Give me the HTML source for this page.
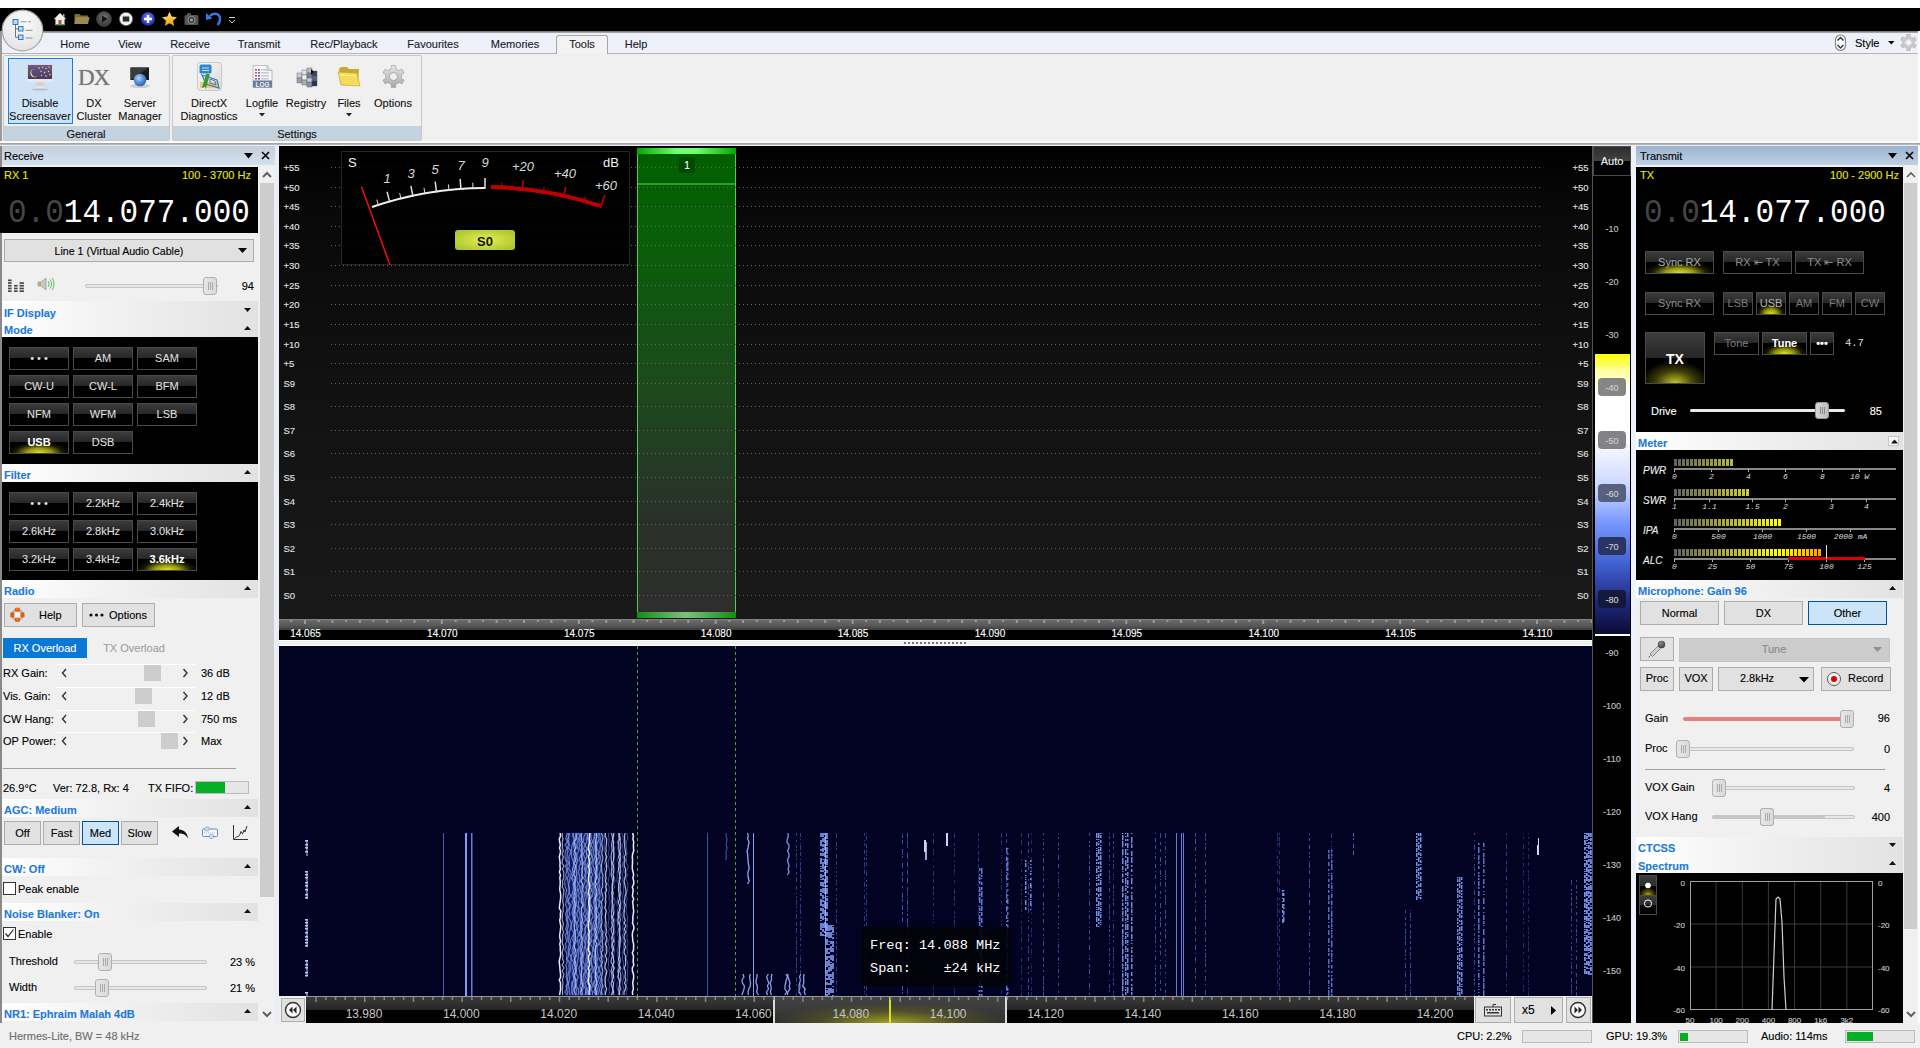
<!DOCTYPE html>
<html><head><meta charset="utf-8"><style>
html,body{margin:0;padding:0;}
body{width:1920px;height:1048px;overflow:hidden;position:relative;background:#f0f0f0;font-family:"Liberation Sans",sans-serif;}
div{position:absolute;}
</style></head><body>
<div style="left:0px;top:0px;width:1920px;height:8px;background:#fff"></div>
<div style="left:0px;top:8px;width:1920px;height:23px;background:#000"></div>
<svg style="position:absolute;left:52px;top:11px;" width="16" height="16" viewBox="0 0 16 16"><path d="M2 8 L8 2 L14 8 L12.5 8 L12.5 14 L3.5 14 L3.5 8 Z" fill="#eee" stroke="#999" stroke-width="0.6"/><rect x="6.5" y="9" width="3" height="5" fill="#c8501e"/><rect x="11" y="3" width="1.5" height="3" fill="#aaa"/><path d="M4 13.5 h8" stroke="#4a4" stroke-width="1"/></svg>
<svg style="position:absolute;left:74px;top:12px;" width="16" height="13" viewBox="0 0 16 13"><path d="M0.5 2 h5 l1.5 1.5 h7 v8.5 h-13.5z" fill="#7a6a3a"/><path d="M1.5 5 h14 l-1.5 7 h-13.5z" fill="#9c8a50"/></svg>
<svg style="position:absolute;left:96px;top:11px;" width="16" height="16" viewBox="0 0 16 16"><defs><radialGradient id="gp" cx="0.5" cy="0.4" r="0.6"><stop offset="0" stop-color="#777"/><stop offset="1" stop-color="#333"/></radialGradient></defs><circle cx="8" cy="8" r="7.3" fill="url(#gp)" stroke="#555" stroke-width="0.8"/><path d="M6 4.5 L11.5 8 L6 11.5z" fill="#111"/></svg>
<svg style="position:absolute;left:118px;top:11px;" width="16" height="16" viewBox="0 0 16 16"><circle cx="8" cy="8" r="7.2" fill="#555"/><circle cx="8" cy="8" r="6.2" fill="#fafafa"/><circle cx="8" cy="8" r="4.6" fill="#e8e8e8"/><rect x="4.8" y="5.5" width="6.4" height="5" fill="#2a2a2a"/></svg>
<svg style="position:absolute;left:140px;top:11px;" width="16" height="16" viewBox="0 0 16 16"><defs><radialGradient id="gb" cx="0.5" cy="0.35" r="0.65"><stop offset="0" stop-color="#6a7cff"/><stop offset="1" stop-color="#1a2aa8"/></radialGradient></defs><circle cx="8" cy="8" r="6.8" fill="url(#gb)"/><path d="M8 4 v8 M4 8 h8" stroke="#fff" stroke-width="2.4"/></svg>
<svg style="position:absolute;left:161px;top:11px;" width="17" height="16" viewBox="0 0 17 16"><defs><linearGradient id="gs" x1="0" y1="0" x2="0" y2="1"><stop offset="0" stop-color="#ffe680"/><stop offset="1" stop-color="#f0a000"/></linearGradient></defs><path d="M8.5 0.8 L10.7 5.6 L16 6.2 L12 9.7 L13.2 15 L8.5 12.3 L3.8 15 L5 9.7 L1 6.2 L6.3 5.6z" fill="url(#gs)"/></svg>
<svg style="position:absolute;left:184px;top:12px;" width="16" height="14" viewBox="0 0 16 14"><rect x="0.5" y="3" width="14" height="10" rx="1.5" fill="#555"/><rect x="3" y="1.2" width="4" height="2.5" fill="#555"/><circle cx="7.5" cy="8" r="3.6" fill="#333" stroke="#999" stroke-width="1"/><circle cx="7.5" cy="8" r="1.6" fill="#8ab"/></svg>
<svg style="position:absolute;left:205px;top:10px;" width="18" height="18" viewBox="0 0 18 18"><path d="M5 6 C8 2.5 15 3 15 9 C15 12 13.5 14 12.5 15" fill="none" stroke="#3a78e8" stroke-width="2.4"/><path d="M1 3 L1 10 L7.5 8.5z" fill="#3a78e8"/></svg>
<svg style="position:absolute;left:228px;top:16px;" width="8" height="8" viewBox="0 0 8 8"><path d="M1 1.5 h6" stroke="#ccc" stroke-width="1"/><path d="M1 4 L4 7 L7 4" fill="none" stroke="#ccc" stroke-width="1"/></svg>
<div style="left:0px;top:31px;width:1920px;height:23px;background:linear-gradient(#eceef8,#f0f2fb);"></div>
<div style="left:0px;top:31px;width:157px;height:2px;background:linear-gradient(#707070,#b0b0b0)"></div>
<div style="left:157px;top:31px;width:1761px;height:2px;background:linear-gradient(#6a6a6a,#b8b8b8)"></div>
<div style="left:0px;top:53px;width:1920px;height:1px;background:#b4b4b4"></div>
<div style="left:0px;top:31px;width:2px;height:113px;background:#9a9a9a"></div>
<svg style="position:absolute;left:1px;top:9px;" width="43" height="43" viewBox="0 0 43 43"><defs><radialGradient id="gc" cx="0.5" cy="0.3" r="0.7"><stop offset="0" stop-color="#fbfbfb"/><stop offset="1" stop-color="#e4e4e4"/></radialGradient></defs><circle cx="21.5" cy="21.5" r="20.3" fill="url(#gc)" stroke="#a8a8a8" stroke-width="1.2"/><g stroke="#2a7ad0" fill="#bcd8f4" stroke-width="1"><rect x="12" y="10.5" width="5" height="5"/><rect x="17.5" y="17.5" width="4.5" height="4.5"/><rect x="17.5" y="26" width="4.5" height="4.5"/></g><path d="M14.5 15.5 V28.3 H17.5 M14.5 19.8 H17.5" fill="none" stroke="#555" stroke-width="0.8"/><path d="M19.5 12.8 h6 M27 12.8 h3 M24.5 21.3 h7 M24.5 29 h7" stroke="#777" stroke-width="0.8"/></svg>
<div style="left:556px;top:35px;width:52px;height:19px;background:#f3f3f3;border:1px solid #a6a6a6;border-bottom:none;border-radius:3px 3px 0 0;box-sizing:border-box"></div>
<div style="left:557px;top:53px;width:50px;height:1px;background:#f3f3f3"></div>
<div style="left:25.0px;top:38px;width:100px;text-align:center;font-size:11px;line-height:13px;color:#1a1a2a;font-weight:400;font-family:'Liberation Sans';white-space:nowrap;-webkit-text-stroke:0.12px;">Home</div>
<div style="left:80.0px;top:38px;width:100px;text-align:center;font-size:11px;line-height:13px;color:#1a1a2a;font-weight:400;font-family:'Liberation Sans';white-space:nowrap;-webkit-text-stroke:0.12px;">View</div>
<div style="left:140.0px;top:38px;width:100px;text-align:center;font-size:11px;line-height:13px;color:#1a1a2a;font-weight:400;font-family:'Liberation Sans';white-space:nowrap;-webkit-text-stroke:0.12px;">Receive</div>
<div style="left:209.0px;top:38px;width:100px;text-align:center;font-size:11px;line-height:13px;color:#1a1a2a;font-weight:400;font-family:'Liberation Sans';white-space:nowrap;-webkit-text-stroke:0.12px;">Transmit</div>
<div style="left:294.0px;top:38px;width:100px;text-align:center;font-size:11px;line-height:13px;color:#1a1a2a;font-weight:400;font-family:'Liberation Sans';white-space:nowrap;-webkit-text-stroke:0.12px;">Rec/Playback</div>
<div style="left:383.0px;top:38px;width:100px;text-align:center;font-size:11px;line-height:13px;color:#1a1a2a;font-weight:400;font-family:'Liberation Sans';white-space:nowrap;-webkit-text-stroke:0.12px;">Favourites</div>
<div style="left:465.0px;top:38px;width:100px;text-align:center;font-size:11px;line-height:13px;color:#1a1a2a;font-weight:400;font-family:'Liberation Sans';white-space:nowrap;-webkit-text-stroke:0.12px;">Memories</div>
<div style="left:532.0px;top:38px;width:100px;text-align:center;font-size:11px;line-height:13px;color:#1a1a2a;font-weight:400;font-family:'Liberation Sans';white-space:nowrap;-webkit-text-stroke:0.12px;">Tools</div>
<div style="left:586.0px;top:38px;width:100px;text-align:center;font-size:11px;line-height:13px;color:#1a1a2a;font-weight:400;font-family:'Liberation Sans';white-space:nowrap;-webkit-text-stroke:0.12px;">Help</div>
<svg style="position:absolute;left:1834px;top:34px;" width="13" height="18" viewBox="0 0 13 18"><rect x="1.5" y="1" width="10" height="15.5" rx="5" fill="#fbfbfb" stroke="#8a8a8a" stroke-width="1.2"/><path d="M3.5 6.5 L6.5 3.5 L9.5 6.5 M3.5 11 L6.5 14 L9.5 11" fill="none" stroke="#3a3a3a" stroke-width="1.5"/></svg>
<div style="left:1855px;top:37px;font-size:11px;line-height:13px;color:#000;font-weight:400;font-family:'Liberation Sans';white-space:nowrap;-webkit-text-stroke:0.12px;">Style</div>
<svg style="position:absolute;left:1888px;top:41px;" width="8" height="5" viewBox="0 0 8 5"><path d="M0 0 h6.5 l-3.25 3.5z" fill="#000"/></svg>
<svg style="position:absolute;left:1900px;top:34px;" width="17" height="17" viewBox="0 0 17 17"><polygon points="6.79,2.96 6.71,0.50 10.29,0.50 10.21,2.96 12.44,4.25 14.54,2.95 16.32,6.05 14.16,7.21 14.16,9.79 16.32,10.95 14.54,14.05 12.44,12.75 10.21,14.04 10.29,16.50 6.71,16.50 6.79,14.04 4.56,12.75 2.46,14.05 0.68,10.95 2.84,9.79 2.84,7.21 0.68,6.05 2.46,2.95 4.56,4.25" fill="#c8c8c8" stroke="#b0b0b0" stroke-width="0.6" stroke-linejoin="round"/><circle cx="8.5" cy="8.5" r="4.5" fill="#cfcfcf"/><path d="M8.5 5.2 L11.8 8.5 L8.5 11.8 L5.2 8.5z" fill="#f4f6fb"/></svg>
<div style="left:0px;top:54px;width:1918px;height:88px;background:#f0f0f0"></div>
<div style="left:0px;top:54px;width:2px;height:90px;background:#9a9a9a"></div>
<div style="left:1918px;top:31px;width:2px;height:113px;background:#fff"></div>
<div style="left:3px;top:55px;width:167px;height:86px;border:1px solid #c8c8c8;border-radius:2px;box-sizing:border-box;background:#f0f0f0"></div>
<div style="left:4px;top:126px;width:165px;height:14px;background:#c5d3e1"></div>
<div style="left:172px;top:55px;width:250px;height:86px;border:1px solid #c8c8c8;border-radius:2px;box-sizing:border-box;background:#f0f0f0"></div>
<div style="left:173px;top:126px;width:248px;height:14px;background:#c5d3e1"></div>
<div style="left:36.0px;top:128px;width:100px;text-align:center;font-size:11px;line-height:13px;color:#111;font-weight:400;font-family:'Liberation Sans';white-space:nowrap;-webkit-text-stroke:0.12px;">General</div>
<div style="left:247.0px;top:128px;width:100px;text-align:center;font-size:11px;line-height:13px;color:#111;font-weight:400;font-family:'Liberation Sans';white-space:nowrap;-webkit-text-stroke:0.12px;">Settings</div>
<div style="left:8px;top:58px;width:65px;height:66px;background:#cfe3f6;border:1px solid #1a7fe0;box-sizing:border-box"></div>
<div style="left:-10.0px;top:97px;width:100px;text-align:center;font-size:11px;line-height:13px;color:#111;font-weight:400;font-family:'Liberation Sans';white-space:nowrap;-webkit-text-stroke:0.12px;">Disable</div>
<div style="left:-10.0px;top:110px;width:100px;text-align:center;font-size:11px;line-height:13px;color:#111;font-weight:400;font-family:'Liberation Sans';white-space:nowrap;-webkit-text-stroke:0.12px;">Screensaver</div>
<div style="left:44.0px;top:97px;width:100px;text-align:center;font-size:11px;line-height:13px;color:#111;font-weight:400;font-family:'Liberation Sans';white-space:nowrap;-webkit-text-stroke:0.12px;">DX</div>
<div style="left:44.0px;top:110px;width:100px;text-align:center;font-size:11px;line-height:13px;color:#111;font-weight:400;font-family:'Liberation Sans';white-space:nowrap;-webkit-text-stroke:0.12px;">Cluster</div>
<div style="left:90.0px;top:97px;width:100px;text-align:center;font-size:11px;line-height:13px;color:#111;font-weight:400;font-family:'Liberation Sans';white-space:nowrap;-webkit-text-stroke:0.12px;">Server</div>
<div style="left:90.0px;top:110px;width:100px;text-align:center;font-size:11px;line-height:13px;color:#111;font-weight:400;font-family:'Liberation Sans';white-space:nowrap;-webkit-text-stroke:0.12px;">Manager</div>
<div style="left:159.0px;top:97px;width:100px;text-align:center;font-size:11px;line-height:13px;color:#111;font-weight:400;font-family:'Liberation Sans';white-space:nowrap;-webkit-text-stroke:0.12px;">DirectX</div>
<div style="left:159.0px;top:110px;width:100px;text-align:center;font-size:11px;line-height:13px;color:#111;font-weight:400;font-family:'Liberation Sans';white-space:nowrap;-webkit-text-stroke:0.12px;">Diagnostics</div>
<div style="left:212.0px;top:97px;width:100px;text-align:center;font-size:11px;line-height:13px;color:#111;font-weight:400;font-family:'Liberation Sans';white-space:nowrap;-webkit-text-stroke:0.12px;">Logfile</div>
<div style="left:256.0px;top:97px;width:100px;text-align:center;font-size:11px;line-height:13px;color:#111;font-weight:400;font-family:'Liberation Sans';white-space:nowrap;-webkit-text-stroke:0.12px;">Registry</div>
<div style="left:299.0px;top:97px;width:100px;text-align:center;font-size:11px;line-height:13px;color:#111;font-weight:400;font-family:'Liberation Sans';white-space:nowrap;-webkit-text-stroke:0.12px;">Files</div>
<div style="left:343.0px;top:97px;width:100px;text-align:center;font-size:11px;line-height:13px;color:#111;font-weight:400;font-family:'Liberation Sans';white-space:nowrap;-webkit-text-stroke:0.12px;">Options</div>
<svg style="position:absolute;left:259px;top:113px;" width="6" height="4" viewBox="0 0 6 4"><path d="M0 0h6l-3 3.5z" fill="#222"/></svg>
<svg style="position:absolute;left:346px;top:113px;" width="6" height="4" viewBox="0 0 6 4"><path d="M0 0h6l-3 3.5z" fill="#222"/></svg>
<svg style="position:absolute;left:26px;top:63px;" width="28" height="28" viewBox="0 0 28 28"><defs><linearGradient id="gscr" x1="0" y1="0" x2="0" y2="1"><stop offset="0" stop-color="#6a5a8a"/><stop offset="1" stop-color="#4a3a68"/></linearGradient></defs><rect x="1" y="1" width="26" height="17" fill="#d8d8d8"/><rect x="2" y="2" width="24" height="14" fill="url(#gscr)"/><rect x="1" y="16" width="26" height="3" fill="#e8e8e8"/><path d="M11 19 h6 l1 4 h-8z" fill="#d0d0d0"/><ellipse cx="14" cy="24.5" rx="6" ry="2.2" fill="#e4e4e4" stroke="#c8c8c8" stroke-width=".5"/><ellipse cx="14" cy="26.5" rx="9" ry="1.2" fill="#000" opacity=".12"/><path d="M7.5 6 A4.2 4.2 0 1 0 11.5 13 A3.4 3.4 0 1 1 7.5 6z" fill="#e8e060"/><g fill="#e8e060"><circle cx="13" cy="5" r=".8"/><circle cx="16.5" cy="4.2" r=".7"/><circle cx="20" cy="5.5" r=".8"/><circle cx="23" cy="4" r=".7"/><circle cx="15" cy="8.5" r=".7"/><circle cx="18.5" cy="9.5" r=".8"/><circle cx="22.5" cy="8.5" r=".7"/><circle cx="15.5" cy="12.5" r=".7"/><circle cx="20" cy="13" r=".8"/><circle cx="24" cy="11.5" r=".7"/></g></svg>
<div style="left:78px;top:65px;font-size:23px;line-height:26px;color:#777;font-weight:400;font-family:'Liberation Serif';white-space:nowrap;letter-spacing:-1px;text-shadow:0 0 1px #aaa;">DX</div>
<svg style="position:absolute;left:128px;top:66px;" width="24" height="24" viewBox="0 0 24 24"><ellipse cx="12" cy="20" rx="10" ry="2" fill="#000" opacity=".15"/><rect x="2.5" y="1.5" width="18.5" height="12.5" fill="#1a1a1a"/><path d="M2.5 1.5 h18.5 l-18.5 12.5z" fill="#3a3a3a"/><defs><radialGradient id="gglobe" cx="0.4" cy="0.35" r="0.7"><stop offset="0" stop-color="#b8d8f8"/><stop offset="0.5" stop-color="#5a90d8"/><stop offset="1" stop-color="#2a5aa8"/></radialGradient></defs><circle cx="12" cy="14" r="6.3" fill="url(#gglobe)"/></svg>
<svg style="position:absolute;left:197px;top:62px;" width="25" height="29" viewBox="0 0 25 29"><defs><linearGradient id="gdx" x1="0" y1="0" x2="1" y2="1"><stop offset="0" stop-color="#f8f8f8"/><stop offset="1" stop-color="#dcdcdc"/></linearGradient></defs><rect x="0.5" y="0.5" width="24" height="28" rx="3" fill="url(#gdx)" stroke="#c8c8c8"/><path d="M3 20 h19 v6 h-19z" fill="#f4c878"/><rect x="2.5" y="2.5" width="12" height="9" rx="1.5" fill="#2f88cc"/><path d="M5 6 h7 M5 8.5 h7" stroke="#cfe4f4" stroke-width="1"/><path d="M5 13 L20 18 L22 26 L9 22z" fill="none" stroke="#3a78c0" stroke-width="1.2"/><path d="M13 17 L18 19 L19 23 L13 21z" fill="none" stroke="#3a78c0" stroke-width="1"/><path d="M7 26 L11 12" stroke="#3a9a3a" stroke-width="4"/><path d="M6 28 L7 25 L8.5 25.5z" fill="#fff"/></svg>
<svg style="position:absolute;left:252px;top:65px;" width="21" height="23" viewBox="0 0 21 23"><path d="M1 0.5 h14 l5 5 v17 h-19z" fill="#f6f6f6" stroke="#b0b0b0" stroke-width=".8"/><path d="M15 0.5 v5 h5" fill="#ddd" stroke="#b0b0b0" stroke-width=".8"/><rect x="3" y="4" width="2" height="1.6" fill="#d05050"/><rect x="6" y="4" width="2" height="1.6" fill="#4a6ad0"/><rect x="9" y="4" width="8" height="1.6" fill="#c8ccd8"/><rect x="3" y="7" width="2" height="1.6" fill="#d05050"/><rect x="6" y="7" width="2" height="1.6" fill="#4a6ad0"/><rect x="9" y="7" width="8" height="1.6" fill="#c8ccd8"/><rect x="3" y="10" width="2" height="1.6" fill="#d05050"/><rect x="6" y="10" width="2" height="1.6" fill="#4a6ad0"/><rect x="9" y="10" width="8" height="1.6" fill="#c8ccd8"/><rect x="3" y="13" width="2" height="1.6" fill="#d05050"/><rect x="6" y="13" width="2" height="1.6" fill="#4a6ad0"/><rect x="9" y="13" width="8" height="1.6" fill="#c8ccd8"/><rect x="1" y="15.5" width="19" height="7" fill="#6a7c96"/><text x="10.5" y="21.5" font-size="6.5" fill="#eef" text-anchor="middle" font-family="Liberation Sans" font-weight="700">LOG</text></svg>
<svg style="position:absolute;left:295px;top:65px;" width="23" height="23" viewBox="0 0 23 23"><rect x="2" y="8" width="5" height="5" fill="#c8ccd4" stroke="#555" stroke-width="0.4"/><rect x="7" y="5" width="5" height="5" fill="#dfe2e8" stroke="#555" stroke-width="0.4"/><rect x="12" y="3" width="5" height="5" fill="#b8bcc8" stroke="#555" stroke-width="0.4"/><rect x="2" y="13" width="5" height="5" fill="#9aa0b0" stroke="#555" stroke-width="0.4"/><rect x="7" y="10" width="5" height="5" fill="#eef0f4" stroke="#555" stroke-width="0.4"/><rect x="12" y="8" width="5" height="5" fill="#7a8498" stroke="#555" stroke-width="0.4"/><rect x="17" y="6" width="5" height="5" fill="#3a4660" stroke="#555" stroke-width="0.4"/><rect x="7" y="15" width="5" height="5" fill="#a8aebc" stroke="#555" stroke-width="0.4"/><rect x="12" y="13" width="5" height="5" fill="#c8ccd8" stroke="#555" stroke-width="0.4"/><rect x="17" y="11" width="5" height="5" fill="#5a6680" stroke="#555" stroke-width="0.4"/><rect x="12" y="17" width="5" height="5" fill="#8a92a6" stroke="#555" stroke-width="0.4"/><rect x="17" y="16" width="5" height="5" fill="#2a3450" stroke="#555" stroke-width="0.4"/><path d="M16 4 l3 3 -3 3z" fill="#111"/></svg>
<svg style="position:absolute;left:337px;top:66px;" width="24" height="21" viewBox="0 0 24 21"><path d="M2 3 l2-2 h6 l2 2 h10 l-1 14 h-18z" fill="#c8a830"/><path d="M1 6 l19 1 l3 13 l-19 -1z" fill="#f4dc58" stroke="#c8a020" stroke-width=".6"/><path d="M3 9 l16 0.8" stroke="#fff3a0" stroke-width="1"/></svg>
<svg style="position:absolute;left:382px;top:65px;" width="23" height="23" viewBox="0 0 23 23"><defs><linearGradient id="gg" x1="0" y1="0" x2="0" y2="1"><stop offset="0" stop-color="#e4e4e4"/><stop offset="1" stop-color="#a8a8a8"/></linearGradient></defs><polygon points="9.23,3.62 9.27,0.52 13.73,0.52 13.77,3.62 17.19,5.60 19.89,4.08 22.12,7.94 19.46,9.52 19.46,13.48 22.12,15.06 19.89,18.92 17.19,17.40 13.77,19.38 13.73,22.48 9.27,22.48 9.23,19.38 5.81,17.40 3.11,18.92 0.88,15.06 3.54,13.48 3.54,9.52 0.88,7.94 3.11,4.08 5.81,5.60" fill="url(#gg)" stroke="#9a9a9a" stroke-width="0.6" stroke-linejoin="round"/><circle cx="11.5" cy="11.5" r="4" fill="#f0f0f0" stroke="#999" stroke-width="0.8"/></svg>
<div style="left:0px;top:141px;width:1918px;height:2px;background:#fbfbfb"></div>
<div style="left:0px;top:143px;width:1920px;height:2px;background:linear-gradient(#9c9c9c,#c0c0c0)"></div>
<div style="left:0px;top:145px;width:1920px;height:1px;background:#e8ecf7"></div>
<div style="left:0px;top:146px;width:279px;height:877px;background:#f0f0f0"></div>
<div style="left:275px;top:146px;width:4px;height:877px;background:#e9edf8"></div>
<div style="left:0px;top:146px;width:2px;height:877px;background:#8a8a8a"></div>
<div style="left:2px;top:146px;width:273px;height:19px;background:linear-gradient(#c4cfdb,#d3e0ef)"></div>
<div style="left:4px;top:150px;font-size:11px;line-height:13px;color:#000;font-weight:400;font-family:'Liberation Sans';white-space:nowrap;-webkit-text-stroke:0.12px;">Receive</div>
<svg style="position:absolute;left:244px;top:153px;" width="9" height="6" viewBox="0 0 9 6"><path d="M0 0h9l-4.5 5.5z" fill="#000"/></svg>
<svg style="position:absolute;left:261px;top:151px;" width="9" height="9" viewBox="0 0 9 9"><path d="M1 1L8 8M8 1L1 8" stroke="#000" stroke-width="1.6"/></svg>
<div style="left:0px;top:167px;width:258px;height:66px;background:#000"></div>
<div style="left:4px;top:169px;font-size:11px;line-height:13px;color:#e6e600;font-weight:400;font-family:'Liberation Sans';white-space:nowrap;-webkit-text-stroke:0.12px;">RX 1</div>
<div style="left:-49px;top:169px;width:300px;text-align:right;font-size:11px;line-height:13px;color:#e6e600;font-weight:400;font-family:'Liberation Sans';white-space:nowrap;-webkit-text-stroke:0.12px;">100 - 3700 Hz</div>
<div style="left:8px;top:196px;font-size:31px;line-height:36px;color:#fff;font-weight:400;font-family:'Liberation Mono';white-space:nowrap;transform:scaleY(1.08);transform-origin:0 29px;"><span style="color:#454545">0.0</span>14.077.000</div>
<div style="left:258px;top:167px;width:17px;height:856px;background:#f0f0f0"></div>
<svg style="position:absolute;left:262px;top:171px;" width="10" height="7" viewBox="0 0 10 7"><path d="M1 6 L5 2 L9 6" fill="none" stroke="#606060" stroke-width="2"/></svg>
<div style="left:260px;top:183px;width:14px;height:714px;background:#cdcdcd"></div>
<svg style="position:absolute;left:262px;top:1011px;" width="10" height="7" viewBox="0 0 10 7"><path d="M1 1 L5 5 L9 1" fill="none" stroke="#606060" stroke-width="2"/></svg>
<div style="left:4px;top:239px;width:250px;height:23px;background:#e1e1e1;border:1px solid #adadad;box-sizing:border-box"></div>
<div style="left:-1.0px;top:245px;width:240px;text-align:center;font-size:10.6px;line-height:12px;color:#000;font-weight:400;font-family:'Liberation Sans';white-space:nowrap;-webkit-text-stroke:0.12px;">Line 1 (Virtual Audio Cable)</div>
<svg style="position:absolute;left:238px;top:248px;" width="9" height="6" viewBox="0 0 9 6"><path d="M0 0h9l-4.5 5z" fill="#000"/></svg>
<svg style="position:absolute;left:7px;top:279px;" width="18" height="14" viewBox="0 0 18 14"><rect x="1" y="0.5" width="3.6" height="1.7" fill="#4a4a4a"/><rect x="1" y="3.2" width="3.6" height="1.7" fill="#4a4a4a"/><rect x="1" y="5.9" width="3.6" height="1.7" fill="#4a4a4a"/><rect x="1" y="8.6" width="3.6" height="1.7" fill="#4a4a4a"/><rect x="1" y="11.3" width="3.6" height="1.7" fill="#4a4a4a"/><rect x="7" y="5.9" width="3.6" height="1.7" fill="#4a4a4a"/><rect x="7" y="8.6" width="3.6" height="1.7" fill="#4a4a4a"/><rect x="7" y="11.3" width="3.6" height="1.7" fill="#4a4a4a"/><rect x="12.5" y="3.2" width="4.4" height="1.7" fill="#4a4a4a"/><rect x="12.5" y="5.9" width="4.4" height="1.7" fill="#4a4a4a"/><rect x="12.5" y="8.6" width="4.4" height="1.7" fill="#4a4a4a"/><rect x="12.5" y="11.3" width="4.4" height="1.7" fill="#4a4a4a"/></svg>
<svg style="position:absolute;left:37px;top:276px;" width="18" height="16" viewBox="0 0 18 16"><path d="M1 6h3l5-4v12l-5-4H1z" fill="#c8c8c8" stroke="#888" stroke-width=".6"/><path d="M2 6.5h2v3H2z" fill="#d4a020"/><path d="M11 5c1.2 1.5 1.2 4.5 0 6M13 3.5c2 2.3 2 6.7 0 9M15 2c2.6 3 2.6 9 0 12" fill="none" stroke="#5ac05a" stroke-width="1"/></svg>
<div style="left:85px;top:284px;width:133px;height:4px;background:#e7e7e7;border:1px solid #c4c4c4;border-radius:2px;box-sizing:border-box"></div>
<div style="left:203px;top:277px;width:14px;height:18px;background:linear-gradient(90deg,#e6e6e6,#dadada);border:1px solid #b0b0b0;border-radius:3px;box-sizing:border-box"><div style="left:4px;top:4px;width:1px;height:8px;background:#aaa"></div><div style="left:6px;top:4px;width:1px;height:8px;background:#aaa"></div><div style="left:8px;top:4px;width:1px;height:8px;background:#aaa"></div></div>
<div style="left:-46px;top:280px;width:300px;text-align:right;font-size:11px;line-height:13px;color:#000;font-weight:400;font-family:'Liberation Sans';white-space:nowrap;-webkit-text-stroke:0.12px;">94</div>
<div style="left:2px;top:301px;width:256px;height:19px;background:linear-gradient(90deg,#ffffff 0%,#f2f2f2 40%,#e2e2e2 100%)"></div>
<div style="left:4px;top:307px;font-size:11px;line-height:13px;color:#1e7ad8;font-weight:700;font-family:'Liberation Sans';white-space:nowrap;-webkit-text-stroke:0.12px;">IF Display</div>
<svg style="position:absolute;left:244px;top:307.5px;" width="7" height="5" viewBox="0 0 7 5"><path d="M0 0 L3.5 4 L7 0z" fill="#111"/></svg>
<div style="left:2px;top:320px;width:256px;height:17px;background:linear-gradient(90deg,#ffffff 0%,#f2f2f2 40%,#e2e2e2 100%)"></div>
<div style="left:4px;top:324px;font-size:11px;line-height:13px;color:#1e7ad8;font-weight:700;font-family:'Liberation Sans';white-space:nowrap;-webkit-text-stroke:0.12px;">Mode</div>
<svg style="position:absolute;left:244px;top:325.5px;" width="7" height="5" viewBox="0 0 7 5"><path d="M0 4 L3.5 0 L7 4z" fill="#111"/></svg>
<div style="left:2px;top:337px;width:256px;height:127px;background:#000"></div>
<div style="left:9px;top:347px;width:60px;height:23px;background:#000;border:1px solid #4a4a4a;box-sizing:border-box;overflow:hidden"><div style="left:0;top:0;width:58px;height:10px;background:linear-gradient(#3c3c3c,#262626)"></div></div>
<div style="left:9.0px;top:351.5px;width:60px;text-align:center;font-size:11px;line-height:13px;color:#e0e0e0;font-weight:400;font-family:'Liberation Sans';white-space:nowrap;-webkit-text-stroke:0.12px;-webkit-text-stroke:0.05px;">• • •</div>
<div style="left:73px;top:347px;width:60px;height:23px;background:#000;border:1px solid #4a4a4a;box-sizing:border-box;overflow:hidden"><div style="left:0;top:0;width:58px;height:10px;background:linear-gradient(#3c3c3c,#262626)"></div></div>
<div style="left:73.0px;top:351.5px;width:60px;text-align:center;font-size:11px;line-height:13px;color:#e0e0e0;font-weight:400;font-family:'Liberation Sans';white-space:nowrap;-webkit-text-stroke:0.12px;-webkit-text-stroke:0.05px;">AM</div>
<div style="left:137px;top:347px;width:60px;height:23px;background:#000;border:1px solid #4a4a4a;box-sizing:border-box;overflow:hidden"><div style="left:0;top:0;width:58px;height:10px;background:linear-gradient(#3c3c3c,#262626)"></div></div>
<div style="left:137.0px;top:351.5px;width:60px;text-align:center;font-size:11px;line-height:13px;color:#e0e0e0;font-weight:400;font-family:'Liberation Sans';white-space:nowrap;-webkit-text-stroke:0.12px;-webkit-text-stroke:0.05px;">SAM</div>
<div style="left:9px;top:375px;width:60px;height:23px;background:#000;border:1px solid #4a4a4a;box-sizing:border-box;overflow:hidden"><div style="left:0;top:0;width:58px;height:10px;background:linear-gradient(#3c3c3c,#262626)"></div></div>
<div style="left:9.0px;top:379.5px;width:60px;text-align:center;font-size:11px;line-height:13px;color:#e0e0e0;font-weight:400;font-family:'Liberation Sans';white-space:nowrap;-webkit-text-stroke:0.12px;-webkit-text-stroke:0.05px;">CW-U</div>
<div style="left:73px;top:375px;width:60px;height:23px;background:#000;border:1px solid #4a4a4a;box-sizing:border-box;overflow:hidden"><div style="left:0;top:0;width:58px;height:10px;background:linear-gradient(#3c3c3c,#262626)"></div></div>
<div style="left:73.0px;top:379.5px;width:60px;text-align:center;font-size:11px;line-height:13px;color:#e0e0e0;font-weight:400;font-family:'Liberation Sans';white-space:nowrap;-webkit-text-stroke:0.12px;-webkit-text-stroke:0.05px;">CW-L</div>
<div style="left:137px;top:375px;width:60px;height:23px;background:#000;border:1px solid #4a4a4a;box-sizing:border-box;overflow:hidden"><div style="left:0;top:0;width:58px;height:10px;background:linear-gradient(#3c3c3c,#262626)"></div></div>
<div style="left:137.0px;top:379.5px;width:60px;text-align:center;font-size:11px;line-height:13px;color:#e0e0e0;font-weight:400;font-family:'Liberation Sans';white-space:nowrap;-webkit-text-stroke:0.12px;-webkit-text-stroke:0.05px;">BFM</div>
<div style="left:9px;top:403px;width:60px;height:23px;background:#000;border:1px solid #4a4a4a;box-sizing:border-box;overflow:hidden"><div style="left:0;top:0;width:58px;height:10px;background:linear-gradient(#3c3c3c,#262626)"></div></div>
<div style="left:9.0px;top:407.5px;width:60px;text-align:center;font-size:11px;line-height:13px;color:#e0e0e0;font-weight:400;font-family:'Liberation Sans';white-space:nowrap;-webkit-text-stroke:0.12px;-webkit-text-stroke:0.05px;">NFM</div>
<div style="left:73px;top:403px;width:60px;height:23px;background:#000;border:1px solid #4a4a4a;box-sizing:border-box;overflow:hidden"><div style="left:0;top:0;width:58px;height:10px;background:linear-gradient(#3c3c3c,#262626)"></div></div>
<div style="left:73.0px;top:407.5px;width:60px;text-align:center;font-size:11px;line-height:13px;color:#e0e0e0;font-weight:400;font-family:'Liberation Sans';white-space:nowrap;-webkit-text-stroke:0.12px;-webkit-text-stroke:0.05px;">WFM</div>
<div style="left:137px;top:403px;width:60px;height:23px;background:#000;border:1px solid #4a4a4a;box-sizing:border-box;overflow:hidden"><div style="left:0;top:0;width:58px;height:10px;background:linear-gradient(#3c3c3c,#262626)"></div></div>
<div style="left:137.0px;top:407.5px;width:60px;text-align:center;font-size:11px;line-height:13px;color:#e0e0e0;font-weight:400;font-family:'Liberation Sans';white-space:nowrap;-webkit-text-stroke:0.12px;-webkit-text-stroke:0.05px;">LSB</div>
<div style="left:9px;top:431px;width:60px;height:23px;background:#000;border:1px solid #4a4a4a;box-sizing:border-box;overflow:hidden"><div style="left:0;top:0;width:58px;height:10px;background:linear-gradient(#3c3c3c,#262626)"></div><div style="left:0;top:0;width:58px;height:21px;background:radial-gradient(ellipse 31.200000000000003px 11.5px at 50% 100%, rgba(225,225,40,1) 0%, rgba(190,190,25,0.8) 40%, rgba(90,90,0,0.3) 75%, rgba(0,0,0,0) 100%)"></div></div>
<div style="left:9.0px;top:435.5px;width:60px;text-align:center;font-size:11px;line-height:13px;color:#fff;font-weight:700;font-family:'Liberation Sans';white-space:nowrap;-webkit-text-stroke:0.12px;-webkit-text-stroke:0.05px;">USB</div>
<div style="left:73px;top:431px;width:60px;height:23px;background:#000;border:1px solid #4a4a4a;box-sizing:border-box;overflow:hidden"><div style="left:0;top:0;width:58px;height:10px;background:linear-gradient(#3c3c3c,#262626)"></div></div>
<div style="left:73.0px;top:435.5px;width:60px;text-align:center;font-size:11px;line-height:13px;color:#e0e0e0;font-weight:400;font-family:'Liberation Sans';white-space:nowrap;-webkit-text-stroke:0.12px;-webkit-text-stroke:0.05px;">DSB</div>
<div style="left:2px;top:464px;width:256px;height:18px;background:linear-gradient(90deg,#ffffff 0%,#f2f2f2 40%,#e2e2e2 100%)"></div>
<div style="left:4px;top:469px;font-size:11px;line-height:13px;color:#1e7ad8;font-weight:700;font-family:'Liberation Sans';white-space:nowrap;-webkit-text-stroke:0.12px;">Filter</div>
<svg style="position:absolute;left:244px;top:470.0px;" width="7" height="5" viewBox="0 0 7 5"><path d="M0 4 L3.5 0 L7 4z" fill="#111"/></svg>
<div style="left:2px;top:482px;width:256px;height:98px;background:#000"></div>
<div style="left:9px;top:492px;width:60px;height:23px;background:#000;border:1px solid #4a4a4a;box-sizing:border-box;overflow:hidden"><div style="left:0;top:0;width:58px;height:10px;background:linear-gradient(#3c3c3c,#262626)"></div></div>
<div style="left:9.0px;top:496.5px;width:60px;text-align:center;font-size:11px;line-height:13px;color:#e0e0e0;font-weight:400;font-family:'Liberation Sans';white-space:nowrap;-webkit-text-stroke:0.12px;-webkit-text-stroke:0.05px;">• • •</div>
<div style="left:73px;top:492px;width:60px;height:23px;background:#000;border:1px solid #4a4a4a;box-sizing:border-box;overflow:hidden"><div style="left:0;top:0;width:58px;height:10px;background:linear-gradient(#3c3c3c,#262626)"></div></div>
<div style="left:73.0px;top:496.5px;width:60px;text-align:center;font-size:11px;line-height:13px;color:#e0e0e0;font-weight:400;font-family:'Liberation Sans';white-space:nowrap;-webkit-text-stroke:0.12px;-webkit-text-stroke:0.05px;">2.2kHz</div>
<div style="left:137px;top:492px;width:60px;height:23px;background:#000;border:1px solid #4a4a4a;box-sizing:border-box;overflow:hidden"><div style="left:0;top:0;width:58px;height:10px;background:linear-gradient(#3c3c3c,#262626)"></div></div>
<div style="left:137.0px;top:496.5px;width:60px;text-align:center;font-size:11px;line-height:13px;color:#e0e0e0;font-weight:400;font-family:'Liberation Sans';white-space:nowrap;-webkit-text-stroke:0.12px;-webkit-text-stroke:0.05px;">2.4kHz</div>
<div style="left:9px;top:520px;width:60px;height:23px;background:#000;border:1px solid #4a4a4a;box-sizing:border-box;overflow:hidden"><div style="left:0;top:0;width:58px;height:10px;background:linear-gradient(#3c3c3c,#262626)"></div></div>
<div style="left:9.0px;top:524.5px;width:60px;text-align:center;font-size:11px;line-height:13px;color:#e0e0e0;font-weight:400;font-family:'Liberation Sans';white-space:nowrap;-webkit-text-stroke:0.12px;-webkit-text-stroke:0.05px;">2.6kHz</div>
<div style="left:73px;top:520px;width:60px;height:23px;background:#000;border:1px solid #4a4a4a;box-sizing:border-box;overflow:hidden"><div style="left:0;top:0;width:58px;height:10px;background:linear-gradient(#3c3c3c,#262626)"></div></div>
<div style="left:73.0px;top:524.5px;width:60px;text-align:center;font-size:11px;line-height:13px;color:#e0e0e0;font-weight:400;font-family:'Liberation Sans';white-space:nowrap;-webkit-text-stroke:0.12px;-webkit-text-stroke:0.05px;">2.8kHz</div>
<div style="left:137px;top:520px;width:60px;height:23px;background:#000;border:1px solid #4a4a4a;box-sizing:border-box;overflow:hidden"><div style="left:0;top:0;width:58px;height:10px;background:linear-gradient(#3c3c3c,#262626)"></div></div>
<div style="left:137.0px;top:524.5px;width:60px;text-align:center;font-size:11px;line-height:13px;color:#e0e0e0;font-weight:400;font-family:'Liberation Sans';white-space:nowrap;-webkit-text-stroke:0.12px;-webkit-text-stroke:0.05px;">3.0kHz</div>
<div style="left:9px;top:548px;width:60px;height:23px;background:#000;border:1px solid #4a4a4a;box-sizing:border-box;overflow:hidden"><div style="left:0;top:0;width:58px;height:10px;background:linear-gradient(#3c3c3c,#262626)"></div></div>
<div style="left:9.0px;top:552.5px;width:60px;text-align:center;font-size:11px;line-height:13px;color:#e0e0e0;font-weight:400;font-family:'Liberation Sans';white-space:nowrap;-webkit-text-stroke:0.12px;-webkit-text-stroke:0.05px;">3.2kHz</div>
<div style="left:73px;top:548px;width:60px;height:23px;background:#000;border:1px solid #4a4a4a;box-sizing:border-box;overflow:hidden"><div style="left:0;top:0;width:58px;height:10px;background:linear-gradient(#3c3c3c,#262626)"></div></div>
<div style="left:73.0px;top:552.5px;width:60px;text-align:center;font-size:11px;line-height:13px;color:#e0e0e0;font-weight:400;font-family:'Liberation Sans';white-space:nowrap;-webkit-text-stroke:0.12px;-webkit-text-stroke:0.05px;">3.4kHz</div>
<div style="left:137px;top:548px;width:60px;height:23px;background:#000;border:1px solid #4a4a4a;box-sizing:border-box;overflow:hidden"><div style="left:0;top:0;width:58px;height:10px;background:linear-gradient(#3c3c3c,#262626)"></div><div style="left:0;top:0;width:58px;height:21px;background:radial-gradient(ellipse 31.200000000000003px 11.5px at 50% 100%, rgba(225,225,40,1) 0%, rgba(190,190,25,0.8) 40%, rgba(90,90,0,0.3) 75%, rgba(0,0,0,0) 100%)"></div></div>
<div style="left:137.0px;top:552.5px;width:60px;text-align:center;font-size:11px;line-height:13px;color:#fff;font-weight:700;font-family:'Liberation Sans';white-space:nowrap;-webkit-text-stroke:0.12px;-webkit-text-stroke:0.05px;">3.6kHz</div>
<div style="left:2px;top:580px;width:256px;height:18px;background:linear-gradient(90deg,#ffffff 0%,#f2f2f2 40%,#e2e2e2 100%)"></div>
<div style="left:4px;top:585px;font-size:11px;line-height:13px;color:#1e7ad8;font-weight:700;font-family:'Liberation Sans';white-space:nowrap;-webkit-text-stroke:0.12px;">Radio</div>
<svg style="position:absolute;left:244px;top:586.0px;" width="7" height="5" viewBox="0 0 7 5"><path d="M0 4 L3.5 0 L7 4z" fill="#111"/></svg>
<div style="left:4px;top:603px;width:73px;height:24px;background:#e1e1e1;border:1px solid #adadad;box-sizing:border-box;"></div>
<svg style="position:absolute;left:9px;top:606px;" width="17" height="17" viewBox="0 0 17 17"><circle cx="8.4" cy="8.9" r="5.3" fill="none" stroke="#a8a8a8" stroke-width="1.6"/><circle cx="8.4" cy="8.9" r="2.6" fill="#f4f4f4"/><g fill="#e06010"><rect x="5.8" y="1.8" width="5.2" height="4" rx="1.2"/><rect x="5.8" y="11.8" width="5.2" height="4" rx="1.2"/><rect x="1.3" y="6.3" width="4" height="5.2" rx="1.2"/><rect x="11.5" y="6.3" width="4" height="5.2" rx="1.2"/></g><g fill="#f4a060" opacity=".8"><rect x="6.8" y="2.5" width="3" height="1"/><rect x="6.8" y="12.8" width="3" height="1"/></g></svg>
<div style="left:39px;top:609px;font-size:11px;line-height:13px;color:#000;font-weight:400;font-family:'Liberation Sans';white-space:nowrap;-webkit-text-stroke:0.12px;">Help</div>
<div style="left:82px;top:603px;width:73px;height:24px;background:#e1e1e1;border:1px solid #adadad;box-sizing:border-box;"></div>
<svg style="position:absolute;left:88px;top:612px;" width="20" height="6" viewBox="0 0 20 6"><circle cx="3" cy="3" r="1.6" fill="#111"/><circle cx="8.5" cy="3" r="1.6" fill="#111"/><circle cx="14" cy="3" r="1.6" fill="#111"/></svg>
<div style="left:109px;top:609px;font-size:11px;line-height:13px;color:#000;font-weight:400;font-family:'Liberation Sans';white-space:nowrap;-webkit-text-stroke:0.12px;">Options</div>
<div style="left:3px;top:638px;width:84px;height:20px;background:#0a78d7"></div>
<div style="left:0.0px;top:642px;width:90px;text-align:center;font-size:11px;line-height:13px;color:#fff;font-weight:400;font-family:'Liberation Sans';white-space:nowrap;-webkit-text-stroke:0.12px;">RX Overload</div>
<div style="left:89.0px;top:642px;width:90px;text-align:center;font-size:11px;line-height:13px;color:#a0a0a0;font-weight:400;font-family:'Liberation Sans';white-space:nowrap;-webkit-text-stroke:0.12px;">TX Overload</div>
<div style="left:3px;top:667px;font-size:11px;line-height:13px;color:#000;font-weight:400;font-family:'Liberation Sans';white-space:nowrap;-webkit-text-stroke:0.12px;">RX Gain:</div>
<div style="left:57px;top:664px;width:138px;height:1px;background:#fff"></div>
<svg style="position:absolute;left:61px;top:668px;" width="7" height="10" viewBox="0 0 7 10"><path d="M5 1 L1.5 5 L5 9" fill="none" stroke="#333" stroke-width="1.4"/></svg>
<svg style="position:absolute;left:182px;top:668px;" width="7" height="10" viewBox="0 0 7 10"><path d="M1.5 1 L5 5 L1.5 9" fill="none" stroke="#333" stroke-width="1.4"/></svg>
<div style="left:144px;top:665px;width:17px;height:16px;background:#cdcdcd"></div>
<div style="left:201px;top:667px;font-size:11px;line-height:13px;color:#000;font-weight:400;font-family:'Liberation Sans';white-space:nowrap;-webkit-text-stroke:0.12px;">36 dB</div>
<div style="left:3px;top:690px;font-size:11px;line-height:13px;color:#000;font-weight:400;font-family:'Liberation Sans';white-space:nowrap;-webkit-text-stroke:0.12px;">Vis. Gain:</div>
<div style="left:57px;top:687px;width:138px;height:1px;background:#fff"></div>
<svg style="position:absolute;left:61px;top:691px;" width="7" height="10" viewBox="0 0 7 10"><path d="M5 1 L1.5 5 L5 9" fill="none" stroke="#333" stroke-width="1.4"/></svg>
<svg style="position:absolute;left:182px;top:691px;" width="7" height="10" viewBox="0 0 7 10"><path d="M1.5 1 L5 5 L1.5 9" fill="none" stroke="#333" stroke-width="1.4"/></svg>
<div style="left:135px;top:688px;width:17px;height:16px;background:#cdcdcd"></div>
<div style="left:201px;top:690px;font-size:11px;line-height:13px;color:#000;font-weight:400;font-family:'Liberation Sans';white-space:nowrap;-webkit-text-stroke:0.12px;">12 dB</div>
<div style="left:3px;top:713px;font-size:11px;line-height:13px;color:#000;font-weight:400;font-family:'Liberation Sans';white-space:nowrap;-webkit-text-stroke:0.12px;">CW Hang:</div>
<div style="left:57px;top:710px;width:138px;height:1px;background:#fff"></div>
<svg style="position:absolute;left:61px;top:714px;" width="7" height="10" viewBox="0 0 7 10"><path d="M5 1 L1.5 5 L5 9" fill="none" stroke="#333" stroke-width="1.4"/></svg>
<svg style="position:absolute;left:182px;top:714px;" width="7" height="10" viewBox="0 0 7 10"><path d="M1.5 1 L5 5 L1.5 9" fill="none" stroke="#333" stroke-width="1.4"/></svg>
<div style="left:138px;top:711px;width:17px;height:16px;background:#cdcdcd"></div>
<div style="left:201px;top:713px;font-size:11px;line-height:13px;color:#000;font-weight:400;font-family:'Liberation Sans';white-space:nowrap;-webkit-text-stroke:0.12px;">750 ms</div>
<div style="left:3px;top:735px;font-size:11px;line-height:13px;color:#000;font-weight:400;font-family:'Liberation Sans';white-space:nowrap;-webkit-text-stroke:0.12px;">OP Power:</div>
<div style="left:57px;top:732px;width:138px;height:1px;background:#fff"></div>
<svg style="position:absolute;left:61px;top:736px;" width="7" height="10" viewBox="0 0 7 10"><path d="M5 1 L1.5 5 L5 9" fill="none" stroke="#333" stroke-width="1.4"/></svg>
<svg style="position:absolute;left:182px;top:736px;" width="7" height="10" viewBox="0 0 7 10"><path d="M1.5 1 L5 5 L1.5 9" fill="none" stroke="#333" stroke-width="1.4"/></svg>
<div style="left:161px;top:733px;width:17px;height:16px;background:#cdcdcd"></div>
<div style="left:201px;top:735px;font-size:11px;line-height:13px;color:#000;font-weight:400;font-family:'Liberation Sans';white-space:nowrap;-webkit-text-stroke:0.12px;">Max</div>
<div style="left:3px;top:768px;width:233px;height:1px;background:#a0a0a0"></div>
<div style="left:3px;top:782px;font-size:11px;line-height:13px;color:#000;font-weight:400;font-family:'Liberation Sans';white-space:nowrap;-webkit-text-stroke:0.12px;">26.9°C</div>
<div style="left:53px;top:782px;font-size:11px;line-height:13px;color:#000;font-weight:400;font-family:'Liberation Sans';white-space:nowrap;-webkit-text-stroke:0.12px;">Ver: 72.8, Rx: 4</div>
<div style="left:148px;top:782px;font-size:11px;line-height:13px;color:#000;font-weight:400;font-family:'Liberation Sans';white-space:nowrap;-webkit-text-stroke:0.12px;">TX FIFO:</div>
<div style="left:195px;top:781px;width:54px;height:13px;background:#e6e6e6;border:1px solid #bcbcbc;box-sizing:border-box"></div>
<div style="left:196px;top:782px;width:29px;height:11px;background:#06b025"></div>
<div style="left:2px;top:799px;width:256px;height:18px;background:linear-gradient(90deg,#ffffff 0%,#f2f2f2 40%,#e2e2e2 100%)"></div>
<div style="left:4px;top:804px;font-size:11px;line-height:13px;color:#1e7ad8;font-weight:700;font-family:'Liberation Sans';white-space:nowrap;-webkit-text-stroke:0.12px;">AGC: Medium</div>
<svg style="position:absolute;left:244px;top:805.0px;" width="7" height="5" viewBox="0 0 7 5"><path d="M0 4 L3.5 0 L7 4z" fill="#111"/></svg>
<div style="left:4px;top:821px;width:37px;height:24px;background:#e1e1e1;border:1px solid #adadad;box-sizing:border-box;"></div>
<div style="left:4.0px;top:827px;width:37px;text-align:center;font-size:11px;line-height:13px;color:#000;font-weight:400;font-family:'Liberation Sans';white-space:nowrap;-webkit-text-stroke:0.12px;">Off</div>
<div style="left:43px;top:821px;width:37px;height:24px;background:#e1e1e1;border:1px solid #adadad;box-sizing:border-box;"></div>
<div style="left:43.0px;top:827px;width:37px;text-align:center;font-size:11px;line-height:13px;color:#000;font-weight:400;font-family:'Liberation Sans';white-space:nowrap;-webkit-text-stroke:0.12px;">Fast</div>
<div style="left:82px;top:821px;width:37px;height:24px;background:#cce4f7;border:1px solid #005499;box-sizing:border-box;"></div>
<div style="left:82.0px;top:827px;width:37px;text-align:center;font-size:11px;line-height:13px;color:#000;font-weight:400;font-family:'Liberation Sans';white-space:nowrap;-webkit-text-stroke:0.12px;">Med</div>
<div style="left:121px;top:821px;width:37px;height:24px;background:#e1e1e1;border:1px solid #adadad;box-sizing:border-box;"></div>
<div style="left:121.0px;top:827px;width:37px;text-align:center;font-size:11px;line-height:13px;color:#000;font-weight:400;font-family:'Liberation Sans';white-space:nowrap;-webkit-text-stroke:0.12px;">Slow</div>
<svg style="position:absolute;left:170px;top:823px;" width="20" height="18" viewBox="0 0 20 18"><path d="M9 3 L2 8.5 L9 14 V10.5 C13 10.5 16 11.5 18 15.5 C17.5 10 14 6.5 9 6.5z" fill="#111"/></svg>
<svg style="position:absolute;left:201px;top:826px;" width="18" height="14" viewBox="0 0 18 14"><rect x="1.5" y="3" width="15" height="7.5" rx="1" fill="#f4f6fa" stroke="#6a88b0" stroke-width="1"/><path d="M3 6.8 h12" stroke="#b8c4d4" stroke-width="1.2" stroke-dasharray="1 1"/><rect x="4" y="1" width="4" height="4" rx="1.2" fill="#c8daf0" stroke="#7a98c0" stroke-width=".6"/><rect x="8.5" y="8.5" width="4" height="4" rx="1.2" fill="#c8daf0" stroke="#7a98c0" stroke-width=".6"/></svg>
<svg style="position:absolute;left:231px;top:824px;" width="18" height="17" viewBox="0 0 18 17"><path d="M2.5 1 V15.5 H17" fill="none" stroke="#333" stroke-width="1"/><path d="M3.5 14.5 L5.5 13 L7 12.5 L8.5 11.5 L10 7.5 L11.5 10 L13 6 L14 8 L16 2" fill="none" stroke="#333" stroke-width="1"/></svg>
<div style="left:2px;top:858px;width:256px;height:18px;background:linear-gradient(90deg,#ffffff 0%,#f2f2f2 40%,#e2e2e2 100%)"></div>
<div style="left:4px;top:863px;font-size:11px;line-height:13px;color:#1e7ad8;font-weight:700;font-family:'Liberation Sans';white-space:nowrap;-webkit-text-stroke:0.12px;">CW: Off</div>
<svg style="position:absolute;left:244px;top:864.0px;" width="7" height="5" viewBox="0 0 7 5"><path d="M0 4 L3.5 0 L7 4z" fill="#111"/></svg>
<div style="left:3px;top:882px;width:13px;height:13px;background:#fff;border:1px solid #333;box-sizing:border-box"></div>
<div style="left:18px;top:883px;font-size:11px;line-height:13px;color:#000;font-weight:400;font-family:'Liberation Sans';white-space:nowrap;-webkit-text-stroke:0.12px;">Peak enable</div>
<div style="left:2px;top:903px;width:256px;height:18px;background:linear-gradient(90deg,#ffffff 0%,#f2f2f2 40%,#e2e2e2 100%)"></div>
<div style="left:4px;top:908px;font-size:11px;line-height:13px;color:#1e7ad8;font-weight:700;font-family:'Liberation Sans';white-space:nowrap;-webkit-text-stroke:0.12px;">Noise Blanker: On</div>
<svg style="position:absolute;left:244px;top:909.0px;" width="7" height="5" viewBox="0 0 7 5"><path d="M0 4 L3.5 0 L7 4z" fill="#111"/></svg>
<div style="left:3px;top:927px;width:13px;height:13px;background:#fff;border:1px solid #333;box-sizing:border-box"></div>
<svg style="position:absolute;left:3px;top:927px;" width="13" height="13" viewBox="0 0 13 13"><path d="M2.5 6.5 L5 9.5 L10.5 2.5" fill="none" stroke="#222" stroke-width="1.2"/></svg>
<div style="left:18px;top:928px;font-size:11px;line-height:13px;color:#000;font-weight:400;font-family:'Liberation Sans';white-space:nowrap;-webkit-text-stroke:0.12px;">Enable</div>
<div style="left:9px;top:955px;font-size:11px;line-height:13px;color:#000;font-weight:400;font-family:'Liberation Sans';white-space:nowrap;-webkit-text-stroke:0.12px;">Threshold</div>
<div style="left:74px;top:960px;width:133px;height:4px;background:#e7e7e7;border:1px solid #c4c4c4;border-radius:2px;box-sizing:border-box"></div>
<div style="left:98px;top:953px;width:14px;height:18px;background:linear-gradient(90deg,#e6e6e6,#dadada);border:1px solid #b0b0b0;border-radius:3px;box-sizing:border-box"><div style="left:4px;top:4px;width:1px;height:8px;background:#aaa"></div><div style="left:6px;top:4px;width:1px;height:8px;background:#aaa"></div><div style="left:8px;top:4px;width:1px;height:8px;background:#aaa"></div></div>
<div style="left:-45px;top:956px;width:300px;text-align:right;font-size:11px;line-height:13px;color:#000;font-weight:400;font-family:'Liberation Sans';white-space:nowrap;-webkit-text-stroke:0.12px;">23 %</div>
<div style="left:9px;top:981px;font-size:11px;line-height:13px;color:#000;font-weight:400;font-family:'Liberation Sans';white-space:nowrap;-webkit-text-stroke:0.12px;">Width</div>
<div style="left:74px;top:986px;width:133px;height:4px;background:#e7e7e7;border:1px solid #c4c4c4;border-radius:2px;box-sizing:border-box"></div>
<div style="left:95px;top:979px;width:14px;height:18px;background:linear-gradient(90deg,#e6e6e6,#dadada);border:1px solid #b0b0b0;border-radius:3px;box-sizing:border-box"><div style="left:4px;top:4px;width:1px;height:8px;background:#aaa"></div><div style="left:6px;top:4px;width:1px;height:8px;background:#aaa"></div><div style="left:8px;top:4px;width:1px;height:8px;background:#aaa"></div></div>
<div style="left:-45px;top:982px;width:300px;text-align:right;font-size:11px;line-height:13px;color:#000;font-weight:400;font-family:'Liberation Sans';white-space:nowrap;-webkit-text-stroke:0.12px;">21 %</div>
<div style="left:2px;top:1003px;width:256px;height:18px;background:linear-gradient(90deg,#ffffff 0%,#f2f2f2 40%,#e2e2e2 100%)"></div>
<div style="left:4px;top:1008px;font-size:11px;line-height:13px;color:#1e7ad8;font-weight:700;font-family:'Liberation Sans';white-space:nowrap;-webkit-text-stroke:0.12px;">NR1: Ephraim Malah 4dB</div>
<svg style="position:absolute;left:244px;top:1009.0px;" width="7" height="5" viewBox="0 0 7 5"><path d="M0 4 L3.5 0 L7 4z" fill="#111"/></svg>
<div style="left:279px;top:146px;width:1313px;height:473px;background:linear-gradient(#000 0%,#090909 15%,#131313 60%,#191919 100%)"></div>
<div style="left:283.5px;top:162px;font-size:9.5px;line-height:11px;color:#e4e4e4;font-weight:400;font-family:'Liberation Sans';white-space:nowrap;-webkit-text-stroke:0.12px;-webkit-text-stroke:0.1px;">+55</div>
<div style="left:1288.5px;top:162px;width:300px;text-align:right;font-size:9.5px;line-height:11px;color:#e4e4e4;font-weight:400;font-family:'Liberation Sans';white-space:nowrap;-webkit-text-stroke:0.12px;-webkit-text-stroke:0.1px;">+55</div>
<div style="left:283.5px;top:182px;font-size:9.5px;line-height:11px;color:#e4e4e4;font-weight:400;font-family:'Liberation Sans';white-space:nowrap;-webkit-text-stroke:0.12px;-webkit-text-stroke:0.1px;">+50</div>
<div style="left:1288.5px;top:182px;width:300px;text-align:right;font-size:9.5px;line-height:11px;color:#e4e4e4;font-weight:400;font-family:'Liberation Sans';white-space:nowrap;-webkit-text-stroke:0.12px;-webkit-text-stroke:0.1px;">+50</div>
<div style="left:283.5px;top:201px;font-size:9.5px;line-height:11px;color:#e4e4e4;font-weight:400;font-family:'Liberation Sans';white-space:nowrap;-webkit-text-stroke:0.12px;-webkit-text-stroke:0.1px;">+45</div>
<div style="left:1288.5px;top:201px;width:300px;text-align:right;font-size:9.5px;line-height:11px;color:#e4e4e4;font-weight:400;font-family:'Liberation Sans';white-space:nowrap;-webkit-text-stroke:0.12px;-webkit-text-stroke:0.1px;">+45</div>
<div style="left:283.5px;top:221px;font-size:9.5px;line-height:11px;color:#e4e4e4;font-weight:400;font-family:'Liberation Sans';white-space:nowrap;-webkit-text-stroke:0.12px;-webkit-text-stroke:0.1px;">+40</div>
<div style="left:1288.5px;top:221px;width:300px;text-align:right;font-size:9.5px;line-height:11px;color:#e4e4e4;font-weight:400;font-family:'Liberation Sans';white-space:nowrap;-webkit-text-stroke:0.12px;-webkit-text-stroke:0.1px;">+40</div>
<div style="left:283.5px;top:240px;font-size:9.5px;line-height:11px;color:#e4e4e4;font-weight:400;font-family:'Liberation Sans';white-space:nowrap;-webkit-text-stroke:0.12px;-webkit-text-stroke:0.1px;">+35</div>
<div style="left:1288.5px;top:240px;width:300px;text-align:right;font-size:9.5px;line-height:11px;color:#e4e4e4;font-weight:400;font-family:'Liberation Sans';white-space:nowrap;-webkit-text-stroke:0.12px;-webkit-text-stroke:0.1px;">+35</div>
<div style="left:283.5px;top:260px;font-size:9.5px;line-height:11px;color:#e4e4e4;font-weight:400;font-family:'Liberation Sans';white-space:nowrap;-webkit-text-stroke:0.12px;-webkit-text-stroke:0.1px;">+30</div>
<div style="left:1288.5px;top:260px;width:300px;text-align:right;font-size:9.5px;line-height:11px;color:#e4e4e4;font-weight:400;font-family:'Liberation Sans';white-space:nowrap;-webkit-text-stroke:0.12px;-webkit-text-stroke:0.1px;">+30</div>
<div style="left:283.5px;top:280px;font-size:9.5px;line-height:11px;color:#e4e4e4;font-weight:400;font-family:'Liberation Sans';white-space:nowrap;-webkit-text-stroke:0.12px;-webkit-text-stroke:0.1px;">+25</div>
<div style="left:1288.5px;top:280px;width:300px;text-align:right;font-size:9.5px;line-height:11px;color:#e4e4e4;font-weight:400;font-family:'Liberation Sans';white-space:nowrap;-webkit-text-stroke:0.12px;-webkit-text-stroke:0.1px;">+25</div>
<div style="left:283.5px;top:299px;font-size:9.5px;line-height:11px;color:#e4e4e4;font-weight:400;font-family:'Liberation Sans';white-space:nowrap;-webkit-text-stroke:0.12px;-webkit-text-stroke:0.1px;">+20</div>
<div style="left:1288.5px;top:299px;width:300px;text-align:right;font-size:9.5px;line-height:11px;color:#e4e4e4;font-weight:400;font-family:'Liberation Sans';white-space:nowrap;-webkit-text-stroke:0.12px;-webkit-text-stroke:0.1px;">+20</div>
<div style="left:283.5px;top:319px;font-size:9.5px;line-height:11px;color:#e4e4e4;font-weight:400;font-family:'Liberation Sans';white-space:nowrap;-webkit-text-stroke:0.12px;-webkit-text-stroke:0.1px;">+15</div>
<div style="left:1288.5px;top:319px;width:300px;text-align:right;font-size:9.5px;line-height:11px;color:#e4e4e4;font-weight:400;font-family:'Liberation Sans';white-space:nowrap;-webkit-text-stroke:0.12px;-webkit-text-stroke:0.1px;">+15</div>
<div style="left:283.5px;top:339px;font-size:9.5px;line-height:11px;color:#e4e4e4;font-weight:400;font-family:'Liberation Sans';white-space:nowrap;-webkit-text-stroke:0.12px;-webkit-text-stroke:0.1px;">+10</div>
<div style="left:1288.5px;top:339px;width:300px;text-align:right;font-size:9.5px;line-height:11px;color:#e4e4e4;font-weight:400;font-family:'Liberation Sans';white-space:nowrap;-webkit-text-stroke:0.12px;-webkit-text-stroke:0.1px;">+10</div>
<div style="left:283.5px;top:358px;font-size:9.5px;line-height:11px;color:#e4e4e4;font-weight:400;font-family:'Liberation Sans';white-space:nowrap;-webkit-text-stroke:0.12px;-webkit-text-stroke:0.1px;">+5</div>
<div style="left:1288.5px;top:358px;width:300px;text-align:right;font-size:9.5px;line-height:11px;color:#e4e4e4;font-weight:400;font-family:'Liberation Sans';white-space:nowrap;-webkit-text-stroke:0.12px;-webkit-text-stroke:0.1px;">+5</div>
<div style="left:283.5px;top:378px;font-size:9.5px;line-height:11px;color:#e4e4e4;font-weight:400;font-family:'Liberation Sans';white-space:nowrap;-webkit-text-stroke:0.12px;-webkit-text-stroke:0.1px;">S9</div>
<div style="left:1288.5px;top:378px;width:300px;text-align:right;font-size:9.5px;line-height:11px;color:#e4e4e4;font-weight:400;font-family:'Liberation Sans';white-space:nowrap;-webkit-text-stroke:0.12px;-webkit-text-stroke:0.1px;">S9</div>
<div style="left:283.5px;top:401px;font-size:9.5px;line-height:11px;color:#e4e4e4;font-weight:400;font-family:'Liberation Sans';white-space:nowrap;-webkit-text-stroke:0.12px;-webkit-text-stroke:0.1px;">S8</div>
<div style="left:1288.5px;top:401px;width:300px;text-align:right;font-size:9.5px;line-height:11px;color:#e4e4e4;font-weight:400;font-family:'Liberation Sans';white-space:nowrap;-webkit-text-stroke:0.12px;-webkit-text-stroke:0.1px;">S8</div>
<div style="left:283.5px;top:425px;font-size:9.5px;line-height:11px;color:#e4e4e4;font-weight:400;font-family:'Liberation Sans';white-space:nowrap;-webkit-text-stroke:0.12px;-webkit-text-stroke:0.1px;">S7</div>
<div style="left:1288.5px;top:425px;width:300px;text-align:right;font-size:9.5px;line-height:11px;color:#e4e4e4;font-weight:400;font-family:'Liberation Sans';white-space:nowrap;-webkit-text-stroke:0.12px;-webkit-text-stroke:0.1px;">S7</div>
<div style="left:283.5px;top:448px;font-size:9.5px;line-height:11px;color:#e4e4e4;font-weight:400;font-family:'Liberation Sans';white-space:nowrap;-webkit-text-stroke:0.12px;-webkit-text-stroke:0.1px;">S6</div>
<div style="left:1288.5px;top:448px;width:300px;text-align:right;font-size:9.5px;line-height:11px;color:#e4e4e4;font-weight:400;font-family:'Liberation Sans';white-space:nowrap;-webkit-text-stroke:0.12px;-webkit-text-stroke:0.1px;">S6</div>
<div style="left:283.5px;top:472px;font-size:9.5px;line-height:11px;color:#e4e4e4;font-weight:400;font-family:'Liberation Sans';white-space:nowrap;-webkit-text-stroke:0.12px;-webkit-text-stroke:0.1px;">S5</div>
<div style="left:1288.5px;top:472px;width:300px;text-align:right;font-size:9.5px;line-height:11px;color:#e4e4e4;font-weight:400;font-family:'Liberation Sans';white-space:nowrap;-webkit-text-stroke:0.12px;-webkit-text-stroke:0.1px;">S5</div>
<div style="left:283.5px;top:496px;font-size:9.5px;line-height:11px;color:#e4e4e4;font-weight:400;font-family:'Liberation Sans';white-space:nowrap;-webkit-text-stroke:0.12px;-webkit-text-stroke:0.1px;">S4</div>
<div style="left:1288.5px;top:496px;width:300px;text-align:right;font-size:9.5px;line-height:11px;color:#e4e4e4;font-weight:400;font-family:'Liberation Sans';white-space:nowrap;-webkit-text-stroke:0.12px;-webkit-text-stroke:0.1px;">S4</div>
<div style="left:283.5px;top:519px;font-size:9.5px;line-height:11px;color:#e4e4e4;font-weight:400;font-family:'Liberation Sans';white-space:nowrap;-webkit-text-stroke:0.12px;-webkit-text-stroke:0.1px;">S3</div>
<div style="left:1288.5px;top:519px;width:300px;text-align:right;font-size:9.5px;line-height:11px;color:#e4e4e4;font-weight:400;font-family:'Liberation Sans';white-space:nowrap;-webkit-text-stroke:0.12px;-webkit-text-stroke:0.1px;">S3</div>
<div style="left:283.5px;top:543px;font-size:9.5px;line-height:11px;color:#e4e4e4;font-weight:400;font-family:'Liberation Sans';white-space:nowrap;-webkit-text-stroke:0.12px;-webkit-text-stroke:0.1px;">S2</div>
<div style="left:1288.5px;top:543px;width:300px;text-align:right;font-size:9.5px;line-height:11px;color:#e4e4e4;font-weight:400;font-family:'Liberation Sans';white-space:nowrap;-webkit-text-stroke:0.12px;-webkit-text-stroke:0.1px;">S2</div>
<div style="left:283.5px;top:566px;font-size:9.5px;line-height:11px;color:#e4e4e4;font-weight:400;font-family:'Liberation Sans';white-space:nowrap;-webkit-text-stroke:0.12px;-webkit-text-stroke:0.1px;">S1</div>
<div style="left:1288.5px;top:566px;width:300px;text-align:right;font-size:9.5px;line-height:11px;color:#e4e4e4;font-weight:400;font-family:'Liberation Sans';white-space:nowrap;-webkit-text-stroke:0.12px;-webkit-text-stroke:0.1px;">S1</div>
<div style="left:283.5px;top:590px;font-size:9.5px;line-height:11px;color:#e4e4e4;font-weight:400;font-family:'Liberation Sans';white-space:nowrap;-webkit-text-stroke:0.12px;-webkit-text-stroke:0.1px;">S0</div>
<div style="left:1288.5px;top:590px;width:300px;text-align:right;font-size:9.5px;line-height:11px;color:#e4e4e4;font-weight:400;font-family:'Liberation Sans';white-space:nowrap;-webkit-text-stroke:0.12px;-webkit-text-stroke:0.1px;">S0</div>
<div style="left:637px;top:148px;width:99px;height:470px;background:linear-gradient(#006000 0%,#0a5e0a 20%,#1c4a1c 50%,#2a302a 80%,#2e2e2e 100%);border-left:1px solid #50d050;border-right:1px solid #50d050;box-sizing:border-box"></div>
<div style="left:637px;top:148px;width:99px;height:6px;background:linear-gradient(90deg,#00a800,#70ff70 40%,#70ff70 60%,#00a800)"></div>
<div style="left:638px;top:183px;width:97px;height:2px;background:#2aa02a"></div>
<div style="left:637px;top:612px;width:99px;height:6px;background:linear-gradient(90deg,#148c14,#80c080 50%,#148c14)"></div>
<svg style="position:absolute;left:279px;top:146px;" width="1313" height="473" viewBox="0 0 1313 473"><g stroke="#626262" stroke-width="1" stroke-dasharray="1 3"><line x1="52" y1="21.5" x2="1261" y2="21.5" /><line x1="52" y1="41.5" x2="1261" y2="41.5" /><line x1="52" y1="60.5" x2="1261" y2="60.5" /><line x1="52" y1="80.5" x2="1261" y2="80.5" /><line x1="52" y1="99.5" x2="1261" y2="99.5" /><line x1="52" y1="119.5" x2="1261" y2="119.5" /><line x1="52" y1="139.5" x2="1261" y2="139.5" /><line x1="52" y1="158.5" x2="1261" y2="158.5" /><line x1="52" y1="178.5" x2="1261" y2="178.5" /><line x1="52" y1="198.5" x2="1261" y2="198.5" /><line x1="52" y1="217.5" x2="1261" y2="217.5" /><line x1="52" y1="237.5" x2="1261" y2="237.5" /><line x1="52" y1="260.5" x2="1261" y2="260.5" /><line x1="52" y1="284.5" x2="1261" y2="284.5" /><line x1="52" y1="307.5" x2="1261" y2="307.5" /><line x1="52" y1="331.5" x2="1261" y2="331.5" /><line x1="52" y1="355.5" x2="1261" y2="355.5" /><line x1="52" y1="378.5" x2="1261" y2="378.5" /><line x1="52" y1="402.5" x2="1261" y2="402.5" /><line x1="52" y1="425.5" x2="1261" y2="425.5" /><line x1="52" y1="449.5" x2="1261" y2="449.5" /></g></svg>
<div style="left:679px;top:157px;width:16px;height:16px;background:#004a00;border-radius:3px"></div>
<div style="left:679.0px;top:160px;width:16px;text-align:center;font-size:10px;line-height:12px;color:#fff;font-weight:400;font-family:'Liberation Sans';white-space:nowrap;-webkit-text-stroke:0.12px;">1</div>
<div style="left:341px;top:151px;width:289px;height:114px;background:rgba(0,0,0,0.85);border:1px solid #262626;box-sizing:border-box"></div>
<svg style="position:absolute;left:341px;top:151px;" width="289" height="116" viewBox="0 0 289 116"><path d="M31.0 56.0 A352 352 0 0 1 144.0 37.0" fill="none" stroke="#f0f0f0" stroke-width="2"/><path d="M150.0 36.0 A353 353 0 0 1 259.0 54.9" fill="none" stroke="#c00000" stroke-width="4"/><line x1="37.5" y1="54.8" x2="35.8" y2="48.6" stroke="#e0e0e0" stroke-width="1"/><line x1="48.8" y1="51.4" x2="46.1" y2="40.8" stroke="#e0e0e0" stroke-width="1.5"/><line x1="60.0" y1="48.4" x2="58.7" y2="42.1" stroke="#e0e0e0" stroke-width="1"/><line x1="72.0" y1="45.7" x2="69.9" y2="34.9" stroke="#e0e0e0" stroke-width="1.5"/><line x1="84.0" y1="43.3" x2="83.0" y2="36.9" stroke="#e0e0e0" stroke-width="1"/><line x1="95.6" y1="41.5" x2="94.2" y2="30.6" stroke="#e0e0e0" stroke-width="1.5"/><line x1="108.0" y1="40.0" x2="107.4" y2="33.5" stroke="#e0e0e0" stroke-width="1"/><line x1="119.9" y1="38.9" x2="119.2" y2="27.9" stroke="#e0e0e0" stroke-width="1.5"/><line x1="132.0" y1="38.2" x2="131.8" y2="31.7" stroke="#e0e0e0" stroke-width="1"/><line x1="144.0" y1="38.0" x2="144.0" y2="27.0" stroke="#e0e0e0" stroke-width="1.5"/><line x1="160.6" y1="38.3" x2="160.9" y2="31.4" stroke="#c00000" stroke-width="1"/><line x1="181.2" y1="39.9" x2="182.2" y2="28.9" stroke="#c00000" stroke-width="1.6"/><line x1="202.2" y1="42.7" x2="203.2" y2="35.8" stroke="#c00000" stroke-width="1"/><line x1="222.4" y1="46.6" x2="224.6" y2="35.9" stroke="#c00000" stroke-width="1.6"/><line x1="242.6" y1="51.8" x2="244.3" y2="45.0" stroke="#c00000" stroke-width="1"/><line x1="259.5" y1="57.1" x2="263.7" y2="43.9" stroke="#c00000" stroke-width="1.6"/><line x1="20.5" y1="35.69999999999999" x2="49" y2="114" stroke="#f01010" stroke-width="1.5"/></svg>
<div style="left:357.0px;top:171px;width:60px;text-align:center;font-size:13px;line-height:15px;color:#d8d8d8;font-weight:400;font-family:'Liberation Sans';white-space:nowrap;font-style:italic;">1</div>
<div style="left:381.0px;top:166px;width:60px;text-align:center;font-size:13px;line-height:15px;color:#d8d8d8;font-weight:400;font-family:'Liberation Sans';white-space:nowrap;font-style:italic;">3</div>
<div style="left:405.0px;top:162px;width:60px;text-align:center;font-size:13px;line-height:15px;color:#d8d8d8;font-weight:400;font-family:'Liberation Sans';white-space:nowrap;font-style:italic;">5</div>
<div style="left:431.0px;top:158px;width:60px;text-align:center;font-size:13px;line-height:15px;color:#d8d8d8;font-weight:400;font-family:'Liberation Sans';white-space:nowrap;font-style:italic;">7</div>
<div style="left:455.0px;top:155px;width:60px;text-align:center;font-size:13px;line-height:15px;color:#d8d8d8;font-weight:400;font-family:'Liberation Sans';white-space:nowrap;font-style:italic;">9</div>
<div style="left:493.0px;top:159px;width:60px;text-align:center;font-size:13px;line-height:15px;color:#d8d8d8;font-weight:400;font-family:'Liberation Sans';white-space:nowrap;font-style:italic;">+20</div>
<div style="left:535.0px;top:166px;width:60px;text-align:center;font-size:13px;line-height:15px;color:#d8d8d8;font-weight:400;font-family:'Liberation Sans';white-space:nowrap;font-style:italic;">+40</div>
<div style="left:576.0px;top:178px;width:60px;text-align:center;font-size:13px;line-height:15px;color:#d8d8d8;font-weight:400;font-family:'Liberation Sans';white-space:nowrap;font-style:italic;">+60</div>
<div style="left:348px;top:155px;font-size:13px;line-height:15px;color:#f0f0f0;font-weight:400;font-family:'Liberation Sans';white-space:nowrap;">S</div>
<div style="left:603px;top:155px;font-size:13px;line-height:15px;color:#f0f0f0;font-weight:400;font-family:'Liberation Sans';white-space:nowrap;">dB</div>
<div style="left:455px;top:230px;width:60px;height:20px;background:radial-gradient(ellipse at 50% 50%,#e4f050 0%,#b8cc38 70%,#a8be30 100%);border-radius:3px"></div>
<div style="left:455.0px;top:234px;width:60px;text-align:center;font-size:13px;line-height:15px;color:#111;font-weight:700;font-family:'Liberation Sans';white-space:nowrap;">S0</div>
<div style="left:279px;top:619px;width:1313px;height:11px;background:linear-gradient(#8a8a8a 0%,#686868 15%,#585858 60%,#3c3c3c 100%)"></div>
<div style="left:279px;top:630px;width:1313px;height:10px;background:#000"></div>
<svg style="position:absolute;left:279px;top:619px;" width="1313" height="11" viewBox="0 0 1313 11"><rect x="11.3" y="1" width="2" height="2" fill="#9a9a9a"/><rect x="25.0" y="1" width="2" height="4" fill="#9a9a9a"/><rect x="38.7" y="1" width="2" height="2" fill="#9a9a9a"/><rect x="52.4" y="1" width="2" height="3" fill="#9a9a9a"/><rect x="66.1" y="1" width="2" height="2" fill="#9a9a9a"/><rect x="79.8" y="1" width="2" height="3" fill="#9a9a9a"/><rect x="93.4" y="1" width="2" height="2" fill="#9a9a9a"/><rect x="107.1" y="1" width="2" height="3" fill="#9a9a9a"/><rect x="120.8" y="1" width="2" height="2" fill="#9a9a9a"/><rect x="134.5" y="1" width="2" height="3" fill="#9a9a9a"/><rect x="148.2" y="1" width="2" height="2" fill="#9a9a9a"/><rect x="161.9" y="1" width="2" height="4" fill="#9a9a9a"/><rect x="175.6" y="1" width="2" height="2" fill="#9a9a9a"/><rect x="189.3" y="1" width="2" height="3" fill="#9a9a9a"/><rect x="203.0" y="1" width="2" height="2" fill="#9a9a9a"/><rect x="216.6" y="1" width="2" height="3" fill="#9a9a9a"/><rect x="230.3" y="1" width="2" height="2" fill="#9a9a9a"/><rect x="244.0" y="1" width="2" height="3" fill="#9a9a9a"/><rect x="257.7" y="1" width="2" height="2" fill="#9a9a9a"/><rect x="271.4" y="1" width="2" height="3" fill="#9a9a9a"/><rect x="285.1" y="1" width="2" height="2" fill="#9a9a9a"/><rect x="298.8" y="1" width="2" height="4" fill="#9a9a9a"/><rect x="312.5" y="1" width="2" height="2" fill="#9a9a9a"/><rect x="326.2" y="1" width="2" height="3" fill="#9a9a9a"/><rect x="339.8" y="1" width="2" height="2" fill="#9a9a9a"/><rect x="353.5" y="1" width="2" height="3" fill="#9a9a9a"/><rect x="367.2" y="1" width="2" height="2" fill="#9a9a9a"/><rect x="380.9" y="1" width="2" height="3" fill="#9a9a9a"/><rect x="394.6" y="1" width="2" height="2" fill="#9a9a9a"/><rect x="408.3" y="1" width="2" height="3" fill="#9a9a9a"/><rect x="422.0" y="1" width="2" height="2" fill="#9a9a9a"/><rect x="435.7" y="1" width="2" height="4" fill="#9a9a9a"/><rect x="449.4" y="1" width="2" height="2" fill="#9a9a9a"/><rect x="463.0" y="1" width="2" height="3" fill="#9a9a9a"/><rect x="476.7" y="1" width="2" height="2" fill="#9a9a9a"/><rect x="490.4" y="1" width="2" height="3" fill="#9a9a9a"/><rect x="504.1" y="1" width="2" height="2" fill="#9a9a9a"/><rect x="517.8" y="1" width="2" height="3" fill="#9a9a9a"/><rect x="531.5" y="1" width="2" height="2" fill="#9a9a9a"/><rect x="545.2" y="1" width="2" height="3" fill="#9a9a9a"/><rect x="558.9" y="1" width="2" height="2" fill="#9a9a9a"/><rect x="572.6" y="1" width="2" height="4" fill="#9a9a9a"/><rect x="586.2" y="1" width="2" height="2" fill="#9a9a9a"/><rect x="599.9" y="1" width="2" height="3" fill="#9a9a9a"/><rect x="613.6" y="1" width="2" height="2" fill="#9a9a9a"/><rect x="627.3" y="1" width="2" height="3" fill="#9a9a9a"/><rect x="641.0" y="1" width="2" height="2" fill="#9a9a9a"/><rect x="654.7" y="1" width="2" height="3" fill="#9a9a9a"/><rect x="668.4" y="1" width="2" height="2" fill="#9a9a9a"/><rect x="682.1" y="1" width="2" height="3" fill="#9a9a9a"/><rect x="695.8" y="1" width="2" height="2" fill="#9a9a9a"/><rect x="709.4" y="1" width="2" height="4" fill="#9a9a9a"/><rect x="723.1" y="1" width="2" height="2" fill="#9a9a9a"/><rect x="736.8" y="1" width="2" height="3" fill="#9a9a9a"/><rect x="750.5" y="1" width="2" height="2" fill="#9a9a9a"/><rect x="764.2" y="1" width="2" height="3" fill="#9a9a9a"/><rect x="777.9" y="1" width="2" height="2" fill="#9a9a9a"/><rect x="791.6" y="1" width="2" height="3" fill="#9a9a9a"/><rect x="805.3" y="1" width="2" height="2" fill="#9a9a9a"/><rect x="819.0" y="1" width="2" height="3" fill="#9a9a9a"/><rect x="832.6" y="1" width="2" height="2" fill="#9a9a9a"/><rect x="846.3" y="1" width="2" height="4" fill="#9a9a9a"/><rect x="860.0" y="1" width="2" height="2" fill="#9a9a9a"/><rect x="873.7" y="1" width="2" height="3" fill="#9a9a9a"/><rect x="887.4" y="1" width="2" height="2" fill="#9a9a9a"/><rect x="901.1" y="1" width="2" height="3" fill="#9a9a9a"/><rect x="914.8" y="1" width="2" height="2" fill="#9a9a9a"/><rect x="928.5" y="1" width="2" height="3" fill="#9a9a9a"/><rect x="942.2" y="1" width="2" height="2" fill="#9a9a9a"/><rect x="955.8" y="1" width="2" height="3" fill="#9a9a9a"/><rect x="969.5" y="1" width="2" height="2" fill="#9a9a9a"/><rect x="983.2" y="1" width="2" height="4" fill="#9a9a9a"/><rect x="996.9" y="1" width="2" height="2" fill="#9a9a9a"/><rect x="1010.6" y="1" width="2" height="3" fill="#9a9a9a"/><rect x="1024.3" y="1" width="2" height="2" fill="#9a9a9a"/><rect x="1038.0" y="1" width="2" height="3" fill="#9a9a9a"/><rect x="1051.7" y="1" width="2" height="2" fill="#9a9a9a"/><rect x="1065.4" y="1" width="2" height="3" fill="#9a9a9a"/><rect x="1079.0" y="1" width="2" height="2" fill="#9a9a9a"/><rect x="1092.7" y="1" width="2" height="3" fill="#9a9a9a"/><rect x="1106.4" y="1" width="2" height="2" fill="#9a9a9a"/><rect x="1120.1" y="1" width="2" height="4" fill="#9a9a9a"/><rect x="1133.8" y="1" width="2" height="2" fill="#9a9a9a"/><rect x="1147.5" y="1" width="2" height="3" fill="#9a9a9a"/><rect x="1161.2" y="1" width="2" height="2" fill="#9a9a9a"/><rect x="1174.9" y="1" width="2" height="3" fill="#9a9a9a"/><rect x="1188.6" y="1" width="2" height="2" fill="#9a9a9a"/><rect x="1202.2" y="1" width="2" height="3" fill="#9a9a9a"/><rect x="1215.9" y="1" width="2" height="2" fill="#9a9a9a"/><rect x="1229.6" y="1" width="2" height="3" fill="#9a9a9a"/><rect x="1243.3" y="1" width="2" height="2" fill="#9a9a9a"/><rect x="1257.0" y="1" width="2" height="4" fill="#9a9a9a"/><rect x="1270.7" y="1" width="2" height="2" fill="#9a9a9a"/><rect x="1284.4" y="1" width="2" height="3" fill="#9a9a9a"/><rect x="1298.1" y="1" width="2" height="2" fill="#9a9a9a"/><rect x="1311.8" y="1" width="2" height="3" fill="#9a9a9a"/></svg>
<div style="left:275.5px;top:628px;width:60px;text-align:center;font-size:10px;line-height:12px;color:#fff;font-weight:400;font-family:'Liberation Sans';white-space:nowrap;-webkit-text-stroke:0.12px;">14.065</div>
<div style="left:412.3888888888889px;top:628px;width:60px;text-align:center;font-size:10px;line-height:12px;color:#fff;font-weight:400;font-family:'Liberation Sans';white-space:nowrap;-webkit-text-stroke:0.12px;">14.070</div>
<div style="left:549.2777777777778px;top:628px;width:60px;text-align:center;font-size:10px;line-height:12px;color:#fff;font-weight:400;font-family:'Liberation Sans';white-space:nowrap;-webkit-text-stroke:0.12px;">14.075</div>
<div style="left:686.1666666666666px;top:628px;width:60px;text-align:center;font-size:10px;line-height:12px;color:#fff;font-weight:400;font-family:'Liberation Sans';white-space:nowrap;-webkit-text-stroke:0.12px;">14.080</div>
<div style="left:823.0555555555555px;top:628px;width:60px;text-align:center;font-size:10px;line-height:12px;color:#fff;font-weight:400;font-family:'Liberation Sans';white-space:nowrap;-webkit-text-stroke:0.12px;">14.085</div>
<div style="left:959.9444444444445px;top:628px;width:60px;text-align:center;font-size:10px;line-height:12px;color:#fff;font-weight:400;font-family:'Liberation Sans';white-space:nowrap;-webkit-text-stroke:0.12px;">14.090</div>
<div style="left:1096.8333333333333px;top:628px;width:60px;text-align:center;font-size:10px;line-height:12px;color:#fff;font-weight:400;font-family:'Liberation Sans';white-space:nowrap;-webkit-text-stroke:0.12px;">14.095</div>
<div style="left:1233.7222222222222px;top:628px;width:60px;text-align:center;font-size:10px;line-height:12px;color:#fff;font-weight:400;font-family:'Liberation Sans';white-space:nowrap;-webkit-text-stroke:0.12px;">14.100</div>
<div style="left:1370.611111111111px;top:628px;width:60px;text-align:center;font-size:10px;line-height:12px;color:#fff;font-weight:400;font-family:'Liberation Sans';white-space:nowrap;-webkit-text-stroke:0.12px;">14.105</div>
<div style="left:1507.5px;top:628px;width:60px;text-align:center;font-size:10px;line-height:12px;color:#fff;font-weight:400;font-family:'Liberation Sans';white-space:nowrap;-webkit-text-stroke:0.12px;">14.110</div>
<div style="left:279px;top:640px;width:1313px;height:6px;background:#f0f0f0;border-top:1px solid #fff;border-bottom:1px solid #fff;box-sizing:border-box"></div>
<svg style="position:absolute;left:904px;top:642px;" width="64" height="2" viewBox="0 0 64 2"><rect x="0" y="0" width="2" height="2" fill="#777"/><rect x="4" y="0" width="2" height="2" fill="#777"/><rect x="8" y="0" width="2" height="2" fill="#777"/><rect x="12" y="0" width="2" height="2" fill="#777"/><rect x="16" y="0" width="2" height="2" fill="#777"/><rect x="20" y="0" width="2" height="2" fill="#777"/><rect x="24" y="0" width="2" height="2" fill="#777"/><rect x="28" y="0" width="2" height="2" fill="#777"/><rect x="32" y="0" width="2" height="2" fill="#777"/><rect x="36" y="0" width="2" height="2" fill="#777"/><rect x="40" y="0" width="2" height="2" fill="#777"/><rect x="44" y="0" width="2" height="2" fill="#777"/><rect x="48" y="0" width="2" height="2" fill="#777"/><rect x="52" y="0" width="2" height="2" fill="#777"/><rect x="56" y="0" width="2" height="2" fill="#777"/><rect x="60" y="0" width="2" height="2" fill="#777"/></svg>
<div style="left:279px;top:646px;width:1313px;height:350px;background:#020222"></div>
<svg style="position:absolute;left:279px;top:646px;overflow:hidden" width="1313" height="350" viewBox="0 0 1313 350"><rect x="27.5" y="194" width="1" height="16" fill="#c8d6ff" opacity="1"/><rect x="26" y="194" width="3" height="1.5" fill="#b8c8ff"/><rect x="26" y="198" width="3" height="1.5" fill="#b8c8ff"/><rect x="26" y="201" width="3" height="1.5" fill="#b8c8ff"/><rect x="26" y="205" width="3" height="1.5" fill="#b8c8ff"/><rect x="27.5" y="225" width="1" height="28" fill="#c8d6ff" opacity="1"/><rect x="26" y="225" width="3" height="1.5" fill="#b8c8ff"/><rect x="26" y="228" width="3" height="1.5" fill="#b8c8ff"/><rect x="26" y="231" width="3" height="1.5" fill="#b8c8ff"/><rect x="26" y="236" width="3" height="1.5" fill="#b8c8ff"/><rect x="26" y="239" width="3" height="1.5" fill="#b8c8ff"/><rect x="26" y="243" width="3" height="1.5" fill="#b8c8ff"/><rect x="26" y="248" width="3" height="1.5" fill="#b8c8ff"/><rect x="26" y="251" width="3" height="1.5" fill="#b8c8ff"/><rect x="27.5" y="273" width="1" height="28" fill="#c8d6ff" opacity="1"/><rect x="26" y="273" width="3" height="1.5" fill="#b8c8ff"/><rect x="26" y="276" width="3" height="1.5" fill="#b8c8ff"/><rect x="26" y="279" width="3" height="1.5" fill="#b8c8ff"/><rect x="26" y="282" width="3" height="1.5" fill="#b8c8ff"/><rect x="26" y="286" width="3" height="1.5" fill="#b8c8ff"/><rect x="26" y="290" width="3" height="1.5" fill="#b8c8ff"/><rect x="26" y="293" width="3" height="1.5" fill="#b8c8ff"/><rect x="26" y="296" width="3" height="1.5" fill="#b8c8ff"/><rect x="26" y="299" width="3" height="1.5" fill="#b8c8ff"/><rect x="27.5" y="314" width="1" height="16" fill="#c8d6ff" opacity="1"/><rect x="26" y="314" width="3" height="1.5" fill="#b8c8ff"/><rect x="26" y="318" width="3" height="1.5" fill="#b8c8ff"/><rect x="26" y="321" width="3" height="1.5" fill="#b8c8ff"/><rect x="26" y="326" width="3" height="1.5" fill="#b8c8ff"/><rect x="26" y="329" width="3" height="1.5" fill="#b8c8ff"/><rect x="27.5" y="346" width="1" height="4" fill="#c8d6ff" opacity="1"/><rect x="26" y="346" width="3" height="1.5" fill="#b8c8ff"/><rect x="164.0" y="187" width="1" height="163" fill="#5a78d8" opacity="0.8"/><rect x="186.0" y="187" width="2" height="163" fill="#7c9cff" opacity="1.0"/><rect x="192.0" y="187" width="1.5" height="163" fill="#6c8cf0" opacity="0.9"/><rect x="287" y="187" width="36" height="163" fill="#3a52b0" opacity="0.35"/><polyline points="288.5,187 287.4,190 286.8,193 288.6,196 285.8,199 288.2,202 286.5,205 286.1,208 286.0,211 286.6,214 288.1,217 286.2,220 287.4,223 287.5,226 286.7,229 287.3,232 285.8,235 285.8,238 286.2,241 287.7,244 286.9,247 286.6,250 287.4,253 287.0,256 286.5,259 288.0,262 287.7,265 286.4,268 287.4,271 287.2,274 288.3,277 287.8,280 286.5,283 288.6,286 286.0,289 286.9,292 287.9,295 286.1,298 287.1,301 285.7,304 287.6,307 287.9,310 287.3,313 288.3,316 286.6,319 287.7,322 287.4,325 287.4,328 287.0,331 288.1,334 288.5,337 287.0,340 287.6,343 285.8,346 287.7,349" fill="none" stroke="#7c98f8" stroke-width="1.2" opacity="0.75"/><polyline points="290.6,187 290.1,190 288.5,193 288.8,196 289.7,199 287.7,202 289.0,205 288.2,208 288.0,211 287.8,214 290.0,217 288.0,220 288.4,223 288.8,226 290.3,229 287.9,232 289.0,235 289.3,238 290.3,241 290.1,244 290.2,247 288.5,250 288.9,253 288.7,256 290.3,259 290.5,262 288.1,265 288.2,268 288.3,271 288.3,274 289.1,277 289.4,280 288.4,283 287.7,286 288.9,289 288.8,292 289.3,295 290.5,298 289.7,301 289.2,304 289.5,307 289.7,310 287.8,313 290.3,316 290.0,319 290.3,322 290.0,325 288.8,328 288.8,331 288.0,334 289.5,337 287.8,340 287.8,343 288.3,346 288.1,349" fill="none" stroke="#7c98f8" stroke-width="1.2" opacity="0.75"/><polyline points="289.5,187 289.3,190 289.8,193 289.6,196 290.4,199 289.4,202 292.0,205 291.2,208 289.8,211 290.1,214 290.4,217 290.4,220 289.7,223 291.9,226 292.3,229 290.7,232 290.8,235 289.6,238 289.6,241 290.4,244 290.1,247 291.8,250 289.8,253 289.4,256 292.2,259 290.9,262 289.8,265 291.0,268 289.4,271 290.9,274 292.3,277 291.9,280 291.4,283 290.1,286 290.4,289 289.8,292 291.7,295 290.9,298 291.7,301 290.3,304 290.0,307 291.8,310 292.3,313 291.9,316 291.8,319 291.8,322 291.6,325 290.0,328 290.9,331 290.4,334 289.4,337 289.4,340 290.2,343 290.1,346 291.4,349" fill="none" stroke="#7c98f8" stroke-width="1.2" opacity="0.75"/><polyline points="293.3,187 294.8,190 294.9,193 294.8,196 293.1,199 292.6,202 292.6,205 292.5,208 292.6,211 293.8,214 294.7,217 294.5,220 293.4,223 293.9,226 294.4,229 292.2,232 293.9,235 294.7,238 294.3,241 294.2,244 293.4,247 292.5,250 294.3,253 293.0,256 294.4,259 294.9,262 293.1,265 293.2,268 294.8,271 294.1,274 292.5,277 292.3,280 292.4,283 294.7,286 294.4,289 292.4,292 294.4,295 294.9,298 293.9,301 293.0,304 293.6,307 292.3,310 292.0,313 294.9,316 293.9,319 293.5,322 294.8,325 293.3,328 294.6,331 294.4,334 292.6,337 292.7,340 292.8,343 292.7,346 293.7,349" fill="none" stroke="#7c98f8" stroke-width="1.2" opacity="0.75"/><polyline points="294.5,187 293.7,190 296.0,193 294.3,196 294.6,199 295.0,202 296.0,205 294.5,208 296.0,211 294.8,214 294.9,217 294.8,220 293.3,223 294.6,226 293.8,229 293.3,232 295.7,235 293.8,238 294.7,241 295.4,244 294.9,247 294.2,250 294.8,253 294.9,256 295.6,259 293.6,262 294.9,265 294.0,268 294.1,271 295.6,274 294.8,277 294.9,280 295.5,283 296.0,286 294.6,289 295.1,292 294.8,295 294.8,298 295.3,301 294.6,304 294.9,307 294.7,310 296.1,313 295.4,316 295.9,319 296.1,322 294.0,325 294.9,328 296.1,331 295.8,334 293.7,337 293.6,340 294.6,343 293.5,346 294.0,349" fill="none" stroke="#7c98f8" stroke-width="1.2" opacity="0.75"/><polyline points="297.1,187 297.4,190 297.8,193 295.5,196 297.2,199 297.1,202 295.5,205 297.7,208 298.0,211 295.7,214 297.9,217 296.3,220 296.5,223 298.0,226 297.6,229 295.6,232 296.4,235 296.6,238 296.1,241 295.7,244 296.0,247 297.2,250 295.1,253 296.7,256 296.4,259 295.1,262 296.1,265 296.9,268 296.6,271 295.3,274 298.0,277 297.4,280 298.0,283 295.4,286 295.9,289 295.2,292 297.4,295 295.9,298 295.5,301 296.3,304 297.8,307 297.5,310 295.8,313 295.5,316 297.8,319 296.8,322 297.2,325 295.3,328 295.2,331 297.1,334 296.3,337 295.3,340 297.9,343 297.0,346 297.5,349" fill="none" stroke="#7c98f8" stroke-width="1.2" opacity="0.75"/><polyline points="299.7,187 297.3,190 299.7,193 298.4,196 298.1,199 298.7,202 299.9,205 297.9,208 297.5,211 298.7,214 297.8,217 297.4,220 297.6,223 297.2,226 297.7,229 298.0,232 298.0,235 299.4,238 298.0,241 298.6,244 297.6,247 298.1,250 297.1,253 297.8,256 297.1,259 299.3,262 298.7,265 297.7,268 298.5,271 299.9,274 297.4,277 299.5,280 298.4,283 298.6,286 299.6,289 298.3,292 298.6,295 299.1,298 300.0,301 298.1,304 299.6,307 299.2,310 299.0,313 298.3,316 298.1,319 297.2,322 297.5,325 297.3,328 299.3,331 297.9,334 297.6,337 297.3,340 299.6,343 299.7,346 299.1,349" fill="none" stroke="#7c98f8" stroke-width="1.2" opacity="0.75"/><polyline points="300.0,187 300.2,190 300.7,193 299.8,196 300.6,199 300.1,202 302.2,205 302.2,208 300.9,211 300.0,214 302.2,217 300.2,220 300.4,223 299.3,226 300.4,229 300.7,232 300.8,235 299.9,238 300.8,241 299.3,244 300.1,247 299.6,250 300.5,253 299.4,256 299.3,259 300.2,262 300.0,265 301.0,268 300.9,271 301.5,274 301.3,277 301.4,280 301.9,283 300.5,286 300.3,289 302.2,292 299.7,295 301.5,298 301.2,301 299.4,304 301.8,307 302.0,310 301.2,313 301.5,316 301.7,319 299.7,322 300.9,325 300.8,328 301.8,331 301.7,334 301.8,337 301.0,340 302.0,343 301.3,346 301.4,349" fill="none" stroke="#7c98f8" stroke-width="1.2" opacity="0.75"/><polyline points="301.3,187 301.6,190 302.3,193 301.5,196 303.7,199 302.9,202 303.1,205 303.1,208 303.3,211 302.7,214 301.2,217 303.6,220 303.5,223 302.7,226 302.8,229 303.2,232 301.4,235 303.4,238 302.0,241 301.5,244 302.0,247 303.4,250 301.8,253 303.4,256 304.2,259 302.7,262 302.4,265 302.7,268 303.3,271 303.5,274 303.1,277 303.2,280 301.5,283 301.7,286 302.0,289 303.5,292 302.1,295 302.9,298 301.3,301 301.4,304 302.0,307 303.2,310 303.3,313 303.3,316 302.1,319 302.8,322 302.6,325 302.6,328 301.6,331 303.9,334 301.8,337 304.2,340 304.0,343 301.3,346 302.6,349" fill="none" stroke="#7c98f8" stroke-width="1.2" opacity="0.75"/><polyline points="306.7,187 305.2,190 304.6,193 304.4,196 306.7,199 304.5,202 305.6,205 304.2,208 305.4,211 306.7,214 304.2,217 306.3,220 305.3,223 306.5,226 305.9,229 304.5,232 306.5,235 305.3,238 303.9,241 303.8,244 305.3,247 305.2,250 304.7,253 304.2,256 304.9,259 304.8,262 306.3,265 303.8,268 306.1,271 306.3,274 304.2,277 306.6,280 306.0,283 306.5,286 304.7,289 304.9,292 305.0,295 306.8,298 305.6,301 304.9,304 305.1,307 304.6,310 304.0,313 304.1,316 306.3,319 304.7,322 306.6,325 304.6,328 304.6,331 305.4,334 304.4,337 304.9,340 306.7,343 306.5,346 306.3,349" fill="none" stroke="#7c98f8" stroke-width="1.2" opacity="0.75"/><polyline points="308.4,187 308.5,190 307.3,193 307.8,196 305.8,199 307.8,202 307.0,205 307.9,208 307.6,211 306.5,214 305.8,217 308.4,220 306.0,223 307.0,226 306.7,229 306.5,232 307.8,235 308.6,238 306.4,241 307.6,244 306.5,247 307.3,250 306.8,253 306.1,256 306.1,259 306.3,262 308.3,265 307.1,268 306.3,271 308.3,274 308.6,277 307.0,280 306.0,283 306.2,286 305.9,289 306.7,292 305.9,295 306.3,298 306.4,301 307.3,304 308.3,307 307.9,310 306.9,313 306.9,316 307.2,319 306.8,322 306.6,325 305.8,328 306.5,331 308.5,334 306.0,337 307.1,340 307.5,343 308.2,346 306.3,349" fill="none" stroke="#7c98f8" stroke-width="1.2" opacity="0.75"/><polyline points="308.0,187 308.5,190 308.6,193 310.1,196 309.8,199 309.9,202 307.3,205 307.4,208 309.4,211 310.0,214 308.7,217 309.0,220 307.3,223 308.4,226 310.1,229 309.7,232 309.8,235 310.2,238 308.0,241 307.6,244 307.7,247 308.8,250 309.3,253 310.1,256 309.4,259 309.2,262 309.6,265 308.6,268 308.9,271 307.4,274 309.6,277 308.0,280 310.0,283 309.2,286 308.2,289 307.7,292 308.0,295 309.2,298 309.4,301 307.6,304 307.5,307 308.8,310 309.0,313 308.4,316 307.9,319 309.1,322 307.3,325 308.2,328 308.7,331 310.1,334 309.2,337 309.9,340 308.7,343 308.0,346 308.0,349" fill="none" stroke="#7c98f8" stroke-width="1.2" opacity="0.75"/><polyline points="312.1,187 310.9,190 310.0,193 311.5,196 312.0,199 311.2,202 310.7,205 312.0,208 312.7,211 310.6,214 310.1,217 311.0,220 311.2,223 312.0,226 310.6,229 312.4,232 312.2,235 311.5,238 310.6,241 312.9,244 310.9,247 312.4,250 310.7,253 310.6,256 312.2,259 310.8,262 312.8,265 311.4,268 310.5,271 310.6,274 311.2,277 312.0,280 312.8,283 310.4,286 311.1,289 310.6,292 312.9,295 310.4,298 310.1,301 310.1,304 311.1,307 312.7,310 312.6,313 312.2,316 313.0,319 312.8,322 310.9,325 310.5,328 312.8,331 312.2,334 310.1,337 312.0,340 311.1,343 311.1,346 311.0,349" fill="none" stroke="#7c98f8" stroke-width="1.2" opacity="0.75"/><polyline points="311.2,187 312.0,190 312.2,193 314.0,196 311.5,199 314.1,202 311.8,205 312.2,208 313.6,211 313.6,214 312.5,217 311.3,220 312.6,223 312.3,226 313.9,229 311.7,232 312.3,235 313.9,238 311.3,241 312.4,244 313.6,247 313.5,250 311.3,253 311.3,256 311.4,259 313.9,262 311.9,265 313.4,268 313.9,271 312.2,274 312.0,277 314.0,280 313.0,283 312.0,286 313.3,289 312.1,292 312.0,295 311.2,298 313.4,301 313.9,304 313.1,307 314.0,310 311.2,313 311.9,316 312.6,319 314.0,322 314.0,325 312.3,328 311.9,331 312.5,334 312.6,337 314.0,340 311.7,343 313.6,346 313.4,349" fill="none" stroke="#7c98f8" stroke-width="1.2" opacity="0.75"/><polyline points="316.1,187 315.6,190 314.8,193 314.8,196 314.9,199 316.2,202 314.1,205 314.4,208 316.1,211 314.6,214 314.0,217 313.9,220 315.5,223 314.8,226 316.8,229 316.5,232 316.8,235 314.6,238 314.1,241 314.1,244 315.3,247 316.0,250 315.2,253 314.5,256 315.1,259 315.7,262 315.8,265 316.1,268 316.4,271 315.8,274 314.2,277 316.3,280 314.7,283 315.5,286 314.9,289 316.0,292 314.4,295 314.6,298 314.6,301 314.3,304 316.5,307 315.6,310 314.8,313 315.0,316 316.8,319 315.3,322 314.5,325 316.2,328 315.8,331 316.8,334 314.1,337 315.2,340 316.3,343 316.3,346 316.6,349" fill="none" stroke="#7c98f8" stroke-width="1.2" opacity="0.75"/><polyline points="315.9,187 315.4,190 315.6,193 318.0,196 316.8,199 317.8,202 316.2,205 317.6,208 316.4,211 315.8,214 317.4,217 317.9,220 315.4,223 316.8,226 316.9,229 315.7,232 316.1,235 315.5,238 315.7,241 315.8,244 316.8,247 317.0,250 315.7,253 315.1,256 316.0,259 317.1,262 315.6,265 316.0,268 315.7,271 317.4,274 316.7,277 315.2,280 315.3,283 316.2,286 316.7,289 317.0,292 315.3,295 315.5,298 317.1,301 316.3,304 315.9,307 316.0,310 317.9,313 316.0,316 316.7,319 316.1,322 316.3,325 317.6,328 318.0,331 316.1,334 315.6,337 317.2,340 315.7,343 315.1,346 317.7,349" fill="none" stroke="#7c98f8" stroke-width="1.2" opacity="0.75"/><polyline points="319.9,187 318.6,190 320.1,193 318.8,196 317.9,199 317.5,202 319.1,205 319.3,208 320.2,211 317.7,214 319.3,217 318.5,220 318.9,223 317.9,226 318.3,229 319.0,232 320.2,235 317.8,238 318.9,241 319.8,244 320.3,247 318.0,250 317.8,253 320.3,256 320.4,259 318.9,262 317.6,265 320.2,268 318.6,271 320.1,274 319.3,277 319.9,280 317.9,283 319.8,286 318.1,289 318.6,292 320.0,295 319.9,298 318.0,301 318.1,304 318.6,307 319.0,310 318.6,313 317.8,316 318.2,319 319.6,322 320.1,325 317.5,328 319.1,331 319.7,334 317.5,337 319.9,340 317.8,343 319.2,346 319.1,349" fill="none" stroke="#7c98f8" stroke-width="1.2" opacity="0.75"/><polyline points="320.5,187 320.9,190 321.4,193 320.9,196 321.6,199 321.0,202 320.9,205 319.7,208 321.5,211 321.1,214 320.3,217 321.9,220 322.0,223 321.0,226 320.2,229 321.0,232 319.9,235 320.0,238 320.9,241 319.9,244 321.0,247 321.2,250 319.7,253 321.5,256 319.9,259 321.8,262 322.0,265 321.2,268 319.8,271 321.1,274 320.8,277 322.5,280 320.0,283 322.2,286 322.6,289 321.8,292 322.1,295 320.2,298 322.6,301 321.1,304 322.5,307 322.4,310 320.1,313 322.0,316 322.4,319 319.8,322 320.7,325 321.9,328 320.1,331 322.3,334 320.5,337 322.1,340 320.1,343 321.1,346 322.4,349" fill="none" stroke="#7c98f8" stroke-width="1.2" opacity="0.75"/><polyline points="325.3,187 325.4,190 326.0,193 325.6,196 324.9,199 325.2,202 325.2,205 327.0,208 326.4,211 326.9,214 325.2,217 326.7,220 325.1,223 326.1,226 326.3,229 325.7,232 326.9,235 326.1,238 326.2,241 326.9,244 325.1,247 327.2,250 326.3,253 325.7,256 326.7,259 325.4,262 327.2,265 326.2,268 325.7,271 326.6,274 325.9,277 325.2,280 326.6,283 324.9,286 326.8,289 325.4,292 326.3,295 327.2,298 326.2,301 326.4,304 325.6,307 324.8,310 324.9,313 325.2,316 326.3,319 325.8,322 326.0,325 326.9,328 325.1,331 325.3,334 326.4,337 324.9,340 324.8,343 325.7,346 325.1,349" fill="none" stroke="#6a88e8" stroke-width="1.0" opacity="0.55"/><polyline points="329.7,187 329.3,190 330.2,193 330.2,196 329.3,199 330.3,202 329.9,205 329.1,208 331.0,211 329.4,214 329.2,217 329.0,220 330.3,223 330.9,226 330.7,229 329.8,232 329.4,235 328.8,238 330.3,241 330.1,244 329.6,247 330.3,250 329.9,253 331.0,256 330.6,259 329.4,262 331.0,265 328.9,268 330.1,271 329.8,274 329.4,277 328.9,280 330.7,283 328.8,286 330.1,289 331.1,292 329.1,295 329.3,298 330.3,301 330.0,304 330.3,307 330.8,310 329.2,313 329.5,316 329.5,319 328.9,322 330.9,325 330.7,328 330.5,331 328.8,334 330.8,337 330.6,340 329.9,343 330.6,346 329.9,349" fill="none" stroke="#6a88e8" stroke-width="1.0" opacity="0.55"/><polyline points="334.3,187 334.1,190 334.4,193 333.9,196 334.6,199 335.6,202 335.5,205 335.8,208 335.5,211 334.4,214 335.1,217 334.8,220 335.7,223 335.1,226 334.4,229 335.3,232 336.1,235 334.3,238 335.9,241 333.8,244 334.4,247 334.4,250 335.6,253 336.1,256 335.6,259 334.6,262 335.9,265 334.6,268 334.4,271 336.0,274 335.3,277 335.5,280 335.4,283 336.1,286 334.9,289 335.8,292 335.5,295 335.9,298 334.8,301 335.5,304 335.2,307 334.5,310 334.3,313 335.3,316 334.0,319 336.0,322 334.1,325 333.9,328 334.1,331 336.0,334 334.6,337 334.1,340 333.9,343 333.9,346 335.5,349" fill="none" stroke="#6a88e8" stroke-width="1.0" opacity="0.55"/><polyline points="339.3,187 339.5,190 339.6,193 338.0,196 339.2,199 338.7,202 339.8,205 339.8,208 339.9,211 338.0,214 339.9,217 340.0,220 340.1,223 338.1,226 338.3,229 338.1,232 337.9,235 339.8,238 339.7,241 339.3,244 339.8,247 339.3,250 338.5,253 338.0,256 338.0,259 339.6,262 338.3,265 338.6,268 338.8,271 337.9,274 338.4,277 338.5,280 339.5,283 338.7,286 338.6,289 340.1,292 339.0,295 339.8,298 339.3,301 337.9,304 338.8,307 338.8,310 339.7,313 338.6,316 339.5,319 339.1,322 338.3,325 339.9,328 338.0,331 339.8,334 338.2,337 337.8,340 338.3,343 339.6,346 340.1,349" fill="none" stroke="#6a88e8" stroke-width="1.0" opacity="0.55"/><polyline points="342.8,187 344.0,190 344.0,193 344.7,196 343.2,199 344.0,202 343.6,205 344.8,208 343.4,211 345.1,214 343.5,217 343.3,220 344.5,223 344.0,226 343.1,229 344.3,232 343.0,235 344.7,238 344.5,241 344.7,244 344.3,247 343.7,250 343.8,253 343.7,256 344.9,259 343.0,262 344.9,265 342.9,268 343.3,271 343.4,274 345.0,277 344.0,280 343.7,283 344.9,286 343.4,289 343.9,292 344.1,295 344.6,298 344.6,301 344.4,304 343.6,307 343.6,310 343.2,313 344.8,316 344.4,319 344.6,322 343.2,325 343.9,328 344.7,331 344.2,334 343.1,337 343.9,340 344.9,343 343.4,346 343.3,349" fill="none" stroke="#6a88e8" stroke-width="1.0" opacity="0.55"/><polyline points="347.5,187 348.5,190 348.8,193 347.2,196 347.2,199 347.4,202 347.6,205 348.1,208 347.2,211 347.6,214 347.3,217 349.1,220 348.5,223 347.0,226 349.1,229 347.0,232 347.7,235 349.2,238 348.7,241 348.6,244 347.8,247 347.3,250 348.3,253 347.1,256 347.3,259 347.7,262 346.9,265 347.8,268 348.7,271 348.5,274 348.0,277 348.3,280 347.9,283 347.1,286 348.2,289 347.8,292 348.6,295 349.0,298 347.8,301 348.2,304 348.6,307 347.8,310 347.3,313 348.5,316 348.9,319 348.7,322 348.5,325 348.8,328 348.4,331 348.3,334 347.9,337 347.6,340 348.3,343 347.0,346 347.8,349" fill="none" stroke="#6a88e8" stroke-width="1.0" opacity="0.55"/><polyline points="317.6,187 317.4,190 317.3,193 316.5,196 316.8,199 316.9,202 317.2,205 316.8,208 317.4,211 317.9,214 316.4,217 317.3,220 317.6,223 316.8,226 317.0,229 317.9,232 316.1,235 317.1,238 316.3,241 317.6,244 317.9,247 317.0,250 316.2,253 317.1,256 317.1,259 317.4,262 317.0,265 317.3,268 317.7,271 317.0,274 316.8,277 317.9,280 316.4,283 317.4,286 316.8,289 317.5,292 316.2,295 318.0,298 316.7,301 316.1,304 316.5,307 316.8,310 316.0,313 316.8,316 316.8,319 317.4,322 316.7,325 316.5,328 316.4,331 317.5,334 317.9,337 317.1,340 316.4,343 317.6,346 316.8,349" fill="none" stroke="#c8d6ff" stroke-width="1.2" opacity="0.85"/><polyline points="326.4,187 326.3,190 327.6,193 327.6,196 327.3,199 326.9,202 327.1,205 326.5,208 327.9,211 326.7,214 327.3,217 327.6,220 327.6,223 326.9,226 326.6,229 327.1,232 326.3,235 327.7,238 326.7,241 327.7,244 326.5,247 326.8,250 326.5,253 326.9,256 326.4,259 326.0,262 327.4,265 326.6,268 326.5,271 326.6,274 327.0,277 326.9,280 327.3,283 327.3,286 326.7,289 327.9,292 327.7,295 326.1,298 327.7,301 327.8,304 327.6,307 326.3,310 327.7,313 327.3,316 326.0,319 326.0,322 327.9,325 327.3,328 326.5,331 326.2,334 326.3,337 326.5,340 327.6,343 326.7,346 326.3,349" fill="none" stroke="#c8d6ff" stroke-width="1.2" opacity="0.85"/><polyline points="334.8,187 334.6,190 333.3,193 334.8,196 334.2,199 334.6,202 334.3,205 334.8,208 334.6,211 334.7,214 333.4,217 334.4,220 334.1,223 334.5,226 333.9,229 334.8,232 334.1,235 333.5,238 333.5,241 333.3,244 334.0,247 333.1,250 333.9,253 333.3,256 334.0,259 334.0,262 334.1,265 334.7,268 333.0,271 334.7,274 333.9,277 334.1,280 334.3,283 334.7,286 333.7,289 333.8,292 334.9,295 333.2,298 334.3,301 334.3,304 333.1,307 334.2,310 334.4,313 334.9,316 333.7,319 335.0,322 334.0,325 334.0,328 334.8,331 333.1,334 334.4,337 334.3,340 333.7,343 334.7,346 333.7,349" fill="none" stroke="#c8d6ff" stroke-width="1.2" opacity="0.85"/><polyline points="339.9,187 340.1,190 340.5,193 339.4,196 339.9,199 339.8,202 340.1,205 340.7,208 339.6,211 340.7,214 339.8,217 340.0,220 339.5,223 340.0,226 340.9,229 340.3,232 340.6,235 339.7,238 339.6,241 339.6,244 340.2,247 340.3,250 340.6,253 339.1,256 340.4,259 340.8,262 340.1,265 339.1,268 339.6,271 339.0,274 339.4,277 340.8,280 340.2,283 340.3,286 340.6,289 340.8,292 340.2,295 340.2,298 340.3,301 340.4,304 340.2,307 340.4,310 339.4,313 340.3,316 339.9,319 340.5,322 339.2,325 339.4,328 339.1,331 340.5,334 340.8,337 340.3,340 339.7,343 340.6,346 340.6,349" fill="none" stroke="#c8d6ff" stroke-width="1.2" opacity="0.85"/><polyline points="346.1,187 345.5,190 345.6,193 345.8,196 345.6,199 345.9,202 346.3,205 346.9,208 345.1,211 346.1,214 345.1,217 345.2,220 346.6,223 346.2,226 346.8,229 345.9,232 345.0,235 345.8,238 346.2,241 346.9,244 347.0,247 346.0,250 345.8,253 345.2,256 346.3,259 345.4,262 345.3,265 345.0,268 345.0,271 346.4,274 345.2,277 346.9,280 345.2,283 346.7,286 345.3,289 345.0,292 346.4,295 345.5,298 346.5,301 345.4,304 345.1,307 346.5,310 346.4,313 346.7,316 346.5,319 345.2,322 346.3,325 346.4,328 345.9,331 346.9,334 345.5,337 346.9,340 346.4,343 345.0,346 345.0,349" fill="none" stroke="#c8d6ff" stroke-width="1.2" opacity="0.85"/><polyline points="281.2,187 281.5,190 280.3,193 280.7,196 281.4,199 280.5,202 281.6,205 281.0,208 280.3,211 280.8,214 281.1,217 280.9,220 281.3,223 280.4,226 281.5,229 280.8,232 281.2,235 281.2,238 280.9,241 280.8,244 281.5,247 281.7,250 281.5,253 281.1,256 280.7,259 280.3,262 281.8,265 281.3,268 281.5,271 280.7,274 281.2,277 281.8,280 281.5,283 281.2,286 280.7,289 280.9,292 281.6,295 280.8,298 281.3,301 281.2,304 281.6,307 281.5,310 280.7,313 280.2,316 280.6,319 280.9,322 281.1,325 281.5,328 281.6,331 280.3,334 281.5,337 281.5,340 281.6,343 281.1,346 280.6,349" fill="none" stroke="#e8eeff" stroke-width="1.5" opacity="1.0"/><polyline points="310.6,187 310.5,190 310.3,193 310.7,196 309.8,199 309.3,202 310.1,205 310.5,208 309.5,211 310.4,214 310.7,217 309.6,220 310.2,223 310.3,226 309.9,229 309.5,232 309.6,235 310.4,238 310.5,241 309.9,244 309.3,247 310.5,250 310.4,253 309.6,256 310.1,259 310.6,262 310.6,265 310.0,268 310.0,271 310.1,274 309.5,277 309.5,280 309.5,283 310.3,286 309.8,289 310.1,292 309.8,295 310.0,298 309.4,301 309.3,304 310.8,307 309.8,310 309.4,313 310.2,316 310.5,319 309.4,322 310.2,325 309.8,328 310.0,331 309.2,334 309.3,337 310.8,340 310.6,343 310.0,346 310.1,349" fill="none" stroke="#e8eeff" stroke-width="1.5" opacity="1.0"/><polyline points="353.6,187 354.4,190 353.9,193 354.7,196 354.4,199 354.5,202 354.7,205 353.6,208 353.3,211 353.5,214 353.5,217 353.3,220 353.3,223 354.1,226 354.6,229 353.9,232 354.7,235 354.7,238 353.3,241 354.2,244 353.8,247 353.4,250 354.7,253 353.6,256 354.1,259 354.2,262 354.7,265 354.3,268 353.8,271 353.9,274 353.5,277 354.7,280 354.8,283 353.6,286 353.3,289 353.6,292 353.8,295 354.6,298 354.6,301 354.5,304 353.3,307 354.5,310 354.3,313 354.2,316 354.8,319 353.3,322 353.4,325 354.4,328 354.7,331 354.3,334 353.7,337 354.1,340 354.4,343 353.4,346 353.7,349" fill="none" stroke="#e8eeff" stroke-width="1.5" opacity="1.0"/><polyline points="283.5,187 283.2,190 284.0,193 283.3,196 283.5,199 283.3,202 284.4,205 283.0,208 284.4,211 283.4,214 283.1,217 284.9,220 283.4,223 284.9,226 284.7,229 284.8,232 283.3,235 283.9,238 283.2,241 284.9,244 284.7,247 284.3,250 283.9,253 283.7,256 284.6,259 284.0,262 284.3,265 283.3,268 283.4,271 283.1,274 284.4,277 284.1,280 283.3,283 284.7,286 283.5,289 283.8,292 283.3,295 283.5,298 284.7,301 283.7,304 283.3,307 284.0,310 283.6,313 284.8,316 283.2,319 285.0,322 283.1,325 284.8,328 284.3,331 283.4,334 284.0,337 283.6,340 283.5,343 283.4,346 283.7,349" fill="none" stroke="#a8bcff" stroke-width="1.2" opacity="0.85"/><polyline points="297.0,187 297.0,190 296.9,193 295.2,196 295.6,199 296.8,202 295.1,205 296.5,208 295.6,211 297.0,214 295.0,217 296.6,220 295.7,223 295.3,226 295.0,229 296.7,232 296.1,235 295.4,238 295.9,241 296.8,244 295.4,247 296.1,250 295.3,253 295.4,256 296.5,259 296.4,262 295.4,265 295.2,268 295.2,271 296.2,274 296.0,277 295.5,280 295.4,283 296.2,286 296.4,289 296.6,292 296.2,295 295.4,298 295.1,301 296.5,304 295.8,307 296.4,310 295.1,313 296.6,316 295.7,319 296.7,322 296.7,325 296.0,328 295.0,331 296.8,334 296.0,337 296.7,340 295.5,343 295.4,346 296.7,349" fill="none" stroke="#a8bcff" stroke-width="1.2" opacity="0.85"/><polyline points="302.7,187 302.3,190 302.7,193 303.2,196 302.0,199 303.0,202 302.9,205 303.0,208 302.2,211 303.4,214 303.6,217 303.7,220 302.6,223 303.4,226 302.8,229 303.5,232 302.1,235 303.7,238 303.9,241 303.0,244 303.0,247 303.1,250 303.1,253 302.0,256 303.9,259 302.4,262 302.4,265 302.2,268 302.5,271 303.6,274 302.1,277 302.2,280 303.4,283 302.4,286 302.0,289 303.2,292 303.2,295 303.0,298 303.4,301 302.2,304 303.7,307 303.4,310 302.1,313 302.2,316 303.0,319 303.0,322 302.6,325 302.2,328 302.8,331 302.3,334 303.2,337 303.7,340 302.3,343 303.1,346 303.5,349" fill="none" stroke="#a8bcff" stroke-width="1.2" opacity="0.85"/><polyline points="322.3,187 323.7,190 323.9,193 322.8,196 322.8,199 323.7,202 323.1,205 322.8,208 323.9,211 323.6,214 322.7,217 322.5,220 322.7,223 322.9,226 324.0,229 323.6,232 323.8,235 323.6,238 323.7,241 322.1,244 323.0,247 323.9,250 323.9,253 322.5,256 322.8,259 323.3,262 322.7,265 323.1,268 322.1,271 322.9,274 323.0,277 322.0,280 322.3,283 323.9,286 323.6,289 323.9,292 323.3,295 323.6,298 323.8,301 323.8,304 322.1,307 323.3,310 322.5,313 323.4,316 322.5,319 323.1,322 323.8,325 323.2,328 322.5,331 323.0,334 322.9,337 323.9,340 322.6,343 322.6,346 323.3,349" fill="none" stroke="#a8bcff" stroke-width="1.2" opacity="0.85"/><polyline points="332.2,187 333.2,190 333.9,193 333.0,196 332.5,199 332.9,202 333.1,205 332.3,208 332.2,211 332.3,214 332.6,217 332.8,220 332.6,223 332.5,226 332.2,229 333.1,232 333.7,235 333.2,238 333.1,241 333.3,244 332.4,247 333.4,250 332.9,253 333.1,256 333.2,259 332.9,262 332.6,265 332.5,268 332.4,271 333.0,274 332.8,277 333.2,280 332.0,283 332.7,286 333.7,289 332.5,292 333.1,295 333.0,298 332.6,301 334.0,304 332.6,307 333.5,310 332.3,313 332.1,316 333.7,319 332.9,322 332.1,325 332.8,328 332.9,331 333.5,334 332.2,337 332.5,340 333.9,343 333.5,346 332.3,349" fill="none" stroke="#a8bcff" stroke-width="1.2" opacity="0.85"/><polyline points="340.7,187 340.7,190 341.4,193 341.2,196 341.7,199 341.6,202 341.0,205 341.5,208 341.5,211 341.5,214 341.0,217 341.6,220 341.4,223 341.8,226 340.3,229 341.7,232 340.0,235 341.5,238 341.2,241 341.0,244 341.9,247 341.1,250 340.8,253 341.6,256 341.7,259 341.2,262 340.8,265 340.9,268 340.9,271 341.4,274 340.6,277 340.8,280 341.1,283 340.8,286 340.6,289 341.6,292 341.7,295 341.0,298 340.9,301 340.4,304 340.6,307 340.3,310 341.2,313 341.2,316 340.2,319 341.8,322 340.6,325 341.7,328 341.7,331 341.9,334 340.4,337 340.9,340 341.8,343 340.0,346 340.1,349" fill="none" stroke="#a8bcff" stroke-width="1.2" opacity="0.85"/><line x1="358.5" y1="0" x2="358.5" y2="350" stroke="#38b038" stroke-width="1" stroke-dasharray="3 3"/><line x1="456.5" y1="0" x2="456.5" y2="350" stroke="#38b038" stroke-width="1" stroke-dasharray="3 3"/><rect x="428.0" y="187" width="1" height="163" fill="#5a78d8" opacity="0.7"/><polyline points="447.2,187 447.0,190 448.0,193 447.7,196 447.1,199 448.2,202 447.0,205 447.0,208 447.4,211 446.7,214" fill="none" stroke="#6a88e8" stroke-width="1" opacity="0.7"/><polyline points="468.7,187 469.2,190 468.6,193 470.1,196 469.4,199 469.1,202 468.0,205 468.7,208 468.8,211 469.1,214 469.2,217 469.9,220 470.1,223 469.0,226 468.9,229 469.3,232 470.2,235 468.6,238" fill="none" stroke="#8aa4ff" stroke-width="1.3" opacity="1"/><rect x="474.0" y="187" width="1" height="163" fill="#9ab0ff" opacity="0.9"/><polyline points="464.1,328 464.9,331 463.0,334 463.5,337 465.4,340 465.0,343 464.0,346 462.8,349" fill="none" stroke="#9ab0ff" stroke-width="1.3" opacity="0.9"/><polyline points="471.2,328 470.6,331 471.0,334 471.5,337 471.2,340 469.8,343 469.0,346 469.4,349" fill="none" stroke="#9ab0ff" stroke-width="1.3" opacity="0.9"/><polyline points="478.0,328 478.0,331 477.1,334 477.0,337 478.4,340 478.3,343 477.6,346 479.5,349" fill="none" stroke="#9ab0ff" stroke-width="1.3" opacity="0.9"/><polyline points="489.4,328 487.6,331 488.7,334 489.9,337 488.4,340 489.6,343 487.5,346 488.4,349" fill="none" stroke="#9ab0ff" stroke-width="1.3" opacity="0.9"/><polyline points="493.0,328 492.3,331 492.5,334 491.1,337 492.0,340 492.2,343 491.3,346 492.4,349" fill="none" stroke="#9ab0ff" stroke-width="1.3" opacity="0.9"/><polyline points="507.1,328 508.5,331 507.2,334 506.7,337 505.9,340 506.0,343 507.8,346 505.8,349" fill="none" stroke="#9ab0ff" stroke-width="1.3" opacity="0.9"/><polyline points="508.8,328 509.0,331 510.1,334 511.0,337 510.3,340 510.9,343 508.7,346 508.5,349" fill="none" stroke="#9ab0ff" stroke-width="1.3" opacity="0.9"/><polyline points="521.8,328 520.5,331 521.6,334 520.6,337 520.0,340 520.3,343 519.8,346 522.2,349" fill="none" stroke="#9ab0ff" stroke-width="1.3" opacity="0.9"/><polyline points="525.2,328 524.5,331 524.8,334 524.7,337 523.7,340 526.2,343 525.2,346 526.4,349" fill="none" stroke="#9ab0ff" stroke-width="1.3" opacity="0.9"/><polyline points="508.9,187 509.3,190 508.4,193 507.9,196 510.0,199 509.9,202 508.6,205 510.0,208 509.8,211 508.5,214 509.2,217 510.1,220 509.0,223 510.1,226 508.4,229" fill="none" stroke="#8aa4ff" stroke-width="1.3" opacity="0.9"/><rect x="541.0" y="187" width="2" height="4" fill="#7c98f0" opacity="0.85"/><rect x="541.0" y="194" width="2" height="6" fill="#7c98f0" opacity="0.85"/><rect x="541.0" y="203" width="2" height="2" fill="#7c98f0" opacity="0.85"/><rect x="541.0" y="207" width="2" height="3" fill="#7c98f0" opacity="0.85"/><rect x="541.0" y="212" width="2" height="6" fill="#7c98f0" opacity="0.85"/><rect x="541.0" y="220" width="2" height="1" fill="#7c98f0" opacity="0.85"/><rect x="541.0" y="222" width="2" height="1" fill="#7c98f0" opacity="0.85"/><rect x="541.0" y="224" width="2" height="2" fill="#7c98f0" opacity="0.85"/><rect x="541.0" y="228" width="2" height="4" fill="#7c98f0" opacity="0.85"/><rect x="541.0" y="233" width="2" height="1" fill="#7c98f0" opacity="0.85"/><rect x="541.0" y="236" width="2" height="4" fill="#7c98f0" opacity="0.85"/><rect x="541.0" y="243" width="2" height="3" fill="#7c98f0" opacity="0.85"/><rect x="541.0" y="247" width="2" height="3" fill="#7c98f0" opacity="0.85"/><rect x="541.0" y="253" width="2" height="7" fill="#7c98f0" opacity="0.85"/><rect x="541.0" y="262" width="2" height="3" fill="#7c98f0" opacity="0.85"/><rect x="541.0" y="267" width="2" height="6" fill="#7c98f0" opacity="0.85"/><rect x="541.0" y="274" width="2" height="1" fill="#7c98f0" opacity="0.85"/><rect x="541.0" y="277" width="2" height="7" fill="#7c98f0" opacity="0.85"/><rect x="541.0" y="286" width="2" height="4" fill="#7c98f0" opacity="0.85"/><rect x="543.0" y="187" width="2" height="4" fill="#7c98f0" opacity="0.85"/><rect x="543.0" y="192" width="2" height="4" fill="#7c98f0" opacity="0.85"/><rect x="543.0" y="198" width="2" height="3" fill="#7c98f0" opacity="0.85"/><rect x="543.0" y="202" width="2" height="4" fill="#7c98f0" opacity="0.85"/><rect x="543.0" y="207" width="2" height="3" fill="#7c98f0" opacity="0.85"/><rect x="543.0" y="213" width="2" height="1" fill="#7c98f0" opacity="0.85"/><rect x="543.0" y="216" width="2" height="7" fill="#7c98f0" opacity="0.85"/><rect x="543.0" y="224" width="2" height="2" fill="#7c98f0" opacity="0.85"/><rect x="543.0" y="229" width="2" height="2" fill="#7c98f0" opacity="0.85"/><rect x="543.0" y="232" width="2" height="2" fill="#7c98f0" opacity="0.85"/><rect x="543.0" y="236" width="2" height="5" fill="#7c98f0" opacity="0.85"/><rect x="543.0" y="242" width="2" height="5" fill="#7c98f0" opacity="0.85"/><rect x="543.0" y="249" width="2" height="4" fill="#7c98f0" opacity="0.85"/><rect x="543.0" y="254" width="2" height="2" fill="#7c98f0" opacity="0.85"/><rect x="543.0" y="258" width="2" height="3" fill="#7c98f0" opacity="0.85"/><rect x="543.0" y="262" width="2" height="6" fill="#7c98f0" opacity="0.85"/><rect x="543.0" y="270" width="2" height="4" fill="#7c98f0" opacity="0.85"/><rect x="543.0" y="277" width="2" height="5" fill="#7c98f0" opacity="0.85"/><rect x="543.0" y="283" width="2" height="3" fill="#7c98f0" opacity="0.85"/><rect x="543.0" y="288" width="2" height="2" fill="#7c98f0" opacity="0.85"/><rect x="545.0" y="187" width="2" height="2" fill="#7c98f0" opacity="0.85"/><rect x="545.0" y="191" width="2" height="6" fill="#7c98f0" opacity="0.85"/><rect x="545.0" y="198" width="2" height="6" fill="#7c98f0" opacity="0.85"/><rect x="545.0" y="206" width="2" height="5" fill="#7c98f0" opacity="0.85"/><rect x="545.0" y="213" width="2" height="5" fill="#7c98f0" opacity="0.85"/><rect x="545.0" y="220" width="2" height="5" fill="#7c98f0" opacity="0.85"/><rect x="545.0" y="226" width="2" height="4" fill="#7c98f0" opacity="0.85"/><rect x="545.0" y="233" width="2" height="5" fill="#7c98f0" opacity="0.85"/><rect x="545.0" y="239" width="2" height="2" fill="#7c98f0" opacity="0.85"/><rect x="545.0" y="242" width="2" height="6" fill="#7c98f0" opacity="0.85"/><rect x="545.0" y="251" width="2" height="1" fill="#7c98f0" opacity="0.85"/><rect x="545.0" y="255" width="2" height="7" fill="#7c98f0" opacity="0.85"/><rect x="545.0" y="264" width="2" height="6" fill="#7c98f0" opacity="0.85"/><rect x="545.0" y="272" width="2" height="1" fill="#7c98f0" opacity="0.85"/><rect x="545.0" y="276" width="2" height="6" fill="#7c98f0" opacity="0.85"/><rect x="545.0" y="285" width="2" height="2" fill="#7c98f0" opacity="0.85"/><rect x="545.0" y="289" width="2" height="1" fill="#7c98f0" opacity="0.85"/><rect x="547.0" y="187" width="2" height="6" fill="#7c98f0" opacity="0.85"/><rect x="547.0" y="194" width="2" height="6" fill="#7c98f0" opacity="0.85"/><rect x="547.0" y="201" width="2" height="7" fill="#7c98f0" opacity="0.85"/><rect x="547.0" y="209" width="2" height="3" fill="#7c98f0" opacity="0.85"/><rect x="547.0" y="213" width="2" height="6" fill="#7c98f0" opacity="0.85"/><rect x="547.0" y="220" width="2" height="1" fill="#7c98f0" opacity="0.85"/><rect x="547.0" y="224" width="2" height="3" fill="#7c98f0" opacity="0.85"/><rect x="547.0" y="230" width="2" height="7" fill="#7c98f0" opacity="0.85"/><rect x="547.0" y="239" width="2" height="2" fill="#7c98f0" opacity="0.85"/><rect x="547.0" y="242" width="2" height="6" fill="#7c98f0" opacity="0.85"/><rect x="547.0" y="250" width="2" height="1" fill="#7c98f0" opacity="0.85"/><rect x="547.0" y="252" width="2" height="3" fill="#7c98f0" opacity="0.85"/><rect x="547.0" y="256" width="2" height="7" fill="#7c98f0" opacity="0.85"/><rect x="547.0" y="266" width="2" height="4" fill="#7c98f0" opacity="0.85"/><rect x="547.0" y="272" width="2" height="3" fill="#7c98f0" opacity="0.85"/><rect x="547.0" y="277" width="2" height="7" fill="#7c98f0" opacity="0.85"/><rect x="547.0" y="286" width="2" height="4" fill="#7c98f0" opacity="0.85"/><rect x="547.0" y="279" width="2" height="6" fill="#7c98f0" opacity="0.85"/><rect x="547.0" y="286" width="2" height="3" fill="#7c98f0" opacity="0.85"/><rect x="547.0" y="290" width="2" height="1" fill="#7c98f0" opacity="0.85"/><rect x="547.0" y="293" width="2" height="6" fill="#7c98f0" opacity="0.85"/><rect x="547.0" y="302" width="2" height="6" fill="#7c98f0" opacity="0.85"/><rect x="547.0" y="310" width="2" height="4" fill="#7c98f0" opacity="0.85"/><rect x="547.0" y="315" width="2" height="6" fill="#7c98f0" opacity="0.85"/><rect x="547.0" y="324" width="2" height="6" fill="#7c98f0" opacity="0.85"/><rect x="547.0" y="332" width="2" height="2" fill="#7c98f0" opacity="0.85"/><rect x="547.0" y="336" width="2" height="3" fill="#7c98f0" opacity="0.85"/><rect x="547.0" y="342" width="2" height="1" fill="#7c98f0" opacity="0.85"/><rect x="547.0" y="344" width="2" height="3" fill="#7c98f0" opacity="0.85"/><rect x="547.0" y="348" width="2" height="2" fill="#7c98f0" opacity="0.85"/><rect x="549.0" y="279" width="2" height="6" fill="#7c98f0" opacity="0.85"/><rect x="549.0" y="286" width="2" height="6" fill="#7c98f0" opacity="0.85"/><rect x="549.0" y="295" width="2" height="1" fill="#7c98f0" opacity="0.85"/><rect x="549.0" y="298" width="2" height="1" fill="#7c98f0" opacity="0.85"/><rect x="549.0" y="302" width="2" height="2" fill="#7c98f0" opacity="0.85"/><rect x="549.0" y="306" width="2" height="2" fill="#7c98f0" opacity="0.85"/><rect x="549.0" y="310" width="2" height="2" fill="#7c98f0" opacity="0.85"/><rect x="549.0" y="314" width="2" height="6" fill="#7c98f0" opacity="0.85"/><rect x="549.0" y="321" width="2" height="5" fill="#7c98f0" opacity="0.85"/><rect x="549.0" y="328" width="2" height="6" fill="#7c98f0" opacity="0.85"/><rect x="549.0" y="337" width="2" height="2" fill="#7c98f0" opacity="0.85"/><rect x="549.0" y="342" width="2" height="7" fill="#7c98f0" opacity="0.85"/><rect x="551.0" y="279" width="2" height="5" fill="#7c98f0" opacity="0.85"/><rect x="551.0" y="286" width="2" height="6" fill="#7c98f0" opacity="0.85"/><rect x="551.0" y="295" width="2" height="3" fill="#7c98f0" opacity="0.85"/><rect x="551.0" y="300" width="2" height="6" fill="#7c98f0" opacity="0.85"/><rect x="551.0" y="309" width="2" height="5" fill="#7c98f0" opacity="0.85"/><rect x="551.0" y="316" width="2" height="1" fill="#7c98f0" opacity="0.85"/><rect x="551.0" y="318" width="2" height="7" fill="#7c98f0" opacity="0.85"/><rect x="551.0" y="328" width="2" height="3" fill="#7c98f0" opacity="0.85"/><rect x="551.0" y="332" width="2" height="7" fill="#7c98f0" opacity="0.85"/><rect x="551.0" y="342" width="2" height="5" fill="#7c98f0" opacity="0.85"/><rect x="553.0" y="279" width="2" height="1" fill="#7c98f0" opacity="0.85"/><rect x="553.0" y="281" width="2" height="6" fill="#7c98f0" opacity="0.85"/><rect x="553.0" y="288" width="2" height="1" fill="#7c98f0" opacity="0.85"/><rect x="553.0" y="291" width="2" height="2" fill="#7c98f0" opacity="0.85"/><rect x="553.0" y="295" width="2" height="6" fill="#7c98f0" opacity="0.85"/><rect x="553.0" y="302" width="2" height="4" fill="#7c98f0" opacity="0.85"/><rect x="553.0" y="309" width="2" height="6" fill="#7c98f0" opacity="0.85"/><rect x="553.0" y="317" width="2" height="6" fill="#7c98f0" opacity="0.85"/><rect x="553.0" y="326" width="2" height="7" fill="#7c98f0" opacity="0.85"/><rect x="553.0" y="334" width="2" height="3" fill="#7c98f0" opacity="0.85"/><rect x="553.0" y="340" width="2" height="1" fill="#7c98f0" opacity="0.85"/><rect x="553.0" y="343" width="2" height="4" fill="#7c98f0" opacity="0.85"/><rect x="553.0" y="349" width="2" height="1" fill="#7c98f0" opacity="0.85"/><rect x="546.0" y="187" width="1" height="163" fill="#a8bcff" opacity="0.8"/><rect x="557.0" y="187" width="1" height="5" fill="#4a64c8" opacity="0.6"/><rect x="557.0" y="196" width="1" height="5" fill="#4a64c8" opacity="0.6"/><rect x="557.0" y="202" width="1" height="2" fill="#4a64c8" opacity="0.6"/><rect x="557.0" y="208" width="1" height="5" fill="#4a64c8" opacity="0.6"/><rect x="557.0" y="215" width="1" height="4" fill="#4a64c8" opacity="0.6"/><rect x="557.0" y="221" width="1" height="1" fill="#4a64c8" opacity="0.6"/><rect x="557.0" y="225" width="1" height="2" fill="#4a64c8" opacity="0.6"/><rect x="557.0" y="229" width="1" height="2" fill="#4a64c8" opacity="0.6"/><rect x="557.0" y="234" width="1" height="2" fill="#4a64c8" opacity="0.6"/><rect x="557.0" y="237" width="1" height="2" fill="#4a64c8" opacity="0.6"/><rect x="557.0" y="242" width="1" height="3" fill="#4a64c8" opacity="0.6"/><rect x="557.0" y="249" width="1" height="1" fill="#4a64c8" opacity="0.6"/><rect x="557.0" y="252" width="1" height="3" fill="#4a64c8" opacity="0.6"/><rect x="557.0" y="257" width="1" height="2" fill="#4a64c8" opacity="0.6"/><rect x="557.0" y="263" width="1" height="4" fill="#4a64c8" opacity="0.6"/><rect x="557.0" y="269" width="1" height="2" fill="#4a64c8" opacity="0.6"/><rect x="557.0" y="272" width="1" height="5" fill="#4a64c8" opacity="0.6"/><rect x="557.0" y="281" width="1" height="2" fill="#4a64c8" opacity="0.6"/><rect x="557.0" y="286" width="1" height="3" fill="#4a64c8" opacity="0.6"/><rect x="557.0" y="291" width="1" height="2" fill="#4a64c8" opacity="0.6"/><rect x="557.0" y="295" width="1" height="3" fill="#4a64c8" opacity="0.6"/><rect x="557.0" y="299" width="1" height="5" fill="#4a64c8" opacity="0.6"/><rect x="557.0" y="308" width="1" height="2" fill="#4a64c8" opacity="0.6"/><rect x="557.0" y="312" width="1" height="5" fill="#4a64c8" opacity="0.6"/><rect x="557.0" y="321" width="1" height="4" fill="#4a64c8" opacity="0.6"/><rect x="557.0" y="327" width="1" height="1" fill="#4a64c8" opacity="0.6"/><rect x="557.0" y="331" width="1" height="1" fill="#4a64c8" opacity="0.6"/><rect x="557.0" y="335" width="1" height="4" fill="#4a64c8" opacity="0.6"/><rect x="557.0" y="341" width="1" height="1" fill="#4a64c8" opacity="0.6"/><rect x="557.0" y="343" width="1" height="3" fill="#4a64c8" opacity="0.6"/><rect x="557.0" y="349" width="1" height="1" fill="#4a64c8" opacity="0.6"/><rect x="585.0" y="187" width="1" height="3" fill="#4a64c8" opacity="0.6"/><rect x="585.0" y="194" width="1" height="1" fill="#4a64c8" opacity="0.6"/><rect x="585.0" y="197" width="1" height="3" fill="#4a64c8" opacity="0.6"/><rect x="585.0" y="204" width="1" height="4" fill="#4a64c8" opacity="0.6"/><rect x="585.0" y="211" width="1" height="3" fill="#4a64c8" opacity="0.6"/><rect x="585.0" y="216" width="1" height="5" fill="#4a64c8" opacity="0.6"/><rect x="585.0" y="222" width="1" height="1" fill="#4a64c8" opacity="0.6"/><rect x="585.0" y="224" width="1" height="4" fill="#4a64c8" opacity="0.6"/><rect x="585.0" y="232" width="1" height="1" fill="#4a64c8" opacity="0.6"/><rect x="585.0" y="236" width="1" height="5" fill="#4a64c8" opacity="0.6"/><rect x="585.0" y="244" width="1" height="1" fill="#4a64c8" opacity="0.6"/><rect x="585.0" y="249" width="1" height="4" fill="#4a64c8" opacity="0.6"/><rect x="585.0" y="257" width="1" height="2" fill="#4a64c8" opacity="0.6"/><rect x="585.0" y="262" width="1" height="1" fill="#4a64c8" opacity="0.6"/><rect x="585.0" y="266" width="1" height="1" fill="#4a64c8" opacity="0.6"/><rect x="585.0" y="270" width="1" height="5" fill="#4a64c8" opacity="0.6"/><rect x="585.0" y="278" width="1" height="2" fill="#4a64c8" opacity="0.6"/><rect x="585.0" y="281" width="1" height="2" fill="#4a64c8" opacity="0.6"/><rect x="585.0" y="284" width="1" height="1" fill="#4a64c8" opacity="0.6"/><rect x="585.0" y="289" width="1" height="2" fill="#4a64c8" opacity="0.6"/><rect x="585.0" y="294" width="1" height="3" fill="#4a64c8" opacity="0.6"/><rect x="585.0" y="299" width="1" height="5" fill="#4a64c8" opacity="0.6"/><rect x="585.0" y="306" width="1" height="1" fill="#4a64c8" opacity="0.6"/><rect x="585.0" y="310" width="1" height="5" fill="#4a64c8" opacity="0.6"/><rect x="585.0" y="318" width="1" height="4" fill="#4a64c8" opacity="0.6"/><rect x="585.0" y="324" width="1" height="3" fill="#4a64c8" opacity="0.6"/><rect x="585.0" y="330" width="1" height="2" fill="#4a64c8" opacity="0.6"/><rect x="585.0" y="335" width="1" height="2" fill="#4a64c8" opacity="0.6"/><rect x="585.0" y="340" width="1" height="3" fill="#4a64c8" opacity="0.6"/><rect x="585.0" y="345" width="1" height="1" fill="#4a64c8" opacity="0.6"/><rect x="585.0" y="347" width="1" height="1" fill="#4a64c8" opacity="0.6"/><rect x="587.0" y="187" width="1" height="1" fill="#4a64c8" opacity="0.6"/><rect x="587.0" y="190" width="1" height="4" fill="#4a64c8" opacity="0.6"/><rect x="587.0" y="198" width="1" height="4" fill="#4a64c8" opacity="0.6"/><rect x="587.0" y="204" width="1" height="3" fill="#4a64c8" opacity="0.6"/><rect x="587.0" y="208" width="1" height="2" fill="#4a64c8" opacity="0.6"/><rect x="587.0" y="212" width="1" height="2" fill="#4a64c8" opacity="0.6"/><rect x="587.0" y="216" width="1" height="4" fill="#4a64c8" opacity="0.6"/><rect x="587.0" y="224" width="1" height="1" fill="#4a64c8" opacity="0.6"/><rect x="587.0" y="226" width="1" height="4" fill="#4a64c8" opacity="0.6"/><rect x="587.0" y="234" width="1" height="2" fill="#4a64c8" opacity="0.6"/><rect x="587.0" y="238" width="1" height="3" fill="#4a64c8" opacity="0.6"/><rect x="587.0" y="242" width="1" height="1" fill="#4a64c8" opacity="0.6"/><rect x="587.0" y="247" width="1" height="2" fill="#4a64c8" opacity="0.6"/><rect x="587.0" y="252" width="1" height="1" fill="#4a64c8" opacity="0.6"/><rect x="587.0" y="254" width="1" height="5" fill="#4a64c8" opacity="0.6"/><rect x="587.0" y="263" width="1" height="3" fill="#4a64c8" opacity="0.6"/><rect x="587.0" y="267" width="1" height="4" fill="#4a64c8" opacity="0.6"/><rect x="587.0" y="272" width="1" height="2" fill="#4a64c8" opacity="0.6"/><rect x="587.0" y="276" width="1" height="4" fill="#4a64c8" opacity="0.6"/><rect x="587.0" y="283" width="1" height="1" fill="#4a64c8" opacity="0.6"/><rect x="587.0" y="288" width="1" height="5" fill="#4a64c8" opacity="0.6"/><rect x="587.0" y="296" width="1" height="5" fill="#4a64c8" opacity="0.6"/><rect x="587.0" y="303" width="1" height="4" fill="#4a64c8" opacity="0.6"/><rect x="587.0" y="308" width="1" height="5" fill="#4a64c8" opacity="0.6"/><rect x="587.0" y="316" width="1" height="5" fill="#4a64c8" opacity="0.6"/><rect x="587.0" y="325" width="1" height="4" fill="#4a64c8" opacity="0.6"/><rect x="587.0" y="331" width="1" height="4" fill="#4a64c8" opacity="0.6"/><rect x="587.0" y="336" width="1" height="1" fill="#4a64c8" opacity="0.6"/><rect x="587.0" y="340" width="1" height="5" fill="#4a64c8" opacity="0.6"/><rect x="587.0" y="348" width="1" height="2" fill="#4a64c8" opacity="0.6"/><rect x="517.0" y="187" width="1" height="3" fill="#4a64c8" opacity="0.6"/><rect x="517.0" y="194" width="1" height="2" fill="#4a64c8" opacity="0.6"/><rect x="517.0" y="199" width="1" height="3" fill="#4a64c8" opacity="0.6"/><rect x="517.0" y="203" width="1" height="2" fill="#4a64c8" opacity="0.6"/><rect x="517.0" y="207" width="1" height="4" fill="#4a64c8" opacity="0.6"/><rect x="517.0" y="212" width="1" height="2" fill="#4a64c8" opacity="0.6"/><rect x="517.0" y="217" width="1" height="5" fill="#4a64c8" opacity="0.6"/><rect x="517.0" y="226" width="1" height="3" fill="#4a64c8" opacity="0.6"/><rect x="517.0" y="231" width="1" height="5" fill="#4a64c8" opacity="0.6"/><rect x="517.0" y="240" width="1" height="4" fill="#4a64c8" opacity="0.6"/><rect x="517.0" y="247" width="1" height="1" fill="#4a64c8" opacity="0.6"/><rect x="517.0" y="250" width="1" height="2" fill="#4a64c8" opacity="0.6"/><rect x="517.0" y="254" width="1" height="5" fill="#4a64c8" opacity="0.6"/><rect x="517.0" y="260" width="1" height="2" fill="#4a64c8" opacity="0.6"/><rect x="517.0" y="265" width="1" height="1" fill="#4a64c8" opacity="0.6"/><rect x="517.0" y="268" width="1" height="5" fill="#4a64c8" opacity="0.6"/><rect x="517.0" y="276" width="1" height="4" fill="#4a64c8" opacity="0.6"/><rect x="517.0" y="282" width="1" height="5" fill="#4a64c8" opacity="0.6"/><rect x="517.0" y="291" width="1" height="2" fill="#4a64c8" opacity="0.6"/><rect x="517.0" y="294" width="1" height="5" fill="#4a64c8" opacity="0.6"/><rect x="517.0" y="300" width="1" height="4" fill="#4a64c8" opacity="0.6"/><rect x="517.0" y="305" width="1" height="4" fill="#4a64c8" opacity="0.6"/><rect x="517.0" y="311" width="1" height="5" fill="#4a64c8" opacity="0.6"/><rect x="517.0" y="317" width="1" height="5" fill="#4a64c8" opacity="0.6"/><rect x="517.0" y="323" width="1" height="4" fill="#4a64c8" opacity="0.6"/><rect x="517.0" y="331" width="1" height="5" fill="#4a64c8" opacity="0.6"/><rect x="517.0" y="338" width="1" height="2" fill="#4a64c8" opacity="0.6"/><rect x="517.0" y="344" width="1" height="1" fill="#4a64c8" opacity="0.6"/><rect x="517.0" y="347" width="1" height="3" fill="#4a64c8" opacity="0.6"/><rect x="521.0" y="187" width="1" height="4" fill="#4a64c8" opacity="0.6"/><rect x="521.0" y="193" width="1" height="1" fill="#4a64c8" opacity="0.6"/><rect x="521.0" y="197" width="1" height="1" fill="#4a64c8" opacity="0.6"/><rect x="521.0" y="199" width="1" height="5" fill="#4a64c8" opacity="0.6"/><rect x="521.0" y="206" width="1" height="4" fill="#4a64c8" opacity="0.6"/><rect x="521.0" y="213" width="1" height="1" fill="#4a64c8" opacity="0.6"/><rect x="521.0" y="216" width="1" height="4" fill="#4a64c8" opacity="0.6"/><rect x="521.0" y="221" width="1" height="5" fill="#4a64c8" opacity="0.6"/><rect x="521.0" y="228" width="1" height="5" fill="#4a64c8" opacity="0.6"/><rect x="521.0" y="234" width="1" height="3" fill="#4a64c8" opacity="0.6"/><rect x="521.0" y="239" width="1" height="3" fill="#4a64c8" opacity="0.6"/><rect x="521.0" y="245" width="1" height="1" fill="#4a64c8" opacity="0.6"/><rect x="521.0" y="249" width="1" height="1" fill="#4a64c8" opacity="0.6"/><rect x="521.0" y="252" width="1" height="3" fill="#4a64c8" opacity="0.6"/><rect x="521.0" y="258" width="1" height="4" fill="#4a64c8" opacity="0.6"/><rect x="521.0" y="263" width="1" height="5" fill="#4a64c8" opacity="0.6"/><rect x="521.0" y="271" width="1" height="1" fill="#4a64c8" opacity="0.6"/><rect x="521.0" y="275" width="1" height="5" fill="#4a64c8" opacity="0.6"/><rect x="521.0" y="283" width="1" height="5" fill="#4a64c8" opacity="0.6"/><rect x="521.0" y="289" width="1" height="1" fill="#4a64c8" opacity="0.6"/><rect x="521.0" y="292" width="1" height="3" fill="#4a64c8" opacity="0.6"/><rect x="521.0" y="298" width="1" height="2" fill="#4a64c8" opacity="0.6"/><rect x="521.0" y="304" width="1" height="1" fill="#4a64c8" opacity="0.6"/><rect x="521.0" y="309" width="1" height="1" fill="#4a64c8" opacity="0.6"/><rect x="521.0" y="311" width="1" height="4" fill="#4a64c8" opacity="0.6"/><rect x="521.0" y="316" width="1" height="1" fill="#4a64c8" opacity="0.6"/><rect x="521.0" y="320" width="1" height="2" fill="#4a64c8" opacity="0.6"/><rect x="521.0" y="324" width="1" height="5" fill="#4a64c8" opacity="0.6"/><rect x="521.0" y="332" width="1" height="4" fill="#4a64c8" opacity="0.6"/><rect x="521.0" y="338" width="1" height="5" fill="#4a64c8" opacity="0.6"/><rect x="521.0" y="346" width="1" height="4" fill="#4a64c8" opacity="0.6"/><rect x="645.0" y="194" width="2" height="12" fill="#c8d4ff" opacity="1"/><rect x="646.0" y="196" width="2" height="18" fill="#c8d4ff" opacity="0.8"/><rect x="667.0" y="187" width="2" height="13" fill="#c8d4ff" opacity="1"/><rect x="623.0" y="187" width="1" height="1" fill="#4a64c8" opacity="0.7795065893056663"/><rect x="623.0" y="189" width="1" height="3" fill="#4a64c8" opacity="0.7795065893056663"/><rect x="623.0" y="194" width="1" height="4" fill="#4a64c8" opacity="0.7795065893056663"/><rect x="623.0" y="203" width="1" height="4" fill="#4a64c8" opacity="0.7795065893056663"/><rect x="623.0" y="208" width="1" height="1" fill="#4a64c8" opacity="0.7795065893056663"/><rect x="623.0" y="210" width="1" height="2" fill="#4a64c8" opacity="0.7795065893056663"/><rect x="623.0" y="217" width="1" height="5" fill="#4a64c8" opacity="0.7795065893056663"/><rect x="623.0" y="226" width="1" height="4" fill="#4a64c8" opacity="0.7795065893056663"/><rect x="623.0" y="232" width="1" height="4" fill="#4a64c8" opacity="0.7795065893056663"/><rect x="623.0" y="240" width="1" height="2" fill="#4a64c8" opacity="0.7795065893056663"/><rect x="623.0" y="247" width="1" height="5" fill="#4a64c8" opacity="0.7795065893056663"/><rect x="623.0" y="253" width="1" height="3" fill="#4a64c8" opacity="0.7795065893056663"/><rect x="623.0" y="259" width="1" height="5" fill="#4a64c8" opacity="0.7795065893056663"/><rect x="623.0" y="266" width="1" height="3" fill="#4a64c8" opacity="0.7795065893056663"/><rect x="623.0" y="271" width="1" height="5" fill="#4a64c8" opacity="0.7795065893056663"/><rect x="623.0" y="281" width="1" height="1" fill="#4a64c8" opacity="0.7795065893056663"/><rect x="623.0" y="284" width="1" height="2" fill="#4a64c8" opacity="0.7795065893056663"/><rect x="623.0" y="289" width="1" height="4" fill="#4a64c8" opacity="0.7795065893056663"/><rect x="623.0" y="296" width="1" height="5" fill="#4a64c8" opacity="0.7795065893056663"/><rect x="623.0" y="305" width="1" height="4" fill="#4a64c8" opacity="0.7795065893056663"/><rect x="623.0" y="312" width="1" height="3" fill="#4a64c8" opacity="0.7795065893056663"/><rect x="623.0" y="316" width="1" height="3" fill="#4a64c8" opacity="0.7795065893056663"/><rect x="623.0" y="324" width="1" height="4" fill="#4a64c8" opacity="0.7795065893056663"/><rect x="623.0" y="331" width="1" height="2" fill="#4a64c8" opacity="0.7795065893056663"/><rect x="623.0" y="334" width="1" height="2" fill="#4a64c8" opacity="0.7795065893056663"/><rect x="623.0" y="340" width="1" height="5" fill="#4a64c8" opacity="0.7795065893056663"/><rect x="623.0" y="346" width="1" height="2" fill="#4a64c8" opacity="0.7795065893056663"/><rect x="628.0" y="187" width="1" height="3" fill="#4a64c8" opacity="0.5090667497647737"/><rect x="628.0" y="191" width="1" height="5" fill="#4a64c8" opacity="0.5090667497647737"/><rect x="628.0" y="199" width="1" height="3" fill="#4a64c8" opacity="0.5090667497647737"/><rect x="628.0" y="207" width="1" height="5" fill="#4a64c8" opacity="0.5090667497647737"/><rect x="628.0" y="217" width="1" height="5" fill="#4a64c8" opacity="0.5090667497647737"/><rect x="628.0" y="224" width="1" height="1" fill="#4a64c8" opacity="0.5090667497647737"/><rect x="628.0" y="230" width="1" height="1" fill="#4a64c8" opacity="0.5090667497647737"/><rect x="628.0" y="233" width="1" height="4" fill="#4a64c8" opacity="0.5090667497647737"/><rect x="628.0" y="242" width="1" height="1" fill="#4a64c8" opacity="0.5090667497647737"/><rect x="628.0" y="246" width="1" height="3" fill="#4a64c8" opacity="0.5090667497647737"/><rect x="628.0" y="251" width="1" height="2" fill="#4a64c8" opacity="0.5090667497647737"/><rect x="628.0" y="254" width="1" height="3" fill="#4a64c8" opacity="0.5090667497647737"/><rect x="628.0" y="260" width="1" height="3" fill="#4a64c8" opacity="0.5090667497647737"/><rect x="628.0" y="268" width="1" height="2" fill="#4a64c8" opacity="0.5090667497647737"/><rect x="628.0" y="273" width="1" height="5" fill="#4a64c8" opacity="0.5090667497647737"/><rect x="628.0" y="282" width="1" height="3" fill="#4a64c8" opacity="0.5090667497647737"/><rect x="628.0" y="286" width="1" height="3" fill="#4a64c8" opacity="0.5090667497647737"/><rect x="628.0" y="292" width="1" height="4" fill="#4a64c8" opacity="0.5090667497647737"/><rect x="628.0" y="301" width="1" height="3" fill="#4a64c8" opacity="0.5090667497647737"/><rect x="628.0" y="306" width="1" height="2" fill="#4a64c8" opacity="0.5090667497647737"/><rect x="628.0" y="311" width="1" height="2" fill="#4a64c8" opacity="0.5090667497647737"/><rect x="628.0" y="315" width="1" height="2" fill="#4a64c8" opacity="0.5090667497647737"/><rect x="628.0" y="318" width="1" height="4" fill="#4a64c8" opacity="0.5090667497647737"/><rect x="628.0" y="326" width="1" height="4" fill="#4a64c8" opacity="0.5090667497647737"/><rect x="628.0" y="334" width="1" height="5" fill="#4a64c8" opacity="0.5090667497647737"/><rect x="628.0" y="342" width="1" height="2" fill="#4a64c8" opacity="0.5090667497647737"/><rect x="628.0" y="349" width="1" height="1" fill="#4a64c8" opacity="0.5090667497647737"/><rect x="654.0" y="187" width="1" height="3" fill="#4a64c8" opacity="0.5205957911010186"/><rect x="654.0" y="193" width="1" height="5" fill="#4a64c8" opacity="0.5205957911010186"/><rect x="654.0" y="203" width="1" height="3" fill="#4a64c8" opacity="0.5205957911010186"/><rect x="654.0" y="207" width="1" height="2" fill="#4a64c8" opacity="0.5205957911010186"/><rect x="654.0" y="214" width="1" height="1" fill="#4a64c8" opacity="0.5205957911010186"/><rect x="654.0" y="220" width="1" height="2" fill="#4a64c8" opacity="0.5205957911010186"/><rect x="654.0" y="225" width="1" height="5" fill="#4a64c8" opacity="0.5205957911010186"/><rect x="654.0" y="233" width="1" height="4" fill="#4a64c8" opacity="0.5205957911010186"/><rect x="654.0" y="240" width="1" height="4" fill="#4a64c8" opacity="0.5205957911010186"/><rect x="654.0" y="245" width="1" height="4" fill="#4a64c8" opacity="0.5205957911010186"/><rect x="654.0" y="252" width="1" height="2" fill="#4a64c8" opacity="0.5205957911010186"/><rect x="654.0" y="257" width="1" height="3" fill="#4a64c8" opacity="0.5205957911010186"/><rect x="654.0" y="265" width="1" height="1" fill="#4a64c8" opacity="0.5205957911010186"/><rect x="654.0" y="268" width="1" height="3" fill="#4a64c8" opacity="0.5205957911010186"/><rect x="654.0" y="273" width="1" height="1" fill="#4a64c8" opacity="0.5205957911010186"/><rect x="654.0" y="276" width="1" height="1" fill="#4a64c8" opacity="0.5205957911010186"/><rect x="654.0" y="281" width="1" height="4" fill="#4a64c8" opacity="0.5205957911010186"/><rect x="654.0" y="287" width="1" height="5" fill="#4a64c8" opacity="0.5205957911010186"/><rect x="654.0" y="295" width="1" height="5" fill="#4a64c8" opacity="0.5205957911010186"/><rect x="654.0" y="301" width="1" height="2" fill="#4a64c8" opacity="0.5205957911010186"/><rect x="654.0" y="305" width="1" height="1" fill="#4a64c8" opacity="0.5205957911010186"/><rect x="654.0" y="308" width="1" height="5" fill="#4a64c8" opacity="0.5205957911010186"/><rect x="654.0" y="314" width="1" height="1" fill="#4a64c8" opacity="0.5205957911010186"/><rect x="654.0" y="316" width="1" height="5" fill="#4a64c8" opacity="0.5205957911010186"/><rect x="654.0" y="324" width="1" height="2" fill="#4a64c8" opacity="0.5205957911010186"/><rect x="654.0" y="327" width="1" height="2" fill="#4a64c8" opacity="0.5205957911010186"/><rect x="654.0" y="332" width="1" height="5" fill="#4a64c8" opacity="0.5205957911010186"/><rect x="654.0" y="338" width="1" height="3" fill="#4a64c8" opacity="0.5205957911010186"/><rect x="654.0" y="342" width="1" height="2" fill="#4a64c8" opacity="0.5205957911010186"/><rect x="654.0" y="347" width="1" height="3" fill="#4a64c8" opacity="0.5205957911010186"/><rect x="628.0" y="187" width="1" height="4" fill="#4a64c8" opacity="0.6595732494781141"/><rect x="628.0" y="196" width="1" height="3" fill="#4a64c8" opacity="0.6595732494781141"/><rect x="628.0" y="201" width="1" height="1" fill="#4a64c8" opacity="0.6595732494781141"/><rect x="628.0" y="206" width="1" height="1" fill="#4a64c8" opacity="0.6595732494781141"/><rect x="628.0" y="208" width="1" height="5" fill="#4a64c8" opacity="0.6595732494781141"/><rect x="628.0" y="216" width="1" height="4" fill="#4a64c8" opacity="0.6595732494781141"/><rect x="628.0" y="225" width="1" height="4" fill="#4a64c8" opacity="0.6595732494781141"/><rect x="628.0" y="232" width="1" height="4" fill="#4a64c8" opacity="0.6595732494781141"/><rect x="628.0" y="237" width="1" height="1" fill="#4a64c8" opacity="0.6595732494781141"/><rect x="628.0" y="241" width="1" height="5" fill="#4a64c8" opacity="0.6595732494781141"/><rect x="628.0" y="249" width="1" height="1" fill="#4a64c8" opacity="0.6595732494781141"/><rect x="628.0" y="254" width="1" height="5" fill="#4a64c8" opacity="0.6595732494781141"/><rect x="628.0" y="262" width="1" height="2" fill="#4a64c8" opacity="0.6595732494781141"/><rect x="628.0" y="265" width="1" height="1" fill="#4a64c8" opacity="0.6595732494781141"/><rect x="628.0" y="268" width="1" height="2" fill="#4a64c8" opacity="0.6595732494781141"/><rect x="628.0" y="272" width="1" height="5" fill="#4a64c8" opacity="0.6595732494781141"/><rect x="628.0" y="278" width="1" height="3" fill="#4a64c8" opacity="0.6595732494781141"/><rect x="628.0" y="284" width="1" height="4" fill="#4a64c8" opacity="0.6595732494781141"/><rect x="628.0" y="291" width="1" height="5" fill="#4a64c8" opacity="0.6595732494781141"/><rect x="628.0" y="301" width="1" height="5" fill="#4a64c8" opacity="0.6595732494781141"/><rect x="628.0" y="308" width="1" height="5" fill="#4a64c8" opacity="0.6595732494781141"/><rect x="628.0" y="318" width="1" height="3" fill="#4a64c8" opacity="0.6595732494781141"/><rect x="628.0" y="323" width="1" height="5" fill="#4a64c8" opacity="0.6595732494781141"/><rect x="628.0" y="331" width="1" height="4" fill="#4a64c8" opacity="0.6595732494781141"/><rect x="628.0" y="336" width="1" height="3" fill="#4a64c8" opacity="0.6595732494781141"/><rect x="628.0" y="344" width="1" height="4" fill="#4a64c8" opacity="0.6595732494781141"/><rect x="675.0" y="187" width="1" height="5" fill="#4a64c8" opacity="0.5113051127235737"/><rect x="675.0" y="197" width="1" height="3" fill="#4a64c8" opacity="0.5113051127235737"/><rect x="675.0" y="202" width="1" height="3" fill="#4a64c8" opacity="0.5113051127235737"/><rect x="675.0" y="206" width="1" height="5" fill="#4a64c8" opacity="0.5113051127235737"/><rect x="675.0" y="215" width="1" height="1" fill="#4a64c8" opacity="0.5113051127235737"/><rect x="675.0" y="219" width="1" height="2" fill="#4a64c8" opacity="0.5113051127235737"/><rect x="675.0" y="223" width="1" height="4" fill="#4a64c8" opacity="0.5113051127235737"/><rect x="675.0" y="228" width="1" height="1" fill="#4a64c8" opacity="0.5113051127235737"/><rect x="675.0" y="234" width="1" height="2" fill="#4a64c8" opacity="0.5113051127235737"/><rect x="675.0" y="237" width="1" height="1" fill="#4a64c8" opacity="0.5113051127235737"/><rect x="675.0" y="243" width="1" height="5" fill="#4a64c8" opacity="0.5113051127235737"/><rect x="675.0" y="250" width="1" height="5" fill="#4a64c8" opacity="0.5113051127235737"/><rect x="675.0" y="257" width="1" height="3" fill="#4a64c8" opacity="0.5113051127235737"/><rect x="675.0" y="265" width="1" height="3" fill="#4a64c8" opacity="0.5113051127235737"/><rect x="675.0" y="270" width="1" height="2" fill="#4a64c8" opacity="0.5113051127235737"/><rect x="675.0" y="274" width="1" height="5" fill="#4a64c8" opacity="0.5113051127235737"/><rect x="675.0" y="280" width="1" height="3" fill="#4a64c8" opacity="0.5113051127235737"/><rect x="675.0" y="285" width="1" height="4" fill="#4a64c8" opacity="0.5113051127235737"/><rect x="675.0" y="293" width="1" height="2" fill="#4a64c8" opacity="0.5113051127235737"/><rect x="675.0" y="298" width="1" height="4" fill="#4a64c8" opacity="0.5113051127235737"/><rect x="675.0" y="306" width="1" height="2" fill="#4a64c8" opacity="0.5113051127235737"/><rect x="675.0" y="311" width="1" height="1" fill="#4a64c8" opacity="0.5113051127235737"/><rect x="675.0" y="313" width="1" height="1" fill="#4a64c8" opacity="0.5113051127235737"/><rect x="675.0" y="315" width="1" height="4" fill="#4a64c8" opacity="0.5113051127235737"/><rect x="675.0" y="322" width="1" height="1" fill="#4a64c8" opacity="0.5113051127235737"/><rect x="675.0" y="325" width="1" height="5" fill="#4a64c8" opacity="0.5113051127235737"/><rect x="675.0" y="334" width="1" height="4" fill="#4a64c8" opacity="0.5113051127235737"/><rect x="675.0" y="342" width="1" height="2" fill="#4a64c8" opacity="0.5113051127235737"/><rect x="675.0" y="345" width="1" height="3" fill="#4a64c8" opacity="0.5113051127235737"/><rect x="675.0" y="349" width="1" height="1" fill="#4a64c8" opacity="0.5113051127235737"/><rect x="699.0" y="187" width="1" height="3" fill="#4a64c8" opacity="0.49673166940027674"/><rect x="699.0" y="192" width="1" height="3" fill="#4a64c8" opacity="0.49673166940027674"/><rect x="699.0" y="199" width="1" height="3" fill="#4a64c8" opacity="0.49673166940027674"/><rect x="699.0" y="205" width="1" height="4" fill="#4a64c8" opacity="0.49673166940027674"/><rect x="699.0" y="211" width="1" height="5" fill="#4a64c8" opacity="0.49673166940027674"/><rect x="699.0" y="218" width="1" height="4" fill="#4a64c8" opacity="0.49673166940027674"/><rect x="699.0" y="225" width="1" height="2" fill="#4a64c8" opacity="0.49673166940027674"/><rect x="699.0" y="230" width="1" height="3" fill="#4a64c8" opacity="0.49673166940027674"/><rect x="699.0" y="234" width="1" height="3" fill="#4a64c8" opacity="0.49673166940027674"/><rect x="699.0" y="238" width="1" height="4" fill="#4a64c8" opacity="0.49673166940027674"/><rect x="699.0" y="244" width="1" height="2" fill="#4a64c8" opacity="0.49673166940027674"/><rect x="699.0" y="249" width="1" height="5" fill="#4a64c8" opacity="0.49673166940027674"/><rect x="699.0" y="259" width="1" height="4" fill="#4a64c8" opacity="0.49673166940027674"/><rect x="699.0" y="265" width="1" height="5" fill="#4a64c8" opacity="0.49673166940027674"/><rect x="699.0" y="271" width="1" height="2" fill="#4a64c8" opacity="0.49673166940027674"/><rect x="699.0" y="276" width="1" height="1" fill="#4a64c8" opacity="0.49673166940027674"/><rect x="699.0" y="281" width="1" height="2" fill="#4a64c8" opacity="0.49673166940027674"/><rect x="699.0" y="287" width="1" height="2" fill="#4a64c8" opacity="0.49673166940027674"/><rect x="699.0" y="292" width="1" height="1" fill="#4a64c8" opacity="0.49673166940027674"/><rect x="699.0" y="294" width="1" height="2" fill="#4a64c8" opacity="0.49673166940027674"/><rect x="699.0" y="297" width="1" height="2" fill="#4a64c8" opacity="0.49673166940027674"/><rect x="699.0" y="302" width="1" height="2" fill="#4a64c8" opacity="0.49673166940027674"/><rect x="699.0" y="309" width="1" height="3" fill="#4a64c8" opacity="0.49673166940027674"/><rect x="699.0" y="313" width="1" height="2" fill="#4a64c8" opacity="0.49673166940027674"/><rect x="699.0" y="319" width="1" height="4" fill="#4a64c8" opacity="0.49673166940027674"/><rect x="699.0" y="324" width="1" height="4" fill="#4a64c8" opacity="0.49673166940027674"/><rect x="699.0" y="331" width="1" height="4" fill="#4a64c8" opacity="0.49673166940027674"/><rect x="699.0" y="338" width="1" height="1" fill="#4a64c8" opacity="0.49673166940027674"/><rect x="699.0" y="344" width="1" height="2" fill="#4a64c8" opacity="0.49673166940027674"/><rect x="699.0" y="348" width="1" height="1" fill="#4a64c8" opacity="0.49673166940027674"/><rect x="722.0" y="187" width="1" height="5" fill="#4a64c8" opacity="0.45393270404571595"/><rect x="722.0" y="194" width="1" height="5" fill="#4a64c8" opacity="0.45393270404571595"/><rect x="722.0" y="203" width="1" height="1" fill="#4a64c8" opacity="0.45393270404571595"/><rect x="722.0" y="205" width="1" height="1" fill="#4a64c8" opacity="0.45393270404571595"/><rect x="722.0" y="209" width="1" height="1" fill="#4a64c8" opacity="0.45393270404571595"/><rect x="722.0" y="211" width="1" height="1" fill="#4a64c8" opacity="0.45393270404571595"/><rect x="722.0" y="216" width="1" height="2" fill="#4a64c8" opacity="0.45393270404571595"/><rect x="722.0" y="223" width="1" height="4" fill="#4a64c8" opacity="0.45393270404571595"/><rect x="722.0" y="228" width="1" height="2" fill="#4a64c8" opacity="0.45393270404571595"/><rect x="722.0" y="232" width="1" height="5" fill="#4a64c8" opacity="0.45393270404571595"/><rect x="722.0" y="239" width="1" height="5" fill="#4a64c8" opacity="0.45393270404571595"/><rect x="722.0" y="249" width="1" height="1" fill="#4a64c8" opacity="0.45393270404571595"/><rect x="722.0" y="255" width="1" height="3" fill="#4a64c8" opacity="0.45393270404571595"/><rect x="722.0" y="262" width="1" height="1" fill="#4a64c8" opacity="0.45393270404571595"/><rect x="722.0" y="266" width="1" height="2" fill="#4a64c8" opacity="0.45393270404571595"/><rect x="722.0" y="270" width="1" height="1" fill="#4a64c8" opacity="0.45393270404571595"/><rect x="722.0" y="274" width="1" height="2" fill="#4a64c8" opacity="0.45393270404571595"/><rect x="722.0" y="277" width="1" height="3" fill="#4a64c8" opacity="0.45393270404571595"/><rect x="722.0" y="283" width="1" height="1" fill="#4a64c8" opacity="0.45393270404571595"/><rect x="722.0" y="285" width="1" height="2" fill="#4a64c8" opacity="0.45393270404571595"/><rect x="722.0" y="292" width="1" height="1" fill="#4a64c8" opacity="0.45393270404571595"/><rect x="722.0" y="297" width="1" height="5" fill="#4a64c8" opacity="0.45393270404571595"/><rect x="722.0" y="305" width="1" height="3" fill="#4a64c8" opacity="0.45393270404571595"/><rect x="722.0" y="309" width="1" height="3" fill="#4a64c8" opacity="0.45393270404571595"/><rect x="722.0" y="313" width="1" height="4" fill="#4a64c8" opacity="0.45393270404571595"/><rect x="722.0" y="322" width="1" height="3" fill="#4a64c8" opacity="0.45393270404571595"/><rect x="722.0" y="330" width="1" height="3" fill="#4a64c8" opacity="0.45393270404571595"/><rect x="722.0" y="337" width="1" height="3" fill="#4a64c8" opacity="0.45393270404571595"/><rect x="722.0" y="344" width="1" height="4" fill="#4a64c8" opacity="0.45393270404571595"/><rect x="727.0" y="187" width="1" height="4" fill="#4a64c8" opacity="0.6159987104509745"/><rect x="727.0" y="193" width="1" height="4" fill="#4a64c8" opacity="0.6159987104509745"/><rect x="727.0" y="201" width="1" height="4" fill="#4a64c8" opacity="0.6159987104509745"/><rect x="727.0" y="207" width="1" height="1" fill="#4a64c8" opacity="0.6159987104509745"/><rect x="727.0" y="210" width="1" height="5" fill="#4a64c8" opacity="0.6159987104509745"/><rect x="727.0" y="220" width="1" height="3" fill="#4a64c8" opacity="0.6159987104509745"/><rect x="727.0" y="228" width="1" height="4" fill="#4a64c8" opacity="0.6159987104509745"/><rect x="727.0" y="234" width="1" height="2" fill="#4a64c8" opacity="0.6159987104509745"/><rect x="727.0" y="237" width="1" height="1" fill="#4a64c8" opacity="0.6159987104509745"/><rect x="727.0" y="243" width="1" height="1" fill="#4a64c8" opacity="0.6159987104509745"/><rect x="727.0" y="245" width="1" height="4" fill="#4a64c8" opacity="0.6159987104509745"/><rect x="727.0" y="254" width="1" height="3" fill="#4a64c8" opacity="0.6159987104509745"/><rect x="727.0" y="261" width="1" height="5" fill="#4a64c8" opacity="0.6159987104509745"/><rect x="727.0" y="269" width="1" height="4" fill="#4a64c8" opacity="0.6159987104509745"/><rect x="727.0" y="278" width="1" height="1" fill="#4a64c8" opacity="0.6159987104509745"/><rect x="727.0" y="283" width="1" height="4" fill="#4a64c8" opacity="0.6159987104509745"/><rect x="727.0" y="292" width="1" height="3" fill="#4a64c8" opacity="0.6159987104509745"/><rect x="727.0" y="300" width="1" height="5" fill="#4a64c8" opacity="0.6159987104509745"/><rect x="727.0" y="309" width="1" height="2" fill="#4a64c8" opacity="0.6159987104509745"/><rect x="727.0" y="315" width="1" height="3" fill="#4a64c8" opacity="0.6159987104509745"/><rect x="727.0" y="319" width="1" height="4" fill="#4a64c8" opacity="0.6159987104509745"/><rect x="727.0" y="328" width="1" height="3" fill="#4a64c8" opacity="0.6159987104509745"/><rect x="727.0" y="336" width="1" height="3" fill="#4a64c8" opacity="0.6159987104509745"/><rect x="727.0" y="340" width="1" height="5" fill="#4a64c8" opacity="0.6159987104509745"/><rect x="727.0" y="347" width="1" height="3" fill="#4a64c8" opacity="0.6159987104509745"/><rect x="742.0" y="187" width="1" height="4" fill="#4a64c8" opacity="0.5049111423157068"/><rect x="742.0" y="194" width="1" height="5" fill="#4a64c8" opacity="0.5049111423157068"/><rect x="742.0" y="204" width="1" height="4" fill="#4a64c8" opacity="0.5049111423157068"/><rect x="742.0" y="213" width="1" height="2" fill="#4a64c8" opacity="0.5049111423157068"/><rect x="742.0" y="217" width="1" height="1" fill="#4a64c8" opacity="0.5049111423157068"/><rect x="742.0" y="223" width="1" height="3" fill="#4a64c8" opacity="0.5049111423157068"/><rect x="742.0" y="231" width="1" height="2" fill="#4a64c8" opacity="0.5049111423157068"/><rect x="742.0" y="238" width="1" height="2" fill="#4a64c8" opacity="0.5049111423157068"/><rect x="742.0" y="243" width="1" height="2" fill="#4a64c8" opacity="0.5049111423157068"/><rect x="742.0" y="247" width="1" height="2" fill="#4a64c8" opacity="0.5049111423157068"/><rect x="742.0" y="253" width="1" height="2" fill="#4a64c8" opacity="0.5049111423157068"/><rect x="742.0" y="256" width="1" height="3" fill="#4a64c8" opacity="0.5049111423157068"/><rect x="742.0" y="263" width="1" height="3" fill="#4a64c8" opacity="0.5049111423157068"/><rect x="742.0" y="270" width="1" height="1" fill="#4a64c8" opacity="0.5049111423157068"/><rect x="742.0" y="275" width="1" height="2" fill="#4a64c8" opacity="0.5049111423157068"/><rect x="742.0" y="280" width="1" height="4" fill="#4a64c8" opacity="0.5049111423157068"/><rect x="742.0" y="285" width="1" height="3" fill="#4a64c8" opacity="0.5049111423157068"/><rect x="742.0" y="291" width="1" height="5" fill="#4a64c8" opacity="0.5049111423157068"/><rect x="742.0" y="301" width="1" height="3" fill="#4a64c8" opacity="0.5049111423157068"/><rect x="742.0" y="308" width="1" height="1" fill="#4a64c8" opacity="0.5049111423157068"/><rect x="742.0" y="312" width="1" height="4" fill="#4a64c8" opacity="0.5049111423157068"/><rect x="742.0" y="319" width="1" height="4" fill="#4a64c8" opacity="0.5049111423157068"/><rect x="742.0" y="324" width="1" height="4" fill="#4a64c8" opacity="0.5049111423157068"/><rect x="742.0" y="332" width="1" height="2" fill="#4a64c8" opacity="0.5049111423157068"/><rect x="742.0" y="339" width="1" height="2" fill="#4a64c8" opacity="0.5049111423157068"/><rect x="742.0" y="342" width="1" height="2" fill="#4a64c8" opacity="0.5049111423157068"/><rect x="742.0" y="347" width="1" height="3" fill="#4a64c8" opacity="0.5049111423157068"/><rect x="749.0" y="187" width="1" height="5" fill="#4a64c8" opacity="0.6641058869291224"/><rect x="749.0" y="195" width="1" height="5" fill="#4a64c8" opacity="0.6641058869291224"/><rect x="749.0" y="203" width="1" height="4" fill="#4a64c8" opacity="0.6641058869291224"/><rect x="749.0" y="210" width="1" height="1" fill="#4a64c8" opacity="0.6641058869291224"/><rect x="749.0" y="216" width="1" height="2" fill="#4a64c8" opacity="0.6641058869291224"/><rect x="749.0" y="219" width="1" height="5" fill="#4a64c8" opacity="0.6641058869291224"/><rect x="749.0" y="227" width="1" height="1" fill="#4a64c8" opacity="0.6641058869291224"/><rect x="749.0" y="233" width="1" height="2" fill="#4a64c8" opacity="0.6641058869291224"/><rect x="749.0" y="238" width="1" height="5" fill="#4a64c8" opacity="0.6641058869291224"/><rect x="749.0" y="246" width="1" height="3" fill="#4a64c8" opacity="0.6641058869291224"/><rect x="749.0" y="252" width="1" height="2" fill="#4a64c8" opacity="0.6641058869291224"/><rect x="749.0" y="257" width="1" height="4" fill="#4a64c8" opacity="0.6641058869291224"/><rect x="749.0" y="262" width="1" height="5" fill="#4a64c8" opacity="0.6641058869291224"/><rect x="749.0" y="271" width="1" height="1" fill="#4a64c8" opacity="0.6641058869291224"/><rect x="749.0" y="274" width="1" height="2" fill="#4a64c8" opacity="0.6641058869291224"/><rect x="749.0" y="280" width="1" height="3" fill="#4a64c8" opacity="0.6641058869291224"/><rect x="749.0" y="288" width="1" height="3" fill="#4a64c8" opacity="0.6641058869291224"/><rect x="749.0" y="292" width="1" height="4" fill="#4a64c8" opacity="0.6641058869291224"/><rect x="749.0" y="300" width="1" height="3" fill="#4a64c8" opacity="0.6641058869291224"/><rect x="749.0" y="304" width="1" height="3" fill="#4a64c8" opacity="0.6641058869291224"/><rect x="749.0" y="311" width="1" height="4" fill="#4a64c8" opacity="0.6641058869291224"/><rect x="749.0" y="320" width="1" height="3" fill="#4a64c8" opacity="0.6641058869291224"/><rect x="749.0" y="326" width="1" height="2" fill="#4a64c8" opacity="0.6641058869291224"/><rect x="749.0" y="332" width="1" height="5" fill="#4a64c8" opacity="0.6641058869291224"/><rect x="749.0" y="339" width="1" height="5" fill="#4a64c8" opacity="0.6641058869291224"/><rect x="749.0" y="346" width="1" height="4" fill="#4a64c8" opacity="0.6641058869291224"/><rect x="752.0" y="187" width="1" height="2" fill="#4a64c8" opacity="0.42534249027252613"/><rect x="752.0" y="192" width="1" height="1" fill="#4a64c8" opacity="0.42534249027252613"/><rect x="752.0" y="194" width="1" height="4" fill="#4a64c8" opacity="0.42534249027252613"/><rect x="752.0" y="202" width="1" height="4" fill="#4a64c8" opacity="0.42534249027252613"/><rect x="752.0" y="211" width="1" height="4" fill="#4a64c8" opacity="0.42534249027252613"/><rect x="752.0" y="219" width="1" height="1" fill="#4a64c8" opacity="0.42534249027252613"/><rect x="752.0" y="221" width="1" height="5" fill="#4a64c8" opacity="0.42534249027252613"/><rect x="752.0" y="231" width="1" height="4" fill="#4a64c8" opacity="0.42534249027252613"/><rect x="752.0" y="239" width="1" height="4" fill="#4a64c8" opacity="0.42534249027252613"/><rect x="752.0" y="247" width="1" height="4" fill="#4a64c8" opacity="0.42534249027252613"/><rect x="752.0" y="253" width="1" height="1" fill="#4a64c8" opacity="0.42534249027252613"/><rect x="752.0" y="258" width="1" height="4" fill="#4a64c8" opacity="0.42534249027252613"/><rect x="752.0" y="266" width="1" height="2" fill="#4a64c8" opacity="0.42534249027252613"/><rect x="752.0" y="273" width="1" height="1" fill="#4a64c8" opacity="0.42534249027252613"/><rect x="752.0" y="276" width="1" height="2" fill="#4a64c8" opacity="0.42534249027252613"/><rect x="752.0" y="282" width="1" height="5" fill="#4a64c8" opacity="0.42534249027252613"/><rect x="752.0" y="288" width="1" height="3" fill="#4a64c8" opacity="0.42534249027252613"/><rect x="752.0" y="296" width="1" height="3" fill="#4a64c8" opacity="0.42534249027252613"/><rect x="752.0" y="303" width="1" height="4" fill="#4a64c8" opacity="0.42534249027252613"/><rect x="752.0" y="308" width="1" height="1" fill="#4a64c8" opacity="0.42534249027252613"/><rect x="752.0" y="311" width="1" height="1" fill="#4a64c8" opacity="0.42534249027252613"/><rect x="752.0" y="317" width="1" height="1" fill="#4a64c8" opacity="0.42534249027252613"/><rect x="752.0" y="319" width="1" height="4" fill="#4a64c8" opacity="0.42534249027252613"/><rect x="752.0" y="324" width="1" height="2" fill="#4a64c8" opacity="0.42534249027252613"/><rect x="752.0" y="331" width="1" height="4" fill="#4a64c8" opacity="0.42534249027252613"/><rect x="752.0" y="336" width="1" height="2" fill="#4a64c8" opacity="0.42534249027252613"/><rect x="752.0" y="341" width="1" height="4" fill="#4a64c8" opacity="0.42534249027252613"/><rect x="752.0" y="346" width="1" height="4" fill="#4a64c8" opacity="0.42534249027252613"/><rect x="764.0" y="187" width="1" height="2" fill="#4a64c8" opacity="0.737446628761124"/><rect x="764.0" y="193" width="1" height="1" fill="#4a64c8" opacity="0.737446628761124"/><rect x="764.0" y="196" width="1" height="3" fill="#4a64c8" opacity="0.737446628761124"/><rect x="764.0" y="202" width="1" height="2" fill="#4a64c8" opacity="0.737446628761124"/><rect x="764.0" y="209" width="1" height="1" fill="#4a64c8" opacity="0.737446628761124"/><rect x="764.0" y="212" width="1" height="5" fill="#4a64c8" opacity="0.737446628761124"/><rect x="764.0" y="220" width="1" height="5" fill="#4a64c8" opacity="0.737446628761124"/><rect x="764.0" y="228" width="1" height="1" fill="#4a64c8" opacity="0.737446628761124"/><rect x="764.0" y="232" width="1" height="4" fill="#4a64c8" opacity="0.737446628761124"/><rect x="764.0" y="239" width="1" height="3" fill="#4a64c8" opacity="0.737446628761124"/><rect x="764.0" y="247" width="1" height="4" fill="#4a64c8" opacity="0.737446628761124"/><rect x="764.0" y="256" width="1" height="4" fill="#4a64c8" opacity="0.737446628761124"/><rect x="764.0" y="261" width="1" height="3" fill="#4a64c8" opacity="0.737446628761124"/><rect x="764.0" y="267" width="1" height="2" fill="#4a64c8" opacity="0.737446628761124"/><rect x="764.0" y="273" width="1" height="4" fill="#4a64c8" opacity="0.737446628761124"/><rect x="764.0" y="282" width="1" height="3" fill="#4a64c8" opacity="0.737446628761124"/><rect x="764.0" y="288" width="1" height="2" fill="#4a64c8" opacity="0.737446628761124"/><rect x="764.0" y="292" width="1" height="1" fill="#4a64c8" opacity="0.737446628761124"/><rect x="764.0" y="295" width="1" height="5" fill="#4a64c8" opacity="0.737446628761124"/><rect x="764.0" y="303" width="1" height="4" fill="#4a64c8" opacity="0.737446628761124"/><rect x="764.0" y="311" width="1" height="5" fill="#4a64c8" opacity="0.737446628761124"/><rect x="764.0" y="318" width="1" height="3" fill="#4a64c8" opacity="0.737446628761124"/><rect x="764.0" y="324" width="1" height="2" fill="#4a64c8" opacity="0.737446628761124"/><rect x="764.0" y="330" width="1" height="5" fill="#4a64c8" opacity="0.737446628761124"/><rect x="764.0" y="336" width="1" height="3" fill="#4a64c8" opacity="0.737446628761124"/><rect x="764.0" y="340" width="1" height="5" fill="#4a64c8" opacity="0.737446628761124"/><rect x="764.0" y="346" width="1" height="4" fill="#4a64c8" opacity="0.737446628761124"/><rect x="779.0" y="187" width="1" height="1" fill="#4a64c8" opacity="0.7293546924696981"/><rect x="779.0" y="191" width="1" height="2" fill="#4a64c8" opacity="0.7293546924696981"/><rect x="779.0" y="197" width="1" height="3" fill="#4a64c8" opacity="0.7293546924696981"/><rect x="779.0" y="202" width="1" height="2" fill="#4a64c8" opacity="0.7293546924696981"/><rect x="779.0" y="209" width="1" height="5" fill="#4a64c8" opacity="0.7293546924696981"/><rect x="779.0" y="218" width="1" height="4" fill="#4a64c8" opacity="0.7293546924696981"/><rect x="779.0" y="226" width="1" height="2" fill="#4a64c8" opacity="0.7293546924696981"/><rect x="779.0" y="230" width="1" height="1" fill="#4a64c8" opacity="0.7293546924696981"/><rect x="779.0" y="233" width="1" height="4" fill="#4a64c8" opacity="0.7293546924696981"/><rect x="779.0" y="238" width="1" height="1" fill="#4a64c8" opacity="0.7293546924696981"/><rect x="779.0" y="241" width="1" height="1" fill="#4a64c8" opacity="0.7293546924696981"/><rect x="779.0" y="247" width="1" height="4" fill="#4a64c8" opacity="0.7293546924696981"/><rect x="779.0" y="253" width="1" height="1" fill="#4a64c8" opacity="0.7293546924696981"/><rect x="779.0" y="259" width="1" height="2" fill="#4a64c8" opacity="0.7293546924696981"/><rect x="779.0" y="265" width="1" height="2" fill="#4a64c8" opacity="0.7293546924696981"/><rect x="779.0" y="270" width="1" height="2" fill="#4a64c8" opacity="0.7293546924696981"/><rect x="779.0" y="277" width="1" height="2" fill="#4a64c8" opacity="0.7293546924696981"/><rect x="779.0" y="281" width="1" height="2" fill="#4a64c8" opacity="0.7293546924696981"/><rect x="779.0" y="288" width="1" height="1" fill="#4a64c8" opacity="0.7293546924696981"/><rect x="779.0" y="293" width="1" height="1" fill="#4a64c8" opacity="0.7293546924696981"/><rect x="779.0" y="296" width="1" height="1" fill="#4a64c8" opacity="0.7293546924696981"/><rect x="779.0" y="298" width="1" height="4" fill="#4a64c8" opacity="0.7293546924696981"/><rect x="779.0" y="304" width="1" height="3" fill="#4a64c8" opacity="0.7293546924696981"/><rect x="779.0" y="311" width="1" height="4" fill="#4a64c8" opacity="0.7293546924696981"/><rect x="779.0" y="317" width="1" height="1" fill="#4a64c8" opacity="0.7293546924696981"/><rect x="779.0" y="320" width="1" height="1" fill="#4a64c8" opacity="0.7293546924696981"/><rect x="779.0" y="323" width="1" height="4" fill="#4a64c8" opacity="0.7293546924696981"/><rect x="779.0" y="330" width="1" height="2" fill="#4a64c8" opacity="0.7293546924696981"/><rect x="779.0" y="337" width="1" height="3" fill="#4a64c8" opacity="0.7293546924696981"/><rect x="779.0" y="345" width="1" height="2" fill="#4a64c8" opacity="0.7293546924696981"/><rect x="810.0" y="187" width="1" height="3" fill="#4a64c8" opacity="0.7647614844382993"/><rect x="810.0" y="195" width="1" height="2" fill="#4a64c8" opacity="0.7647614844382993"/><rect x="810.0" y="199" width="1" height="2" fill="#4a64c8" opacity="0.7647614844382993"/><rect x="810.0" y="205" width="1" height="1" fill="#4a64c8" opacity="0.7647614844382993"/><rect x="810.0" y="209" width="1" height="4" fill="#4a64c8" opacity="0.7647614844382993"/><rect x="810.0" y="215" width="1" height="3" fill="#4a64c8" opacity="0.7647614844382993"/><rect x="810.0" y="220" width="1" height="5" fill="#4a64c8" opacity="0.7647614844382993"/><rect x="810.0" y="226" width="1" height="2" fill="#4a64c8" opacity="0.7647614844382993"/><rect x="810.0" y="232" width="1" height="2" fill="#4a64c8" opacity="0.7647614844382993"/><rect x="810.0" y="236" width="1" height="4" fill="#4a64c8" opacity="0.7647614844382993"/><rect x="810.0" y="243" width="1" height="4" fill="#4a64c8" opacity="0.7647614844382993"/><rect x="810.0" y="248" width="1" height="1" fill="#4a64c8" opacity="0.7647614844382993"/><rect x="810.0" y="252" width="1" height="1" fill="#4a64c8" opacity="0.7647614844382993"/><rect x="810.0" y="255" width="1" height="5" fill="#4a64c8" opacity="0.7647614844382993"/><rect x="810.0" y="265" width="1" height="1" fill="#4a64c8" opacity="0.7647614844382993"/><rect x="810.0" y="269" width="1" height="4" fill="#4a64c8" opacity="0.7647614844382993"/><rect x="810.0" y="276" width="1" height="1" fill="#4a64c8" opacity="0.7647614844382993"/><rect x="810.0" y="281" width="1" height="1" fill="#4a64c8" opacity="0.7647614844382993"/><rect x="810.0" y="284" width="1" height="4" fill="#4a64c8" opacity="0.7647614844382993"/><rect x="810.0" y="291" width="1" height="3" fill="#4a64c8" opacity="0.7647614844382993"/><rect x="810.0" y="299" width="1" height="5" fill="#4a64c8" opacity="0.7647614844382993"/><rect x="810.0" y="309" width="1" height="1" fill="#4a64c8" opacity="0.7647614844382993"/><rect x="810.0" y="312" width="1" height="2" fill="#4a64c8" opacity="0.7647614844382993"/><rect x="810.0" y="318" width="1" height="3" fill="#4a64c8" opacity="0.7647614844382993"/><rect x="810.0" y="323" width="1" height="5" fill="#4a64c8" opacity="0.7647614844382993"/><rect x="810.0" y="331" width="1" height="1" fill="#4a64c8" opacity="0.7647614844382993"/><rect x="810.0" y="337" width="1" height="5" fill="#4a64c8" opacity="0.7647614844382993"/><rect x="810.0" y="343" width="1" height="1" fill="#4a64c8" opacity="0.7647614844382993"/><rect x="810.0" y="347" width="1" height="2" fill="#4a64c8" opacity="0.7647614844382993"/><rect x="830.0" y="187" width="1" height="1" fill="#4a64c8" opacity="0.6626127520204311"/><rect x="830.0" y="190" width="1" height="3" fill="#4a64c8" opacity="0.6626127520204311"/><rect x="830.0" y="196" width="1" height="4" fill="#4a64c8" opacity="0.6626127520204311"/><rect x="830.0" y="204" width="1" height="2" fill="#4a64c8" opacity="0.6626127520204311"/><rect x="830.0" y="209" width="1" height="3" fill="#4a64c8" opacity="0.6626127520204311"/><rect x="830.0" y="214" width="1" height="1" fill="#4a64c8" opacity="0.6626127520204311"/><rect x="830.0" y="218" width="1" height="1" fill="#4a64c8" opacity="0.6626127520204311"/><rect x="830.0" y="224" width="1" height="4" fill="#4a64c8" opacity="0.6626127520204311"/><rect x="830.0" y="229" width="1" height="5" fill="#4a64c8" opacity="0.6626127520204311"/><rect x="830.0" y="235" width="1" height="2" fill="#4a64c8" opacity="0.6626127520204311"/><rect x="830.0" y="242" width="1" height="4" fill="#4a64c8" opacity="0.6626127520204311"/><rect x="830.0" y="250" width="1" height="1" fill="#4a64c8" opacity="0.6626127520204311"/><rect x="830.0" y="252" width="1" height="1" fill="#4a64c8" opacity="0.6626127520204311"/><rect x="830.0" y="258" width="1" height="5" fill="#4a64c8" opacity="0.6626127520204311"/><rect x="830.0" y="264" width="1" height="4" fill="#4a64c8" opacity="0.6626127520204311"/><rect x="830.0" y="270" width="1" height="4" fill="#4a64c8" opacity="0.6626127520204311"/><rect x="830.0" y="279" width="1" height="3" fill="#4a64c8" opacity="0.6626127520204311"/><rect x="830.0" y="283" width="1" height="3" fill="#4a64c8" opacity="0.6626127520204311"/><rect x="830.0" y="288" width="1" height="3" fill="#4a64c8" opacity="0.6626127520204311"/><rect x="830.0" y="293" width="1" height="1" fill="#4a64c8" opacity="0.6626127520204311"/><rect x="830.0" y="297" width="1" height="1" fill="#4a64c8" opacity="0.6626127520204311"/><rect x="830.0" y="302" width="1" height="3" fill="#4a64c8" opacity="0.6626127520204311"/><rect x="830.0" y="307" width="1" height="3" fill="#4a64c8" opacity="0.6626127520204311"/><rect x="830.0" y="311" width="1" height="1" fill="#4a64c8" opacity="0.6626127520204311"/><rect x="830.0" y="314" width="1" height="1" fill="#4a64c8" opacity="0.6626127520204311"/><rect x="830.0" y="317" width="1" height="4" fill="#4a64c8" opacity="0.6626127520204311"/><rect x="830.0" y="324" width="1" height="5" fill="#4a64c8" opacity="0.6626127520204311"/><rect x="830.0" y="334" width="1" height="1" fill="#4a64c8" opacity="0.6626127520204311"/><rect x="830.0" y="338" width="1" height="4" fill="#4a64c8" opacity="0.6626127520204311"/><rect x="830.0" y="344" width="1" height="2" fill="#4a64c8" opacity="0.6626127520204311"/><rect x="834.0" y="187" width="1" height="5" fill="#4a64c8" opacity="0.6141870410503842"/><rect x="834.0" y="195" width="1" height="3" fill="#4a64c8" opacity="0.6141870410503842"/><rect x="834.0" y="200" width="1" height="3" fill="#4a64c8" opacity="0.6141870410503842"/><rect x="834.0" y="207" width="1" height="5" fill="#4a64c8" opacity="0.6141870410503842"/><rect x="834.0" y="214" width="1" height="2" fill="#4a64c8" opacity="0.6141870410503842"/><rect x="834.0" y="218" width="1" height="5" fill="#4a64c8" opacity="0.6141870410503842"/><rect x="834.0" y="228" width="1" height="2" fill="#4a64c8" opacity="0.6141870410503842"/><rect x="834.0" y="231" width="1" height="1" fill="#4a64c8" opacity="0.6141870410503842"/><rect x="834.0" y="233" width="1" height="1" fill="#4a64c8" opacity="0.6141870410503842"/><rect x="834.0" y="238" width="1" height="5" fill="#4a64c8" opacity="0.6141870410503842"/><rect x="834.0" y="245" width="1" height="2" fill="#4a64c8" opacity="0.6141870410503842"/><rect x="834.0" y="248" width="1" height="2" fill="#4a64c8" opacity="0.6141870410503842"/><rect x="834.0" y="252" width="1" height="3" fill="#4a64c8" opacity="0.6141870410503842"/><rect x="834.0" y="256" width="1" height="4" fill="#4a64c8" opacity="0.6141870410503842"/><rect x="834.0" y="264" width="1" height="5" fill="#4a64c8" opacity="0.6141870410503842"/><rect x="834.0" y="274" width="1" height="1" fill="#4a64c8" opacity="0.6141870410503842"/><rect x="834.0" y="278" width="1" height="5" fill="#4a64c8" opacity="0.6141870410503842"/><rect x="834.0" y="284" width="1" height="1" fill="#4a64c8" opacity="0.6141870410503842"/><rect x="834.0" y="290" width="1" height="2" fill="#4a64c8" opacity="0.6141870410503842"/><rect x="834.0" y="294" width="1" height="2" fill="#4a64c8" opacity="0.6141870410503842"/><rect x="834.0" y="301" width="1" height="5" fill="#4a64c8" opacity="0.6141870410503842"/><rect x="834.0" y="307" width="1" height="2" fill="#4a64c8" opacity="0.6141870410503842"/><rect x="834.0" y="310" width="1" height="5" fill="#4a64c8" opacity="0.6141870410503842"/><rect x="834.0" y="318" width="1" height="1" fill="#4a64c8" opacity="0.6141870410503842"/><rect x="834.0" y="320" width="1" height="2" fill="#4a64c8" opacity="0.6141870410503842"/><rect x="834.0" y="327" width="1" height="2" fill="#4a64c8" opacity="0.6141870410503842"/><rect x="834.0" y="332" width="1" height="3" fill="#4a64c8" opacity="0.6141870410503842"/><rect x="834.0" y="336" width="1" height="4" fill="#4a64c8" opacity="0.6141870410503842"/><rect x="834.0" y="345" width="1" height="2" fill="#4a64c8" opacity="0.6141870410503842"/><rect x="834.0" y="348" width="1" height="2" fill="#4a64c8" opacity="0.6141870410503842"/><rect x="843.0" y="187" width="1" height="1" fill="#4a64c8" opacity="0.7146410358163862"/><rect x="843.0" y="189" width="1" height="2" fill="#4a64c8" opacity="0.7146410358163862"/><rect x="843.0" y="193" width="1" height="5" fill="#4a64c8" opacity="0.7146410358163862"/><rect x="843.0" y="200" width="1" height="2" fill="#4a64c8" opacity="0.7146410358163862"/><rect x="843.0" y="205" width="1" height="2" fill="#4a64c8" opacity="0.7146410358163862"/><rect x="843.0" y="209" width="1" height="2" fill="#4a64c8" opacity="0.7146410358163862"/><rect x="843.0" y="213" width="1" height="3" fill="#4a64c8" opacity="0.7146410358163862"/><rect x="843.0" y="217" width="1" height="1" fill="#4a64c8" opacity="0.7146410358163862"/><rect x="843.0" y="222" width="1" height="1" fill="#4a64c8" opacity="0.7146410358163862"/><rect x="843.0" y="227" width="1" height="5" fill="#4a64c8" opacity="0.7146410358163862"/><rect x="843.0" y="235" width="1" height="1" fill="#4a64c8" opacity="0.7146410358163862"/><rect x="843.0" y="241" width="1" height="1" fill="#4a64c8" opacity="0.7146410358163862"/><rect x="843.0" y="244" width="1" height="1" fill="#4a64c8" opacity="0.7146410358163862"/><rect x="843.0" y="248" width="1" height="4" fill="#4a64c8" opacity="0.7146410358163862"/><rect x="843.0" y="253" width="1" height="3" fill="#4a64c8" opacity="0.7146410358163862"/><rect x="843.0" y="261" width="1" height="2" fill="#4a64c8" opacity="0.7146410358163862"/><rect x="843.0" y="267" width="1" height="4" fill="#4a64c8" opacity="0.7146410358163862"/><rect x="843.0" y="273" width="1" height="3" fill="#4a64c8" opacity="0.7146410358163862"/><rect x="843.0" y="279" width="1" height="1" fill="#4a64c8" opacity="0.7146410358163862"/><rect x="843.0" y="284" width="1" height="5" fill="#4a64c8" opacity="0.7146410358163862"/><rect x="843.0" y="291" width="1" height="4" fill="#4a64c8" opacity="0.7146410358163862"/><rect x="843.0" y="299" width="1" height="5" fill="#4a64c8" opacity="0.7146410358163862"/><rect x="843.0" y="307" width="1" height="5" fill="#4a64c8" opacity="0.7146410358163862"/><rect x="843.0" y="317" width="1" height="1" fill="#4a64c8" opacity="0.7146410358163862"/><rect x="843.0" y="319" width="1" height="3" fill="#4a64c8" opacity="0.7146410358163862"/><rect x="843.0" y="324" width="1" height="2" fill="#4a64c8" opacity="0.7146410358163862"/><rect x="843.0" y="328" width="1" height="5" fill="#4a64c8" opacity="0.7146410358163862"/><rect x="843.0" y="337" width="1" height="5" fill="#4a64c8" opacity="0.7146410358163862"/><rect x="843.0" y="344" width="1" height="4" fill="#4a64c8" opacity="0.7146410358163862"/><rect x="876.0" y="187" width="1" height="1" fill="#4a64c8" opacity="0.7632475612558526"/><rect x="876.0" y="192" width="1" height="4" fill="#4a64c8" opacity="0.7632475612558526"/><rect x="876.0" y="199" width="1" height="4" fill="#4a64c8" opacity="0.7632475612558526"/><rect x="876.0" y="207" width="1" height="1" fill="#4a64c8" opacity="0.7632475612558526"/><rect x="876.0" y="210" width="1" height="3" fill="#4a64c8" opacity="0.7632475612558526"/><rect x="876.0" y="218" width="1" height="4" fill="#4a64c8" opacity="0.7632475612558526"/><rect x="876.0" y="225" width="1" height="1" fill="#4a64c8" opacity="0.7632475612558526"/><rect x="876.0" y="229" width="1" height="4" fill="#4a64c8" opacity="0.7632475612558526"/><rect x="876.0" y="238" width="1" height="1" fill="#4a64c8" opacity="0.7632475612558526"/><rect x="876.0" y="240" width="1" height="4" fill="#4a64c8" opacity="0.7632475612558526"/><rect x="876.0" y="248" width="1" height="4" fill="#4a64c8" opacity="0.7632475612558526"/><rect x="876.0" y="257" width="1" height="3" fill="#4a64c8" opacity="0.7632475612558526"/><rect x="876.0" y="264" width="1" height="2" fill="#4a64c8" opacity="0.7632475612558526"/><rect x="876.0" y="269" width="1" height="5" fill="#4a64c8" opacity="0.7632475612558526"/><rect x="876.0" y="276" width="1" height="1" fill="#4a64c8" opacity="0.7632475612558526"/><rect x="876.0" y="280" width="1" height="4" fill="#4a64c8" opacity="0.7632475612558526"/><rect x="876.0" y="288" width="1" height="5" fill="#4a64c8" opacity="0.7632475612558526"/><rect x="876.0" y="294" width="1" height="3" fill="#4a64c8" opacity="0.7632475612558526"/><rect x="876.0" y="300" width="1" height="1" fill="#4a64c8" opacity="0.7632475612558526"/><rect x="876.0" y="304" width="1" height="2" fill="#4a64c8" opacity="0.7632475612558526"/><rect x="876.0" y="310" width="1" height="4" fill="#4a64c8" opacity="0.7632475612558526"/><rect x="876.0" y="319" width="1" height="2" fill="#4a64c8" opacity="0.7632475612558526"/><rect x="876.0" y="322" width="1" height="2" fill="#4a64c8" opacity="0.7632475612558526"/><rect x="876.0" y="325" width="1" height="4" fill="#4a64c8" opacity="0.7632475612558526"/><rect x="876.0" y="331" width="1" height="4" fill="#4a64c8" opacity="0.7632475612558526"/><rect x="876.0" y="338" width="1" height="3" fill="#4a64c8" opacity="0.7632475612558526"/><rect x="876.0" y="343" width="1" height="3" fill="#4a64c8" opacity="0.7632475612558526"/><rect x="876.0" y="348" width="1" height="2" fill="#4a64c8" opacity="0.7632475612558526"/><rect x="881.0" y="187" width="1" height="5" fill="#4a64c8" opacity="0.7559424543853159"/><rect x="881.0" y="196" width="1" height="3" fill="#4a64c8" opacity="0.7559424543853159"/><rect x="881.0" y="203" width="1" height="3" fill="#4a64c8" opacity="0.7559424543853159"/><rect x="881.0" y="211" width="1" height="5" fill="#4a64c8" opacity="0.7559424543853159"/><rect x="881.0" y="218" width="1" height="2" fill="#4a64c8" opacity="0.7559424543853159"/><rect x="881.0" y="224" width="1" height="5" fill="#4a64c8" opacity="0.7559424543853159"/><rect x="881.0" y="230" width="1" height="1" fill="#4a64c8" opacity="0.7559424543853159"/><rect x="881.0" y="233" width="1" height="1" fill="#4a64c8" opacity="0.7559424543853159"/><rect x="881.0" y="236" width="1" height="4" fill="#4a64c8" opacity="0.7559424543853159"/><rect x="881.0" y="245" width="1" height="3" fill="#4a64c8" opacity="0.7559424543853159"/><rect x="881.0" y="251" width="1" height="1" fill="#4a64c8" opacity="0.7559424543853159"/><rect x="881.0" y="257" width="1" height="5" fill="#4a64c8" opacity="0.7559424543853159"/><rect x="881.0" y="266" width="1" height="2" fill="#4a64c8" opacity="0.7559424543853159"/><rect x="881.0" y="271" width="1" height="4" fill="#4a64c8" opacity="0.7559424543853159"/><rect x="881.0" y="276" width="1" height="5" fill="#4a64c8" opacity="0.7559424543853159"/><rect x="881.0" y="286" width="1" height="3" fill="#4a64c8" opacity="0.7559424543853159"/><rect x="881.0" y="293" width="1" height="3" fill="#4a64c8" opacity="0.7559424543853159"/><rect x="881.0" y="299" width="1" height="3" fill="#4a64c8" opacity="0.7559424543853159"/><rect x="881.0" y="305" width="1" height="4" fill="#4a64c8" opacity="0.7559424543853159"/><rect x="881.0" y="314" width="1" height="1" fill="#4a64c8" opacity="0.7559424543853159"/><rect x="881.0" y="319" width="1" height="4" fill="#4a64c8" opacity="0.7559424543853159"/><rect x="881.0" y="326" width="1" height="1" fill="#4a64c8" opacity="0.7559424543853159"/><rect x="881.0" y="328" width="1" height="1" fill="#4a64c8" opacity="0.7559424543853159"/><rect x="881.0" y="334" width="1" height="4" fill="#4a64c8" opacity="0.7559424543853159"/><rect x="881.0" y="342" width="1" height="3" fill="#4a64c8" opacity="0.7559424543853159"/><rect x="886.0" y="187" width="1" height="5" fill="#4a64c8" opacity="0.756443721509848"/><rect x="886.0" y="196" width="1" height="1" fill="#4a64c8" opacity="0.756443721509848"/><rect x="886.0" y="200" width="1" height="4" fill="#4a64c8" opacity="0.756443721509848"/><rect x="886.0" y="206" width="1" height="1" fill="#4a64c8" opacity="0.756443721509848"/><rect x="886.0" y="210" width="1" height="2" fill="#4a64c8" opacity="0.756443721509848"/><rect x="886.0" y="214" width="1" height="5" fill="#4a64c8" opacity="0.756443721509848"/><rect x="886.0" y="224" width="1" height="5" fill="#4a64c8" opacity="0.756443721509848"/><rect x="886.0" y="230" width="1" height="4" fill="#4a64c8" opacity="0.756443721509848"/><rect x="886.0" y="236" width="1" height="5" fill="#4a64c8" opacity="0.756443721509848"/><rect x="886.0" y="244" width="1" height="2" fill="#4a64c8" opacity="0.756443721509848"/><rect x="886.0" y="249" width="1" height="5" fill="#4a64c8" opacity="0.756443721509848"/><rect x="886.0" y="255" width="1" height="4" fill="#4a64c8" opacity="0.756443721509848"/><rect x="886.0" y="264" width="1" height="4" fill="#4a64c8" opacity="0.756443721509848"/><rect x="886.0" y="269" width="1" height="4" fill="#4a64c8" opacity="0.756443721509848"/><rect x="886.0" y="277" width="1" height="3" fill="#4a64c8" opacity="0.756443721509848"/><rect x="886.0" y="283" width="1" height="3" fill="#4a64c8" opacity="0.756443721509848"/><rect x="886.0" y="288" width="1" height="5" fill="#4a64c8" opacity="0.756443721509848"/><rect x="886.0" y="297" width="1" height="1" fill="#4a64c8" opacity="0.756443721509848"/><rect x="886.0" y="303" width="1" height="3" fill="#4a64c8" opacity="0.756443721509848"/><rect x="886.0" y="308" width="1" height="2" fill="#4a64c8" opacity="0.756443721509848"/><rect x="886.0" y="315" width="1" height="1" fill="#4a64c8" opacity="0.756443721509848"/><rect x="886.0" y="318" width="1" height="3" fill="#4a64c8" opacity="0.756443721509848"/><rect x="886.0" y="326" width="1" height="2" fill="#4a64c8" opacity="0.756443721509848"/><rect x="886.0" y="331" width="1" height="1" fill="#4a64c8" opacity="0.756443721509848"/><rect x="886.0" y="337" width="1" height="3" fill="#4a64c8" opacity="0.756443721509848"/><rect x="886.0" y="344" width="1" height="3" fill="#4a64c8" opacity="0.756443721509848"/><rect x="886.0" y="349" width="1" height="1" fill="#4a64c8" opacity="0.756443721509848"/><rect x="916.0" y="187" width="1" height="4" fill="#4a64c8" opacity="0.756496828626759"/><rect x="916.0" y="193" width="1" height="5" fill="#4a64c8" opacity="0.756496828626759"/><rect x="916.0" y="201" width="1" height="4" fill="#4a64c8" opacity="0.756496828626759"/><rect x="916.0" y="209" width="1" height="1" fill="#4a64c8" opacity="0.756496828626759"/><rect x="916.0" y="213" width="1" height="3" fill="#4a64c8" opacity="0.756496828626759"/><rect x="916.0" y="220" width="1" height="3" fill="#4a64c8" opacity="0.756496828626759"/><rect x="916.0" y="227" width="1" height="4" fill="#4a64c8" opacity="0.756496828626759"/><rect x="916.0" y="234" width="1" height="1" fill="#4a64c8" opacity="0.756496828626759"/><rect x="916.0" y="237" width="1" height="5" fill="#4a64c8" opacity="0.756496828626759"/><rect x="916.0" y="246" width="1" height="5" fill="#4a64c8" opacity="0.756496828626759"/><rect x="916.0" y="255" width="1" height="2" fill="#4a64c8" opacity="0.756496828626759"/><rect x="916.0" y="260" width="1" height="1" fill="#4a64c8" opacity="0.756496828626759"/><rect x="916.0" y="263" width="1" height="3" fill="#4a64c8" opacity="0.756496828626759"/><rect x="916.0" y="271" width="1" height="4" fill="#4a64c8" opacity="0.756496828626759"/><rect x="916.0" y="280" width="1" height="4" fill="#4a64c8" opacity="0.756496828626759"/><rect x="916.0" y="285" width="1" height="3" fill="#4a64c8" opacity="0.756496828626759"/><rect x="916.0" y="292" width="1" height="3" fill="#4a64c8" opacity="0.756496828626759"/><rect x="916.0" y="299" width="1" height="5" fill="#4a64c8" opacity="0.756496828626759"/><rect x="916.0" y="307" width="1" height="1" fill="#4a64c8" opacity="0.756496828626759"/><rect x="916.0" y="311" width="1" height="4" fill="#4a64c8" opacity="0.756496828626759"/><rect x="916.0" y="316" width="1" height="1" fill="#4a64c8" opacity="0.756496828626759"/><rect x="916.0" y="322" width="1" height="5" fill="#4a64c8" opacity="0.756496828626759"/><rect x="916.0" y="330" width="1" height="3" fill="#4a64c8" opacity="0.756496828626759"/><rect x="916.0" y="338" width="1" height="3" fill="#4a64c8" opacity="0.756496828626759"/><rect x="916.0" y="344" width="1" height="2" fill="#4a64c8" opacity="0.756496828626759"/><rect x="916.0" y="347" width="1" height="3" fill="#4a64c8" opacity="0.756496828626759"/><rect x="926.0" y="187" width="1" height="4" fill="#4a64c8" opacity="0.701494242557169"/><rect x="926.0" y="192" width="1" height="3" fill="#4a64c8" opacity="0.701494242557169"/><rect x="926.0" y="197" width="1" height="2" fill="#4a64c8" opacity="0.701494242557169"/><rect x="926.0" y="200" width="1" height="4" fill="#4a64c8" opacity="0.701494242557169"/><rect x="926.0" y="208" width="1" height="3" fill="#4a64c8" opacity="0.701494242557169"/><rect x="926.0" y="215" width="1" height="4" fill="#4a64c8" opacity="0.701494242557169"/><rect x="926.0" y="223" width="1" height="3" fill="#4a64c8" opacity="0.701494242557169"/><rect x="926.0" y="229" width="1" height="2" fill="#4a64c8" opacity="0.701494242557169"/><rect x="926.0" y="233" width="1" height="5" fill="#4a64c8" opacity="0.701494242557169"/><rect x="926.0" y="243" width="1" height="4" fill="#4a64c8" opacity="0.701494242557169"/><rect x="926.0" y="250" width="1" height="2" fill="#4a64c8" opacity="0.701494242557169"/><rect x="926.0" y="254" width="1" height="3" fill="#4a64c8" opacity="0.701494242557169"/><rect x="926.0" y="258" width="1" height="4" fill="#4a64c8" opacity="0.701494242557169"/><rect x="926.0" y="263" width="1" height="5" fill="#4a64c8" opacity="0.701494242557169"/><rect x="926.0" y="269" width="1" height="5" fill="#4a64c8" opacity="0.701494242557169"/><rect x="926.0" y="276" width="1" height="5" fill="#4a64c8" opacity="0.701494242557169"/><rect x="926.0" y="285" width="1" height="4" fill="#4a64c8" opacity="0.701494242557169"/><rect x="926.0" y="291" width="1" height="5" fill="#4a64c8" opacity="0.701494242557169"/><rect x="926.0" y="299" width="1" height="2" fill="#4a64c8" opacity="0.701494242557169"/><rect x="926.0" y="303" width="1" height="2" fill="#4a64c8" opacity="0.701494242557169"/><rect x="926.0" y="307" width="1" height="5" fill="#4a64c8" opacity="0.701494242557169"/><rect x="926.0" y="313" width="1" height="3" fill="#4a64c8" opacity="0.701494242557169"/><rect x="926.0" y="317" width="1" height="4" fill="#4a64c8" opacity="0.701494242557169"/><rect x="926.0" y="324" width="1" height="2" fill="#4a64c8" opacity="0.701494242557169"/><rect x="926.0" y="330" width="1" height="5" fill="#4a64c8" opacity="0.701494242557169"/><rect x="926.0" y="338" width="1" height="1" fill="#4a64c8" opacity="0.701494242557169"/><rect x="926.0" y="344" width="1" height="5" fill="#4a64c8" opacity="0.701494242557169"/><rect x="700.0" y="222" width="1.5" height="3" fill="#6a88e8" opacity="0.9"/><rect x="700.0" y="228" width="1.5" height="2" fill="#6a88e8" opacity="0.9"/><rect x="700.0" y="231" width="1.5" height="3" fill="#6a88e8" opacity="0.9"/><rect x="700.0" y="235" width="1.5" height="3" fill="#6a88e8" opacity="0.9"/><rect x="700.0" y="241" width="1.5" height="5" fill="#6a88e8" opacity="0.9"/><rect x="700.0" y="247" width="1.5" height="3" fill="#6a88e8" opacity="0.9"/><rect x="700.0" y="251" width="1.5" height="6" fill="#6a88e8" opacity="0.9"/><rect x="700.0" y="260" width="1.5" height="1" fill="#6a88e8" opacity="0.9"/><rect x="700.0" y="262" width="1.5" height="3" fill="#6a88e8" opacity="0.9"/><rect x="700.0" y="266" width="1.5" height="1" fill="#6a88e8" opacity="0.9"/><rect x="700.0" y="269" width="1.5" height="6" fill="#6a88e8" opacity="0.9"/><rect x="700.0" y="276" width="1.5" height="4" fill="#6a88e8" opacity="0.9"/><rect x="700.0" y="282" width="1.5" height="5" fill="#6a88e8" opacity="0.9"/><rect x="700.0" y="288" width="1.5" height="4" fill="#6a88e8" opacity="0.9"/><rect x="700.0" y="295" width="1.5" height="5" fill="#6a88e8" opacity="0.9"/><rect x="700.0" y="303" width="1.5" height="1" fill="#6a88e8" opacity="0.9"/><rect x="700.0" y="305" width="1.5" height="5" fill="#6a88e8" opacity="0.9"/><rect x="700.0" y="312" width="1.5" height="1" fill="#6a88e8" opacity="0.9"/><rect x="700.0" y="315" width="1.5" height="2" fill="#6a88e8" opacity="0.9"/><rect x="700.0" y="319" width="1.5" height="6" fill="#6a88e8" opacity="0.9"/><rect x="700.0" y="327" width="1.5" height="3" fill="#6a88e8" opacity="0.9"/><rect x="700.0" y="333" width="1.5" height="5" fill="#6a88e8" opacity="0.9"/><rect x="700.0" y="339" width="1.5" height="2" fill="#6a88e8" opacity="0.9"/><rect x="700.0" y="344" width="1.5" height="2" fill="#6a88e8" opacity="0.9"/><rect x="700.0" y="348" width="1.5" height="2" fill="#6a88e8" opacity="0.9"/><rect x="702.0" y="222" width="1.5" height="6" fill="#6a88e8" opacity="0.9"/><rect x="702.0" y="229" width="1.5" height="2" fill="#6a88e8" opacity="0.9"/><rect x="702.0" y="232" width="1.5" height="1" fill="#6a88e8" opacity="0.9"/><rect x="702.0" y="236" width="1.5" height="3" fill="#6a88e8" opacity="0.9"/><rect x="702.0" y="241" width="1.5" height="3" fill="#6a88e8" opacity="0.9"/><rect x="702.0" y="245" width="1.5" height="6" fill="#6a88e8" opacity="0.9"/><rect x="702.0" y="253" width="1.5" height="6" fill="#6a88e8" opacity="0.9"/><rect x="702.0" y="260" width="1.5" height="5" fill="#6a88e8" opacity="0.9"/><rect x="702.0" y="266" width="1.5" height="4" fill="#6a88e8" opacity="0.9"/><rect x="702.0" y="272" width="1.5" height="5" fill="#6a88e8" opacity="0.9"/><rect x="702.0" y="280" width="1.5" height="4" fill="#6a88e8" opacity="0.9"/><rect x="702.0" y="285" width="1.5" height="6" fill="#6a88e8" opacity="0.9"/><rect x="702.0" y="292" width="1.5" height="3" fill="#6a88e8" opacity="0.9"/><rect x="702.0" y="298" width="1.5" height="3" fill="#6a88e8" opacity="0.9"/><rect x="702.0" y="304" width="1.5" height="3" fill="#6a88e8" opacity="0.9"/><rect x="702.0" y="308" width="1.5" height="6" fill="#6a88e8" opacity="0.9"/><rect x="702.0" y="316" width="1.5" height="5" fill="#6a88e8" opacity="0.9"/><rect x="702.0" y="322" width="1.5" height="4" fill="#6a88e8" opacity="0.9"/><rect x="702.0" y="328" width="1.5" height="6" fill="#6a88e8" opacity="0.9"/><rect x="702.0" y="337" width="1.5" height="5" fill="#6a88e8" opacity="0.9"/><rect x="702.0" y="344" width="1.5" height="2" fill="#6a88e8" opacity="0.9"/><rect x="702.0" y="348" width="1.5" height="2" fill="#6a88e8" opacity="0.9"/><rect x="728.0" y="202" width="1.5" height="1" fill="#6a88e8" opacity="0.8"/><rect x="728.0" y="207" width="1.5" height="2" fill="#6a88e8" opacity="0.8"/><rect x="728.0" y="212" width="1.5" height="2" fill="#6a88e8" opacity="0.8"/><rect x="728.0" y="215" width="1.5" height="5" fill="#6a88e8" opacity="0.8"/><rect x="728.0" y="221" width="1.5" height="4" fill="#6a88e8" opacity="0.8"/><rect x="728.0" y="227" width="1.5" height="2" fill="#6a88e8" opacity="0.8"/><rect x="728.0" y="232" width="1.5" height="2" fill="#6a88e8" opacity="0.8"/><rect x="728.0" y="237" width="1.5" height="1" fill="#6a88e8" opacity="0.8"/><rect x="728.0" y="239" width="1.5" height="1" fill="#6a88e8" opacity="0.8"/><rect x="728.0" y="243" width="1.5" height="2" fill="#6a88e8" opacity="0.8"/><rect x="728.0" y="249" width="1.5" height="1" fill="#6a88e8" opacity="0.8"/><rect x="728.0" y="253" width="1.5" height="5" fill="#6a88e8" opacity="0.8"/><rect x="728.0" y="261" width="1.5" height="2" fill="#6a88e8" opacity="0.8"/><rect x="728.0" y="266" width="1.5" height="3" fill="#6a88e8" opacity="0.8"/><rect x="728.0" y="272" width="1.5" height="1" fill="#6a88e8" opacity="0.8"/><rect x="728.0" y="274" width="1.5" height="2" fill="#6a88e8" opacity="0.8"/><rect x="728.0" y="279" width="1.5" height="4" fill="#6a88e8" opacity="0.8"/><rect x="728.0" y="284" width="1.5" height="4" fill="#6a88e8" opacity="0.8"/><rect x="728.0" y="289" width="1.5" height="3" fill="#6a88e8" opacity="0.8"/><rect x="728.0" y="293" width="1.5" height="2" fill="#6a88e8" opacity="0.8"/><rect x="728.0" y="298" width="1.5" height="4" fill="#6a88e8" opacity="0.8"/><rect x="728.0" y="306" width="1.5" height="1" fill="#6a88e8" opacity="0.8"/><rect x="728.0" y="310" width="1.5" height="3" fill="#6a88e8" opacity="0.8"/><rect x="728.0" y="317" width="1.5" height="2" fill="#6a88e8" opacity="0.8"/><rect x="728.0" y="320" width="1.5" height="5" fill="#6a88e8" opacity="0.8"/><rect x="728.0" y="328" width="1.5" height="5" fill="#6a88e8" opacity="0.8"/><rect x="728.0" y="337" width="1.5" height="2" fill="#6a88e8" opacity="0.8"/><rect x="728.0" y="342" width="1.5" height="3" fill="#6a88e8" opacity="0.8"/><rect x="728.0" y="346" width="1.5" height="2" fill="#6a88e8" opacity="0.8"/><rect x="727.0" y="202" width="1.5" height="5" fill="#6a88e8" opacity="0.8"/><rect x="727.0" y="211" width="1.5" height="4" fill="#6a88e8" opacity="0.8"/><rect x="727.0" y="217" width="1.5" height="4" fill="#6a88e8" opacity="0.8"/><rect x="727.0" y="223" width="1.5" height="2" fill="#6a88e8" opacity="0.8"/><rect x="727.0" y="226" width="1.5" height="1" fill="#6a88e8" opacity="0.8"/><rect x="727.0" y="229" width="1.5" height="5" fill="#6a88e8" opacity="0.8"/><rect x="727.0" y="238" width="1.5" height="1" fill="#6a88e8" opacity="0.8"/><rect x="727.0" y="240" width="1.5" height="1" fill="#6a88e8" opacity="0.8"/><rect x="727.0" y="245" width="1.5" height="1" fill="#6a88e8" opacity="0.8"/><rect x="727.0" y="248" width="1.5" height="5" fill="#6a88e8" opacity="0.8"/><rect x="727.0" y="254" width="1.5" height="3" fill="#6a88e8" opacity="0.8"/><rect x="727.0" y="260" width="1.5" height="5" fill="#6a88e8" opacity="0.8"/><rect x="727.0" y="269" width="1.5" height="4" fill="#6a88e8" opacity="0.8"/><rect x="727.0" y="275" width="1.5" height="1" fill="#6a88e8" opacity="0.8"/><rect x="727.0" y="278" width="1.5" height="2" fill="#6a88e8" opacity="0.8"/><rect x="727.0" y="283" width="1.5" height="4" fill="#6a88e8" opacity="0.8"/><rect x="727.0" y="288" width="1.5" height="1" fill="#6a88e8" opacity="0.8"/><rect x="727.0" y="291" width="1.5" height="2" fill="#6a88e8" opacity="0.8"/><rect x="727.0" y="297" width="1.5" height="4" fill="#6a88e8" opacity="0.8"/><rect x="727.0" y="305" width="1.5" height="1" fill="#6a88e8" opacity="0.8"/><rect x="727.0" y="307" width="1.5" height="4" fill="#6a88e8" opacity="0.8"/><rect x="727.0" y="313" width="1.5" height="4" fill="#6a88e8" opacity="0.8"/><rect x="727.0" y="319" width="1.5" height="4" fill="#6a88e8" opacity="0.8"/><rect x="727.0" y="327" width="1.5" height="5" fill="#6a88e8" opacity="0.8"/><rect x="727.0" y="334" width="1.5" height="1" fill="#6a88e8" opacity="0.8"/><rect x="727.0" y="339" width="1.5" height="5" fill="#6a88e8" opacity="0.8"/><rect x="727.0" y="348" width="1.5" height="1" fill="#6a88e8" opacity="0.8"/><rect x="746.0" y="214" width="1.5" height="2" fill="#7c98f0" opacity="0.9"/><rect x="746.0" y="217" width="1.5" height="4" fill="#7c98f0" opacity="0.9"/><rect x="746.0" y="224" width="1.5" height="2" fill="#7c98f0" opacity="0.9"/><rect x="746.0" y="229" width="1.5" height="1" fill="#7c98f0" opacity="0.9"/><rect x="746.0" y="231" width="1.5" height="1" fill="#7c98f0" opacity="0.9"/><rect x="746.0" y="233" width="1.5" height="1" fill="#7c98f0" opacity="0.9"/><rect x="746.0" y="235" width="1.5" height="4" fill="#7c98f0" opacity="0.9"/><rect x="746.0" y="240" width="1.5" height="4" fill="#7c98f0" opacity="0.9"/><rect x="746.0" y="245" width="1.5" height="2" fill="#7c98f0" opacity="0.9"/><rect x="746.0" y="250" width="1.5" height="1" fill="#7c98f0" opacity="0.9"/><rect x="746.0" y="254" width="1.5" height="5" fill="#7c98f0" opacity="0.9"/><rect x="746.0" y="261" width="1.5" height="3" fill="#7c98f0" opacity="0.9"/><rect x="751.0" y="214" width="1.5" height="2" fill="#7c98f0" opacity="0.9"/><rect x="751.0" y="218" width="1.5" height="1" fill="#7c98f0" opacity="0.9"/><rect x="751.0" y="221" width="1.5" height="1" fill="#7c98f0" opacity="0.9"/><rect x="751.0" y="225" width="1.5" height="1" fill="#7c98f0" opacity="0.9"/><rect x="751.0" y="227" width="1.5" height="2" fill="#7c98f0" opacity="0.9"/><rect x="751.0" y="232" width="1.5" height="2" fill="#7c98f0" opacity="0.9"/><rect x="751.0" y="237" width="1.5" height="5" fill="#7c98f0" opacity="0.9"/><rect x="751.0" y="244" width="1.5" height="1" fill="#7c98f0" opacity="0.9"/><rect x="751.0" y="248" width="1.5" height="4" fill="#7c98f0" opacity="0.9"/><rect x="751.0" y="253" width="1.5" height="1" fill="#7c98f0" opacity="0.9"/><rect x="751.0" y="255" width="1.5" height="5" fill="#7c98f0" opacity="0.9"/><rect x="751.0" y="263" width="1.5" height="1" fill="#7c98f0" opacity="0.9"/><rect x="817.0" y="187" width="1.5" height="5" fill="#7c98f0" opacity="0.95"/><rect x="817.0" y="193" width="1.5" height="1" fill="#7c98f0" opacity="0.95"/><rect x="817.0" y="196" width="1.5" height="4" fill="#7c98f0" opacity="0.95"/><rect x="817.0" y="202" width="1.5" height="1" fill="#7c98f0" opacity="0.95"/><rect x="817.0" y="204" width="1.5" height="1" fill="#7c98f0" opacity="0.95"/><rect x="817.0" y="206" width="1.5" height="5" fill="#7c98f0" opacity="0.95"/><rect x="817.0" y="213" width="1.5" height="2" fill="#7c98f0" opacity="0.95"/><rect x="817.0" y="216" width="1.5" height="2" fill="#7c98f0" opacity="0.95"/><rect x="817.0" y="220" width="1.5" height="1" fill="#7c98f0" opacity="0.95"/><rect x="817.0" y="222" width="1.5" height="5" fill="#7c98f0" opacity="0.95"/><rect x="817.0" y="229" width="1.5" height="1" fill="#7c98f0" opacity="0.95"/><rect x="817.0" y="231" width="1.5" height="2" fill="#7c98f0" opacity="0.95"/><rect x="817.0" y="234" width="1.5" height="1" fill="#7c98f0" opacity="0.95"/><rect x="817.0" y="237" width="1.5" height="3" fill="#7c98f0" opacity="0.95"/><rect x="817.0" y="242" width="1.5" height="3" fill="#7c98f0" opacity="0.95"/><rect x="817.0" y="247" width="1.5" height="2" fill="#7c98f0" opacity="0.95"/><rect x="817.0" y="251" width="1.5" height="5" fill="#7c98f0" opacity="0.95"/><rect x="817.0" y="258" width="1.5" height="2" fill="#7c98f0" opacity="0.95"/><rect x="817.0" y="261" width="1.5" height="1" fill="#7c98f0" opacity="0.95"/><rect x="817.0" y="263" width="1.5" height="1" fill="#7c98f0" opacity="0.95"/><rect x="817.0" y="265" width="1.5" height="5" fill="#7c98f0" opacity="0.95"/><rect x="817.0" y="271" width="1.5" height="5" fill="#7c98f0" opacity="0.95"/><rect x="817.0" y="278" width="1.5" height="3" fill="#7c98f0" opacity="0.95"/><rect x="819.0" y="187" width="1.5" height="5" fill="#7c98f0" opacity="0.95"/><rect x="819.0" y="193" width="1.5" height="1" fill="#7c98f0" opacity="0.95"/><rect x="819.0" y="195" width="1.5" height="1" fill="#7c98f0" opacity="0.95"/><rect x="819.0" y="197" width="1.5" height="2" fill="#7c98f0" opacity="0.95"/><rect x="819.0" y="201" width="1.5" height="1" fill="#7c98f0" opacity="0.95"/><rect x="819.0" y="203" width="1.5" height="5" fill="#7c98f0" opacity="0.95"/><rect x="819.0" y="210" width="1.5" height="4" fill="#7c98f0" opacity="0.95"/><rect x="819.0" y="216" width="1.5" height="2" fill="#7c98f0" opacity="0.95"/><rect x="819.0" y="220" width="1.5" height="3" fill="#7c98f0" opacity="0.95"/><rect x="819.0" y="225" width="1.5" height="1" fill="#7c98f0" opacity="0.95"/><rect x="819.0" y="228" width="1.5" height="4" fill="#7c98f0" opacity="0.95"/><rect x="819.0" y="233" width="1.5" height="2" fill="#7c98f0" opacity="0.95"/><rect x="819.0" y="237" width="1.5" height="2" fill="#7c98f0" opacity="0.95"/><rect x="819.0" y="241" width="1.5" height="5" fill="#7c98f0" opacity="0.95"/><rect x="819.0" y="248" width="1.5" height="3" fill="#7c98f0" opacity="0.95"/><rect x="819.0" y="252" width="1.5" height="1" fill="#7c98f0" opacity="0.95"/><rect x="819.0" y="255" width="1.5" height="5" fill="#7c98f0" opacity="0.95"/><rect x="819.0" y="261" width="1.5" height="3" fill="#7c98f0" opacity="0.95"/><rect x="819.0" y="265" width="1.5" height="5" fill="#7c98f0" opacity="0.95"/><rect x="819.0" y="272" width="1.5" height="3" fill="#7c98f0" opacity="0.95"/><rect x="819.0" y="276" width="1.5" height="2" fill="#7c98f0" opacity="0.95"/><rect x="819.0" y="280" width="1.5" height="1" fill="#7c98f0" opacity="0.95"/><rect x="821.0" y="187" width="1.5" height="1" fill="#7c98f0" opacity="0.95"/><rect x="821.0" y="189" width="1.5" height="3" fill="#7c98f0" opacity="0.95"/><rect x="821.0" y="194" width="1.5" height="3" fill="#7c98f0" opacity="0.95"/><rect x="821.0" y="199" width="1.5" height="1" fill="#7c98f0" opacity="0.95"/><rect x="821.0" y="201" width="1.5" height="4" fill="#7c98f0" opacity="0.95"/><rect x="821.0" y="206" width="1.5" height="2" fill="#7c98f0" opacity="0.95"/><rect x="821.0" y="209" width="1.5" height="5" fill="#7c98f0" opacity="0.95"/><rect x="821.0" y="215" width="1.5" height="4" fill="#7c98f0" opacity="0.95"/><rect x="821.0" y="220" width="1.5" height="2" fill="#7c98f0" opacity="0.95"/><rect x="821.0" y="223" width="1.5" height="3" fill="#7c98f0" opacity="0.95"/><rect x="821.0" y="227" width="1.5" height="3" fill="#7c98f0" opacity="0.95"/><rect x="821.0" y="232" width="1.5" height="1" fill="#7c98f0" opacity="0.95"/><rect x="821.0" y="234" width="1.5" height="5" fill="#7c98f0" opacity="0.95"/><rect x="821.0" y="241" width="1.5" height="5" fill="#7c98f0" opacity="0.95"/><rect x="821.0" y="247" width="1.5" height="3" fill="#7c98f0" opacity="0.95"/><rect x="821.0" y="252" width="1.5" height="2" fill="#7c98f0" opacity="0.95"/><rect x="821.0" y="256" width="1.5" height="3" fill="#7c98f0" opacity="0.95"/><rect x="821.0" y="260" width="1.5" height="1" fill="#7c98f0" opacity="0.95"/><rect x="821.0" y="262" width="1.5" height="3" fill="#7c98f0" opacity="0.95"/><rect x="821.0" y="266" width="1.5" height="1" fill="#7c98f0" opacity="0.95"/><rect x="821.0" y="268" width="1.5" height="4" fill="#7c98f0" opacity="0.95"/><rect x="821.0" y="274" width="1.5" height="1" fill="#7c98f0" opacity="0.95"/><rect x="821.0" y="276" width="1.5" height="1" fill="#7c98f0" opacity="0.95"/><rect x="821.0" y="278" width="1.5" height="1" fill="#7c98f0" opacity="0.95"/><rect x="843.0" y="187" width="1.5" height="1" fill="#7c98f0" opacity="0.9"/><rect x="843.0" y="189" width="1.5" height="5" fill="#7c98f0" opacity="0.9"/><rect x="843.0" y="195" width="1.5" height="6" fill="#7c98f0" opacity="0.9"/><rect x="843.0" y="203" width="1.5" height="6" fill="#7c98f0" opacity="0.9"/><rect x="843.0" y="212" width="1.5" height="6" fill="#7c98f0" opacity="0.9"/><rect x="843.0" y="220" width="1.5" height="4" fill="#7c98f0" opacity="0.9"/><rect x="843.0" y="225" width="1.5" height="1" fill="#7c98f0" opacity="0.9"/><rect x="843.0" y="228" width="1.5" height="3" fill="#7c98f0" opacity="0.9"/><rect x="843.0" y="233" width="1.5" height="4" fill="#7c98f0" opacity="0.9"/><rect x="843.0" y="240" width="1.5" height="6" fill="#7c98f0" opacity="0.9"/><rect x="843.0" y="247" width="1.5" height="4" fill="#7c98f0" opacity="0.9"/><rect x="843.0" y="254" width="1.5" height="1" fill="#7c98f0" opacity="0.9"/><rect x="843.0" y="257" width="1.5" height="3" fill="#7c98f0" opacity="0.9"/><rect x="843.0" y="262" width="1.5" height="2" fill="#7c98f0" opacity="0.9"/><rect x="843.0" y="265" width="1.5" height="4" fill="#7c98f0" opacity="0.9"/><rect x="843.0" y="270" width="1.5" height="1" fill="#7c98f0" opacity="0.9"/><rect x="843.0" y="272" width="1.5" height="3" fill="#7c98f0" opacity="0.9"/><rect x="843.0" y="278" width="1.5" height="3" fill="#7c98f0" opacity="0.9"/><rect x="843.0" y="283" width="1.5" height="5" fill="#7c98f0" opacity="0.9"/><rect x="843.0" y="289" width="1.5" height="2" fill="#7c98f0" opacity="0.9"/><rect x="843.0" y="292" width="1.5" height="1" fill="#7c98f0" opacity="0.9"/><rect x="843.0" y="294" width="1.5" height="6" fill="#7c98f0" opacity="0.9"/><rect x="843.0" y="303" width="1.5" height="5" fill="#7c98f0" opacity="0.9"/><rect x="843.0" y="310" width="1.5" height="6" fill="#7c98f0" opacity="0.9"/><rect x="843.0" y="318" width="1.5" height="2" fill="#7c98f0" opacity="0.9"/><rect x="843.0" y="321" width="1.5" height="2" fill="#7c98f0" opacity="0.9"/><rect x="843.0" y="325" width="1.5" height="1" fill="#7c98f0" opacity="0.9"/><rect x="843.0" y="327" width="1.5" height="4" fill="#7c98f0" opacity="0.9"/><rect x="843.0" y="333" width="1.5" height="6" fill="#7c98f0" opacity="0.9"/><rect x="843.0" y="340" width="1.5" height="5" fill="#7c98f0" opacity="0.9"/><rect x="843.0" y="348" width="1.5" height="2" fill="#7c98f0" opacity="0.9"/><rect x="846.0" y="187" width="1.5" height="1" fill="#7c98f0" opacity="0.9"/><rect x="846.0" y="190" width="1.5" height="1" fill="#7c98f0" opacity="0.9"/><rect x="846.0" y="193" width="1.5" height="2" fill="#7c98f0" opacity="0.9"/><rect x="846.0" y="197" width="1.5" height="3" fill="#7c98f0" opacity="0.9"/><rect x="846.0" y="203" width="1.5" height="6" fill="#7c98f0" opacity="0.9"/><rect x="846.0" y="210" width="1.5" height="2" fill="#7c98f0" opacity="0.9"/><rect x="846.0" y="214" width="1.5" height="6" fill="#7c98f0" opacity="0.9"/><rect x="846.0" y="222" width="1.5" height="3" fill="#7c98f0" opacity="0.9"/><rect x="846.0" y="227" width="1.5" height="2" fill="#7c98f0" opacity="0.9"/><rect x="846.0" y="232" width="1.5" height="6" fill="#7c98f0" opacity="0.9"/><rect x="846.0" y="239" width="1.5" height="2" fill="#7c98f0" opacity="0.9"/><rect x="846.0" y="242" width="1.5" height="3" fill="#7c98f0" opacity="0.9"/><rect x="846.0" y="247" width="1.5" height="1" fill="#7c98f0" opacity="0.9"/><rect x="846.0" y="249" width="1.5" height="6" fill="#7c98f0" opacity="0.9"/><rect x="846.0" y="256" width="1.5" height="2" fill="#7c98f0" opacity="0.9"/><rect x="846.0" y="260" width="1.5" height="3" fill="#7c98f0" opacity="0.9"/><rect x="846.0" y="264" width="1.5" height="6" fill="#7c98f0" opacity="0.9"/><rect x="846.0" y="272" width="1.5" height="3" fill="#7c98f0" opacity="0.9"/><rect x="846.0" y="276" width="1.5" height="1" fill="#7c98f0" opacity="0.9"/><rect x="846.0" y="278" width="1.5" height="6" fill="#7c98f0" opacity="0.9"/><rect x="846.0" y="286" width="1.5" height="3" fill="#7c98f0" opacity="0.9"/><rect x="846.0" y="290" width="1.5" height="3" fill="#7c98f0" opacity="0.9"/><rect x="846.0" y="294" width="1.5" height="4" fill="#7c98f0" opacity="0.9"/><rect x="846.0" y="300" width="1.5" height="4" fill="#7c98f0" opacity="0.9"/><rect x="846.0" y="305" width="1.5" height="1" fill="#7c98f0" opacity="0.9"/><rect x="846.0" y="308" width="1.5" height="5" fill="#7c98f0" opacity="0.9"/><rect x="846.0" y="316" width="1.5" height="4" fill="#7c98f0" opacity="0.9"/><rect x="846.0" y="321" width="1.5" height="4" fill="#7c98f0" opacity="0.9"/><rect x="846.0" y="326" width="1.5" height="4" fill="#7c98f0" opacity="0.9"/><rect x="846.0" y="332" width="1.5" height="2" fill="#7c98f0" opacity="0.9"/><rect x="846.0" y="335" width="1.5" height="4" fill="#7c98f0" opacity="0.9"/><rect x="846.0" y="341" width="1.5" height="1" fill="#7c98f0" opacity="0.9"/><rect x="846.0" y="343" width="1.5" height="2" fill="#7c98f0" opacity="0.9"/><rect x="846.0" y="346" width="1.5" height="3" fill="#7c98f0" opacity="0.9"/><rect x="848.0" y="187" width="1.5" height="4" fill="#7c98f0" opacity="0.9"/><rect x="848.0" y="193" width="1.5" height="2" fill="#7c98f0" opacity="0.9"/><rect x="848.0" y="197" width="1.5" height="5" fill="#7c98f0" opacity="0.9"/><rect x="848.0" y="203" width="1.5" height="1" fill="#7c98f0" opacity="0.9"/><rect x="848.0" y="207" width="1.5" height="2" fill="#7c98f0" opacity="0.9"/><rect x="848.0" y="211" width="1.5" height="6" fill="#7c98f0" opacity="0.9"/><rect x="848.0" y="218" width="1.5" height="5" fill="#7c98f0" opacity="0.9"/><rect x="848.0" y="226" width="1.5" height="4" fill="#7c98f0" opacity="0.9"/><rect x="848.0" y="231" width="1.5" height="1" fill="#7c98f0" opacity="0.9"/><rect x="848.0" y="234" width="1.5" height="5" fill="#7c98f0" opacity="0.9"/><rect x="848.0" y="240" width="1.5" height="2" fill="#7c98f0" opacity="0.9"/><rect x="848.0" y="245" width="1.5" height="2" fill="#7c98f0" opacity="0.9"/><rect x="848.0" y="250" width="1.5" height="3" fill="#7c98f0" opacity="0.9"/><rect x="848.0" y="254" width="1.5" height="1" fill="#7c98f0" opacity="0.9"/><rect x="848.0" y="256" width="1.5" height="4" fill="#7c98f0" opacity="0.9"/><rect x="848.0" y="262" width="1.5" height="4" fill="#7c98f0" opacity="0.9"/><rect x="848.0" y="268" width="1.5" height="6" fill="#7c98f0" opacity="0.9"/><rect x="848.0" y="275" width="1.5" height="1" fill="#7c98f0" opacity="0.9"/><rect x="848.0" y="278" width="1.5" height="6" fill="#7c98f0" opacity="0.9"/><rect x="848.0" y="286" width="1.5" height="1" fill="#7c98f0" opacity="0.9"/><rect x="848.0" y="288" width="1.5" height="3" fill="#7c98f0" opacity="0.9"/><rect x="848.0" y="294" width="1.5" height="3" fill="#7c98f0" opacity="0.9"/><rect x="848.0" y="298" width="1.5" height="1" fill="#7c98f0" opacity="0.9"/><rect x="848.0" y="302" width="1.5" height="4" fill="#7c98f0" opacity="0.9"/><rect x="848.0" y="308" width="1.5" height="3" fill="#7c98f0" opacity="0.9"/><rect x="848.0" y="312" width="1.5" height="5" fill="#7c98f0" opacity="0.9"/><rect x="848.0" y="318" width="1.5" height="6" fill="#7c98f0" opacity="0.9"/><rect x="848.0" y="327" width="1.5" height="5" fill="#7c98f0" opacity="0.9"/><rect x="848.0" y="333" width="1.5" height="6" fill="#7c98f0" opacity="0.9"/><rect x="848.0" y="341" width="1.5" height="6" fill="#7c98f0" opacity="0.9"/><rect x="852.0" y="187" width="1.5" height="1" fill="#7c98f0" opacity="0.9"/><rect x="852.0" y="191" width="1.5" height="6" fill="#7c98f0" opacity="0.9"/><rect x="852.0" y="198" width="1.5" height="4" fill="#7c98f0" opacity="0.9"/><rect x="852.0" y="205" width="1.5" height="5" fill="#7c98f0" opacity="0.9"/><rect x="852.0" y="211" width="1.5" height="6" fill="#7c98f0" opacity="0.9"/><rect x="852.0" y="219" width="1.5" height="2" fill="#7c98f0" opacity="0.9"/><rect x="852.0" y="223" width="1.5" height="3" fill="#7c98f0" opacity="0.9"/><rect x="852.0" y="229" width="1.5" height="1" fill="#7c98f0" opacity="0.9"/><rect x="852.0" y="232" width="1.5" height="6" fill="#7c98f0" opacity="0.9"/><rect x="852.0" y="241" width="1.5" height="2" fill="#7c98f0" opacity="0.9"/><rect x="852.0" y="246" width="1.5" height="2" fill="#7c98f0" opacity="0.9"/><rect x="852.0" y="249" width="1.5" height="5" fill="#7c98f0" opacity="0.9"/><rect x="852.0" y="256" width="1.5" height="6" fill="#7c98f0" opacity="0.9"/><rect x="852.0" y="263" width="1.5" height="4" fill="#7c98f0" opacity="0.9"/><rect x="852.0" y="268" width="1.5" height="1" fill="#7c98f0" opacity="0.9"/><rect x="852.0" y="271" width="1.5" height="4" fill="#7c98f0" opacity="0.9"/><rect x="852.0" y="276" width="1.5" height="2" fill="#7c98f0" opacity="0.9"/><rect x="852.0" y="280" width="1.5" height="6" fill="#7c98f0" opacity="0.9"/><rect x="852.0" y="288" width="1.5" height="5" fill="#7c98f0" opacity="0.9"/><rect x="852.0" y="294" width="1.5" height="1" fill="#7c98f0" opacity="0.9"/><rect x="852.0" y="297" width="1.5" height="1" fill="#7c98f0" opacity="0.9"/><rect x="852.0" y="301" width="1.5" height="2" fill="#7c98f0" opacity="0.9"/><rect x="852.0" y="304" width="1.5" height="3" fill="#7c98f0" opacity="0.9"/><rect x="852.0" y="309" width="1.5" height="2" fill="#7c98f0" opacity="0.9"/><rect x="852.0" y="312" width="1.5" height="4" fill="#7c98f0" opacity="0.9"/><rect x="852.0" y="318" width="1.5" height="5" fill="#7c98f0" opacity="0.9"/><rect x="852.0" y="326" width="1.5" height="4" fill="#7c98f0" opacity="0.9"/><rect x="852.0" y="333" width="1.5" height="2" fill="#7c98f0" opacity="0.9"/><rect x="852.0" y="338" width="1.5" height="2" fill="#7c98f0" opacity="0.9"/><rect x="852.0" y="341" width="1.5" height="4" fill="#7c98f0" opacity="0.9"/><rect x="852.0" y="346" width="1.5" height="3" fill="#7c98f0" opacity="0.9"/><rect x="897.0" y="187" width="1" height="163" fill="#6c8cf0" opacity="0.9"/><rect x="902.0" y="187" width="1" height="163" fill="#6c8cf0" opacity="0.9"/><rect x="904.0" y="187" width="1" height="163" fill="#6c8cf0" opacity="0.9"/><rect x="998.0" y="187" width="1" height="3" fill="#4a64c8" opacity="0.5083919561692546"/><rect x="998.0" y="191" width="1" height="4" fill="#4a64c8" opacity="0.5083919561692546"/><rect x="998.0" y="197" width="1" height="3" fill="#4a64c8" opacity="0.5083919561692546"/><rect x="998.0" y="204" width="1" height="1" fill="#4a64c8" opacity="0.5083919561692546"/><rect x="998.0" y="210" width="1" height="3" fill="#4a64c8" opacity="0.5083919561692546"/><rect x="998.0" y="215" width="1" height="2" fill="#4a64c8" opacity="0.5083919561692546"/><rect x="998.0" y="218" width="1" height="2" fill="#4a64c8" opacity="0.5083919561692546"/><rect x="998.0" y="225" width="1" height="3" fill="#4a64c8" opacity="0.5083919561692546"/><rect x="998.0" y="233" width="1" height="4" fill="#4a64c8" opacity="0.5083919561692546"/><rect x="998.0" y="241" width="1" height="5" fill="#4a64c8" opacity="0.5083919561692546"/><rect x="998.0" y="251" width="1" height="4" fill="#4a64c8" opacity="0.5083919561692546"/><rect x="998.0" y="257" width="1" height="3" fill="#4a64c8" opacity="0.5083919561692546"/><rect x="998.0" y="262" width="1" height="5" fill="#4a64c8" opacity="0.5083919561692546"/><rect x="998.0" y="268" width="1" height="3" fill="#4a64c8" opacity="0.5083919561692546"/><rect x="998.0" y="275" width="1" height="2" fill="#4a64c8" opacity="0.5083919561692546"/><rect x="998.0" y="279" width="1" height="5" fill="#4a64c8" opacity="0.5083919561692546"/><rect x="998.0" y="286" width="1" height="5" fill="#4a64c8" opacity="0.5083919561692546"/><rect x="998.0" y="294" width="1" height="1" fill="#4a64c8" opacity="0.5083919561692546"/><rect x="998.0" y="297" width="1" height="2" fill="#4a64c8" opacity="0.5083919561692546"/><rect x="998.0" y="303" width="1" height="2" fill="#4a64c8" opacity="0.5083919561692546"/><rect x="998.0" y="306" width="1" height="5" fill="#4a64c8" opacity="0.5083919561692546"/><rect x="998.0" y="315" width="1" height="4" fill="#4a64c8" opacity="0.5083919561692546"/><rect x="998.0" y="322" width="1" height="5" fill="#4a64c8" opacity="0.5083919561692546"/><rect x="998.0" y="329" width="1" height="2" fill="#4a64c8" opacity="0.5083919561692546"/><rect x="998.0" y="334" width="1" height="4" fill="#4a64c8" opacity="0.5083919561692546"/><rect x="998.0" y="339" width="1" height="1" fill="#4a64c8" opacity="0.5083919561692546"/><rect x="998.0" y="344" width="1" height="1" fill="#4a64c8" opacity="0.5083919561692546"/><rect x="998.0" y="346" width="1" height="3" fill="#4a64c8" opacity="0.5083919561692546"/><rect x="1000.0" y="187" width="1" height="2" fill="#4a64c8" opacity="0.5155878625913445"/><rect x="1000.0" y="191" width="1" height="4" fill="#4a64c8" opacity="0.5155878625913445"/><rect x="1000.0" y="196" width="1" height="5" fill="#4a64c8" opacity="0.5155878625913445"/><rect x="1000.0" y="205" width="1" height="3" fill="#4a64c8" opacity="0.5155878625913445"/><rect x="1000.0" y="213" width="1" height="5" fill="#4a64c8" opacity="0.5155878625913445"/><rect x="1000.0" y="219" width="1" height="4" fill="#4a64c8" opacity="0.5155878625913445"/><rect x="1000.0" y="225" width="1" height="4" fill="#4a64c8" opacity="0.5155878625913445"/><rect x="1000.0" y="234" width="1" height="5" fill="#4a64c8" opacity="0.5155878625913445"/><rect x="1000.0" y="242" width="1" height="5" fill="#4a64c8" opacity="0.5155878625913445"/><rect x="1000.0" y="252" width="1" height="2" fill="#4a64c8" opacity="0.5155878625913445"/><rect x="1000.0" y="258" width="1" height="1" fill="#4a64c8" opacity="0.5155878625913445"/><rect x="1000.0" y="264" width="1" height="3" fill="#4a64c8" opacity="0.5155878625913445"/><rect x="1000.0" y="272" width="1" height="4" fill="#4a64c8" opacity="0.5155878625913445"/><rect x="1000.0" y="278" width="1" height="3" fill="#4a64c8" opacity="0.5155878625913445"/><rect x="1000.0" y="283" width="1" height="4" fill="#4a64c8" opacity="0.5155878625913445"/><rect x="1000.0" y="290" width="1" height="5" fill="#4a64c8" opacity="0.5155878625913445"/><rect x="1000.0" y="298" width="1" height="1" fill="#4a64c8" opacity="0.5155878625913445"/><rect x="1000.0" y="300" width="1" height="5" fill="#4a64c8" opacity="0.5155878625913445"/><rect x="1000.0" y="309" width="1" height="2" fill="#4a64c8" opacity="0.5155878625913445"/><rect x="1000.0" y="314" width="1" height="1" fill="#4a64c8" opacity="0.5155878625913445"/><rect x="1000.0" y="319" width="1" height="4" fill="#4a64c8" opacity="0.5155878625913445"/><rect x="1000.0" y="326" width="1" height="2" fill="#4a64c8" opacity="0.5155878625913445"/><rect x="1000.0" y="332" width="1" height="3" fill="#4a64c8" opacity="0.5155878625913445"/><rect x="1000.0" y="337" width="1" height="4" fill="#4a64c8" opacity="0.5155878625913445"/><rect x="1000.0" y="342" width="1" height="2" fill="#4a64c8" opacity="0.5155878625913445"/><rect x="1000.0" y="349" width="1" height="1" fill="#4a64c8" opacity="0.5155878625913445"/><rect x="1030.0" y="187" width="1" height="2" fill="#4a64c8" opacity="0.7846364323315888"/><rect x="1030.0" y="192" width="1" height="3" fill="#4a64c8" opacity="0.7846364323315888"/><rect x="1030.0" y="199" width="1" height="4" fill="#4a64c8" opacity="0.7846364323315888"/><rect x="1030.0" y="206" width="1" height="2" fill="#4a64c8" opacity="0.7846364323315888"/><rect x="1030.0" y="210" width="1" height="2" fill="#4a64c8" opacity="0.7846364323315888"/><rect x="1030.0" y="215" width="1" height="1" fill="#4a64c8" opacity="0.7846364323315888"/><rect x="1030.0" y="217" width="1" height="5" fill="#4a64c8" opacity="0.7846364323315888"/><rect x="1030.0" y="224" width="1" height="4" fill="#4a64c8" opacity="0.7846364323315888"/><rect x="1030.0" y="233" width="1" height="4" fill="#4a64c8" opacity="0.7846364323315888"/><rect x="1030.0" y="238" width="1" height="4" fill="#4a64c8" opacity="0.7846364323315888"/><rect x="1030.0" y="247" width="1" height="4" fill="#4a64c8" opacity="0.7846364323315888"/><rect x="1030.0" y="254" width="1" height="5" fill="#4a64c8" opacity="0.7846364323315888"/><rect x="1030.0" y="264" width="1" height="3" fill="#4a64c8" opacity="0.7846364323315888"/><rect x="1030.0" y="270" width="1" height="4" fill="#4a64c8" opacity="0.7846364323315888"/><rect x="1030.0" y="277" width="1" height="2" fill="#4a64c8" opacity="0.7846364323315888"/><rect x="1030.0" y="283" width="1" height="1" fill="#4a64c8" opacity="0.7846364323315888"/><rect x="1030.0" y="286" width="1" height="4" fill="#4a64c8" opacity="0.7846364323315888"/><rect x="1030.0" y="293" width="1" height="1" fill="#4a64c8" opacity="0.7846364323315888"/><rect x="1030.0" y="297" width="1" height="5" fill="#4a64c8" opacity="0.7846364323315888"/><rect x="1030.0" y="304" width="1" height="2" fill="#4a64c8" opacity="0.7846364323315888"/><rect x="1030.0" y="311" width="1" height="2" fill="#4a64c8" opacity="0.7846364323315888"/><rect x="1030.0" y="316" width="1" height="3" fill="#4a64c8" opacity="0.7846364323315888"/><rect x="1030.0" y="322" width="1" height="2" fill="#4a64c8" opacity="0.7846364323315888"/><rect x="1030.0" y="325" width="1" height="5" fill="#4a64c8" opacity="0.7846364323315888"/><rect x="1030.0" y="334" width="1" height="5" fill="#4a64c8" opacity="0.7846364323315888"/><rect x="1030.0" y="340" width="1" height="2" fill="#4a64c8" opacity="0.7846364323315888"/><rect x="1030.0" y="343" width="1" height="5" fill="#4a64c8" opacity="0.7846364323315888"/><rect x="1052.0" y="187" width="1" height="5" fill="#4a64c8" opacity="0.5649029663968739"/><rect x="1052.0" y="195" width="1" height="1" fill="#4a64c8" opacity="0.5649029663968739"/><rect x="1052.0" y="197" width="1" height="1" fill="#4a64c8" opacity="0.5649029663968739"/><rect x="1052.0" y="200" width="1" height="1" fill="#4a64c8" opacity="0.5649029663968739"/><rect x="1052.0" y="203" width="1" height="1" fill="#4a64c8" opacity="0.5649029663968739"/><rect x="1052.0" y="206" width="1" height="2" fill="#4a64c8" opacity="0.5649029663968739"/><rect x="1052.0" y="210" width="1" height="3" fill="#4a64c8" opacity="0.5649029663968739"/><rect x="1052.0" y="215" width="1" height="1" fill="#4a64c8" opacity="0.5649029663968739"/><rect x="1052.0" y="217" width="1" height="1" fill="#4a64c8" opacity="0.5649029663968739"/><rect x="1052.0" y="219" width="1" height="1" fill="#4a64c8" opacity="0.5649029663968739"/><rect x="1052.0" y="222" width="1" height="2" fill="#4a64c8" opacity="0.5649029663968739"/><rect x="1052.0" y="228" width="1" height="3" fill="#4a64c8" opacity="0.5649029663968739"/><rect x="1052.0" y="232" width="1" height="5" fill="#4a64c8" opacity="0.5649029663968739"/><rect x="1052.0" y="240" width="1" height="3" fill="#4a64c8" opacity="0.5649029663968739"/><rect x="1052.0" y="246" width="1" height="4" fill="#4a64c8" opacity="0.5649029663968739"/><rect x="1052.0" y="254" width="1" height="3" fill="#4a64c8" opacity="0.5649029663968739"/><rect x="1052.0" y="260" width="1" height="1" fill="#4a64c8" opacity="0.5649029663968739"/><rect x="1052.0" y="262" width="1" height="3" fill="#4a64c8" opacity="0.5649029663968739"/><rect x="1052.0" y="267" width="1" height="3" fill="#4a64c8" opacity="0.5649029663968739"/><rect x="1052.0" y="271" width="1" height="1" fill="#4a64c8" opacity="0.5649029663968739"/><rect x="1052.0" y="277" width="1" height="1" fill="#4a64c8" opacity="0.5649029663968739"/><rect x="1052.0" y="281" width="1" height="2" fill="#4a64c8" opacity="0.5649029663968739"/><rect x="1052.0" y="286" width="1" height="3" fill="#4a64c8" opacity="0.5649029663968739"/><rect x="1052.0" y="294" width="1" height="4" fill="#4a64c8" opacity="0.5649029663968739"/><rect x="1052.0" y="300" width="1" height="2" fill="#4a64c8" opacity="0.5649029663968739"/><rect x="1052.0" y="307" width="1" height="5" fill="#4a64c8" opacity="0.5649029663968739"/><rect x="1052.0" y="313" width="1" height="2" fill="#4a64c8" opacity="0.5649029663968739"/><rect x="1052.0" y="319" width="1" height="4" fill="#4a64c8" opacity="0.5649029663968739"/><rect x="1052.0" y="326" width="1" height="1" fill="#4a64c8" opacity="0.5649029663968739"/><rect x="1052.0" y="329" width="1" height="3" fill="#4a64c8" opacity="0.5649029663968739"/><rect x="1052.0" y="333" width="1" height="4" fill="#4a64c8" opacity="0.5649029663968739"/><rect x="1052.0" y="338" width="1" height="1" fill="#4a64c8" opacity="0.5649029663968739"/><rect x="1052.0" y="344" width="1" height="2" fill="#4a64c8" opacity="0.5649029663968739"/><rect x="1052.0" y="348" width="1" height="2" fill="#4a64c8" opacity="0.5649029663968739"/><rect x="1195.0" y="187" width="1" height="2" fill="#4a64c8" opacity="0.7165079230506655"/><rect x="1195.0" y="194" width="1" height="1" fill="#4a64c8" opacity="0.7165079230506655"/><rect x="1195.0" y="199" width="1" height="5" fill="#4a64c8" opacity="0.7165079230506655"/><rect x="1195.0" y="208" width="1" height="2" fill="#4a64c8" opacity="0.7165079230506655"/><rect x="1195.0" y="211" width="1" height="2" fill="#4a64c8" opacity="0.7165079230506655"/><rect x="1195.0" y="218" width="1" height="2" fill="#4a64c8" opacity="0.7165079230506655"/><rect x="1195.0" y="221" width="1" height="4" fill="#4a64c8" opacity="0.7165079230506655"/><rect x="1195.0" y="227" width="1" height="3" fill="#4a64c8" opacity="0.7165079230506655"/><rect x="1195.0" y="235" width="1" height="4" fill="#4a64c8" opacity="0.7165079230506655"/><rect x="1195.0" y="244" width="1" height="5" fill="#4a64c8" opacity="0.7165079230506655"/><rect x="1195.0" y="252" width="1" height="1" fill="#4a64c8" opacity="0.7165079230506655"/><rect x="1195.0" y="254" width="1" height="2" fill="#4a64c8" opacity="0.7165079230506655"/><rect x="1195.0" y="257" width="1" height="2" fill="#4a64c8" opacity="0.7165079230506655"/><rect x="1195.0" y="264" width="1" height="3" fill="#4a64c8" opacity="0.7165079230506655"/><rect x="1195.0" y="269" width="1" height="4" fill="#4a64c8" opacity="0.7165079230506655"/><rect x="1195.0" y="278" width="1" height="2" fill="#4a64c8" opacity="0.7165079230506655"/><rect x="1195.0" y="282" width="1" height="2" fill="#4a64c8" opacity="0.7165079230506655"/><rect x="1195.0" y="287" width="1" height="3" fill="#4a64c8" opacity="0.7165079230506655"/><rect x="1195.0" y="292" width="1" height="2" fill="#4a64c8" opacity="0.7165079230506655"/><rect x="1195.0" y="295" width="1" height="2" fill="#4a64c8" opacity="0.7165079230506655"/><rect x="1195.0" y="301" width="1" height="3" fill="#4a64c8" opacity="0.7165079230506655"/><rect x="1195.0" y="307" width="1" height="4" fill="#4a64c8" opacity="0.7165079230506655"/><rect x="1195.0" y="314" width="1" height="5" fill="#4a64c8" opacity="0.7165079230506655"/><rect x="1195.0" y="322" width="1" height="1" fill="#4a64c8" opacity="0.7165079230506655"/><rect x="1195.0" y="328" width="1" height="3" fill="#4a64c8" opacity="0.7165079230506655"/><rect x="1195.0" y="332" width="1" height="3" fill="#4a64c8" opacity="0.7165079230506655"/><rect x="1195.0" y="336" width="1" height="3" fill="#4a64c8" opacity="0.7165079230506655"/><rect x="1195.0" y="344" width="1" height="2" fill="#4a64c8" opacity="0.7165079230506655"/><rect x="1195.0" y="348" width="1" height="2" fill="#4a64c8" opacity="0.7165079230506655"/><rect x="1227.0" y="187" width="1" height="2" fill="#4a64c8" opacity="0.5847022355503655"/><rect x="1227.0" y="192" width="1" height="1" fill="#4a64c8" opacity="0.5847022355503655"/><rect x="1227.0" y="198" width="1" height="5" fill="#4a64c8" opacity="0.5847022355503655"/><rect x="1227.0" y="206" width="1" height="4" fill="#4a64c8" opacity="0.5847022355503655"/><rect x="1227.0" y="215" width="1" height="3" fill="#4a64c8" opacity="0.5847022355503655"/><rect x="1227.0" y="219" width="1" height="1" fill="#4a64c8" opacity="0.5847022355503655"/><rect x="1227.0" y="221" width="1" height="5" fill="#4a64c8" opacity="0.5847022355503655"/><rect x="1227.0" y="230" width="1" height="4" fill="#4a64c8" opacity="0.5847022355503655"/><rect x="1227.0" y="238" width="1" height="1" fill="#4a64c8" opacity="0.5847022355503655"/><rect x="1227.0" y="242" width="1" height="5" fill="#4a64c8" opacity="0.5847022355503655"/><rect x="1227.0" y="249" width="1" height="4" fill="#4a64c8" opacity="0.5847022355503655"/><rect x="1227.0" y="256" width="1" height="4" fill="#4a64c8" opacity="0.5847022355503655"/><rect x="1227.0" y="264" width="1" height="3" fill="#4a64c8" opacity="0.5847022355503655"/><rect x="1227.0" y="272" width="1" height="4" fill="#4a64c8" opacity="0.5847022355503655"/><rect x="1227.0" y="279" width="1" height="5" fill="#4a64c8" opacity="0.5847022355503655"/><rect x="1227.0" y="285" width="1" height="1" fill="#4a64c8" opacity="0.5847022355503655"/><rect x="1227.0" y="290" width="1" height="1" fill="#4a64c8" opacity="0.5847022355503655"/><rect x="1227.0" y="294" width="1" height="2" fill="#4a64c8" opacity="0.5847022355503655"/><rect x="1227.0" y="297" width="1" height="5" fill="#4a64c8" opacity="0.5847022355503655"/><rect x="1227.0" y="304" width="1" height="1" fill="#4a64c8" opacity="0.5847022355503655"/><rect x="1227.0" y="309" width="1" height="5" fill="#4a64c8" opacity="0.5847022355503655"/><rect x="1227.0" y="315" width="1" height="3" fill="#4a64c8" opacity="0.5847022355503655"/><rect x="1227.0" y="319" width="1" height="3" fill="#4a64c8" opacity="0.5847022355503655"/><rect x="1227.0" y="326" width="1" height="5" fill="#4a64c8" opacity="0.5847022355503655"/><rect x="1227.0" y="332" width="1" height="2" fill="#4a64c8" opacity="0.5847022355503655"/><rect x="1227.0" y="338" width="1" height="1" fill="#4a64c8" opacity="0.5847022355503655"/><rect x="1227.0" y="340" width="1" height="1" fill="#4a64c8" opacity="0.5847022355503655"/><rect x="1227.0" y="344" width="1" height="2" fill="#4a64c8" opacity="0.5847022355503655"/><rect x="1244.0" y="187" width="1" height="1" fill="#4a64c8" opacity="0.4426197162275234"/><rect x="1244.0" y="191" width="1" height="2" fill="#4a64c8" opacity="0.4426197162275234"/><rect x="1244.0" y="198" width="1" height="5" fill="#4a64c8" opacity="0.4426197162275234"/><rect x="1244.0" y="207" width="1" height="2" fill="#4a64c8" opacity="0.4426197162275234"/><rect x="1244.0" y="211" width="1" height="2" fill="#4a64c8" opacity="0.4426197162275234"/><rect x="1244.0" y="217" width="1" height="4" fill="#4a64c8" opacity="0.4426197162275234"/><rect x="1244.0" y="224" width="1" height="3" fill="#4a64c8" opacity="0.4426197162275234"/><rect x="1244.0" y="228" width="1" height="2" fill="#4a64c8" opacity="0.4426197162275234"/><rect x="1244.0" y="234" width="1" height="5" fill="#4a64c8" opacity="0.4426197162275234"/><rect x="1244.0" y="240" width="1" height="1" fill="#4a64c8" opacity="0.4426197162275234"/><rect x="1244.0" y="244" width="1" height="4" fill="#4a64c8" opacity="0.4426197162275234"/><rect x="1244.0" y="252" width="1" height="2" fill="#4a64c8" opacity="0.4426197162275234"/><rect x="1244.0" y="256" width="1" height="5" fill="#4a64c8" opacity="0.4426197162275234"/><rect x="1244.0" y="264" width="1" height="4" fill="#4a64c8" opacity="0.4426197162275234"/><rect x="1244.0" y="272" width="1" height="2" fill="#4a64c8" opacity="0.4426197162275234"/><rect x="1244.0" y="276" width="1" height="2" fill="#4a64c8" opacity="0.4426197162275234"/><rect x="1244.0" y="282" width="1" height="1" fill="#4a64c8" opacity="0.4426197162275234"/><rect x="1244.0" y="288" width="1" height="3" fill="#4a64c8" opacity="0.4426197162275234"/><rect x="1244.0" y="293" width="1" height="1" fill="#4a64c8" opacity="0.4426197162275234"/><rect x="1244.0" y="297" width="1" height="5" fill="#4a64c8" opacity="0.4426197162275234"/><rect x="1244.0" y="306" width="1" height="2" fill="#4a64c8" opacity="0.4426197162275234"/><rect x="1244.0" y="313" width="1" height="3" fill="#4a64c8" opacity="0.4426197162275234"/><rect x="1244.0" y="319" width="1" height="2" fill="#4a64c8" opacity="0.4426197162275234"/><rect x="1244.0" y="324" width="1" height="2" fill="#4a64c8" opacity="0.4426197162275234"/><rect x="1244.0" y="330" width="1" height="1" fill="#4a64c8" opacity="0.4426197162275234"/><rect x="1244.0" y="332" width="1" height="2" fill="#4a64c8" opacity="0.4426197162275234"/><rect x="1244.0" y="339" width="1" height="3" fill="#4a64c8" opacity="0.4426197162275234"/><rect x="1244.0" y="343" width="1" height="3" fill="#4a64c8" opacity="0.4426197162275234"/><rect x="1249.0" y="187" width="1" height="1" fill="#4a64c8" opacity="0.4157438692432607"/><rect x="1249.0" y="191" width="1" height="2" fill="#4a64c8" opacity="0.4157438692432607"/><rect x="1249.0" y="196" width="1" height="3" fill="#4a64c8" opacity="0.4157438692432607"/><rect x="1249.0" y="202" width="1" height="3" fill="#4a64c8" opacity="0.4157438692432607"/><rect x="1249.0" y="208" width="1" height="5" fill="#4a64c8" opacity="0.4157438692432607"/><rect x="1249.0" y="216" width="1" height="4" fill="#4a64c8" opacity="0.4157438692432607"/><rect x="1249.0" y="224" width="1" height="3" fill="#4a64c8" opacity="0.4157438692432607"/><rect x="1249.0" y="228" width="1" height="2" fill="#4a64c8" opacity="0.4157438692432607"/><rect x="1249.0" y="231" width="1" height="4" fill="#4a64c8" opacity="0.4157438692432607"/><rect x="1249.0" y="240" width="1" height="2" fill="#4a64c8" opacity="0.4157438692432607"/><rect x="1249.0" y="243" width="1" height="2" fill="#4a64c8" opacity="0.4157438692432607"/><rect x="1249.0" y="247" width="1" height="3" fill="#4a64c8" opacity="0.4157438692432607"/><rect x="1249.0" y="253" width="1" height="5" fill="#4a64c8" opacity="0.4157438692432607"/><rect x="1249.0" y="261" width="1" height="4" fill="#4a64c8" opacity="0.4157438692432607"/><rect x="1249.0" y="269" width="1" height="3" fill="#4a64c8" opacity="0.4157438692432607"/><rect x="1249.0" y="274" width="1" height="2" fill="#4a64c8" opacity="0.4157438692432607"/><rect x="1249.0" y="281" width="1" height="3" fill="#4a64c8" opacity="0.4157438692432607"/><rect x="1249.0" y="285" width="1" height="3" fill="#4a64c8" opacity="0.4157438692432607"/><rect x="1249.0" y="290" width="1" height="3" fill="#4a64c8" opacity="0.4157438692432607"/><rect x="1249.0" y="295" width="1" height="5" fill="#4a64c8" opacity="0.4157438692432607"/><rect x="1249.0" y="301" width="1" height="5" fill="#4a64c8" opacity="0.4157438692432607"/><rect x="1249.0" y="310" width="1" height="3" fill="#4a64c8" opacity="0.4157438692432607"/><rect x="1249.0" y="317" width="1" height="4" fill="#4a64c8" opacity="0.4157438692432607"/><rect x="1249.0" y="323" width="1" height="3" fill="#4a64c8" opacity="0.4157438692432607"/><rect x="1249.0" y="329" width="1" height="2" fill="#4a64c8" opacity="0.4157438692432607"/><rect x="1249.0" y="332" width="1" height="1" fill="#4a64c8" opacity="0.4157438692432607"/><rect x="1249.0" y="334" width="1" height="3" fill="#4a64c8" opacity="0.4157438692432607"/><rect x="1249.0" y="338" width="1" height="1" fill="#4a64c8" opacity="0.4157438692432607"/><rect x="1249.0" y="341" width="1" height="3" fill="#4a64c8" opacity="0.4157438692432607"/><rect x="1249.0" y="345" width="1" height="5" fill="#4a64c8" opacity="0.4157438692432607"/><rect x="1074.0" y="187" width="1" height="4" fill="#5a74d8" opacity="0.8"/><rect x="1074.0" y="192" width="1" height="2" fill="#5a74d8" opacity="0.8"/><rect x="1074.0" y="198" width="1" height="4" fill="#5a74d8" opacity="0.8"/><rect x="1074.0" y="205" width="1" height="4" fill="#5a74d8" opacity="0.8"/><rect x="1126.0" y="264" width="1" height="3" fill="#4a64c8" opacity="0.7"/><rect x="1126.0" y="271" width="1" height="3" fill="#4a64c8" opacity="0.7"/><rect x="1126.0" y="277" width="1" height="3" fill="#4a64c8" opacity="0.7"/><rect x="1126.0" y="283" width="1" height="5" fill="#4a64c8" opacity="0.7"/><rect x="1126.0" y="289" width="1" height="5" fill="#4a64c8" opacity="0.7"/><rect x="1126.0" y="295" width="1" height="4" fill="#4a64c8" opacity="0.7"/><rect x="1126.0" y="303" width="1" height="4" fill="#4a64c8" opacity="0.7"/><rect x="1126.0" y="308" width="1" height="2" fill="#4a64c8" opacity="0.7"/><rect x="1126.0" y="312" width="1" height="2" fill="#4a64c8" opacity="0.7"/><rect x="1126.0" y="317" width="1" height="5" fill="#4a64c8" opacity="0.7"/><rect x="1126.0" y="325" width="1" height="1" fill="#4a64c8" opacity="0.7"/><rect x="1126.0" y="327" width="1" height="4" fill="#4a64c8" opacity="0.7"/><rect x="1126.0" y="335" width="1" height="1" fill="#4a64c8" opacity="0.7"/><rect x="1126.0" y="338" width="1" height="4" fill="#4a64c8" opacity="0.7"/><rect x="1126.0" y="343" width="1" height="2" fill="#4a64c8" opacity="0.7"/><rect x="1126.0" y="348" width="1" height="2" fill="#4a64c8" opacity="0.7"/><rect x="1131.0" y="264" width="1" height="1" fill="#4a64c8" opacity="0.7"/><rect x="1131.0" y="267" width="1" height="5" fill="#4a64c8" opacity="0.7"/><rect x="1131.0" y="273" width="1" height="2" fill="#4a64c8" opacity="0.7"/><rect x="1131.0" y="278" width="1" height="4" fill="#4a64c8" opacity="0.7"/><rect x="1131.0" y="284" width="1" height="4" fill="#4a64c8" opacity="0.7"/><rect x="1131.0" y="289" width="1" height="4" fill="#4a64c8" opacity="0.7"/><rect x="1131.0" y="295" width="1" height="3" fill="#4a64c8" opacity="0.7"/><rect x="1131.0" y="301" width="1" height="3" fill="#4a64c8" opacity="0.7"/><rect x="1131.0" y="306" width="1" height="4" fill="#4a64c8" opacity="0.7"/><rect x="1131.0" y="311" width="1" height="2" fill="#4a64c8" opacity="0.7"/><rect x="1131.0" y="317" width="1" height="5" fill="#4a64c8" opacity="0.7"/><rect x="1131.0" y="324" width="1" height="2" fill="#4a64c8" opacity="0.7"/><rect x="1131.0" y="327" width="1" height="5" fill="#4a64c8" opacity="0.7"/><rect x="1131.0" y="333" width="1" height="5" fill="#4a64c8" opacity="0.7"/><rect x="1131.0" y="341" width="1" height="1" fill="#4a64c8" opacity="0.7"/><rect x="1131.0" y="343" width="1" height="2" fill="#4a64c8" opacity="0.7"/><rect x="1131.0" y="346" width="1" height="4" fill="#4a64c8" opacity="0.7"/><rect x="1292.0" y="234" width="1" height="5" fill="#4a64c8" opacity="0.7"/><rect x="1292.0" y="243" width="1" height="2" fill="#4a64c8" opacity="0.7"/><rect x="1292.0" y="247" width="1" height="2" fill="#4a64c8" opacity="0.7"/><rect x="1292.0" y="251" width="1" height="4" fill="#4a64c8" opacity="0.7"/><rect x="1292.0" y="256" width="1" height="4" fill="#4a64c8" opacity="0.7"/><rect x="1292.0" y="262" width="1" height="5" fill="#4a64c8" opacity="0.7"/><rect x="1292.0" y="270" width="1" height="5" fill="#4a64c8" opacity="0.7"/><rect x="1292.0" y="278" width="1" height="2" fill="#4a64c8" opacity="0.7"/><rect x="1292.0" y="284" width="1" height="2" fill="#4a64c8" opacity="0.7"/><rect x="1292.0" y="290" width="1" height="1" fill="#4a64c8" opacity="0.7"/><rect x="1292.0" y="292" width="1" height="1" fill="#4a64c8" opacity="0.7"/><rect x="1292.0" y="296" width="1" height="2" fill="#4a64c8" opacity="0.7"/><rect x="1292.0" y="300" width="1" height="5" fill="#4a64c8" opacity="0.7"/><rect x="1292.0" y="308" width="1" height="2" fill="#4a64c8" opacity="0.7"/><rect x="1292.0" y="312" width="1" height="2" fill="#4a64c8" opacity="0.7"/><rect x="1292.0" y="316" width="1" height="2" fill="#4a64c8" opacity="0.7"/><rect x="1292.0" y="319" width="1" height="4" fill="#4a64c8" opacity="0.7"/><rect x="1292.0" y="325" width="1" height="3" fill="#4a64c8" opacity="0.7"/><rect x="1292.0" y="332" width="1" height="5" fill="#4a64c8" opacity="0.7"/><rect x="1292.0" y="338" width="1" height="4" fill="#4a64c8" opacity="0.7"/><rect x="1292.0" y="343" width="1" height="4" fill="#4a64c8" opacity="0.7"/><rect x="1292.0" y="348" width="1" height="1" fill="#4a64c8" opacity="0.7"/><rect x="1297.0" y="234" width="1" height="2" fill="#4a64c8" opacity="0.7"/><rect x="1297.0" y="239" width="1" height="4" fill="#4a64c8" opacity="0.7"/><rect x="1297.0" y="245" width="1" height="2" fill="#4a64c8" opacity="0.7"/><rect x="1297.0" y="250" width="1" height="4" fill="#4a64c8" opacity="0.7"/><rect x="1297.0" y="256" width="1" height="2" fill="#4a64c8" opacity="0.7"/><rect x="1297.0" y="260" width="1" height="2" fill="#4a64c8" opacity="0.7"/><rect x="1297.0" y="266" width="1" height="3" fill="#4a64c8" opacity="0.7"/><rect x="1297.0" y="273" width="1" height="3" fill="#4a64c8" opacity="0.7"/><rect x="1297.0" y="279" width="1" height="2" fill="#4a64c8" opacity="0.7"/><rect x="1297.0" y="283" width="1" height="4" fill="#4a64c8" opacity="0.7"/><rect x="1297.0" y="288" width="1" height="2" fill="#4a64c8" opacity="0.7"/><rect x="1297.0" y="292" width="1" height="5" fill="#4a64c8" opacity="0.7"/><rect x="1297.0" y="300" width="1" height="1" fill="#4a64c8" opacity="0.7"/><rect x="1297.0" y="304" width="1" height="2" fill="#4a64c8" opacity="0.7"/><rect x="1297.0" y="310" width="1" height="4" fill="#4a64c8" opacity="0.7"/><rect x="1297.0" y="318" width="1" height="5" fill="#4a64c8" opacity="0.7"/><rect x="1297.0" y="327" width="1" height="4" fill="#4a64c8" opacity="0.7"/><rect x="1297.0" y="334" width="1" height="4" fill="#4a64c8" opacity="0.7"/><rect x="1297.0" y="340" width="1" height="4" fill="#4a64c8" opacity="0.7"/><rect x="1297.0" y="346" width="1" height="4" fill="#4a64c8" opacity="0.7"/><rect x="1003.0" y="244" width="1.5" height="2" fill="#7c98f0" opacity="0.9"/><rect x="1003.0" y="247" width="1.5" height="3" fill="#7c98f0" opacity="0.9"/><rect x="1003.0" y="252" width="1.5" height="1" fill="#7c98f0" opacity="0.9"/><rect x="1003.0" y="255" width="1.5" height="1" fill="#7c98f0" opacity="0.9"/><rect x="1003.0" y="258" width="1.5" height="4" fill="#7c98f0" opacity="0.9"/><rect x="1003.0" y="264" width="1.5" height="3" fill="#7c98f0" opacity="0.9"/><rect x="1003.0" y="269" width="1.5" height="2" fill="#7c98f0" opacity="0.9"/><rect x="1003.0" y="273" width="1.5" height="4" fill="#7c98f0" opacity="0.9"/><rect x="1004.0" y="244" width="1.5" height="1" fill="#7c98f0" opacity="0.9"/><rect x="1004.0" y="247" width="1.5" height="3" fill="#7c98f0" opacity="0.9"/><rect x="1004.0" y="252" width="1.5" height="4" fill="#7c98f0" opacity="0.9"/><rect x="1004.0" y="258" width="1.5" height="2" fill="#7c98f0" opacity="0.9"/><rect x="1004.0" y="261" width="1.5" height="2" fill="#7c98f0" opacity="0.9"/><rect x="1004.0" y="265" width="1.5" height="4" fill="#7c98f0" opacity="0.9"/><rect x="1004.0" y="271" width="1.5" height="5" fill="#7c98f0" opacity="0.9"/><rect x="1049.0" y="204" width="1.5" height="3" fill="#6a88e8" opacity="0.8"/><rect x="1049.0" y="208" width="1.5" height="5" fill="#6a88e8" opacity="0.8"/><rect x="1049.0" y="216" width="1.5" height="4" fill="#6a88e8" opacity="0.8"/><rect x="1049.0" y="223" width="1.5" height="2" fill="#6a88e8" opacity="0.8"/><rect x="1049.0" y="227" width="1.5" height="1" fill="#6a88e8" opacity="0.8"/><rect x="1049.0" y="229" width="1.5" height="1" fill="#6a88e8" opacity="0.8"/><rect x="1049.0" y="233" width="1.5" height="3" fill="#6a88e8" opacity="0.8"/><rect x="1049.0" y="238" width="1.5" height="4" fill="#6a88e8" opacity="0.8"/><rect x="1049.0" y="244" width="1.5" height="3" fill="#6a88e8" opacity="0.8"/><rect x="1049.0" y="249" width="1.5" height="5" fill="#6a88e8" opacity="0.8"/><rect x="1049.0" y="255" width="1.5" height="3" fill="#6a88e8" opacity="0.8"/><rect x="1049.0" y="261" width="1.5" height="5" fill="#6a88e8" opacity="0.8"/><rect x="1049.0" y="268" width="1.5" height="6" fill="#6a88e8" opacity="0.8"/><rect x="1049.0" y="276" width="1.5" height="1" fill="#6a88e8" opacity="0.8"/><rect x="1049.0" y="279" width="1.5" height="3" fill="#6a88e8" opacity="0.8"/><rect x="1049.0" y="284" width="1.5" height="5" fill="#6a88e8" opacity="0.8"/><rect x="1049.0" y="292" width="1.5" height="5" fill="#6a88e8" opacity="0.8"/><rect x="1049.0" y="299" width="1.5" height="1" fill="#6a88e8" opacity="0.8"/><rect x="1049.0" y="302" width="1.5" height="4" fill="#6a88e8" opacity="0.8"/><rect x="1049.0" y="307" width="1.5" height="3" fill="#6a88e8" opacity="0.8"/><rect x="1049.0" y="313" width="1.5" height="5" fill="#6a88e8" opacity="0.8"/><rect x="1049.0" y="319" width="1.5" height="3" fill="#6a88e8" opacity="0.8"/><rect x="1049.0" y="324" width="1.5" height="3" fill="#6a88e8" opacity="0.8"/><rect x="1049.0" y="329" width="1.5" height="2" fill="#6a88e8" opacity="0.8"/><rect x="1049.0" y="334" width="1.5" height="4" fill="#6a88e8" opacity="0.8"/><rect x="1049.0" y="339" width="1.5" height="1" fill="#6a88e8" opacity="0.8"/><rect x="1049.0" y="341" width="1.5" height="2" fill="#6a88e8" opacity="0.8"/><rect x="1049.0" y="344" width="1.5" height="6" fill="#6a88e8" opacity="0.8"/><rect x="1052.0" y="204" width="1.5" height="2" fill="#6a88e8" opacity="0.8"/><rect x="1052.0" y="208" width="1.5" height="2" fill="#6a88e8" opacity="0.8"/><rect x="1052.0" y="211" width="1.5" height="1" fill="#6a88e8" opacity="0.8"/><rect x="1052.0" y="214" width="1.5" height="3" fill="#6a88e8" opacity="0.8"/><rect x="1052.0" y="218" width="1.5" height="6" fill="#6a88e8" opacity="0.8"/><rect x="1052.0" y="227" width="1.5" height="1" fill="#6a88e8" opacity="0.8"/><rect x="1052.0" y="229" width="1.5" height="5" fill="#6a88e8" opacity="0.8"/><rect x="1052.0" y="237" width="1.5" height="1" fill="#6a88e8" opacity="0.8"/><rect x="1052.0" y="239" width="1.5" height="4" fill="#6a88e8" opacity="0.8"/><rect x="1052.0" y="244" width="1.5" height="1" fill="#6a88e8" opacity="0.8"/><rect x="1052.0" y="248" width="1.5" height="4" fill="#6a88e8" opacity="0.8"/><rect x="1052.0" y="255" width="1.5" height="4" fill="#6a88e8" opacity="0.8"/><rect x="1052.0" y="261" width="1.5" height="1" fill="#6a88e8" opacity="0.8"/><rect x="1052.0" y="265" width="1.5" height="6" fill="#6a88e8" opacity="0.8"/><rect x="1052.0" y="272" width="1.5" height="5" fill="#6a88e8" opacity="0.8"/><rect x="1052.0" y="278" width="1.5" height="3" fill="#6a88e8" opacity="0.8"/><rect x="1052.0" y="282" width="1.5" height="1" fill="#6a88e8" opacity="0.8"/><rect x="1052.0" y="284" width="1.5" height="2" fill="#6a88e8" opacity="0.8"/><rect x="1052.0" y="287" width="1.5" height="1" fill="#6a88e8" opacity="0.8"/><rect x="1052.0" y="289" width="1.5" height="3" fill="#6a88e8" opacity="0.8"/><rect x="1052.0" y="295" width="1.5" height="6" fill="#6a88e8" opacity="0.8"/><rect x="1052.0" y="304" width="1.5" height="2" fill="#6a88e8" opacity="0.8"/><rect x="1052.0" y="307" width="1.5" height="4" fill="#6a88e8" opacity="0.8"/><rect x="1052.0" y="312" width="1.5" height="1" fill="#6a88e8" opacity="0.8"/><rect x="1052.0" y="314" width="1.5" height="2" fill="#6a88e8" opacity="0.8"/><rect x="1052.0" y="319" width="1.5" height="3" fill="#6a88e8" opacity="0.8"/><rect x="1052.0" y="325" width="1.5" height="2" fill="#6a88e8" opacity="0.8"/><rect x="1052.0" y="329" width="1.5" height="1" fill="#6a88e8" opacity="0.8"/><rect x="1052.0" y="332" width="1.5" height="3" fill="#6a88e8" opacity="0.8"/><rect x="1052.0" y="337" width="1.5" height="4" fill="#6a88e8" opacity="0.8"/><rect x="1052.0" y="343" width="1.5" height="4" fill="#6a88e8" opacity="0.8"/><rect x="1052.0" y="348" width="1.5" height="2" fill="#6a88e8" opacity="0.8"/><rect x="1137.0" y="187" width="1.5" height="2" fill="#7c98f0" opacity="0.95"/><rect x="1137.0" y="190" width="1.5" height="2" fill="#7c98f0" opacity="0.95"/><rect x="1137.0" y="193" width="1.5" height="3" fill="#7c98f0" opacity="0.95"/><rect x="1137.0" y="197" width="1.5" height="4" fill="#7c98f0" opacity="0.95"/><rect x="1137.0" y="202" width="1.5" height="4" fill="#7c98f0" opacity="0.95"/><rect x="1137.0" y="207" width="1.5" height="4" fill="#7c98f0" opacity="0.95"/><rect x="1137.0" y="213" width="1.5" height="1" fill="#7c98f0" opacity="0.95"/><rect x="1137.0" y="216" width="1.5" height="4" fill="#7c98f0" opacity="0.95"/><rect x="1137.0" y="221" width="1.5" height="1" fill="#7c98f0" opacity="0.95"/><rect x="1137.0" y="223" width="1.5" height="4" fill="#7c98f0" opacity="0.95"/><rect x="1137.0" y="228" width="1.5" height="4" fill="#7c98f0" opacity="0.95"/><rect x="1137.0" y="233" width="1.5" height="1" fill="#7c98f0" opacity="0.95"/><rect x="1137.0" y="235" width="1.5" height="3" fill="#7c98f0" opacity="0.95"/><rect x="1137.0" y="240" width="1.5" height="2" fill="#7c98f0" opacity="0.95"/><rect x="1137.0" y="244" width="1.5" height="4" fill="#7c98f0" opacity="0.95"/><rect x="1137.0" y="250" width="1.5" height="4" fill="#7c98f0" opacity="0.95"/><rect x="1139.0" y="187" width="1.5" height="3" fill="#7c98f0" opacity="0.95"/><rect x="1139.0" y="192" width="1.5" height="2" fill="#7c98f0" opacity="0.95"/><rect x="1139.0" y="196" width="1.5" height="2" fill="#7c98f0" opacity="0.95"/><rect x="1139.0" y="199" width="1.5" height="5" fill="#7c98f0" opacity="0.95"/><rect x="1139.0" y="206" width="1.5" height="3" fill="#7c98f0" opacity="0.95"/><rect x="1139.0" y="211" width="1.5" height="5" fill="#7c98f0" opacity="0.95"/><rect x="1139.0" y="218" width="1.5" height="2" fill="#7c98f0" opacity="0.95"/><rect x="1139.0" y="222" width="1.5" height="3" fill="#7c98f0" opacity="0.95"/><rect x="1139.0" y="226" width="1.5" height="4" fill="#7c98f0" opacity="0.95"/><rect x="1139.0" y="231" width="1.5" height="2" fill="#7c98f0" opacity="0.95"/><rect x="1139.0" y="235" width="1.5" height="1" fill="#7c98f0" opacity="0.95"/><rect x="1139.0" y="238" width="1.5" height="3" fill="#7c98f0" opacity="0.95"/><rect x="1139.0" y="243" width="1.5" height="1" fill="#7c98f0" opacity="0.95"/><rect x="1139.0" y="245" width="1.5" height="5" fill="#7c98f0" opacity="0.95"/><rect x="1139.0" y="251" width="1.5" height="1" fill="#7c98f0" opacity="0.95"/><rect x="1141.0" y="187" width="1.5" height="3" fill="#7c98f0" opacity="0.95"/><rect x="1141.0" y="191" width="1.5" height="5" fill="#7c98f0" opacity="0.95"/><rect x="1141.0" y="198" width="1.5" height="4" fill="#7c98f0" opacity="0.95"/><rect x="1141.0" y="204" width="1.5" height="1" fill="#7c98f0" opacity="0.95"/><rect x="1141.0" y="207" width="1.5" height="3" fill="#7c98f0" opacity="0.95"/><rect x="1141.0" y="211" width="1.5" height="1" fill="#7c98f0" opacity="0.95"/><rect x="1141.0" y="214" width="1.5" height="3" fill="#7c98f0" opacity="0.95"/><rect x="1141.0" y="218" width="1.5" height="1" fill="#7c98f0" opacity="0.95"/><rect x="1141.0" y="221" width="1.5" height="3" fill="#7c98f0" opacity="0.95"/><rect x="1141.0" y="226" width="1.5" height="2" fill="#7c98f0" opacity="0.95"/><rect x="1141.0" y="230" width="1.5" height="5" fill="#7c98f0" opacity="0.95"/><rect x="1141.0" y="237" width="1.5" height="4" fill="#7c98f0" opacity="0.95"/><rect x="1141.0" y="243" width="1.5" height="4" fill="#7c98f0" opacity="0.95"/><rect x="1141.0" y="249" width="1.5" height="1" fill="#7c98f0" opacity="0.95"/><rect x="1141.0" y="251" width="1.5" height="2" fill="#7c98f0" opacity="0.95"/><rect x="1178.0" y="231" width="1.5" height="1" fill="#7c98f0" opacity="0.9"/><rect x="1178.0" y="233" width="1.5" height="3" fill="#7c98f0" opacity="0.9"/><rect x="1178.0" y="238" width="1.5" height="2" fill="#7c98f0" opacity="0.9"/><rect x="1178.0" y="242" width="1.5" height="5" fill="#7c98f0" opacity="0.9"/><rect x="1178.0" y="248" width="1.5" height="4" fill="#7c98f0" opacity="0.9"/><rect x="1178.0" y="254" width="1.5" height="1" fill="#7c98f0" opacity="0.9"/><rect x="1178.0" y="256" width="1.5" height="1" fill="#7c98f0" opacity="0.9"/><rect x="1178.0" y="258" width="1.5" height="2" fill="#7c98f0" opacity="0.9"/><rect x="1178.0" y="262" width="1.5" height="5" fill="#7c98f0" opacity="0.9"/><rect x="1178.0" y="269" width="1.5" height="1" fill="#7c98f0" opacity="0.9"/><rect x="1178.0" y="272" width="1.5" height="3" fill="#7c98f0" opacity="0.9"/><rect x="1178.0" y="276" width="1.5" height="2" fill="#7c98f0" opacity="0.9"/><rect x="1178.0" y="279" width="1.5" height="2" fill="#7c98f0" opacity="0.9"/><rect x="1178.0" y="283" width="1.5" height="3" fill="#7c98f0" opacity="0.9"/><rect x="1178.0" y="287" width="1.5" height="2" fill="#7c98f0" opacity="0.9"/><rect x="1178.0" y="290" width="1.5" height="4" fill="#7c98f0" opacity="0.9"/><rect x="1178.0" y="295" width="1.5" height="3" fill="#7c98f0" opacity="0.9"/><rect x="1178.0" y="300" width="1.5" height="1" fill="#7c98f0" opacity="0.9"/><rect x="1178.0" y="302" width="1.5" height="2" fill="#7c98f0" opacity="0.9"/><rect x="1178.0" y="306" width="1.5" height="1" fill="#7c98f0" opacity="0.9"/><rect x="1178.0" y="309" width="1.5" height="5" fill="#7c98f0" opacity="0.9"/><rect x="1178.0" y="316" width="1.5" height="2" fill="#7c98f0" opacity="0.9"/><rect x="1178.0" y="319" width="1.5" height="4" fill="#7c98f0" opacity="0.9"/><rect x="1178.0" y="325" width="1.5" height="3" fill="#7c98f0" opacity="0.9"/><rect x="1178.0" y="329" width="1.5" height="4" fill="#7c98f0" opacity="0.9"/><rect x="1178.0" y="334" width="1.5" height="4" fill="#7c98f0" opacity="0.9"/><rect x="1178.0" y="340" width="1.5" height="5" fill="#7c98f0" opacity="0.9"/><rect x="1178.0" y="346" width="1.5" height="3" fill="#7c98f0" opacity="0.9"/><rect x="1180.0" y="231" width="1.5" height="5" fill="#7c98f0" opacity="0.9"/><rect x="1180.0" y="237" width="1.5" height="5" fill="#7c98f0" opacity="0.9"/><rect x="1180.0" y="244" width="1.5" height="4" fill="#7c98f0" opacity="0.9"/><rect x="1180.0" y="249" width="1.5" height="2" fill="#7c98f0" opacity="0.9"/><rect x="1180.0" y="253" width="1.5" height="4" fill="#7c98f0" opacity="0.9"/><rect x="1180.0" y="259" width="1.5" height="3" fill="#7c98f0" opacity="0.9"/><rect x="1180.0" y="264" width="1.5" height="1" fill="#7c98f0" opacity="0.9"/><rect x="1180.0" y="267" width="1.5" height="5" fill="#7c98f0" opacity="0.9"/><rect x="1180.0" y="274" width="1.5" height="2" fill="#7c98f0" opacity="0.9"/><rect x="1180.0" y="278" width="1.5" height="1" fill="#7c98f0" opacity="0.9"/><rect x="1180.0" y="281" width="1.5" height="4" fill="#7c98f0" opacity="0.9"/><rect x="1180.0" y="286" width="1.5" height="2" fill="#7c98f0" opacity="0.9"/><rect x="1180.0" y="290" width="1.5" height="5" fill="#7c98f0" opacity="0.9"/><rect x="1180.0" y="297" width="1.5" height="3" fill="#7c98f0" opacity="0.9"/><rect x="1180.0" y="302" width="1.5" height="5" fill="#7c98f0" opacity="0.9"/><rect x="1180.0" y="308" width="1.5" height="3" fill="#7c98f0" opacity="0.9"/><rect x="1180.0" y="312" width="1.5" height="3" fill="#7c98f0" opacity="0.9"/><rect x="1180.0" y="316" width="1.5" height="4" fill="#7c98f0" opacity="0.9"/><rect x="1180.0" y="321" width="1.5" height="3" fill="#7c98f0" opacity="0.9"/><rect x="1180.0" y="326" width="1.5" height="3" fill="#7c98f0" opacity="0.9"/><rect x="1180.0" y="331" width="1.5" height="4" fill="#7c98f0" opacity="0.9"/><rect x="1180.0" y="336" width="1.5" height="5" fill="#7c98f0" opacity="0.9"/><rect x="1180.0" y="342" width="1.5" height="3" fill="#7c98f0" opacity="0.9"/><rect x="1180.0" y="346" width="1.5" height="4" fill="#7c98f0" opacity="0.9"/><rect x="1182.0" y="231" width="1.5" height="3" fill="#7c98f0" opacity="0.9"/><rect x="1182.0" y="236" width="1.5" height="2" fill="#7c98f0" opacity="0.9"/><rect x="1182.0" y="239" width="1.5" height="4" fill="#7c98f0" opacity="0.9"/><rect x="1182.0" y="244" width="1.5" height="2" fill="#7c98f0" opacity="0.9"/><rect x="1182.0" y="247" width="1.5" height="2" fill="#7c98f0" opacity="0.9"/><rect x="1182.0" y="250" width="1.5" height="2" fill="#7c98f0" opacity="0.9"/><rect x="1182.0" y="253" width="1.5" height="3" fill="#7c98f0" opacity="0.9"/><rect x="1182.0" y="257" width="1.5" height="2" fill="#7c98f0" opacity="0.9"/><rect x="1182.0" y="260" width="1.5" height="3" fill="#7c98f0" opacity="0.9"/><rect x="1182.0" y="264" width="1.5" height="4" fill="#7c98f0" opacity="0.9"/><rect x="1182.0" y="269" width="1.5" height="3" fill="#7c98f0" opacity="0.9"/><rect x="1182.0" y="274" width="1.5" height="5" fill="#7c98f0" opacity="0.9"/><rect x="1182.0" y="280" width="1.5" height="5" fill="#7c98f0" opacity="0.9"/><rect x="1182.0" y="287" width="1.5" height="3" fill="#7c98f0" opacity="0.9"/><rect x="1182.0" y="291" width="1.5" height="1" fill="#7c98f0" opacity="0.9"/><rect x="1182.0" y="293" width="1.5" height="2" fill="#7c98f0" opacity="0.9"/><rect x="1182.0" y="296" width="1.5" height="1" fill="#7c98f0" opacity="0.9"/><rect x="1182.0" y="298" width="1.5" height="1" fill="#7c98f0" opacity="0.9"/><rect x="1182.0" y="301" width="1.5" height="5" fill="#7c98f0" opacity="0.9"/><rect x="1182.0" y="308" width="1.5" height="4" fill="#7c98f0" opacity="0.9"/><rect x="1182.0" y="314" width="1.5" height="1" fill="#7c98f0" opacity="0.9"/><rect x="1182.0" y="316" width="1.5" height="5" fill="#7c98f0" opacity="0.9"/><rect x="1182.0" y="323" width="1.5" height="1" fill="#7c98f0" opacity="0.9"/><rect x="1182.0" y="326" width="1.5" height="5" fill="#7c98f0" opacity="0.9"/><rect x="1182.0" y="332" width="1.5" height="4" fill="#7c98f0" opacity="0.9"/><rect x="1182.0" y="338" width="1.5" height="1" fill="#7c98f0" opacity="0.9"/><rect x="1182.0" y="340" width="1.5" height="1" fill="#7c98f0" opacity="0.9"/><rect x="1182.0" y="343" width="1.5" height="5" fill="#7c98f0" opacity="0.9"/><rect x="1199.0" y="197" width="1.5" height="2" fill="#6a88e8" opacity="0.85"/><rect x="1199.0" y="201" width="1.5" height="6" fill="#6a88e8" opacity="0.85"/><rect x="1199.0" y="209" width="1.5" height="5" fill="#6a88e8" opacity="0.85"/><rect x="1199.0" y="215" width="1.5" height="3" fill="#6a88e8" opacity="0.85"/><rect x="1199.0" y="220" width="1.5" height="3" fill="#6a88e8" opacity="0.85"/><rect x="1199.0" y="226" width="1.5" height="2" fill="#6a88e8" opacity="0.85"/><rect x="1199.0" y="229" width="1.5" height="2" fill="#6a88e8" opacity="0.85"/><rect x="1199.0" y="232" width="1.5" height="2" fill="#6a88e8" opacity="0.85"/><rect x="1199.0" y="235" width="1.5" height="5" fill="#6a88e8" opacity="0.85"/><rect x="1199.0" y="241" width="1.5" height="2" fill="#6a88e8" opacity="0.85"/><rect x="1199.0" y="245" width="1.5" height="5" fill="#6a88e8" opacity="0.85"/><rect x="1199.0" y="253" width="1.5" height="5" fill="#6a88e8" opacity="0.85"/><rect x="1199.0" y="259" width="1.5" height="5" fill="#6a88e8" opacity="0.85"/><rect x="1199.0" y="266" width="1.5" height="4" fill="#6a88e8" opacity="0.85"/><rect x="1199.0" y="272" width="1.5" height="5" fill="#6a88e8" opacity="0.85"/><rect x="1199.0" y="278" width="1.5" height="6" fill="#6a88e8" opacity="0.85"/><rect x="1199.0" y="285" width="1.5" height="2" fill="#6a88e8" opacity="0.85"/><rect x="1199.0" y="289" width="1.5" height="2" fill="#6a88e8" opacity="0.85"/><rect x="1199.0" y="292" width="1.5" height="1" fill="#6a88e8" opacity="0.85"/><rect x="1199.0" y="294" width="1.5" height="3" fill="#6a88e8" opacity="0.85"/><rect x="1199.0" y="298" width="1.5" height="1" fill="#6a88e8" opacity="0.85"/><rect x="1199.0" y="301" width="1.5" height="5" fill="#6a88e8" opacity="0.85"/><rect x="1199.0" y="308" width="1.5" height="4" fill="#6a88e8" opacity="0.85"/><rect x="1199.0" y="314" width="1.5" height="4" fill="#6a88e8" opacity="0.85"/><rect x="1199.0" y="319" width="1.5" height="2" fill="#6a88e8" opacity="0.85"/><rect x="1199.0" y="324" width="1.5" height="1" fill="#6a88e8" opacity="0.85"/><rect x="1199.0" y="327" width="1.5" height="5" fill="#6a88e8" opacity="0.85"/><rect x="1199.0" y="333" width="1.5" height="1" fill="#6a88e8" opacity="0.85"/><rect x="1199.0" y="337" width="1.5" height="2" fill="#6a88e8" opacity="0.85"/><rect x="1199.0" y="340" width="1.5" height="1" fill="#6a88e8" opacity="0.85"/><rect x="1199.0" y="343" width="1.5" height="1" fill="#6a88e8" opacity="0.85"/><rect x="1199.0" y="346" width="1.5" height="1" fill="#6a88e8" opacity="0.85"/><rect x="1199.0" y="349" width="1.5" height="1" fill="#6a88e8" opacity="0.85"/><rect x="1204.0" y="197" width="1.5" height="4" fill="#6a88e8" opacity="0.85"/><rect x="1204.0" y="203" width="1.5" height="1" fill="#6a88e8" opacity="0.85"/><rect x="1204.0" y="207" width="1.5" height="4" fill="#6a88e8" opacity="0.85"/><rect x="1204.0" y="212" width="1.5" height="6" fill="#6a88e8" opacity="0.85"/><rect x="1204.0" y="219" width="1.5" height="2" fill="#6a88e8" opacity="0.85"/><rect x="1204.0" y="223" width="1.5" height="4" fill="#6a88e8" opacity="0.85"/><rect x="1204.0" y="229" width="1.5" height="1" fill="#6a88e8" opacity="0.85"/><rect x="1204.0" y="233" width="1.5" height="5" fill="#6a88e8" opacity="0.85"/><rect x="1204.0" y="240" width="1.5" height="2" fill="#6a88e8" opacity="0.85"/><rect x="1204.0" y="245" width="1.5" height="1" fill="#6a88e8" opacity="0.85"/><rect x="1204.0" y="248" width="1.5" height="1" fill="#6a88e8" opacity="0.85"/><rect x="1204.0" y="252" width="1.5" height="6" fill="#6a88e8" opacity="0.85"/><rect x="1204.0" y="261" width="1.5" height="2" fill="#6a88e8" opacity="0.85"/><rect x="1204.0" y="266" width="1.5" height="1" fill="#6a88e8" opacity="0.85"/><rect x="1204.0" y="269" width="1.5" height="5" fill="#6a88e8" opacity="0.85"/><rect x="1204.0" y="275" width="1.5" height="3" fill="#6a88e8" opacity="0.85"/><rect x="1204.0" y="279" width="1.5" height="1" fill="#6a88e8" opacity="0.85"/><rect x="1204.0" y="283" width="1.5" height="6" fill="#6a88e8" opacity="0.85"/><rect x="1204.0" y="292" width="1.5" height="6" fill="#6a88e8" opacity="0.85"/><rect x="1204.0" y="299" width="1.5" height="5" fill="#6a88e8" opacity="0.85"/><rect x="1204.0" y="306" width="1.5" height="2" fill="#6a88e8" opacity="0.85"/><rect x="1204.0" y="309" width="1.5" height="6" fill="#6a88e8" opacity="0.85"/><rect x="1204.0" y="316" width="1.5" height="4" fill="#6a88e8" opacity="0.85"/><rect x="1204.0" y="322" width="1.5" height="6" fill="#6a88e8" opacity="0.85"/><rect x="1204.0" y="330" width="1.5" height="1" fill="#6a88e8" opacity="0.85"/><rect x="1204.0" y="332" width="1.5" height="4" fill="#6a88e8" opacity="0.85"/><rect x="1204.0" y="337" width="1.5" height="6" fill="#6a88e8" opacity="0.85"/><rect x="1204.0" y="344" width="1.5" height="6" fill="#6a88e8" opacity="0.85"/><rect x="1258.0" y="199" width="1.5" height="10" fill="#c8d4ff" opacity="1"/><rect x="1259.0" y="192" width="1" height="17" fill="#c8d4ff" opacity="1"/><rect x="1305.0" y="187" width="1.8" height="1" fill="#7c98f0" opacity="0.95"/><rect x="1305.0" y="189" width="1.8" height="4" fill="#7c98f0" opacity="0.95"/><rect x="1305.0" y="194" width="1.8" height="5" fill="#7c98f0" opacity="0.95"/><rect x="1305.0" y="201" width="1.8" height="3" fill="#7c98f0" opacity="0.95"/><rect x="1305.0" y="206" width="1.8" height="2" fill="#7c98f0" opacity="0.95"/><rect x="1305.0" y="210" width="1.8" height="3" fill="#7c98f0" opacity="0.95"/><rect x="1305.0" y="214" width="1.8" height="1" fill="#7c98f0" opacity="0.95"/><rect x="1305.0" y="217" width="1.8" height="4" fill="#7c98f0" opacity="0.95"/><rect x="1305.0" y="223" width="1.8" height="1" fill="#7c98f0" opacity="0.95"/><rect x="1305.0" y="225" width="1.8" height="1" fill="#7c98f0" opacity="0.95"/><rect x="1305.0" y="227" width="1.8" height="1" fill="#7c98f0" opacity="0.95"/><rect x="1305.0" y="229" width="1.8" height="3" fill="#7c98f0" opacity="0.95"/><rect x="1305.0" y="233" width="1.8" height="4" fill="#7c98f0" opacity="0.95"/><rect x="1305.0" y="239" width="1.8" height="3" fill="#7c98f0" opacity="0.95"/><rect x="1305.0" y="243" width="1.8" height="1" fill="#7c98f0" opacity="0.95"/><rect x="1305.0" y="246" width="1.8" height="5" fill="#7c98f0" opacity="0.95"/><rect x="1305.0" y="253" width="1.8" height="3" fill="#7c98f0" opacity="0.95"/><rect x="1305.0" y="257" width="1.8" height="5" fill="#7c98f0" opacity="0.95"/><rect x="1305.0" y="264" width="1.8" height="2" fill="#7c98f0" opacity="0.95"/><rect x="1305.0" y="267" width="1.8" height="1" fill="#7c98f0" opacity="0.95"/><rect x="1305.0" y="270" width="1.8" height="4" fill="#7c98f0" opacity="0.95"/><rect x="1305.0" y="275" width="1.8" height="1" fill="#7c98f0" opacity="0.95"/><rect x="1305.0" y="277" width="1.8" height="5" fill="#7c98f0" opacity="0.95"/><rect x="1305.0" y="283" width="1.8" height="1" fill="#7c98f0" opacity="0.95"/><rect x="1305.0" y="285" width="1.8" height="3" fill="#7c98f0" opacity="0.95"/><rect x="1305.0" y="289" width="1.8" height="1" fill="#7c98f0" opacity="0.95"/><rect x="1305.0" y="291" width="1.8" height="5" fill="#7c98f0" opacity="0.95"/><rect x="1305.0" y="298" width="1.8" height="3" fill="#7c98f0" opacity="0.95"/><rect x="1305.0" y="302" width="1.8" height="3" fill="#7c98f0" opacity="0.95"/><rect x="1305.0" y="307" width="1.8" height="3" fill="#7c98f0" opacity="0.95"/><rect x="1305.0" y="311" width="1.8" height="4" fill="#7c98f0" opacity="0.95"/><rect x="1305.0" y="317" width="1.8" height="2" fill="#7c98f0" opacity="0.95"/><rect x="1305.0" y="320" width="1.8" height="2" fill="#7c98f0" opacity="0.95"/><rect x="1305.0" y="323" width="1.8" height="5" fill="#7c98f0" opacity="0.95"/><rect x="1307.0" y="187" width="1.8" height="2" fill="#7c98f0" opacity="0.95"/><rect x="1307.0" y="190" width="1.8" height="3" fill="#7c98f0" opacity="0.95"/><rect x="1307.0" y="194" width="1.8" height="1" fill="#7c98f0" opacity="0.95"/><rect x="1307.0" y="197" width="1.8" height="1" fill="#7c98f0" opacity="0.95"/><rect x="1307.0" y="199" width="1.8" height="1" fill="#7c98f0" opacity="0.95"/><rect x="1307.0" y="201" width="1.8" height="1" fill="#7c98f0" opacity="0.95"/><rect x="1307.0" y="204" width="1.8" height="1" fill="#7c98f0" opacity="0.95"/><rect x="1307.0" y="207" width="1.8" height="5" fill="#7c98f0" opacity="0.95"/><rect x="1307.0" y="214" width="1.8" height="5" fill="#7c98f0" opacity="0.95"/><rect x="1307.0" y="221" width="1.8" height="5" fill="#7c98f0" opacity="0.95"/><rect x="1307.0" y="227" width="1.8" height="3" fill="#7c98f0" opacity="0.95"/><rect x="1307.0" y="231" width="1.8" height="4" fill="#7c98f0" opacity="0.95"/><rect x="1307.0" y="237" width="1.8" height="2" fill="#7c98f0" opacity="0.95"/><rect x="1307.0" y="241" width="1.8" height="3" fill="#7c98f0" opacity="0.95"/><rect x="1307.0" y="245" width="1.8" height="5" fill="#7c98f0" opacity="0.95"/><rect x="1307.0" y="252" width="1.8" height="5" fill="#7c98f0" opacity="0.95"/><rect x="1307.0" y="258" width="1.8" height="5" fill="#7c98f0" opacity="0.95"/><rect x="1307.0" y="264" width="1.8" height="4" fill="#7c98f0" opacity="0.95"/><rect x="1307.0" y="270" width="1.8" height="5" fill="#7c98f0" opacity="0.95"/><rect x="1307.0" y="276" width="1.8" height="1" fill="#7c98f0" opacity="0.95"/><rect x="1307.0" y="279" width="1.8" height="3" fill="#7c98f0" opacity="0.95"/><rect x="1307.0" y="283" width="1.8" height="4" fill="#7c98f0" opacity="0.95"/><rect x="1307.0" y="289" width="1.8" height="5" fill="#7c98f0" opacity="0.95"/><rect x="1307.0" y="296" width="1.8" height="2" fill="#7c98f0" opacity="0.95"/><rect x="1307.0" y="300" width="1.8" height="5" fill="#7c98f0" opacity="0.95"/><rect x="1307.0" y="307" width="1.8" height="3" fill="#7c98f0" opacity="0.95"/><rect x="1307.0" y="312" width="1.8" height="1" fill="#7c98f0" opacity="0.95"/><rect x="1307.0" y="315" width="1.8" height="4" fill="#7c98f0" opacity="0.95"/><rect x="1307.0" y="321" width="1.8" height="2" fill="#7c98f0" opacity="0.95"/><rect x="1307.0" y="325" width="1.8" height="3" fill="#7c98f0" opacity="0.95"/><rect x="1309.0" y="187" width="1.8" height="4" fill="#7c98f0" opacity="0.95"/><rect x="1309.0" y="193" width="1.8" height="1" fill="#7c98f0" opacity="0.95"/><rect x="1309.0" y="196" width="1.8" height="2" fill="#7c98f0" opacity="0.95"/><rect x="1309.0" y="199" width="1.8" height="4" fill="#7c98f0" opacity="0.95"/><rect x="1309.0" y="205" width="1.8" height="3" fill="#7c98f0" opacity="0.95"/><rect x="1309.0" y="209" width="1.8" height="3" fill="#7c98f0" opacity="0.95"/><rect x="1309.0" y="213" width="1.8" height="3" fill="#7c98f0" opacity="0.95"/><rect x="1309.0" y="218" width="1.8" height="4" fill="#7c98f0" opacity="0.95"/><rect x="1309.0" y="223" width="1.8" height="4" fill="#7c98f0" opacity="0.95"/><rect x="1309.0" y="229" width="1.8" height="2" fill="#7c98f0" opacity="0.95"/><rect x="1309.0" y="233" width="1.8" height="3" fill="#7c98f0" opacity="0.95"/><rect x="1309.0" y="238" width="1.8" height="1" fill="#7c98f0" opacity="0.95"/><rect x="1309.0" y="240" width="1.8" height="4" fill="#7c98f0" opacity="0.95"/><rect x="1309.0" y="245" width="1.8" height="3" fill="#7c98f0" opacity="0.95"/><rect x="1309.0" y="249" width="1.8" height="3" fill="#7c98f0" opacity="0.95"/><rect x="1309.0" y="254" width="1.8" height="1" fill="#7c98f0" opacity="0.95"/><rect x="1309.0" y="256" width="1.8" height="3" fill="#7c98f0" opacity="0.95"/><rect x="1309.0" y="261" width="1.8" height="4" fill="#7c98f0" opacity="0.95"/><rect x="1309.0" y="267" width="1.8" height="4" fill="#7c98f0" opacity="0.95"/><rect x="1309.0" y="272" width="1.8" height="3" fill="#7c98f0" opacity="0.95"/><rect x="1309.0" y="276" width="1.8" height="2" fill="#7c98f0" opacity="0.95"/><rect x="1309.0" y="279" width="1.8" height="3" fill="#7c98f0" opacity="0.95"/><rect x="1309.0" y="284" width="1.8" height="1" fill="#7c98f0" opacity="0.95"/><rect x="1309.0" y="286" width="1.8" height="3" fill="#7c98f0" opacity="0.95"/><rect x="1309.0" y="290" width="1.8" height="2" fill="#7c98f0" opacity="0.95"/><rect x="1309.0" y="293" width="1.8" height="4" fill="#7c98f0" opacity="0.95"/><rect x="1309.0" y="299" width="1.8" height="2" fill="#7c98f0" opacity="0.95"/><rect x="1309.0" y="302" width="1.8" height="3" fill="#7c98f0" opacity="0.95"/><rect x="1309.0" y="306" width="1.8" height="1" fill="#7c98f0" opacity="0.95"/><rect x="1309.0" y="309" width="1.8" height="4" fill="#7c98f0" opacity="0.95"/><rect x="1309.0" y="315" width="1.8" height="5" fill="#7c98f0" opacity="0.95"/><rect x="1309.0" y="322" width="1.8" height="1" fill="#7c98f0" opacity="0.95"/><rect x="1309.0" y="325" width="1.8" height="4" fill="#7c98f0" opacity="0.95"/><rect x="1311.0" y="187" width="1.8" height="4" fill="#7c98f0" opacity="0.95"/><rect x="1311.0" y="192" width="1.8" height="3" fill="#7c98f0" opacity="0.95"/><rect x="1311.0" y="196" width="1.8" height="3" fill="#7c98f0" opacity="0.95"/><rect x="1311.0" y="201" width="1.8" height="2" fill="#7c98f0" opacity="0.95"/><rect x="1311.0" y="204" width="1.8" height="5" fill="#7c98f0" opacity="0.95"/><rect x="1311.0" y="210" width="1.8" height="2" fill="#7c98f0" opacity="0.95"/><rect x="1311.0" y="213" width="1.8" height="5" fill="#7c98f0" opacity="0.95"/><rect x="1311.0" y="219" width="1.8" height="3" fill="#7c98f0" opacity="0.95"/><rect x="1311.0" y="223" width="1.8" height="2" fill="#7c98f0" opacity="0.95"/><rect x="1311.0" y="226" width="1.8" height="2" fill="#7c98f0" opacity="0.95"/><rect x="1311.0" y="230" width="1.8" height="5" fill="#7c98f0" opacity="0.95"/><rect x="1311.0" y="237" width="1.8" height="1" fill="#7c98f0" opacity="0.95"/><rect x="1311.0" y="239" width="1.8" height="5" fill="#7c98f0" opacity="0.95"/><rect x="1311.0" y="246" width="1.8" height="5" fill="#7c98f0" opacity="0.95"/><rect x="1311.0" y="252" width="1.8" height="5" fill="#7c98f0" opacity="0.95"/><rect x="1311.0" y="259" width="1.8" height="1" fill="#7c98f0" opacity="0.95"/><rect x="1311.0" y="261" width="1.8" height="2" fill="#7c98f0" opacity="0.95"/><rect x="1311.0" y="265" width="1.8" height="3" fill="#7c98f0" opacity="0.95"/><rect x="1311.0" y="270" width="1.8" height="3" fill="#7c98f0" opacity="0.95"/><rect x="1311.0" y="274" width="1.8" height="2" fill="#7c98f0" opacity="0.95"/><rect x="1311.0" y="277" width="1.8" height="3" fill="#7c98f0" opacity="0.95"/><rect x="1311.0" y="282" width="1.8" height="2" fill="#7c98f0" opacity="0.95"/><rect x="1311.0" y="286" width="1.8" height="2" fill="#7c98f0" opacity="0.95"/><rect x="1311.0" y="290" width="1.8" height="5" fill="#7c98f0" opacity="0.95"/><rect x="1311.0" y="296" width="1.8" height="4" fill="#7c98f0" opacity="0.95"/><rect x="1311.0" y="301" width="1.8" height="5" fill="#7c98f0" opacity="0.95"/><rect x="1311.0" y="308" width="1.8" height="3" fill="#7c98f0" opacity="0.95"/><rect x="1311.0" y="313" width="1.8" height="4" fill="#7c98f0" opacity="0.95"/><rect x="1311.0" y="319" width="1.8" height="1" fill="#7c98f0" opacity="0.95"/><rect x="1311.0" y="321" width="1.8" height="4" fill="#7c98f0" opacity="0.95"/><rect x="1311.0" y="327" width="1.8" height="2" fill="#7c98f0" opacity="0.95"/></svg>
<div style="left:861px;top:927px;width:150px;height:59px;background:rgba(2,2,10,0.92);border-radius:5px"></div>
<div style="left:870px;top:938px;font-size:13.6px;line-height:16px;color:#fff;font-weight:400;font-family:'Liberation Mono';white-space:nowrap;">Freq: 14.088 MHz</div>
<div style="left:870px;top:961px;font-size:13.6px;line-height:16px;color:#fff;font-weight:400;font-family:'Liberation Mono';white-space:nowrap;white-space:pre;">Span:    ±24 kHz</div>
<div style="left:279px;top:996px;width:1313px;height:27px;background:#f0f0f0"></div>
<div style="left:281px;top:998px;width:24px;height:24px;background:#e1e1e1;border:1px solid #adadad;box-sizing:border-box"></div>
<svg style="position:absolute;left:284px;top:1001px;" width="18" height="18" viewBox="0 0 18 18"><circle cx="9" cy="9" r="7.5" fill="#fafafa" stroke="#333" stroke-width="1.4"/><path d="M8.5 5.5 L5 9 L8.5 12.5z M12.5 5.5 L9 9 L12.5 12.5z" fill="#222"/></svg>
<div style="left:306px;top:996px;width:1168px;height:27px;background:linear-gradient(#3c3c3c 0%,#262626 50%,#000 51%,#000 100%)"></div>
<div style="left:773px;top:996px;width:234px;height:27px;background:radial-gradient(ellipse 120px 20px at 50% 100%,rgba(200,200,30,0.75),rgba(120,120,20,0.35) 60%,rgba(0,0,0,0) 100%),linear-gradient(#444,#3a3a3a 50%,#2e2e2e)"></div>
<div style="left:773px;top:996px;width:2px;height:27px;background:#ddd"></div>
<div style="left:1005px;top:996px;width:2px;height:27px;background:#ddd"></div>
<div style="left:889px;top:996px;width:2px;height:27px;background:#e0e020"></div>
<svg style="position:absolute;left:306px;top:996px;" width="1168" height="8" viewBox="0 0 1168 8"><rect x="9.3" y="1" width="1.5" height="5" fill="#858585"/><rect x="19.1" y="1" width="1.5" height="3" fill="#858585"/><rect x="28.8" y="1" width="1.5" height="3" fill="#858585"/><rect x="38.5" y="1" width="1.5" height="3" fill="#858585"/><rect x="48.3" y="1" width="1.5" height="3" fill="#858585"/><rect x="58.0" y="1" width="1.5" height="5" fill="#858585"/><rect x="67.7" y="1" width="1.5" height="3" fill="#858585"/><rect x="77.5" y="1" width="1.5" height="3" fill="#858585"/><rect x="87.2" y="1" width="1.5" height="3" fill="#858585"/><rect x="96.9" y="1" width="1.5" height="3" fill="#858585"/><rect x="106.7" y="1" width="1.5" height="5" fill="#858585"/><rect x="116.4" y="1" width="1.5" height="3" fill="#858585"/><rect x="126.2" y="1" width="1.5" height="3" fill="#858585"/><rect x="135.9" y="1" width="1.5" height="3" fill="#858585"/><rect x="145.6" y="1" width="1.5" height="3" fill="#858585"/><rect x="155.4" y="1" width="1.5" height="5" fill="#858585"/><rect x="165.1" y="1" width="1.5" height="3" fill="#858585"/><rect x="174.8" y="1" width="1.5" height="3" fill="#858585"/><rect x="184.6" y="1" width="1.5" height="3" fill="#858585"/><rect x="194.3" y="1" width="1.5" height="3" fill="#858585"/><rect x="204.0" y="1" width="1.5" height="5" fill="#858585"/><rect x="213.8" y="1" width="1.5" height="3" fill="#858585"/><rect x="223.5" y="1" width="1.5" height="3" fill="#858585"/><rect x="233.3" y="1" width="1.5" height="3" fill="#858585"/><rect x="243.0" y="1" width="1.5" height="3" fill="#858585"/><rect x="252.7" y="1" width="1.5" height="5" fill="#858585"/><rect x="262.5" y="1" width="1.5" height="3" fill="#858585"/><rect x="272.2" y="1" width="1.5" height="3" fill="#858585"/><rect x="281.9" y="1" width="1.5" height="3" fill="#858585"/><rect x="291.7" y="1" width="1.5" height="3" fill="#858585"/><rect x="301.4" y="1" width="1.5" height="5" fill="#858585"/><rect x="311.1" y="1" width="1.5" height="3" fill="#858585"/><rect x="320.9" y="1" width="1.5" height="3" fill="#858585"/><rect x="330.6" y="1" width="1.5" height="3" fill="#858585"/><rect x="340.4" y="1" width="1.5" height="3" fill="#858585"/><rect x="350.1" y="1" width="1.5" height="5" fill="#858585"/><rect x="359.8" y="1" width="1.5" height="3" fill="#858585"/><rect x="369.6" y="1" width="1.5" height="3" fill="#858585"/><rect x="379.3" y="1" width="1.5" height="3" fill="#858585"/><rect x="389.0" y="1" width="1.5" height="3" fill="#858585"/><rect x="398.8" y="1" width="1.5" height="5" fill="#858585"/><rect x="408.5" y="1" width="1.5" height="3" fill="#858585"/><rect x="418.2" y="1" width="1.5" height="3" fill="#858585"/><rect x="428.0" y="1" width="1.5" height="3" fill="#858585"/><rect x="437.7" y="1" width="1.5" height="3" fill="#858585"/><rect x="447.5" y="1" width="1.5" height="5" fill="#858585"/><rect x="457.2" y="1" width="1.5" height="3" fill="#858585"/><rect x="466.9" y="1" width="1.5" height="3" fill="#858585"/><rect x="476.7" y="1" width="1.5" height="3" fill="#858585"/><rect x="486.4" y="1" width="1.5" height="3" fill="#858585"/><rect x="496.1" y="1" width="1.5" height="5" fill="#858585"/><rect x="505.9" y="1" width="1.5" height="3" fill="#858585"/><rect x="515.6" y="1" width="1.5" height="3" fill="#858585"/><rect x="525.3" y="1" width="1.5" height="3" fill="#858585"/><rect x="535.1" y="1" width="1.5" height="3" fill="#858585"/><rect x="544.8" y="1" width="1.5" height="5" fill="#858585"/><rect x="554.6" y="1" width="1.5" height="3" fill="#858585"/><rect x="564.3" y="1" width="1.5" height="3" fill="#858585"/><rect x="574.0" y="1" width="1.5" height="3" fill="#858585"/><rect x="583.8" y="1" width="1.5" height="3" fill="#858585"/><rect x="593.5" y="1" width="1.5" height="5" fill="#858585"/><rect x="603.2" y="1" width="1.5" height="3" fill="#858585"/><rect x="613.0" y="1" width="1.5" height="3" fill="#858585"/><rect x="622.7" y="1" width="1.5" height="3" fill="#858585"/><rect x="632.4" y="1" width="1.5" height="3" fill="#858585"/><rect x="642.2" y="1" width="1.5" height="5" fill="#858585"/><rect x="651.9" y="1" width="1.5" height="3" fill="#858585"/><rect x="661.7" y="1" width="1.5" height="3" fill="#858585"/><rect x="671.4" y="1" width="1.5" height="3" fill="#858585"/><rect x="681.1" y="1" width="1.5" height="3" fill="#858585"/><rect x="690.9" y="1" width="1.5" height="5" fill="#858585"/><rect x="700.6" y="1" width="1.5" height="3" fill="#858585"/><rect x="710.3" y="1" width="1.5" height="3" fill="#858585"/><rect x="720.1" y="1" width="1.5" height="3" fill="#858585"/><rect x="729.8" y="1" width="1.5" height="3" fill="#858585"/><rect x="739.5" y="1" width="1.5" height="5" fill="#858585"/><rect x="749.3" y="1" width="1.5" height="3" fill="#858585"/><rect x="759.0" y="1" width="1.5" height="3" fill="#858585"/><rect x="768.8" y="1" width="1.5" height="3" fill="#858585"/><rect x="778.5" y="1" width="1.5" height="3" fill="#858585"/><rect x="788.2" y="1" width="1.5" height="5" fill="#858585"/><rect x="798.0" y="1" width="1.5" height="3" fill="#858585"/><rect x="807.7" y="1" width="1.5" height="3" fill="#858585"/><rect x="817.4" y="1" width="1.5" height="3" fill="#858585"/><rect x="827.2" y="1" width="1.5" height="3" fill="#858585"/><rect x="836.9" y="1" width="1.5" height="5" fill="#858585"/><rect x="846.6" y="1" width="1.5" height="3" fill="#858585"/><rect x="856.4" y="1" width="1.5" height="3" fill="#858585"/><rect x="866.1" y="1" width="1.5" height="3" fill="#858585"/><rect x="875.9" y="1" width="1.5" height="3" fill="#858585"/><rect x="885.6" y="1" width="1.5" height="5" fill="#858585"/><rect x="895.3" y="1" width="1.5" height="3" fill="#858585"/><rect x="905.1" y="1" width="1.5" height="3" fill="#858585"/><rect x="914.8" y="1" width="1.5" height="3" fill="#858585"/><rect x="924.5" y="1" width="1.5" height="3" fill="#858585"/><rect x="934.3" y="1" width="1.5" height="5" fill="#858585"/><rect x="944.0" y="1" width="1.5" height="3" fill="#858585"/><rect x="953.7" y="1" width="1.5" height="3" fill="#858585"/><rect x="963.5" y="1" width="1.5" height="3" fill="#858585"/><rect x="973.2" y="1" width="1.5" height="3" fill="#858585"/><rect x="983.0" y="1" width="1.5" height="5" fill="#858585"/><rect x="992.7" y="1" width="1.5" height="3" fill="#858585"/><rect x="1002.4" y="1" width="1.5" height="3" fill="#858585"/><rect x="1012.2" y="1" width="1.5" height="3" fill="#858585"/><rect x="1021.9" y="1" width="1.5" height="3" fill="#858585"/><rect x="1031.6" y="1" width="1.5" height="5" fill="#858585"/><rect x="1041.4" y="1" width="1.5" height="3" fill="#858585"/><rect x="1051.1" y="1" width="1.5" height="3" fill="#858585"/><rect x="1060.8" y="1" width="1.5" height="3" fill="#858585"/><rect x="1070.6" y="1" width="1.5" height="3" fill="#858585"/><rect x="1080.3" y="1" width="1.5" height="5" fill="#858585"/><rect x="1090.1" y="1" width="1.5" height="3" fill="#858585"/><rect x="1099.8" y="1" width="1.5" height="3" fill="#858585"/><rect x="1109.5" y="1" width="1.5" height="3" fill="#858585"/><rect x="1119.3" y="1" width="1.5" height="3" fill="#858585"/><rect x="1129.0" y="1" width="1.5" height="5" fill="#858585"/><rect x="1138.7" y="1" width="1.5" height="3" fill="#858585"/><rect x="1148.5" y="1" width="1.5" height="3" fill="#858585"/><rect x="1158.2" y="1" width="1.5" height="3" fill="#858585"/><rect x="1167.9" y="1" width="1.5" height="3" fill="#858585"/></svg>
<div style="left:306px;top:996px;width:1168px;height:1px;background:#999"></div>
<div style="left:334.0px;top:1007px;width:60px;text-align:center;font-size:12px;line-height:14px;color:#c4c4c4;font-weight:400;font-family:'Liberation Sans';white-space:nowrap;-webkit-text-stroke:0.12px;-webkit-text-stroke:0.05px;">13.980</div>
<div style="left:431.3636363636364px;top:1007px;width:60px;text-align:center;font-size:12px;line-height:14px;color:#c4c4c4;font-weight:400;font-family:'Liberation Sans';white-space:nowrap;-webkit-text-stroke:0.12px;-webkit-text-stroke:0.05px;">14.000</div>
<div style="left:528.7272727272727px;top:1007px;width:60px;text-align:center;font-size:12px;line-height:14px;color:#c4c4c4;font-weight:400;font-family:'Liberation Sans';white-space:nowrap;-webkit-text-stroke:0.12px;-webkit-text-stroke:0.05px;">14.020</div>
<div style="left:626.090909090909px;top:1007px;width:60px;text-align:center;font-size:12px;line-height:14px;color:#c4c4c4;font-weight:400;font-family:'Liberation Sans';white-space:nowrap;-webkit-text-stroke:0.12px;-webkit-text-stroke:0.05px;">14.040</div>
<div style="left:723.4545454545455px;top:1007px;width:60px;text-align:center;font-size:12px;line-height:14px;color:#c4c4c4;font-weight:400;font-family:'Liberation Sans';white-space:nowrap;-webkit-text-stroke:0.12px;-webkit-text-stroke:0.05px;">14.060</div>
<div style="left:820.8181818181818px;top:1007px;width:60px;text-align:center;font-size:12px;line-height:14px;color:#c4c4c4;font-weight:400;font-family:'Liberation Sans';white-space:nowrap;-webkit-text-stroke:0.12px;-webkit-text-stroke:0.05px;">14.080</div>
<div style="left:918.1818181818181px;top:1007px;width:60px;text-align:center;font-size:12px;line-height:14px;color:#c4c4c4;font-weight:400;font-family:'Liberation Sans';white-space:nowrap;-webkit-text-stroke:0.12px;-webkit-text-stroke:0.05px;">14.100</div>
<div style="left:1015.5454545454545px;top:1007px;width:60px;text-align:center;font-size:12px;line-height:14px;color:#c4c4c4;font-weight:400;font-family:'Liberation Sans';white-space:nowrap;-webkit-text-stroke:0.12px;-webkit-text-stroke:0.05px;">14.120</div>
<div style="left:1112.909090909091px;top:1007px;width:60px;text-align:center;font-size:12px;line-height:14px;color:#c4c4c4;font-weight:400;font-family:'Liberation Sans';white-space:nowrap;-webkit-text-stroke:0.12px;-webkit-text-stroke:0.05px;">14.140</div>
<div style="left:1210.2727272727273px;top:1007px;width:60px;text-align:center;font-size:12px;line-height:14px;color:#c4c4c4;font-weight:400;font-family:'Liberation Sans';white-space:nowrap;-webkit-text-stroke:0.12px;-webkit-text-stroke:0.05px;">14.160</div>
<div style="left:1307.6363636363635px;top:1007px;width:60px;text-align:center;font-size:12px;line-height:14px;color:#c4c4c4;font-weight:400;font-family:'Liberation Sans';white-space:nowrap;-webkit-text-stroke:0.12px;-webkit-text-stroke:0.05px;">14.180</div>
<div style="left:1405.0px;top:1007px;width:60px;text-align:center;font-size:12px;line-height:14px;color:#c4c4c4;font-weight:400;font-family:'Liberation Sans';white-space:nowrap;-webkit-text-stroke:0.12px;-webkit-text-stroke:0.05px;">14.200</div>
<div style="left:1475px;top:997px;width:36px;height:26px;background:#e1e1e1;border:1px solid #adadad;box-sizing:border-box"></div>
<svg style="position:absolute;left:1484px;top:1003px;" width="18" height="14" viewBox="0 0 18 14"><rect x="0.5" y="4" width="17" height="9" fill="none" stroke="#333" stroke-width="1"/><g fill="#333"><rect x="2" y="6" width="2" height="1.5"/><rect x="5" y="6" width="2" height="1.5"/><rect x="8" y="6" width="2" height="1.5"/><rect x="11" y="6" width="2" height="1.5"/><rect x="14" y="6" width="2" height="1.5"/><rect x="3" y="9" width="12" height="1.5"/></g><path d="M9 4 V1.5 H12" fill="none" stroke="#333" stroke-width="1"/></svg>
<div style="left:1514px;top:997px;width:49px;height:26px;background:#e1e1e1;border:1px solid #adadad;box-sizing:border-box"></div>
<div style="left:1522px;top:1003px;font-size:12px;line-height:14px;color:#000;font-weight:400;font-family:'Liberation Sans';white-space:nowrap;-webkit-text-stroke:0.12px;">x5</div>
<svg style="position:absolute;left:1551px;top:1006px;" width="6" height="9" viewBox="0 0 6 9"><path d="M0 0 L5 4.5 L0 9z" fill="#000"/></svg>
<div style="left:1566px;top:997px;width:25px;height:26px;background:#e1e1e1;border:1px solid #adadad;box-sizing:border-box"></div>
<svg style="position:absolute;left:1569px;top:1001px;" width="18" height="18" viewBox="0 0 18 18"><circle cx="9" cy="9" r="7.5" fill="#fafafa" stroke="#333" stroke-width="1.4"/><path d="M5.5 5.5 L9 9 L5.5 12.5z M9.5 5.5 L13 9 L9.5 12.5z" fill="#222"/></svg>
<div style="left:1592px;top:146px;width:1px;height:877px;background:#555"></div>
<div style="left:1593px;top:146px;width:38px;height:877px;background:#000"></div>
<div style="left:1593px;top:146px;width:38px;height:30px;border:1px solid #4a4a4a;box-sizing:border-box;background:linear-gradient(#2e2e2e,#404040 50%,#000 51%)"></div>
<div style="left:1593.0px;top:155px;width:38px;text-align:center;font-size:11px;line-height:13px;color:#f0f0f0;font-weight:400;font-family:'Liberation Sans';white-space:nowrap;-webkit-text-stroke:0.12px;">Auto</div>
<div style="left:1593.0px;top:224px;width:38px;text-align:center;font-size:9px;line-height:10px;color:#c0c0c0;font-weight:400;font-family:'Liberation Sans';white-space:nowrap;-webkit-text-stroke:0.12px;">-10</div>
<div style="left:1593.0px;top:277px;width:38px;text-align:center;font-size:9px;line-height:10px;color:#c0c0c0;font-weight:400;font-family:'Liberation Sans';white-space:nowrap;-webkit-text-stroke:0.12px;">-20</div>
<div style="left:1593.0px;top:330px;width:38px;text-align:center;font-size:9px;line-height:10px;color:#c0c0c0;font-weight:400;font-family:'Liberation Sans';white-space:nowrap;-webkit-text-stroke:0.12px;">-30</div>
<div style="left:1593.0px;top:648px;width:38px;text-align:center;font-size:9px;line-height:10px;color:#c0c0c0;font-weight:400;font-family:'Liberation Sans';white-space:nowrap;-webkit-text-stroke:0.12px;">-90</div>
<div style="left:1593.0px;top:701px;width:38px;text-align:center;font-size:9px;line-height:10px;color:#c0c0c0;font-weight:400;font-family:'Liberation Sans';white-space:nowrap;-webkit-text-stroke:0.12px;">-100</div>
<div style="left:1593.0px;top:754px;width:38px;text-align:center;font-size:9px;line-height:10px;color:#c0c0c0;font-weight:400;font-family:'Liberation Sans';white-space:nowrap;-webkit-text-stroke:0.12px;">-110</div>
<div style="left:1593.0px;top:807px;width:38px;text-align:center;font-size:9px;line-height:10px;color:#c0c0c0;font-weight:400;font-family:'Liberation Sans';white-space:nowrap;-webkit-text-stroke:0.12px;">-120</div>
<div style="left:1593.0px;top:860px;width:38px;text-align:center;font-size:9px;line-height:10px;color:#c0c0c0;font-weight:400;font-family:'Liberation Sans';white-space:nowrap;-webkit-text-stroke:0.12px;">-130</div>
<div style="left:1593.0px;top:913px;width:38px;text-align:center;font-size:9px;line-height:10px;color:#c0c0c0;font-weight:400;font-family:'Liberation Sans';white-space:nowrap;-webkit-text-stroke:0.12px;">-140</div>
<div style="left:1593.0px;top:966px;width:38px;text-align:center;font-size:9px;line-height:10px;color:#c0c0c0;font-weight:400;font-family:'Liberation Sans';white-space:nowrap;-webkit-text-stroke:0.12px;">-150</div>
<div style="left:1595px;top:354px;width:35px;height:281px;background:linear-gradient(#ffff00 0%,#ffffa0 6%,#ffffff 14%,#ffffff 30%,#c8d4ff 48%,#7898ff 60%,#4060d0 75%,#202a80 88%,#0a0a30 100%)"></div>
<div style="left:1595px;top:634px;width:35px;height:2px;background:#fff"></div>
<div style="left:1598px;top:378px;width:28px;height:18px;background:#808080;border-radius:4px;opacity:0.95"></div>
<div style="left:1593.0px;top:383px;width:38px;text-align:center;font-size:9px;line-height:10px;color:#d0d0d0;font-weight:400;font-family:'Liberation Sans';white-space:nowrap;-webkit-text-stroke:0.12px;">-40</div>
<div style="left:1598px;top:431px;width:28px;height:18px;background:#7c7c80;border-radius:4px;opacity:0.95"></div>
<div style="left:1593.0px;top:436px;width:38px;text-align:center;font-size:9px;line-height:10px;color:#d0d0d0;font-weight:400;font-family:'Liberation Sans';white-space:nowrap;-webkit-text-stroke:0.12px;">-50</div>
<div style="left:1598px;top:484px;width:28px;height:18px;background:#505a78;border-radius:4px;opacity:0.95"></div>
<div style="left:1593.0px;top:489px;width:38px;text-align:center;font-size:9px;line-height:10px;color:#d0d0d0;font-weight:400;font-family:'Liberation Sans';white-space:nowrap;-webkit-text-stroke:0.12px;">-60</div>
<div style="left:1598px;top:537px;width:28px;height:18px;background:#28305c;border-radius:4px;opacity:0.95"></div>
<div style="left:1593.0px;top:542px;width:38px;text-align:center;font-size:9px;line-height:10px;color:#d0d0d0;font-weight:400;font-family:'Liberation Sans';white-space:nowrap;-webkit-text-stroke:0.12px;">-70</div>
<div style="left:1598px;top:590px;width:28px;height:18px;background:#141838;border-radius:4px;opacity:0.95"></div>
<div style="left:1593.0px;top:595px;width:38px;text-align:center;font-size:9px;line-height:10px;color:#d0d0d0;font-weight:400;font-family:'Liberation Sans';white-space:nowrap;-webkit-text-stroke:0.12px;">-80</div>
<div style="left:1631px;top:146px;width:5px;height:877px;background:#eef2fa"></div>
<div style="left:1636px;top:146px;width:282px;height:877px;background:#f0f0f0"></div>
<div style="left:1918px;top:146px;width:2px;height:877px;background:#fff"></div>
<div style="left:1636px;top:146px;width:282px;height:19px;background:linear-gradient(#9db4cf,#bdd1e7)"></div>
<div style="left:1640px;top:150px;font-size:11px;line-height:13px;color:#000;font-weight:400;font-family:'Liberation Sans';white-space:nowrap;-webkit-text-stroke:0.12px;">Transmit</div>
<svg style="position:absolute;left:1888px;top:153px;" width="9" height="6" viewBox="0 0 9 6"><path d="M0 0h9l-4.5 5.5z" fill="#000"/></svg>
<svg style="position:absolute;left:1905px;top:151px;" width="9" height="9" viewBox="0 0 9 9"><path d="M1 1L8 8M8 1L1 8" stroke="#000" stroke-width="1.6"/></svg>
<div style="left:1636px;top:167px;width:267px;height:265px;background:#000"></div>
<div style="left:1640px;top:169px;font-size:11px;line-height:13px;color:#e6e600;font-weight:400;font-family:'Liberation Sans';white-space:nowrap;-webkit-text-stroke:0.12px;">TX</div>
<div style="left:1599px;top:169px;width:300px;text-align:right;font-size:11px;line-height:13px;color:#e6e600;font-weight:400;font-family:'Liberation Sans';white-space:nowrap;-webkit-text-stroke:0.12px;">100 - 2900 Hz</div>
<div style="left:1644px;top:196px;font-size:31px;line-height:36px;color:#fff;font-weight:400;font-family:'Liberation Mono';white-space:nowrap;transform:scaleY(1.08);transform-origin:0 29px;"><span style="color:#454545">0.0</span>14.077.000</div>
<div style="left:1903px;top:167px;width:15px;height:856px;background:#f0f0f0"></div>
<svg style="position:absolute;left:1906px;top:171px;" width="10" height="7" viewBox="0 0 10 7"><path d="M1 6 L5 2 L9 6" fill="none" stroke="#606060" stroke-width="1.6"/></svg>
<div style="left:1904px;top:183px;width:13px;height:746px;background:#cdcdcd"></div>
<svg style="position:absolute;left:1906px;top:1011px;" width="10" height="7" viewBox="0 0 10 7"><path d="M1 1 L5 5 L9 1" fill="none" stroke="#606060" stroke-width="2"/></svg>
<div style="left:1645px;top:251px;width:69px;height:23px;background:#000;border:1px solid #4a4a4a;box-sizing:border-box;overflow:hidden"><div style="left:0;top:0;width:67px;height:10px;background:linear-gradient(#3c3c3c,#262626)"></div><div style="left:0;top:0;width:67px;height:21px;background:radial-gradient(ellipse 35.88px 11.5px at 50% 100%, rgba(225,225,40,1) 0%, rgba(190,190,25,0.8) 40%, rgba(90,90,0,0.3) 75%, rgba(0,0,0,0) 100%)"></div></div>
<div style="left:1645.0px;top:255.5px;width:69px;text-align:center;font-size:11px;line-height:13px;color:#a8a8a8;font-weight:400;font-family:'Liberation Sans';white-space:nowrap;-webkit-text-stroke:0.12px;-webkit-text-stroke:0.05px;">Sync RX</div>
<div style="left:1723px;top:251px;width:69px;height:23px;background:#000;border:1px solid #4a4a4a;box-sizing:border-box;overflow:hidden"><div style="left:0;top:0;width:67px;height:10px;background:linear-gradient(#3c3c3c,#262626)"></div></div>
<div style="left:1723.0px;top:255.5px;width:69px;text-align:center;font-size:11px;line-height:13px;color:#8a8a8a;font-weight:400;font-family:'Liberation Sans';white-space:nowrap;-webkit-text-stroke:0.12px;-webkit-text-stroke:0.05px;">RX ⇤ TX</div>
<div style="left:1795px;top:251px;width:69px;height:23px;background:#000;border:1px solid #4a4a4a;box-sizing:border-box;overflow:hidden"><div style="left:0;top:0;width:67px;height:10px;background:linear-gradient(#3c3c3c,#262626)"></div></div>
<div style="left:1795.0px;top:255.5px;width:69px;text-align:center;font-size:11px;line-height:13px;color:#8a8a8a;font-weight:400;font-family:'Liberation Sans';white-space:nowrap;-webkit-text-stroke:0.12px;-webkit-text-stroke:0.05px;">TX ⇤ RX</div>
<div style="left:1645px;top:292px;width:69px;height:23px;background:#000;border:1px solid #4a4a4a;box-sizing:border-box;overflow:hidden"><div style="left:0;top:0;width:67px;height:10px;background:linear-gradient(#3c3c3c,#262626)"></div></div>
<div style="left:1645.0px;top:296.5px;width:69px;text-align:center;font-size:11px;line-height:13px;color:#8a8a8a;font-weight:400;font-family:'Liberation Sans';white-space:nowrap;-webkit-text-stroke:0.12px;-webkit-text-stroke:0.05px;">Sync RX</div>
<div style="left:1723px;top:292px;width:30px;height:23px;background:#000;border:1px solid #4a4a4a;box-sizing:border-box;overflow:hidden"><div style="left:0;top:0;width:28px;height:10px;background:linear-gradient(#3c3c3c,#262626)"></div></div>
<div style="left:1723.0px;top:296.5px;width:30px;text-align:center;font-size:11px;line-height:13px;color:#7a7a7a;font-weight:400;font-family:'Liberation Sans';white-space:nowrap;-webkit-text-stroke:0.12px;-webkit-text-stroke:0.05px;">LSB</div>
<div style="left:1756px;top:292px;width:30px;height:23px;background:#000;border:1px solid #4a4a4a;box-sizing:border-box;overflow:hidden"><div style="left:0;top:0;width:28px;height:10px;background:linear-gradient(#3c3c3c,#262626)"></div><div style="left:0;top:0;width:28px;height:21px;background:radial-gradient(ellipse 15.600000000000001px 11.5px at 50% 100%, rgba(225,225,40,1) 0%, rgba(190,190,25,0.8) 40%, rgba(90,90,0,0.3) 75%, rgba(0,0,0,0) 100%)"></div></div>
<div style="left:1756.0px;top:296.5px;width:30px;text-align:center;font-size:11px;line-height:13px;color:#b0b0b0;font-weight:400;font-family:'Liberation Sans';white-space:nowrap;-webkit-text-stroke:0.12px;-webkit-text-stroke:0.05px;">USB</div>
<div style="left:1789px;top:292px;width:30px;height:23px;background:#000;border:1px solid #4a4a4a;box-sizing:border-box;overflow:hidden"><div style="left:0;top:0;width:28px;height:10px;background:linear-gradient(#3c3c3c,#262626)"></div></div>
<div style="left:1789.0px;top:296.5px;width:30px;text-align:center;font-size:11px;line-height:13px;color:#7a7a7a;font-weight:400;font-family:'Liberation Sans';white-space:nowrap;-webkit-text-stroke:0.12px;-webkit-text-stroke:0.05px;">AM</div>
<div style="left:1822px;top:292px;width:30px;height:23px;background:#000;border:1px solid #4a4a4a;box-sizing:border-box;overflow:hidden"><div style="left:0;top:0;width:28px;height:10px;background:linear-gradient(#3c3c3c,#262626)"></div></div>
<div style="left:1822.0px;top:296.5px;width:30px;text-align:center;font-size:11px;line-height:13px;color:#7a7a7a;font-weight:400;font-family:'Liberation Sans';white-space:nowrap;-webkit-text-stroke:0.12px;-webkit-text-stroke:0.05px;">FM</div>
<div style="left:1855px;top:292px;width:30px;height:23px;background:#000;border:1px solid #4a4a4a;box-sizing:border-box;overflow:hidden"><div style="left:0;top:0;width:28px;height:10px;background:linear-gradient(#3c3c3c,#262626)"></div></div>
<div style="left:1855.0px;top:296.5px;width:30px;text-align:center;font-size:11px;line-height:13px;color:#7a7a7a;font-weight:400;font-family:'Liberation Sans';white-space:nowrap;-webkit-text-stroke:0.12px;-webkit-text-stroke:0.05px;">CW</div>
<div style="left:1645px;top:332px;width:60px;height:52px;background:#000;border:1px solid #4a4a4a;box-sizing:border-box;overflow:hidden"><div style="left:0;top:0;width:58px;height:25px;background:linear-gradient(#3c3c3c,#262626)"></div><div style="left:0;top:0;width:58px;height:50px;background:radial-gradient(ellipse 34px 22px at 50% 100%,rgba(220,220,40,0.9),rgba(140,140,20,0.45) 55%,rgba(0,0,0,0) 100%)"></div></div>
<div style="left:1645.0px;top:351px;width:60px;text-align:center;font-size:14px;line-height:16px;color:#fff;font-weight:700;font-family:'Liberation Sans';white-space:nowrap;">TX</div>
<div style="left:1714px;top:332px;width:45px;height:23px;background:#000;border:1px solid #4a4a4a;box-sizing:border-box;overflow:hidden"><div style="left:0;top:0;width:43px;height:10px;background:linear-gradient(#3c3c3c,#262626)"></div></div>
<div style="left:1714.0px;top:336.5px;width:45px;text-align:center;font-size:11px;line-height:13px;color:#7a7a7a;font-weight:400;font-family:'Liberation Sans';white-space:nowrap;-webkit-text-stroke:0.12px;-webkit-text-stroke:0.05px;">Tone</div>
<div style="left:1762px;top:332px;width:45px;height:23px;background:#000;border:1px solid #4a4a4a;box-sizing:border-box;overflow:hidden"><div style="left:0;top:0;width:43px;height:10px;background:linear-gradient(#3c3c3c,#262626)"></div><div style="left:0;top:0;width:43px;height:21px;background:radial-gradient(ellipse 23.400000000000002px 11.5px at 50% 100%, rgba(225,225,40,1) 0%, rgba(190,190,25,0.8) 40%, rgba(90,90,0,0.3) 75%, rgba(0,0,0,0) 100%)"></div></div>
<div style="left:1762.0px;top:336.5px;width:45px;text-align:center;font-size:11px;line-height:13px;color:#fff;font-weight:700;font-family:'Liberation Sans';white-space:nowrap;-webkit-text-stroke:0.12px;-webkit-text-stroke:0.05px;">Tune</div>
<div style="left:1810px;top:332px;width:24px;height:23px;background:#000;border:1px solid #4a4a4a;box-sizing:border-box;overflow:hidden"><div style="left:0;top:0;width:22px;height:10px;background:linear-gradient(#3c3c3c,#262626)"></div></div>
<div style="left:1810.0px;top:336.5px;width:24px;text-align:center;font-size:11px;line-height:13px;color:#fff;font-weight:700;font-family:'Liberation Sans';white-space:nowrap;-webkit-text-stroke:0.12px;-webkit-text-stroke:0.05px;">•••</div>
<div style="left:1845px;top:337px;font-size:10.5px;line-height:12px;color:#ddd;font-weight:400;font-family:'Liberation Mono';white-space:nowrap;">4.7</div>
<div style="left:1651px;top:405px;font-size:11px;line-height:13px;color:#fff;font-weight:400;font-family:'Liberation Sans';white-space:nowrap;-webkit-text-stroke:0.12px;">Drive</div>
<div style="left:1690px;top:409px;width:155px;height:3px;background:#e8e8e8;border-radius:2px"></div>
<div style="left:1815px;top:402px;width:14px;height:17px;background:linear-gradient(90deg,#d8d8d8,#bcbcbc);border:1px solid #999;border-radius:3px;box-sizing:border-box"><div style="left:4px;top:4px;width:1px;height:7px;background:#888"></div><div style="left:6px;top:4px;width:1px;height:7px;background:#888"></div><div style="left:8px;top:4px;width:1px;height:7px;background:#888"></div></div>
<div style="left:1582px;top:405px;width:300px;text-align:right;font-size:11px;line-height:13px;color:#fff;font-weight:400;font-family:'Liberation Sans';white-space:nowrap;-webkit-text-stroke:0.12px;">85</div>
<div style="left:1636px;top:432px;width:267px;height:18px;background:linear-gradient(90deg,#ffffff 0%,#f2f2f2 40%,#e2e2e2 100%)"></div>
<div style="left:1638px;top:437px;font-size:11px;line-height:13px;color:#1e7ad8;font-weight:700;font-family:'Liberation Sans';white-space:nowrap;-webkit-text-stroke:0.12px;">Meter</div>
<svg style="position:absolute;left:1889px;top:438.0px;" width="7" height="5" viewBox="0 0 7 5"><path d="M0 4 L3.5 0 L7 4z" fill="#111"/></svg>
<div style="left:1888px;top:436px;width:11px;height:10px;background:#f8f8f8;border:1px solid #c8c8c8;box-sizing:border-box"><svg style="position:absolute;left:2px;top:2px" width="7" height="5"><path d="M0 4.5 L3.5 0.5 L7 4.5z" fill="#111"/></svg></div>
<div style="left:1636px;top:450px;width:267px;height:130px;background:#000"></div>
<div style="left:1643px;top:465px;font-size:10px;line-height:12px;color:#eee;font-weight:400;font-family:'Liberation Sans';white-space:nowrap;-webkit-text-stroke:0.12px;font-style:italic;">PWR</div>
<svg style="position:absolute;left:1674px;top:459px;" width="160" height="7" viewBox="0 0 160 7"><rect x="0" y="0" width="3" height="7" fill="rgb(100,100,100)"/><rect x="4" y="0" width="3" height="7" fill="rgb(105,105,97)"/><rect x="8" y="0" width="3" height="7" fill="rgb(111,111,94)"/><rect x="12" y="0" width="3" height="7" fill="rgb(117,117,91)"/><rect x="16" y="0" width="3" height="7" fill="rgb(123,123,89)"/><rect x="20" y="0" width="3" height="7" fill="rgb(129,129,86)"/><rect x="24" y="0" width="3" height="7" fill="rgb(135,135,83)"/><rect x="28" y="0" width="3" height="7" fill="rgb(141,141,81)"/><rect x="32" y="0" width="3" height="7" fill="rgb(147,147,78)"/><rect x="36" y="0" width="3" height="7" fill="rgb(153,153,75)"/><rect x="40" y="0" width="3" height="7" fill="rgb(159,159,72)"/><rect x="44" y="0" width="3" height="7" fill="rgb(165,165,70)"/><rect x="48" y="0" width="3" height="7" fill="rgb(171,171,67)"/><rect x="52" y="0" width="3" height="7" fill="rgb(177,177,64)"/><rect x="56" y="0" width="3" height="7" fill="rgb(183,183,62)"/></svg>
<div style="left:1674px;top:468px;width:222px;height:2px;background:#888"></div>
<div style="left:1674px;top:469px;width:1px;height:3px;background:#aaa"></div>
<div style="left:1644.5px;top:472px;width:60px;text-align:center;font-size:8px;line-height:9px;color:#ddd;font-weight:400;font-family:'Liberation Mono';white-space:nowrap;font-style:italic;">0</div>
<div style="left:1711px;top:469px;width:1px;height:3px;background:#aaa"></div>
<div style="left:1681.5px;top:472px;width:60px;text-align:center;font-size:8px;line-height:9px;color:#ddd;font-weight:400;font-family:'Liberation Mono';white-space:nowrap;font-style:italic;">2</div>
<div style="left:1748px;top:469px;width:1px;height:3px;background:#aaa"></div>
<div style="left:1718.5px;top:472px;width:60px;text-align:center;font-size:8px;line-height:9px;color:#ddd;font-weight:400;font-family:'Liberation Mono';white-space:nowrap;font-style:italic;">4</div>
<div style="left:1785px;top:469px;width:1px;height:3px;background:#aaa"></div>
<div style="left:1755.5px;top:472px;width:60px;text-align:center;font-size:8px;line-height:9px;color:#ddd;font-weight:400;font-family:'Liberation Mono';white-space:nowrap;font-style:italic;">6</div>
<div style="left:1822px;top:469px;width:1px;height:3px;background:#aaa"></div>
<div style="left:1792.5px;top:472px;width:60px;text-align:center;font-size:8px;line-height:9px;color:#ddd;font-weight:400;font-family:'Liberation Mono';white-space:nowrap;font-style:italic;">8</div>
<div style="left:1859px;top:469px;width:1px;height:3px;background:#aaa"></div>
<div style="left:1829.5px;top:472px;width:60px;text-align:center;font-size:8px;line-height:9px;color:#ddd;font-weight:400;font-family:'Liberation Mono';white-space:nowrap;font-style:italic;">10 W</div>
<div style="left:1643px;top:495px;font-size:10px;line-height:12px;color:#eee;font-weight:400;font-family:'Liberation Sans';white-space:nowrap;-webkit-text-stroke:0.12px;font-style:italic;">SWR</div>
<svg style="position:absolute;left:1674px;top:489px;" width="160" height="7" viewBox="0 0 160 7"><rect x="0" y="0" width="3" height="7" fill="rgb(100,100,100)"/><rect x="4" y="0" width="3" height="7" fill="rgb(105,105,97)"/><rect x="8" y="0" width="3" height="7" fill="rgb(111,111,94)"/><rect x="12" y="0" width="3" height="7" fill="rgb(117,117,91)"/><rect x="16" y="0" width="3" height="7" fill="rgb(123,123,89)"/><rect x="20" y="0" width="3" height="7" fill="rgb(129,129,86)"/><rect x="24" y="0" width="3" height="7" fill="rgb(135,135,83)"/><rect x="28" y="0" width="3" height="7" fill="rgb(141,141,81)"/><rect x="32" y="0" width="3" height="7" fill="rgb(147,147,78)"/><rect x="36" y="0" width="3" height="7" fill="rgb(153,153,75)"/><rect x="40" y="0" width="3" height="7" fill="rgb(159,159,72)"/><rect x="44" y="0" width="3" height="7" fill="rgb(165,165,70)"/><rect x="48" y="0" width="3" height="7" fill="rgb(171,171,67)"/><rect x="52" y="0" width="3" height="7" fill="rgb(177,177,64)"/><rect x="56" y="0" width="3" height="7" fill="rgb(183,183,62)"/><rect x="60" y="0" width="3" height="7" fill="rgb(189,189,59)"/><rect x="64" y="0" width="3" height="7" fill="rgb(195,195,56)"/><rect x="68" y="0" width="3" height="7" fill="rgb(201,201,54)"/><rect x="72" y="0" width="3" height="7" fill="rgb(207,207,51)"/></svg>
<div style="left:1674px;top:498px;width:222px;height:2px;background:#888"></div>
<div style="left:1674px;top:499px;width:1px;height:3px;background:#aaa"></div>
<div style="left:1644.5px;top:502px;width:60px;text-align:center;font-size:8px;line-height:9px;color:#ddd;font-weight:400;font-family:'Liberation Mono';white-space:nowrap;font-style:italic;">1</div>
<div style="left:1709px;top:499px;width:1px;height:3px;background:#aaa"></div>
<div style="left:1679.5px;top:502px;width:60px;text-align:center;font-size:8px;line-height:9px;color:#ddd;font-weight:400;font-family:'Liberation Mono';white-space:nowrap;font-style:italic;">1.1</div>
<div style="left:1752px;top:499px;width:1px;height:3px;background:#aaa"></div>
<div style="left:1722.5px;top:502px;width:60px;text-align:center;font-size:8px;line-height:9px;color:#ddd;font-weight:400;font-family:'Liberation Mono';white-space:nowrap;font-style:italic;">1.5</div>
<div style="left:1785px;top:499px;width:1px;height:3px;background:#aaa"></div>
<div style="left:1755.5px;top:502px;width:60px;text-align:center;font-size:8px;line-height:9px;color:#ddd;font-weight:400;font-family:'Liberation Mono';white-space:nowrap;font-style:italic;">2</div>
<div style="left:1831px;top:499px;width:1px;height:3px;background:#aaa"></div>
<div style="left:1801.5px;top:502px;width:60px;text-align:center;font-size:8px;line-height:9px;color:#ddd;font-weight:400;font-family:'Liberation Mono';white-space:nowrap;font-style:italic;">3</div>
<div style="left:1866px;top:499px;width:1px;height:3px;background:#aaa"></div>
<div style="left:1836.5px;top:502px;width:60px;text-align:center;font-size:8px;line-height:9px;color:#ddd;font-weight:400;font-family:'Liberation Mono';white-space:nowrap;font-style:italic;">4</div>
<div style="left:1643px;top:525px;font-size:10px;line-height:12px;color:#eee;font-weight:400;font-family:'Liberation Sans';white-space:nowrap;-webkit-text-stroke:0.12px;font-style:italic;">IPA</div>
<svg style="position:absolute;left:1674px;top:519px;" width="160" height="7" viewBox="0 0 160 7"><rect x="0" y="0" width="3" height="7" fill="rgb(100,100,100)"/><rect x="4" y="0" width="3" height="7" fill="rgb(105,105,97)"/><rect x="8" y="0" width="3" height="7" fill="rgb(111,111,94)"/><rect x="12" y="0" width="3" height="7" fill="rgb(117,117,91)"/><rect x="16" y="0" width="3" height="7" fill="rgb(123,123,89)"/><rect x="20" y="0" width="3" height="7" fill="rgb(129,129,86)"/><rect x="24" y="0" width="3" height="7" fill="rgb(135,135,83)"/><rect x="28" y="0" width="3" height="7" fill="rgb(141,141,81)"/><rect x="32" y="0" width="3" height="7" fill="rgb(147,147,78)"/><rect x="36" y="0" width="3" height="7" fill="rgb(153,153,75)"/><rect x="40" y="0" width="3" height="7" fill="rgb(159,159,72)"/><rect x="44" y="0" width="3" height="7" fill="rgb(165,165,70)"/><rect x="48" y="0" width="3" height="7" fill="rgb(171,171,67)"/><rect x="52" y="0" width="3" height="7" fill="rgb(177,177,64)"/><rect x="56" y="0" width="3" height="7" fill="rgb(183,183,62)"/><rect x="60" y="0" width="3" height="7" fill="rgb(189,189,59)"/><rect x="64" y="0" width="3" height="7" fill="rgb(195,195,56)"/><rect x="68" y="0" width="3" height="7" fill="rgb(201,201,54)"/><rect x="72" y="0" width="3" height="7" fill="rgb(207,207,51)"/><rect x="76" y="0" width="3" height="7" fill="rgb(213,213,48)"/><rect x="80" y="0" width="3" height="7" fill="rgb(219,219,45)"/><rect x="84" y="0" width="3" height="7" fill="rgb(225,225,43)"/><rect x="88" y="0" width="3" height="7" fill="rgb(231,231,40)"/><rect x="92" y="0" width="3" height="7" fill="rgb(237,237,37)"/><rect x="96" y="0" width="3" height="7" fill="rgb(243,243,35)"/><rect x="100" y="0" width="3" height="7" fill="rgb(249,249,32)"/><rect x="104" y="0" width="3" height="7" fill="rgb(255,254,0)"/></svg>
<div style="left:1674px;top:528px;width:222px;height:2px;background:#888"></div>
<div style="left:1674px;top:529px;width:1px;height:3px;background:#aaa"></div>
<div style="left:1644.5px;top:532px;width:60px;text-align:center;font-size:8px;line-height:9px;color:#ddd;font-weight:400;font-family:'Liberation Mono';white-space:nowrap;font-style:italic;">0</div>
<div style="left:1718px;top:529px;width:1px;height:3px;background:#aaa"></div>
<div style="left:1688.5px;top:532px;width:60px;text-align:center;font-size:8px;line-height:9px;color:#ddd;font-weight:400;font-family:'Liberation Mono';white-space:nowrap;font-style:italic;">500</div>
<div style="left:1762px;top:529px;width:1px;height:3px;background:#aaa"></div>
<div style="left:1732.5px;top:532px;width:60px;text-align:center;font-size:8px;line-height:9px;color:#ddd;font-weight:400;font-family:'Liberation Mono';white-space:nowrap;font-style:italic;">1000</div>
<div style="left:1806px;top:529px;width:1px;height:3px;background:#aaa"></div>
<div style="left:1776.5px;top:532px;width:60px;text-align:center;font-size:8px;line-height:9px;color:#ddd;font-weight:400;font-family:'Liberation Mono';white-space:nowrap;font-style:italic;">1500</div>
<div style="left:1850px;top:529px;width:1px;height:3px;background:#aaa"></div>
<div style="left:1820.5px;top:532px;width:60px;text-align:center;font-size:8px;line-height:9px;color:#ddd;font-weight:400;font-family:'Liberation Mono';white-space:nowrap;font-style:italic;">2000 mA</div>
<div style="left:1643px;top:555px;font-size:10px;line-height:12px;color:#eee;font-weight:400;font-family:'Liberation Sans';white-space:nowrap;-webkit-text-stroke:0.12px;font-style:italic;">ALC</div>
<svg style="position:absolute;left:1674px;top:549px;" width="160" height="7" viewBox="0 0 160 7"><rect x="0" y="0" width="3" height="7" fill="rgb(100,100,100)"/><rect x="4" y="0" width="3" height="7" fill="rgb(105,105,97)"/><rect x="8" y="0" width="3" height="7" fill="rgb(111,111,94)"/><rect x="12" y="0" width="3" height="7" fill="rgb(117,117,91)"/><rect x="16" y="0" width="3" height="7" fill="rgb(123,123,89)"/><rect x="20" y="0" width="3" height="7" fill="rgb(129,129,86)"/><rect x="24" y="0" width="3" height="7" fill="rgb(135,135,83)"/><rect x="28" y="0" width="3" height="7" fill="rgb(141,141,81)"/><rect x="32" y="0" width="3" height="7" fill="rgb(147,147,78)"/><rect x="36" y="0" width="3" height="7" fill="rgb(153,153,75)"/><rect x="40" y="0" width="3" height="7" fill="rgb(159,159,72)"/><rect x="44" y="0" width="3" height="7" fill="rgb(165,165,70)"/><rect x="48" y="0" width="3" height="7" fill="rgb(171,171,67)"/><rect x="52" y="0" width="3" height="7" fill="rgb(177,177,64)"/><rect x="56" y="0" width="3" height="7" fill="rgb(183,183,62)"/><rect x="60" y="0" width="3" height="7" fill="rgb(189,189,59)"/><rect x="64" y="0" width="3" height="7" fill="rgb(195,195,56)"/><rect x="68" y="0" width="3" height="7" fill="rgb(201,201,54)"/><rect x="72" y="0" width="3" height="7" fill="rgb(207,207,51)"/><rect x="76" y="0" width="3" height="7" fill="rgb(213,213,48)"/><rect x="80" y="0" width="3" height="7" fill="rgb(219,219,45)"/><rect x="84" y="0" width="3" height="7" fill="rgb(225,225,43)"/><rect x="88" y="0" width="3" height="7" fill="rgb(231,231,40)"/><rect x="92" y="0" width="3" height="7" fill="rgb(237,237,37)"/><rect x="96" y="0" width="3" height="7" fill="rgb(243,243,35)"/><rect x="100" y="0" width="3" height="7" fill="rgb(249,249,32)"/><rect x="104" y="0" width="3" height="7" fill="rgb(255,254,0)"/><rect x="108" y="0" width="3" height="7" fill="rgb(255,245,0)"/><rect x="112" y="0" width="3" height="7" fill="rgb(255,236,0)"/><rect x="116" y="0" width="3" height="7" fill="rgb(255,227,0)"/><rect x="120" y="0" width="3" height="7" fill="rgb(255,218,0)"/><rect x="124" y="0" width="3" height="7" fill="rgb(255,209,0)"/><rect x="128" y="0" width="3" height="7" fill="rgb(255,200,0)"/><rect x="132" y="0" width="3" height="7" fill="rgb(255,191,0)"/><rect x="136" y="0" width="3" height="7" fill="rgb(255,182,0)"/><rect x="140" y="0" width="3" height="7" fill="rgb(255,173,0)"/><rect x="144" y="0" width="3" height="7" fill="rgb(255,165,0)"/></svg>
<div style="left:1674px;top:558px;width:222px;height:2px;background:#888"></div>
<div style="left:1674px;top:559px;width:1px;height:3px;background:#aaa"></div>
<div style="left:1644.5px;top:562px;width:60px;text-align:center;font-size:8px;line-height:9px;color:#ddd;font-weight:400;font-family:'Liberation Mono';white-space:nowrap;font-style:italic;">0</div>
<div style="left:1712px;top:559px;width:1px;height:3px;background:#aaa"></div>
<div style="left:1682.5px;top:562px;width:60px;text-align:center;font-size:8px;line-height:9px;color:#ddd;font-weight:400;font-family:'Liberation Mono';white-space:nowrap;font-style:italic;">25</div>
<div style="left:1750px;top:559px;width:1px;height:3px;background:#aaa"></div>
<div style="left:1720.5px;top:562px;width:60px;text-align:center;font-size:8px;line-height:9px;color:#ddd;font-weight:400;font-family:'Liberation Mono';white-space:nowrap;font-style:italic;">50</div>
<div style="left:1788px;top:559px;width:1px;height:3px;background:#aaa"></div>
<div style="left:1758.5px;top:562px;width:60px;text-align:center;font-size:8px;line-height:9px;color:#ddd;font-weight:400;font-family:'Liberation Mono';white-space:nowrap;font-style:italic;">75</div>
<div style="left:1826px;top:559px;width:1px;height:3px;background:#aaa"></div>
<div style="left:1796.5px;top:562px;width:60px;text-align:center;font-size:8px;line-height:9px;color:#ddd;font-weight:400;font-family:'Liberation Mono';white-space:nowrap;font-style:italic;">100</div>
<div style="left:1864px;top:559px;width:1px;height:3px;background:#aaa"></div>
<div style="left:1834.5px;top:562px;width:60px;text-align:center;font-size:8px;line-height:9px;color:#ddd;font-weight:400;font-family:'Liberation Mono';white-space:nowrap;font-style:italic;">125</div>
<div style="left:1788px;top:557px;width:77px;height:3px;background:#e00000"></div>
<div style="left:1826px;top:545px;width:1px;height:14px;background:#ddd"></div>
<div style="left:1636px;top:580px;width:267px;height:18px;background:linear-gradient(90deg,#ffffff 0%,#f2f2f2 40%,#e2e2e2 100%)"></div>
<div style="left:1638px;top:585px;font-size:11px;line-height:13px;color:#1e7ad8;font-weight:700;font-family:'Liberation Sans';white-space:nowrap;-webkit-text-stroke:0.12px;">Microphone: Gain 96</div>
<svg style="position:absolute;left:1889px;top:586.0px;" width="7" height="5" viewBox="0 0 7 5"><path d="M0 4 L3.5 0 L7 4z" fill="#111"/></svg>
<div style="left:1640px;top:601px;width:79px;height:24px;background:#e1e1e1;border:1px solid #adadad;box-sizing:border-box;"></div>
<div style="left:1640.0px;top:607px;width:79px;text-align:center;font-size:11px;line-height:13px;color:#000;font-weight:400;font-family:'Liberation Sans';white-space:nowrap;-webkit-text-stroke:0.12px;">Normal</div>
<div style="left:1724px;top:601px;width:79px;height:24px;background:#e1e1e1;border:1px solid #adadad;box-sizing:border-box;"></div>
<div style="left:1724.0px;top:607px;width:79px;text-align:center;font-size:11px;line-height:13px;color:#000;font-weight:400;font-family:'Liberation Sans';white-space:nowrap;-webkit-text-stroke:0.12px;">DX</div>
<div style="left:1808px;top:601px;width:79px;height:24px;background:#cce4f7;border:1px solid #005499;box-sizing:border-box;"></div>
<div style="left:1808.0px;top:607px;width:79px;text-align:center;font-size:11px;line-height:13px;color:#000;font-weight:400;font-family:'Liberation Sans';white-space:nowrap;-webkit-text-stroke:0.12px;">Other</div>
<div style="left:1640px;top:637px;width:34px;height:24px;background:#e1e1e1;border:1px solid #adadad;box-sizing:border-box;"></div>
<svg style="position:absolute;left:1645px;top:638px;" width="22" height="20" viewBox="0 0 22 20"><defs><radialGradient id="gmic" cx="0.4" cy="0.35" r="0.7"><stop offset="0" stop-color="#888"/><stop offset="1" stop-color="#3a3a3a"/></radialGradient></defs><path d="M13 8 L15.5 10.5 L7.5 18.5 L5 16z" fill="#cfcfcf" stroke="#6a6a6a" stroke-width="0.7"/><path d="M5.5 17.5 L3.5 19.5" stroke="#666" stroke-width="1"/><circle cx="16.5" cy="6.5" r="3.7" fill="url(#gmic)"/></svg>
<div style="left:1679px;top:638px;width:211px;height:24px;background:#cccccc;border:1px solid #c4c4c4;box-sizing:border-box"></div>
<div style="left:1734.0px;top:643px;width:80px;text-align:center;font-size:11px;line-height:13px;color:#8a8a8a;font-weight:400;font-family:'Liberation Sans';white-space:nowrap;-webkit-text-stroke:0.12px;">Tune</div>
<svg style="position:absolute;left:1873px;top:647px;" width="9" height="6" viewBox="0 0 9 6"><path d="M0 0h9l-4.5 5z" fill="#909090"/></svg>
<div style="left:1640px;top:667px;width:34px;height:24px;background:#e1e1e1;border:1px solid #adadad;box-sizing:border-box;"></div>
<div style="left:1640.0px;top:672px;width:34px;text-align:center;font-size:11px;line-height:13px;color:#000;font-weight:400;font-family:'Liberation Sans';white-space:nowrap;-webkit-text-stroke:0.12px;">Proc</div>
<div style="left:1679px;top:667px;width:34px;height:24px;background:#e1e1e1;border:1px solid #adadad;box-sizing:border-box;"></div>
<div style="left:1679.0px;top:672px;width:34px;text-align:center;font-size:11px;line-height:13px;color:#000;font-weight:400;font-family:'Liberation Sans';white-space:nowrap;-webkit-text-stroke:0.12px;">VOX</div>
<div style="left:1718px;top:667px;width:96px;height:24px;background:#e1e1e1;border:1px solid #adadad;box-sizing:border-box;"></div>
<div style="left:1727.0px;top:672px;width:60px;text-align:center;font-size:11px;line-height:13px;color:#000;font-weight:400;font-family:'Liberation Sans';white-space:nowrap;-webkit-text-stroke:0.12px;">2.8kHz</div>
<svg style="position:absolute;left:1799px;top:677px;" width="10" height="6" viewBox="0 0 10 6"><path d="M0 0h10l-5 5.5z" fill="#000"/></svg>
<div style="left:1821px;top:667px;width:70px;height:24px;background:#e1e1e1;border:1px solid #adadad;box-sizing:border-box;"></div>
<svg style="position:absolute;left:1826px;top:671px;" width="16" height="16" viewBox="0 0 16 16"><circle cx="8" cy="8" r="6.5" fill="#f4f4f4" stroke="#555" stroke-width="1"/><circle cx="8" cy="8" r="3" fill="#e00000"/></svg>
<div style="left:1848px;top:672px;font-size:11px;line-height:13px;color:#000;font-weight:400;font-family:'Liberation Sans';white-space:nowrap;-webkit-text-stroke:0.12px;">Record</div>
<div style="left:1645px;top:712px;font-size:11px;line-height:13px;color:#000;font-weight:400;font-family:'Liberation Sans';white-space:nowrap;-webkit-text-stroke:0.12px;">Gain</div>
<div style="left:1683px;top:717px;width:170px;height:4px;background:#e88080;border-radius:2px"></div>
<div style="left:1840px;top:710px;width:14px;height:18px;background:linear-gradient(90deg,#e6e6e6,#dadada);border:1px solid #b0b0b0;border-radius:3px;box-sizing:border-box"><div style="left:4px;top:4px;width:1px;height:8px;background:#aaa"></div><div style="left:6px;top:4px;width:1px;height:8px;background:#aaa"></div><div style="left:8px;top:4px;width:1px;height:8px;background:#aaa"></div></div>
<div style="left:1590px;top:712px;width:300px;text-align:right;font-size:11px;line-height:13px;color:#000;font-weight:400;font-family:'Liberation Sans';white-space:nowrap;-webkit-text-stroke:0.12px;">96</div>
<div style="left:1645px;top:742px;font-size:11px;line-height:13px;color:#000;font-weight:400;font-family:'Liberation Sans';white-space:nowrap;-webkit-text-stroke:0.12px;">Proc</div>
<div style="left:1683px;top:747px;width:171px;height:4px;background:#e7e7e7;border:1px solid #c4c4c4;border-radius:2px;box-sizing:border-box"></div>
<div style="left:1676px;top:740px;width:14px;height:18px;background:linear-gradient(90deg,#e6e6e6,#dadada);border:1px solid #b0b0b0;border-radius:3px;box-sizing:border-box"><div style="left:4px;top:4px;width:1px;height:8px;background:#aaa"></div><div style="left:6px;top:4px;width:1px;height:8px;background:#aaa"></div><div style="left:8px;top:4px;width:1px;height:8px;background:#aaa"></div></div>
<div style="left:1590px;top:743px;width:300px;text-align:right;font-size:11px;line-height:13px;color:#000;font-weight:400;font-family:'Liberation Sans';white-space:nowrap;-webkit-text-stroke:0.12px;">0</div>
<div style="left:1645px;top:769px;width:240px;height:1px;background:#a0a0a0"></div>
<div style="left:1645px;top:781px;font-size:11px;line-height:13px;color:#000;font-weight:400;font-family:'Liberation Sans';white-space:nowrap;-webkit-text-stroke:0.12px;">VOX Gain</div>
<div style="left:1712px;top:786px;width:143px;height:4px;background:#e7e7e7;border:1px solid #c4c4c4;border-radius:2px;box-sizing:border-box"></div>
<div style="left:1712px;top:779px;width:14px;height:18px;background:linear-gradient(90deg,#e6e6e6,#dadada);border:1px solid #b0b0b0;border-radius:3px;box-sizing:border-box"><div style="left:4px;top:4px;width:1px;height:8px;background:#aaa"></div><div style="left:6px;top:4px;width:1px;height:8px;background:#aaa"></div><div style="left:8px;top:4px;width:1px;height:8px;background:#aaa"></div></div>
<div style="left:1590px;top:782px;width:300px;text-align:right;font-size:11px;line-height:13px;color:#000;font-weight:400;font-family:'Liberation Sans';white-space:nowrap;-webkit-text-stroke:0.12px;">4</div>
<div style="left:1645px;top:810px;font-size:11px;line-height:13px;color:#000;font-weight:400;font-family:'Liberation Sans';white-space:nowrap;-webkit-text-stroke:0.12px;">VOX Hang</div>
<div style="left:1712px;top:815px;width:143px;height:4px;background:#e7e7e7;border:1px solid #c4c4c4;border-radius:2px;box-sizing:border-box"></div>
<div style="left:1760px;top:808px;width:14px;height:18px;background:linear-gradient(90deg,#e6e6e6,#dadada);border:1px solid #b0b0b0;border-radius:3px;box-sizing:border-box"><div style="left:4px;top:4px;width:1px;height:8px;background:#aaa"></div><div style="left:6px;top:4px;width:1px;height:8px;background:#aaa"></div><div style="left:8px;top:4px;width:1px;height:8px;background:#aaa"></div></div>
<div style="left:1712px;top:815px;width:113px;height:4px;background:#c6c6c6;border-radius:2px"></div>
<div style="left:1760px;top:808px;width:14px;height:18px;background:linear-gradient(90deg,#e6e6e6,#dadada);border:1px solid #b0b0b0;border-radius:3px;box-sizing:border-box"><div style="left:4px;top:4px;width:1px;height:8px;background:#aaa"></div><div style="left:6px;top:4px;width:1px;height:8px;background:#aaa"></div><div style="left:8px;top:4px;width:1px;height:8px;background:#aaa"></div></div>
<div style="left:1590px;top:811px;width:300px;text-align:right;font-size:11px;line-height:13px;color:#000;font-weight:400;font-family:'Liberation Sans';white-space:nowrap;-webkit-text-stroke:0.12px;">400</div>
<div style="left:1636px;top:837px;width:267px;height:18px;background:linear-gradient(90deg,#ffffff 0%,#f2f2f2 40%,#e2e2e2 100%)"></div>
<div style="left:1638px;top:842px;font-size:11px;line-height:13px;color:#1e7ad8;font-weight:700;font-family:'Liberation Sans';white-space:nowrap;-webkit-text-stroke:0.12px;">CTCSS</div>
<svg style="position:absolute;left:1889px;top:843.0px;" width="7" height="5" viewBox="0 0 7 5"><path d="M0 0 L3.5 4 L7 0z" fill="#111"/></svg>
<div style="left:1636px;top:855px;width:267px;height:18px;background:linear-gradient(90deg,#ffffff 0%,#f2f2f2 40%,#e2e2e2 100%)"></div>
<div style="left:1638px;top:860px;font-size:11px;line-height:13px;color:#1e7ad8;font-weight:700;font-family:'Liberation Sans';white-space:nowrap;-webkit-text-stroke:0.12px;">Spectrum</div>
<svg style="position:absolute;left:1889px;top:861.0px;" width="7" height="5" viewBox="0 0 7 5"><path d="M0 4 L3.5 0 L7 4z" fill="#111"/></svg>
<div style="left:1636px;top:873px;width:267px;height:150px;background:#000"></div>
<div style="left:1639px;top:875px;width:18px;height:40px;background:#000;border:1px solid #4a4a4a;box-sizing:border-box"><div style="left:0;top:0;width:16px;height:10px;background:linear-gradient(#3c3c3c,#2c2c2c)"></div><div style="left:0;top:10px;width:16px;height:9px;background:radial-gradient(ellipse 9px 8px at 50% 100%,rgba(190,190,20,0.9),rgba(120,120,0,0.5) 60%,rgba(0,0,0,0) 100%)"></div><div style="left:0;top:19px;width:16px;height:1px;background:#4a4a4a"></div><div style="left:0;top:20px;width:16px;height:9px;background:linear-gradient(#3c3c3c,#2c2c2c)"></div></div>
<svg style="position:absolute;left:1641px;top:878px;" width="14" height="34" viewBox="0 0 14 34"><circle cx="7" cy="7.5" r="2.8" fill="#fff"/><circle cx="7" cy="25.5" r="3.6" fill="none" stroke="#fff" stroke-width="1"/></svg>
<svg style="position:absolute;left:1690px;top:881px;" width="183" height="129" viewBox="0 0 183 129"><line x1="0.0" y1="0" x2="0.0" y2="129" stroke="#3a3a3a"/><line x1="26.1" y1="0" x2="26.1" y2="129" stroke="#3a3a3a"/><line x1="52.3" y1="0" x2="52.3" y2="129" stroke="#3a3a3a"/><line x1="78.4" y1="0" x2="78.4" y2="129" stroke="#3a3a3a"/><line x1="104.6" y1="0" x2="104.6" y2="129" stroke="#3a3a3a"/><line x1="130.7" y1="0" x2="130.7" y2="129" stroke="#3a3a3a"/><line x1="156.9" y1="0" x2="156.9" y2="129" stroke="#3a3a3a"/><line x1="0" y1="0.0" x2="183" y2="0.0" stroke="#3a3a3a"/><line x1="0" y1="43.0" x2="183" y2="43.0" stroke="#3a3a3a"/><line x1="0" y1="86.0" x2="183" y2="86.0" stroke="#3a3a3a"/><rect x="0.5" y="0.5" width="182" height="128" fill="none" stroke="#a0a0a0"/><polyline points="82,129 86,18 88,16 90,18 92,41 94,96 96,129" fill="none" stroke="#d0d0d0" stroke-width="1.2"/></svg>
<div style="left:1655px;top:879px;width:30px;text-align:right;font-size:8px;line-height:9px;color:#ccc;font-weight:400;font-family:'Liberation Sans';white-space:nowrap;-webkit-text-stroke:0.12px;">0</div>
<div style="left:1878px;top:879px;font-size:8px;line-height:9px;color:#ccc;font-weight:400;font-family:'Liberation Sans';white-space:nowrap;-webkit-text-stroke:0.12px;">0</div>
<div style="left:1655px;top:921px;width:30px;text-align:right;font-size:8px;line-height:9px;color:#ccc;font-weight:400;font-family:'Liberation Sans';white-space:nowrap;-webkit-text-stroke:0.12px;">-20</div>
<div style="left:1878px;top:921px;font-size:8px;line-height:9px;color:#ccc;font-weight:400;font-family:'Liberation Sans';white-space:nowrap;-webkit-text-stroke:0.12px;">-20</div>
<div style="left:1655px;top:964px;width:30px;text-align:right;font-size:8px;line-height:9px;color:#ccc;font-weight:400;font-family:'Liberation Sans';white-space:nowrap;-webkit-text-stroke:0.12px;">-40</div>
<div style="left:1878px;top:964px;font-size:8px;line-height:9px;color:#ccc;font-weight:400;font-family:'Liberation Sans';white-space:nowrap;-webkit-text-stroke:0.12px;">-40</div>
<div style="left:1655px;top:1006px;width:30px;text-align:right;font-size:8px;line-height:9px;color:#ccc;font-weight:400;font-family:'Liberation Sans';white-space:nowrap;-webkit-text-stroke:0.12px;">-60</div>
<div style="left:1878px;top:1006px;font-size:8px;line-height:9px;color:#ccc;font-weight:400;font-family:'Liberation Sans';white-space:nowrap;-webkit-text-stroke:0.12px;">-60</div>
<div style="left:1675.0px;top:1016px;width:30px;text-align:center;font-size:8px;line-height:9px;color:#ccc;font-weight:400;font-family:'Liberation Sans';white-space:nowrap;-webkit-text-stroke:0.12px;">50</div>
<div style="left:1701.142857142857px;top:1016px;width:30px;text-align:center;font-size:8px;line-height:9px;color:#ccc;font-weight:400;font-family:'Liberation Sans';white-space:nowrap;-webkit-text-stroke:0.12px;">100</div>
<div style="left:1727.2857142857142px;top:1016px;width:30px;text-align:center;font-size:8px;line-height:9px;color:#ccc;font-weight:400;font-family:'Liberation Sans';white-space:nowrap;-webkit-text-stroke:0.12px;">200</div>
<div style="left:1753.4285714285713px;top:1016px;width:30px;text-align:center;font-size:8px;line-height:9px;color:#ccc;font-weight:400;font-family:'Liberation Sans';white-space:nowrap;-webkit-text-stroke:0.12px;">400</div>
<div style="left:1779.5714285714287px;top:1016px;width:30px;text-align:center;font-size:8px;line-height:9px;color:#ccc;font-weight:400;font-family:'Liberation Sans';white-space:nowrap;-webkit-text-stroke:0.12px;">800</div>
<div style="left:1805.7142857142858px;top:1016px;width:30px;text-align:center;font-size:8px;line-height:9px;color:#ccc;font-weight:400;font-family:'Liberation Sans';white-space:nowrap;-webkit-text-stroke:0.12px;">1k6</div>
<div style="left:1831.857142857143px;top:1016px;width:30px;text-align:center;font-size:8px;line-height:9px;color:#ccc;font-weight:400;font-family:'Liberation Sans';white-space:nowrap;-webkit-text-stroke:0.12px;">3k2</div>
<div style="left:0px;top:1023px;width:1920px;height:25px;background:#f0f0f0"></div>
<div style="left:9px;top:1030px;font-size:11px;line-height:13px;color:#6d6d6d;font-weight:400;font-family:'Liberation Sans';white-space:nowrap;-webkit-text-stroke:0.12px;">Hermes-Lite, BW = 48 kHz</div>
<div style="left:1457px;top:1030px;font-size:11px;line-height:13px;color:#000;font-weight:400;font-family:'Liberation Sans';white-space:nowrap;-webkit-text-stroke:0.12px;">CPU: 2.2%</div>
<div style="left:1522px;top:1030px;width:70px;height:13px;background:#e6e6e6;border:1px solid #bcbcbc;box-sizing:border-box"></div>
<div style="left:1606px;top:1030px;font-size:11px;line-height:13px;color:#000;font-weight:400;font-family:'Liberation Sans';white-space:nowrap;-webkit-text-stroke:0.12px;">GPU: 19.3%</div>
<div style="left:1678px;top:1030px;width:70px;height:13px;background:#e6e6e6;border:1px solid #bcbcbc;box-sizing:border-box"></div>
<div style="left:1680px;top:1033px;width:8px;height:8px;background:#06b025"></div>
<div style="left:1761px;top:1030px;font-size:11px;line-height:13px;color:#000;font-weight:400;font-family:'Liberation Sans';white-space:nowrap;-webkit-text-stroke:0.12px;">Audio: 114ms</div>
<div style="left:1845px;top:1030px;width:70px;height:13px;background:#e6e6e6;border:1px solid #bcbcbc;box-sizing:border-box"></div>
<div style="left:1847px;top:1032px;width:26px;height:9px;background:#06b025"></div>

</body></html>
